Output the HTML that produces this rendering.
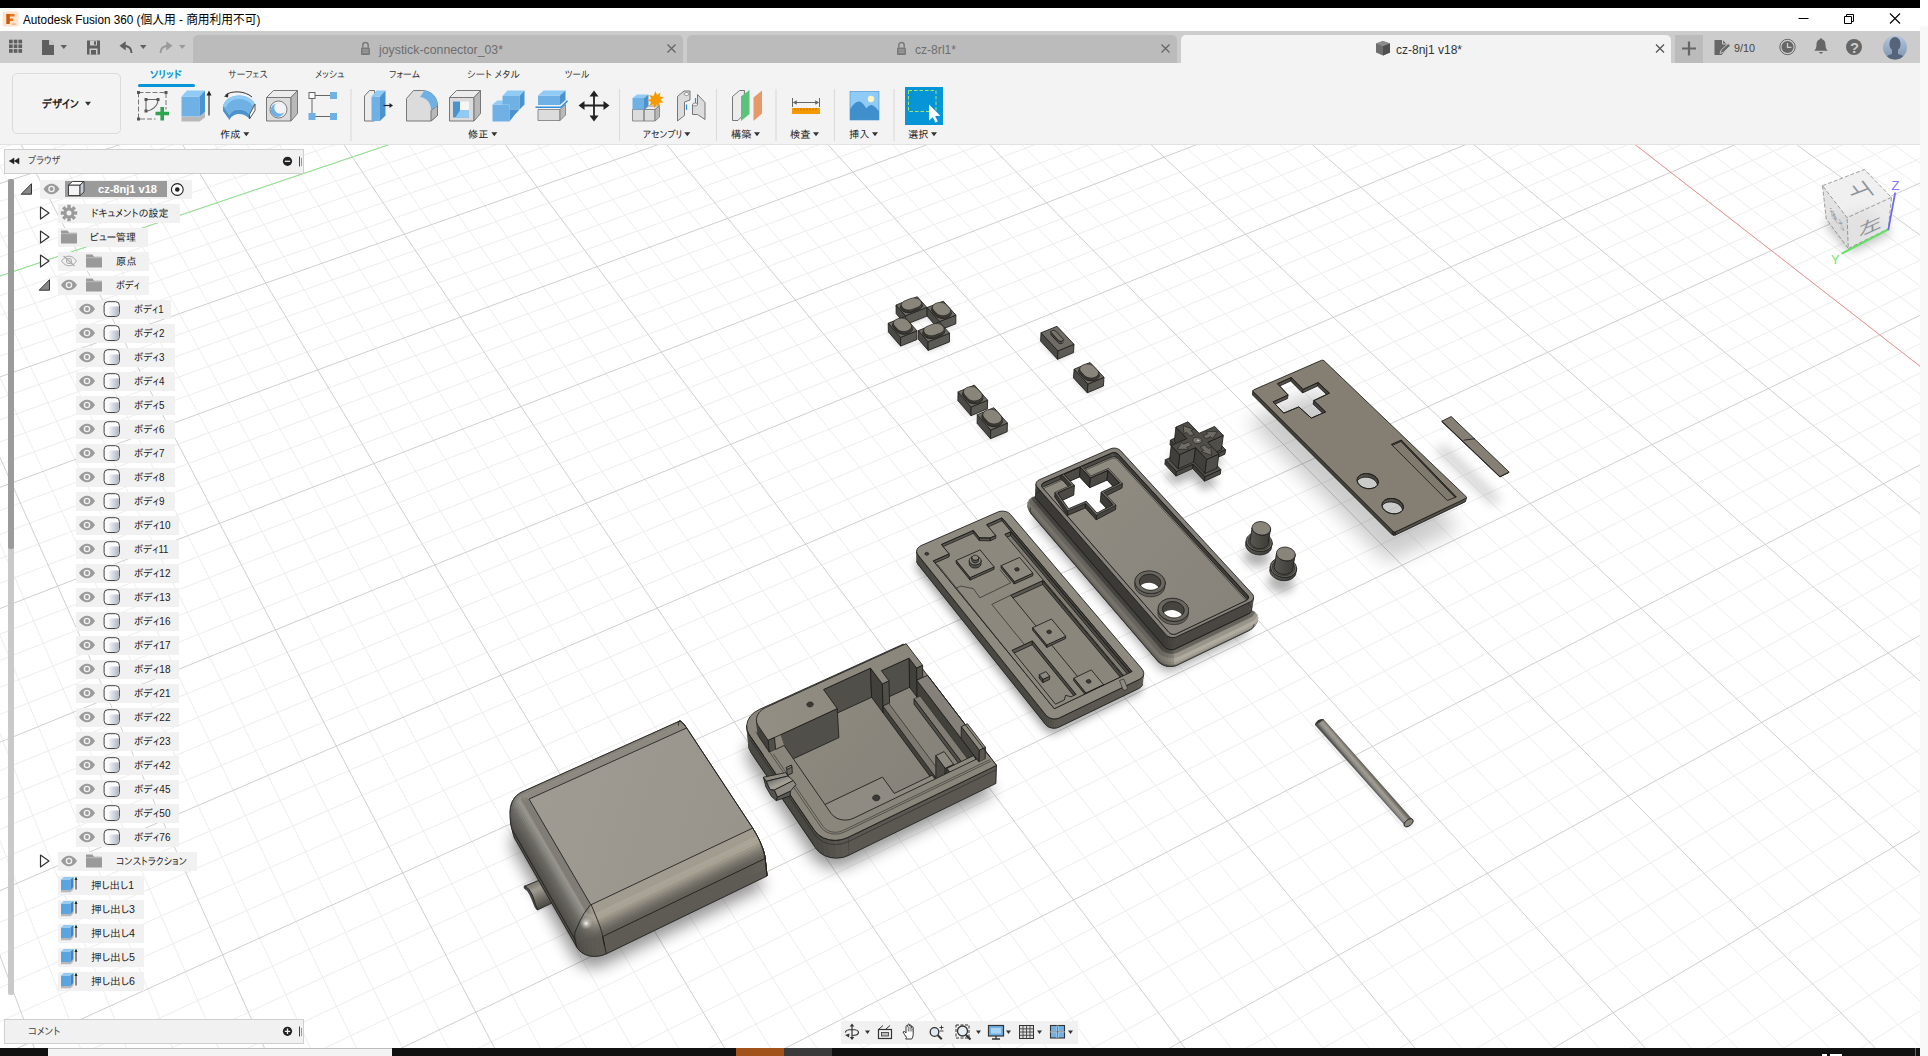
<!DOCTYPE html>
<html lang="ja"><head><meta charset="utf-8"><title>Autodesk Fusion 360</title>
<style>
html,body{margin:0;padding:0;background:#fff;}
body{width:1928px;height:1056px;position:relative;overflow:hidden;font-family:"Liberation Sans","IPAPGothic","IPAGothic","Noto Sans CJK JP",sans-serif;}
.b{position:absolute;display:block;}
.t{position:absolute;white-space:pre;transform-origin:0 50%;}
</style></head>
<body>
<svg class="b" style="left:0;top:145px" width="1920" height="903" viewBox="0 145 1920 903"><rect x="0" y="145" width="1920" height="903" fill="#fff"/><path d="M-332.2 218.9L1316.5 -298.2M-326.7 234.8L1329.7 -289.0M-321.2 250.9L1343.2 -279.6M-315.5 267.3L1356.8 -270.1M-304.0 300.7L1384.4 -250.9M-298.1 317.8L1398.5 -241.1M-292.1 335.1L1412.7 -231.2M-286.0 352.7L1427.1 -221.1M-273.6 388.8L1456.3 -200.7M-267.2 407.2L1471.2 -190.4M-260.7 426.0L1486.3 -179.9M-254.2 445.0L1501.5 -169.2M-240.7 484.0L1532.5 -147.6M-233.8 503.9L1548.3 -136.6M-226.8 524.2L1564.3 -125.5M-219.7 544.8L1580.5 -114.2M-205.1 587.1L1613.5 -91.2M-197.6 608.8L1630.2 -79.5M-190.0 630.9L1647.2 -67.7M-182.3 653.3L1664.4 -55.7M-166.4 699.3L1699.5 -31.2M-158.2 723.0L1717.4 -18.7M-149.9 747.0L1735.5 -6.1M-141.5 771.5L1753.9 6.7M-124.1 821.8L1791.3 32.7M-115.2 847.7L1810.3 46.0M-106.1 874.0L1829.7 59.5M-96.8 900.8L1849.3 73.2M-77.8 956.1L1889.2 101.0M-67.9 984.5L1909.6 115.3M-57.9 1013.4L1930.3 129.7M-47.8 1043.0L1951.3 144.3M-26.7 1103.8L1994.1 174.1M-15.9 1135.2L2016.0 189.4M-4.9 1167.2L2038.1 204.8M6.4 1199.9L2060.6 220.5M29.7 1267.3L2106.6 252.6M41.7 1302.1L2130.1 269.0M54.0 1337.6L2154.0 285.6M66.5 1374.0L2178.2 302.5M92.4 1449.1L2227.7 337.0M105.8 1487.9L2253.0 354.6M119.5 1527.6L2278.7 372.5M133.6 1568.2L2304.8 390.7M162.6 1652.4L2358.2 428.0M177.7 1696.0L2385.6 447.1M193.1 1740.7L2413.4 466.4M208.9 1786.5L2441.6 486.1M241.7 1881.5L2499.5 526.5M258.7 1930.8L2529.2 547.1M276.2 1981.4L2559.3 568.2M294.1 2033.3L2590.0 589.5M331.4 2141.4L2652.9 633.4M-335.6 233.9L314.0 2137.0M-305.3 224.4L364.9 2104.1M-245.7 205.6L464.2 2039.8M-216.2 196.3L512.7 2008.5M-187.0 187.0L560.4 1977.6M-158.1 177.9L607.4 1947.2M-100.9 159.9L699.3 1887.7M-72.6 150.9L744.2 1858.6M-44.6 142.1L788.4 1830.0M-16.9 133.3L832.0 1801.8M38.0 116.0L917.2 1746.7M65.1 107.5L958.9 1719.7M92.0 99.0L1000.0 1693.1M118.6 90.6L1040.5 1666.9M171.3 73.9L1119.8 1615.5M197.3 65.7L1158.6 1590.4M223.1 57.6L1196.9 1565.6M248.7 49.5L1234.7 1541.2M299.3 33.5L1308.7 1493.3M324.3 25.6L1344.9 1469.9M349.1 17.8L1380.6 1446.8M373.8 10.0L1415.9 1423.9M422.4 -5.3L1485.1 1379.2M446.5 -12.9L1519.0 1357.2M470.3 -20.5L1552.4 1335.6M494.0 -28.0L1585.5 1314.2M540.9 -42.7L1650.2 1272.3M564.0 -50.0L1682.0 1251.7M587.0 -57.3L1713.4 1231.4M609.8 -64.5L1744.4 1211.3M654.9 -78.7L1805.2 1172.0M677.2 -85.8L1835.1 1152.7M699.3 -92.8L1864.6 1133.6M721.3 -99.7L1893.7 1114.7M764.8 -113.4L1951.0 1077.7M786.3 -120.2L1979.1 1059.5M807.6 -126.9L2006.8 1041.5M828.8 -133.6L2034.3 1023.8M870.7 -146.9L2088.2 988.9M891.4 -153.4L2114.7 971.7M912.0 -159.9L2140.9 954.8M932.4 -166.4L2166.8 938.0M972.9 -179.1L2217.7 905.1M992.9 -185.4L2242.7 888.9M1012.8 -191.7L2267.5 872.9M1032.5 -197.9L2291.9 857.0M1071.5 -210.3L2340.1 825.9M1090.9 -216.4L2363.8 810.5M1110.1 -222.4L2387.2 795.4M1129.1 -228.4L2410.3 780.4M1166.9 -240.3L2455.9 750.9M1185.5 -246.2L2478.4 736.4M1204.1 -252.1L2500.5 722.0M1222.5 -257.9L2522.5 707.8M1259.0 -269.4L2565.7 679.8M1277.0 -275.1L2587.0 666.1M1295.0 -280.8L2608.1 652.4M1312.8 -286.4L2628.9 638.9" stroke="#ebebeb" stroke-width="0.9" fill="none"/><path d="M-309.8 283.9L1370.5 -260.6M-279.8 370.6L1441.6 -211.0M-247.5 464.3L1516.9 -158.5M-212.5 565.8L1596.9 -102.8M-174.4 676.1L1681.9 -43.5M-132.9 796.4L1772.4 19.6M-87.4 928.2L1869.1 87.0M-37.4 1073.1L1972.5 159.1M17.9 1233.2L2083.5 236.4M79.3 1411.1L2202.7 319.6M147.9 1609.8L2331.3 409.2M225.1 1833.4L2470.3 506.1M312.5 2086.6L2621.2 611.3M-275.4 214.9L414.9 2071.7M-129.3 168.8L653.7 1917.2M10.7 124.6L874.9 1774.0M145.1 82.2L1080.4 1641.0M274.1 41.5L1271.9 1517.1M398.2 2.3L1450.7 1401.4M517.5 -35.4L1618.1 1293.1M632.4 -71.6L1775.0 1191.5M743.1 -106.6L1922.5 1096.1M849.8 -140.3L2061.4 1006.2M952.7 -172.8L2192.4 921.4M1052.1 -204.1L2316.1 841.4M1148.1 -234.4L2433.3 765.6M1240.8 -263.7L2544.2 693.7M1330.5 -292.0L2649.5 625.6" stroke="#cccccc" stroke-width="0.95" fill="none"/><path d="M-279.8 370.6L1257.9 -148.9" stroke="#88e888" stroke-width="0.95"/><path d="M1257.9 -148.9L2433.3 765.6" stroke="#f49494" stroke-width="0.95"/><defs><filter id="bl2" x="-30%" y="-30%" width="160%" height="160%"><feGaussianBlur stdDeviation="2"/></filter><filter id="bl3" x="-30%" y="-30%" width="160%" height="160%"><feGaussianBlur stdDeviation="3"/></filter><filter id="bl4" x="-30%" y="-30%" width="160%" height="160%"><feGaussianBlur stdDeviation="4"/></filter><filter id="bl5" x="-30%" y="-30%" width="160%" height="160%"><feGaussianBlur stdDeviation="5"/></filter><filter id="bl6" x="-30%" y="-30%" width="160%" height="160%"><feGaussianBlur stdDeviation="6"/></filter><filter id="bl7" x="-30%" y="-30%" width="160%" height="160%"><feGaussianBlur stdDeviation="7"/></filter><filter id="bl8" x="-30%" y="-30%" width="160%" height="160%"><feGaussianBlur stdDeviation="8"/></filter><filter id="bl9" x="-30%" y="-30%" width="160%" height="160%"><feGaussianBlur stdDeviation="9"/></filter><filter id="bl10" x="-30%" y="-30%" width="160%" height="160%"><feGaussianBlur stdDeviation="10"/></filter><filter id="bl11" x="-30%" y="-30%" width="160%" height="160%"><feGaussianBlur stdDeviation="11"/></filter><filter id="bl12" x="-30%" y="-30%" width="160%" height="160%"><feGaussianBlur stdDeviation="12"/></filter><filter id="bl13" x="-30%" y="-30%" width="160%" height="160%"><feGaussianBlur stdDeviation="13"/></filter></defs><path d="M896.2 313.7L917.4 305.4L926.9 316.1L905.7 324.5ZM927.2 316.2L943.3 309.8L955.8 323.8L939.6 330.2ZM888.4 331.9L904.8 325.5L917.0 339.5L900.6 346.1ZM918.4 339.3L939.6 330.8L949.5 341.9L928.2 350.4ZM957.9 400.6L974.3 393.8L987.4 408.8L971.0 415.7ZM977.1 423.3L993.7 416.4L1007.2 431.7L990.5 438.7ZM1073.5 377.9L1089.5 371.2L1103.4 386.0L1087.3 392.8ZM1040.6 341.1L1056.6 334.6L1073.5 352.6L1057.5 359.3Z" fill="#000" opacity="0.25" filter="url(#bl3)"/><path d="M1247.8 420.6L1317.7 389.8L1459.5 527.6L1387.5 562.3Z" fill="#000" opacity="0.2" filter="url(#bl10)"/><path d="M1435.1 449.6L1444.4 444.8L1501.3 500.2L1492.3 504.8Z" fill="#000" opacity="0.2" filter="url(#bl6)"/><path d="M905.7 324.5L896.2 313.7L896.0 305.0L905.5 315.8Z" fill="#4a4945" stroke="#1c1c1a" stroke-width="0.85" stroke-linejoin="round"/><path d="M926.9 316.1L905.7 324.5L905.5 315.8L926.8 307.4Z" fill="#5c5a54" stroke="#1c1c1a" stroke-width="0.85" stroke-linejoin="round"/><path d="M896.0 305.0L917.3 296.7L926.8 307.4L905.5 315.8Z" fill="#6f6c65" fill-rule="evenodd" stroke="#1c1c1a" stroke-width="0.85" stroke-linejoin="round"/><path d="M922.3 305.7L921.7 307.3L921.7 306.6L922.3 305.1Z" fill="#474641" stroke="#474641" stroke-width="0.6" stroke-linejoin="round"/><path d="M922.3 305.7L921.7 307.3M921.7 306.6L922.3 305.1" stroke="#1c1c1a" stroke-width="0.5" fill="none"/><path d="M900.7 308.3L900.6 306.7L900.6 306.0L900.7 307.6Z" fill="#3c3b37" stroke="#3c3b37" stroke-width="0.6" stroke-linejoin="round"/><path d="M900.7 308.3L900.6 306.7M900.6 306.0L900.7 307.6" stroke="#1c1c1a" stroke-width="0.5" fill="none"/><path d="M921.7 307.3L920.4 308.7L920.4 308.0L921.7 306.6Z" fill="#45443f" stroke="#45443f" stroke-width="0.6" stroke-linejoin="round"/><path d="M921.7 307.3L920.4 308.7M920.4 308.0L921.7 306.6" stroke="#1c1c1a" stroke-width="0.5" fill="none"/><path d="M901.6 309.8L900.7 308.3L900.7 307.6L901.6 309.2Z" fill="#383733" stroke="#383733" stroke-width="0.6" stroke-linejoin="round"/><path d="M901.6 309.8L900.7 308.3M900.7 307.6L901.6 309.2" stroke="#1c1c1a" stroke-width="0.5" fill="none"/><path d="M920.4 308.7L918.5 309.7L918.5 309.0L920.4 308.0Z" fill="#44433e" stroke="#44433e" stroke-width="0.6" stroke-linejoin="round"/><path d="M920.4 308.7L918.5 309.7M918.5 309.0L920.4 308.0" stroke="#1c1c1a" stroke-width="0.5" fill="none"/><path d="M901.9 310.2L901.6 309.8L901.6 309.2L901.9 309.5Z" fill="#373632" stroke="#373632" stroke-width="0.6" stroke-linejoin="round"/><path d="M901.9 310.2L901.6 309.8M901.6 309.2L901.9 309.5" stroke="#1c1c1a" stroke-width="0.5" fill="none"/><path d="M903.5 311.5L901.9 310.2L901.9 309.5L903.5 310.8Z" fill="#373633" stroke="#373633" stroke-width="0.6" stroke-linejoin="round"/><path d="M903.5 311.5L901.9 310.2M901.9 309.5L903.5 310.8" stroke="#1c1c1a" stroke-width="0.5" fill="none"/><path d="M918.5 309.7L912.6 312.0L912.6 311.3L918.5 309.0Z" fill="#44433e" stroke="#44433e" stroke-width="0.6" stroke-linejoin="round"/><path d="M918.5 309.7L912.6 312.0M912.6 311.3L918.5 309.0" stroke="#1c1c1a" stroke-width="0.5" fill="none"/><path d="M905.5 312.3L903.5 311.5L903.5 310.8L905.5 311.7Z" fill="#3a3935" stroke="#3a3935" stroke-width="0.6" stroke-linejoin="round"/><path d="M905.5 312.3L903.5 311.5M903.5 310.8L905.5 311.7" stroke="#1c1c1a" stroke-width="0.5" fill="none"/><path d="M912.6 312.0L910.4 312.6L910.3 312.0L912.6 311.3Z" fill="#44423e" stroke="#44423e" stroke-width="0.6" stroke-linejoin="round"/><path d="M912.6 312.0L910.4 312.6M910.3 312.0L912.6 311.3" stroke="#1c1c1a" stroke-width="0.5" fill="none"/><path d="M907.9 312.7L905.5 312.3L905.5 311.7L907.9 312.1Z" fill="#3d3c38" stroke="#3d3c38" stroke-width="0.6" stroke-linejoin="round"/><path d="M907.9 312.7L905.5 312.3M905.5 311.7L907.9 312.1" stroke="#1c1c1a" stroke-width="0.5" fill="none"/><path d="M910.4 312.6L907.9 312.7L907.9 312.1L910.3 312.0Z" fill="#41403c" stroke="#41403c" stroke-width="0.6" stroke-linejoin="round"/><path d="M910.4 312.6L907.9 312.7M907.9 312.1L910.3 312.0" stroke="#1c1c1a" stroke-width="0.5" fill="none"/><path d="M910.2 299.8L912.5 299.2L914.9 299.1L917.3 299.5L919.3 300.3L920.9 301.6L921.2 301.9L922.1 303.4L922.3 305.1L921.7 306.6L920.4 308.0L918.5 309.0L912.6 311.3L910.3 312.0L907.9 312.1L905.5 311.7L903.5 310.8L901.9 309.5L901.6 309.2L900.7 307.6L900.6 306.0L901.2 304.4L902.5 303.1L904.4 302.0Z" fill="#5a5852" fill-rule="evenodd" stroke="#1c1c1a" stroke-width="0.5" stroke-linejoin="round"/><path d="M921.5 305.1L920.9 306.5L920.9 305.0L921.5 303.5Z" fill="#504e48" stroke="#504e48" stroke-width="0.6" stroke-linejoin="round"/><path d="M921.5 305.1L920.9 306.5M920.9 305.0L921.5 303.5" stroke="#1c1c1a" stroke-width="0.5" fill="none"/><path d="M901.5 307.5L901.4 306.0L901.3 304.4L901.5 305.9Z" fill="#44423d" stroke="#44423d" stroke-width="0.6" stroke-linejoin="round"/><path d="M901.5 307.5L901.4 306.0M901.3 304.4L901.5 305.9" stroke="#1c1c1a" stroke-width="0.5" fill="none"/><path d="M920.9 306.5L919.7 307.8L919.7 306.2L920.9 305.0Z" fill="#4e4c46" stroke="#4e4c46" stroke-width="0.6" stroke-linejoin="round"/><path d="M920.9 306.5L919.7 307.8M919.7 306.2L920.9 305.0" stroke="#1c1c1a" stroke-width="0.5" fill="none"/><path d="M902.3 308.9L901.5 307.5L901.5 305.9L902.3 307.3Z" fill="#3f3d39" stroke="#3f3d39" stroke-width="0.6" stroke-linejoin="round"/><path d="M902.3 308.9L901.5 307.5M901.5 305.9L902.3 307.3" stroke="#1c1c1a" stroke-width="0.5" fill="none"/><path d="M919.7 307.8L917.9 308.8L917.9 307.2L919.7 306.2Z" fill="#4c4a45" stroke="#4c4a45" stroke-width="0.6" stroke-linejoin="round"/><path d="M919.7 307.8L917.9 308.8M917.9 307.2L919.7 306.2" stroke="#1c1c1a" stroke-width="0.5" fill="none"/><path d="M902.6 309.2L902.3 308.9L902.3 307.3L902.6 307.6Z" fill="#3e3c38" stroke="#3e3c38" stroke-width="0.6" stroke-linejoin="round"/><path d="M902.6 309.2L902.3 308.9M902.3 307.3L902.6 307.6" stroke="#1c1c1a" stroke-width="0.5" fill="none"/><path d="M904.0 310.4L902.6 309.2L902.6 307.6L904.0 308.8Z" fill="#3e3d38" stroke="#3e3d38" stroke-width="0.6" stroke-linejoin="round"/><path d="M904.0 310.4L902.6 309.2M902.6 307.6L904.0 308.8" stroke="#1c1c1a" stroke-width="0.5" fill="none"/><path d="M917.9 308.8L912.5 310.9L912.5 309.3L917.9 307.2Z" fill="#4c4a45" stroke="#4c4a45" stroke-width="0.6" stroke-linejoin="round"/><path d="M917.9 308.8L912.5 310.9M912.5 309.3L917.9 307.2" stroke="#1c1c1a" stroke-width="0.5" fill="none"/><path d="M906.0 311.2L904.0 310.4L904.0 308.8L905.9 309.6Z" fill="#413f3b" stroke="#413f3b" stroke-width="0.6" stroke-linejoin="round"/><path d="M906.0 311.2L904.0 310.4M904.0 308.8L905.9 309.6" stroke="#1c1c1a" stroke-width="0.5" fill="none"/><path d="M912.5 310.9L910.4 311.5L910.4 309.9L912.5 309.3Z" fill="#4c4a45" stroke="#4c4a45" stroke-width="0.6" stroke-linejoin="round"/><path d="M912.5 310.9L910.4 311.5M910.4 309.9L912.5 309.3" stroke="#1c1c1a" stroke-width="0.5" fill="none"/><path d="M908.2 311.6L906.0 311.2L905.9 309.6L908.1 310.0Z" fill="#45433f" stroke="#45433f" stroke-width="0.6" stroke-linejoin="round"/><path d="M908.2 311.6L906.0 311.2M905.9 309.6L908.1 310.0" stroke="#1c1c1a" stroke-width="0.5" fill="none"/><path d="M910.4 311.5L908.2 311.6L908.1 310.0L910.4 309.9Z" fill="#494742" stroke="#494742" stroke-width="0.6" stroke-linejoin="round"/><path d="M910.4 311.5L908.2 311.6M908.1 310.0L910.4 309.9" stroke="#1c1c1a" stroke-width="0.5" fill="none"/><path d="M910.3 298.6L912.4 298.0L914.7 297.9L916.8 298.3L918.7 299.1L920.2 300.3L920.5 300.6L921.3 302.0L921.5 303.5L920.9 305.0L919.7 306.2L917.9 307.2L912.5 309.3L910.4 309.9L908.1 310.0L905.9 309.6L904.0 308.8L902.6 307.6L902.3 307.3L901.5 305.9L901.3 304.4L901.9 302.9L903.1 301.7L904.9 300.7Z" fill="#8a857a" fill-rule="evenodd" stroke="#1c1c1a" stroke-width="0.6" stroke-linejoin="round"/><path d="M939.6 330.2L927.2 316.2L927.1 307.5L939.6 321.5Z" fill="#4a4945" stroke="#1c1c1a" stroke-width="0.85" stroke-linejoin="round"/><path d="M955.8 323.8L939.6 330.2L939.6 321.5L955.9 315.1Z" fill="#5c5a54" stroke="#1c1c1a" stroke-width="0.85" stroke-linejoin="round"/><path d="M927.1 307.5L943.3 301.2L955.9 315.1L939.6 321.5Z" fill="#6f6c65" fill-rule="evenodd" stroke="#1c1c1a" stroke-width="0.85" stroke-linejoin="round"/><path d="M931.9 310.7L931.7 309.1L931.7 308.4L931.9 310.0Z" fill="#3c3b37" stroke="#3c3b37" stroke-width="0.6" stroke-linejoin="round"/><path d="M931.9 310.7L931.7 309.1M931.7 308.4L931.9 310.0" stroke="#1c1c1a" stroke-width="0.5" fill="none"/><path d="M932.8 312.2L931.9 310.7L931.9 310.0L932.8 311.5Z" fill="#383733" stroke="#383733" stroke-width="0.6" stroke-linejoin="round"/><path d="M932.8 312.2L931.9 310.7M931.9 310.0L932.8 311.5" stroke="#1c1c1a" stroke-width="0.5" fill="none"/><path d="M936.1 315.9L932.8 312.2L932.8 311.5L936.1 315.3Z" fill="#373632" stroke="#373632" stroke-width="0.6" stroke-linejoin="round"/><path d="M936.1 315.9L932.8 312.2M932.8 311.5L936.1 315.3" stroke="#1c1c1a" stroke-width="0.5" fill="none"/><path d="M951.2 313.5L950.6 315.1L950.6 314.4L951.2 312.9Z" fill="#474641" stroke="#474641" stroke-width="0.6" stroke-linejoin="round"/><path d="M951.2 313.5L950.6 315.1M950.6 314.4L951.2 312.9" stroke="#1c1c1a" stroke-width="0.5" fill="none"/><path d="M950.6 315.1L949.3 316.5L949.3 315.8L950.6 314.4Z" fill="#45443f" stroke="#45443f" stroke-width="0.6" stroke-linejoin="round"/><path d="M950.6 315.1L949.3 316.5M949.3 315.8L950.6 314.4" stroke="#1c1c1a" stroke-width="0.5" fill="none"/><path d="M937.7 317.2L936.1 315.9L936.1 315.3L937.7 316.5Z" fill="#373633" stroke="#373633" stroke-width="0.6" stroke-linejoin="round"/><path d="M937.7 317.2L936.1 315.9M936.1 315.3L937.7 316.5" stroke="#1c1c1a" stroke-width="0.5" fill="none"/><path d="M949.3 316.5L947.5 317.5L947.5 316.9L949.3 315.8Z" fill="#44433e" stroke="#44433e" stroke-width="0.6" stroke-linejoin="round"/><path d="M949.3 316.5L947.5 317.5M947.5 316.9L949.3 315.8" stroke="#1c1c1a" stroke-width="0.5" fill="none"/><path d="M947.5 317.5L946.9 317.8L946.9 317.1L947.5 316.9Z" fill="#44433e" stroke="#44433e" stroke-width="0.6" stroke-linejoin="round"/><path d="M947.5 317.5L946.9 317.8M946.9 317.1L947.5 316.9" stroke="#1c1c1a" stroke-width="0.5" fill="none"/><path d="M939.8 318.1L937.7 317.2L937.7 316.5L939.8 317.4Z" fill="#3a3935" stroke="#3a3935" stroke-width="0.6" stroke-linejoin="round"/><path d="M939.8 318.1L937.7 317.2M937.7 316.5L939.8 317.4" stroke="#1c1c1a" stroke-width="0.5" fill="none"/><path d="M946.9 317.8L944.6 318.4L944.6 317.7L946.9 317.1Z" fill="#44423e" stroke="#44423e" stroke-width="0.6" stroke-linejoin="round"/><path d="M946.9 317.8L944.6 318.4M944.6 317.7L946.9 317.1" stroke="#1c1c1a" stroke-width="0.5" fill="none"/><path d="M942.2 318.5L939.8 318.1L939.8 317.4L942.2 317.8Z" fill="#3d3c38" stroke="#3d3c38" stroke-width="0.6" stroke-linejoin="round"/><path d="M942.2 318.5L939.8 318.1M939.8 317.4L942.2 317.8" stroke="#1c1c1a" stroke-width="0.5" fill="none"/><path d="M944.6 318.4L942.2 318.5L942.2 317.8L944.6 317.7Z" fill="#41403c" stroke="#41403c" stroke-width="0.6" stroke-linejoin="round"/><path d="M944.6 318.4L942.2 318.5M942.2 317.8L944.6 317.7" stroke="#1c1c1a" stroke-width="0.5" fill="none"/><path d="M936.1 304.2L938.4 303.6L940.8 303.5L943.2 303.9L945.2 304.8L946.8 306.0L950.1 309.7L951.1 311.2L951.2 312.9L950.6 314.4L949.3 315.8L947.5 316.9L946.9 317.1L944.6 317.7L942.2 317.8L939.8 317.4L937.7 316.5L936.1 315.3L932.8 311.5L931.9 310.0L931.7 308.4L932.3 306.8L933.6 305.4L935.5 304.4Z" fill="#5a5852" fill-rule="evenodd" stroke="#1c1c1a" stroke-width="0.5" stroke-linejoin="round"/><path d="M932.6 310.1L932.5 308.6L932.4 307.0L932.6 308.5Z" fill="#44423d" stroke="#44423d" stroke-width="0.6" stroke-linejoin="round"/><path d="M932.6 310.1L932.5 308.6M932.4 307.0L932.6 308.5" stroke="#1c1c1a" stroke-width="0.5" fill="none"/><path d="M933.4 311.5L932.6 310.1L932.6 308.5L933.4 309.9Z" fill="#3f3d39" stroke="#3f3d39" stroke-width="0.6" stroke-linejoin="round"/><path d="M933.4 311.5L932.6 310.1M932.6 308.5L933.4 309.9" stroke="#1c1c1a" stroke-width="0.5" fill="none"/><path d="M936.5 314.9L933.4 311.5L933.4 309.9L936.5 313.3Z" fill="#3e3c38" stroke="#3e3c38" stroke-width="0.6" stroke-linejoin="round"/><path d="M936.5 314.9L933.4 311.5M933.4 309.9L936.5 313.3" stroke="#1c1c1a" stroke-width="0.5" fill="none"/><path d="M950.5 312.7L950.0 314.2L950.0 312.6L950.5 311.1Z" fill="#504e48" stroke="#504e48" stroke-width="0.6" stroke-linejoin="round"/><path d="M950.5 312.7L950.0 314.2M950.0 312.6L950.5 311.1" stroke="#1c1c1a" stroke-width="0.5" fill="none"/><path d="M950.0 314.2L948.8 315.4L948.8 313.8L950.0 312.6Z" fill="#4e4c46" stroke="#4e4c46" stroke-width="0.6" stroke-linejoin="round"/><path d="M950.0 314.2L948.8 315.4M948.8 313.8L950.0 312.6" stroke="#1c1c1a" stroke-width="0.5" fill="none"/><path d="M938.0 316.1L936.5 314.9L936.5 313.3L938.0 314.5Z" fill="#3e3d38" stroke="#3e3d38" stroke-width="0.6" stroke-linejoin="round"/><path d="M938.0 316.1L936.5 314.9M936.5 313.3L938.0 314.5" stroke="#1c1c1a" stroke-width="0.5" fill="none"/><path d="M948.8 315.4L947.0 316.4L947.0 314.8L948.8 313.8Z" fill="#4c4a45" stroke="#4c4a45" stroke-width="0.6" stroke-linejoin="round"/><path d="M948.8 315.4L947.0 316.4M947.0 314.8L948.8 313.8" stroke="#1c1c1a" stroke-width="0.5" fill="none"/><path d="M947.0 316.4L946.5 316.6L946.5 315.0L947.0 314.8Z" fill="#4c4a45" stroke="#4c4a45" stroke-width="0.6" stroke-linejoin="round"/><path d="M947.0 316.4L946.5 316.6M946.5 315.0L947.0 314.8" stroke="#1c1c1a" stroke-width="0.5" fill="none"/><path d="M939.9 316.9L938.0 316.1L938.0 314.5L939.9 315.3Z" fill="#413f3b" stroke="#413f3b" stroke-width="0.6" stroke-linejoin="round"/><path d="M939.9 316.9L938.0 316.1M938.0 314.5L939.9 315.3" stroke="#1c1c1a" stroke-width="0.5" fill="none"/><path d="M946.5 316.6L944.4 317.2L944.4 315.6L946.5 315.0Z" fill="#4c4a45" stroke="#4c4a45" stroke-width="0.6" stroke-linejoin="round"/><path d="M946.5 316.6L944.4 317.2M944.4 315.6L946.5 315.0" stroke="#1c1c1a" stroke-width="0.5" fill="none"/><path d="M942.1 317.3L939.9 316.9L939.9 315.3L942.1 315.7Z" fill="#45433f" stroke="#45433f" stroke-width="0.6" stroke-linejoin="round"/><path d="M942.1 317.3L939.9 316.9M939.9 315.3L942.1 315.7" stroke="#1c1c1a" stroke-width="0.5" fill="none"/><path d="M944.4 317.2L942.1 317.3L942.1 315.7L944.4 315.6Z" fill="#494742" stroke="#494742" stroke-width="0.6" stroke-linejoin="round"/><path d="M944.4 317.2L942.1 317.3M942.1 315.7L944.4 315.6" stroke="#1c1c1a" stroke-width="0.5" fill="none"/><path d="M936.5 303.1L938.6 302.5L940.8 302.4L943.0 302.8L945.0 303.6L946.4 304.8L949.5 308.2L950.4 309.6L950.5 311.1L950.0 312.6L948.8 313.8L947.0 314.8L946.5 315.0L944.4 315.6L942.1 315.7L939.9 315.3L938.0 314.5L936.5 313.3L933.4 309.9L932.6 308.5L932.4 307.0L933.0 305.5L934.2 304.2L936.0 303.3Z" fill="#8a857a" fill-rule="evenodd" stroke="#1c1c1a" stroke-width="0.6" stroke-linejoin="round"/><path d="M900.6 346.1L888.4 331.9L888.2 323.2L900.5 337.4Z" fill="#4a4945" stroke="#1c1c1a" stroke-width="0.85" stroke-linejoin="round"/><path d="M917.0 339.5L900.6 346.1L900.5 337.4L916.9 330.8Z" fill="#5c5a54" stroke="#1c1c1a" stroke-width="0.85" stroke-linejoin="round"/><path d="M888.2 323.2L904.6 316.8L916.9 330.8L900.5 337.4Z" fill="#6f6c65" fill-rule="evenodd" stroke="#1c1c1a" stroke-width="0.85" stroke-linejoin="round"/><path d="M892.9 326.5L892.8 324.8L892.8 324.1L892.9 325.8Z" fill="#3c3b37" stroke="#3c3b37" stroke-width="0.6" stroke-linejoin="round"/><path d="M892.9 326.5L892.8 324.8M892.8 324.1L892.9 325.8" stroke="#1c1c1a" stroke-width="0.5" fill="none"/><path d="M893.8 328.0L892.9 326.5L892.9 325.8L893.8 327.3Z" fill="#383733" stroke="#383733" stroke-width="0.6" stroke-linejoin="round"/><path d="M893.8 328.0L892.9 326.5M892.9 325.8L893.8 327.3" stroke="#1c1c1a" stroke-width="0.5" fill="none"/><path d="M897.0 331.7L893.8 328.0L893.8 327.3L897.0 331.0Z" fill="#373632" stroke="#373632" stroke-width="0.6" stroke-linejoin="round"/><path d="M897.0 331.7L893.8 328.0M893.8 327.3L897.0 331.0" stroke="#1c1c1a" stroke-width="0.5" fill="none"/><path d="M912.3 329.2L911.7 330.9L911.7 330.2L912.3 328.6Z" fill="#474641" stroke="#474641" stroke-width="0.6" stroke-linejoin="round"/><path d="M912.3 329.2L911.7 330.9M911.7 330.2L912.3 328.6" stroke="#1c1c1a" stroke-width="0.5" fill="none"/><path d="M911.7 330.9L910.3 332.3L910.3 331.6L911.7 330.2Z" fill="#45443f" stroke="#45443f" stroke-width="0.6" stroke-linejoin="round"/><path d="M911.7 330.9L910.3 332.3M910.3 331.6L911.7 330.2" stroke="#1c1c1a" stroke-width="0.5" fill="none"/><path d="M898.6 333.0L897.0 331.7L897.0 331.0L898.6 332.3Z" fill="#373633" stroke="#373633" stroke-width="0.6" stroke-linejoin="round"/><path d="M898.6 333.0L897.0 331.7M897.0 331.0L898.6 332.3" stroke="#1c1c1a" stroke-width="0.5" fill="none"/><path d="M910.3 332.3L908.4 333.3L908.4 332.6L910.3 331.6Z" fill="#44433e" stroke="#44433e" stroke-width="0.6" stroke-linejoin="round"/><path d="M910.3 332.3L908.4 333.3M908.4 332.6L910.3 331.6" stroke="#1c1c1a" stroke-width="0.5" fill="none"/><path d="M900.7 333.9L898.6 333.0L898.6 332.3L900.7 333.2Z" fill="#3a3935" stroke="#3a3935" stroke-width="0.6" stroke-linejoin="round"/><path d="M900.7 333.9L898.6 333.0M898.6 332.3L900.7 333.2" stroke="#1c1c1a" stroke-width="0.5" fill="none"/><path d="M908.4 333.3L907.9 333.5L907.8 332.9L908.4 332.6Z" fill="#44433e" stroke="#44433e" stroke-width="0.6" stroke-linejoin="round"/><path d="M908.4 333.3L907.9 333.5M907.8 332.9L908.4 332.6" stroke="#1c1c1a" stroke-width="0.5" fill="none"/><path d="M907.9 333.5L905.6 334.2L905.5 333.5L907.8 332.9Z" fill="#44423e" stroke="#44423e" stroke-width="0.6" stroke-linejoin="round"/><path d="M907.9 333.5L905.6 334.2M905.5 333.5L907.8 332.9" stroke="#1c1c1a" stroke-width="0.5" fill="none"/><path d="M903.1 334.3L900.7 333.9L900.7 333.2L903.1 333.6Z" fill="#3d3c38" stroke="#3d3c38" stroke-width="0.6" stroke-linejoin="round"/><path d="M903.1 334.3L900.7 333.9M900.7 333.2L903.1 333.6" stroke="#1c1c1a" stroke-width="0.5" fill="none"/><path d="M905.6 334.2L903.1 334.3L903.1 333.6L905.5 333.5Z" fill="#41403c" stroke="#41403c" stroke-width="0.6" stroke-linejoin="round"/><path d="M905.6 334.2L903.1 334.3M903.1 333.6L905.5 333.5" stroke="#1c1c1a" stroke-width="0.5" fill="none"/><path d="M897.2 319.9L899.5 319.2L902.0 319.1L904.4 319.5L906.5 320.4L908.0 321.7L911.2 325.4L912.1 326.9L912.3 328.6L911.7 330.2L910.3 331.6L908.4 332.6L907.8 332.9L905.5 333.5L903.1 333.6L900.7 333.2L898.6 332.3L897.0 331.0L893.8 327.3L892.9 325.8L892.8 324.1L893.4 322.5L894.8 321.1L896.7 320.1Z" fill="#5a5852" fill-rule="evenodd" stroke="#1c1c1a" stroke-width="0.5" stroke-linejoin="round"/><path d="M893.6 325.8L893.5 324.3L893.5 322.7L893.6 324.2Z" fill="#44423d" stroke="#44423d" stroke-width="0.6" stroke-linejoin="round"/><path d="M893.6 325.8L893.5 324.3M893.5 322.7L893.6 324.2" stroke="#1c1c1a" stroke-width="0.5" fill="none"/><path d="M894.5 327.2L893.6 325.8L893.6 324.2L894.4 325.6Z" fill="#3f3d39" stroke="#3f3d39" stroke-width="0.6" stroke-linejoin="round"/><path d="M894.5 327.2L893.6 325.8M893.6 324.2L894.4 325.6" stroke="#1c1c1a" stroke-width="0.5" fill="none"/><path d="M897.4 330.7L894.5 327.2L894.4 325.6L897.4 329.1Z" fill="#3e3c38" stroke="#3e3c38" stroke-width="0.6" stroke-linejoin="round"/><path d="M897.4 330.7L894.5 327.2M894.4 325.6L897.4 329.1" stroke="#1c1c1a" stroke-width="0.5" fill="none"/><path d="M911.6 328.4L911.0 329.9L911.0 328.3L911.5 326.8Z" fill="#504e48" stroke="#504e48" stroke-width="0.6" stroke-linejoin="round"/><path d="M911.6 328.4L911.0 329.9M911.0 328.3L911.5 326.8" stroke="#1c1c1a" stroke-width="0.5" fill="none"/><path d="M911.0 329.9L909.8 331.2L909.7 329.6L911.0 328.3Z" fill="#4e4c46" stroke="#4e4c46" stroke-width="0.6" stroke-linejoin="round"/><path d="M911.0 329.9L909.8 331.2M909.7 329.6L911.0 328.3" stroke="#1c1c1a" stroke-width="0.5" fill="none"/><path d="M898.9 331.8L897.4 330.7L897.4 329.1L898.9 330.3Z" fill="#3e3d38" stroke="#3e3d38" stroke-width="0.6" stroke-linejoin="round"/><path d="M898.9 331.8L897.4 330.7M897.4 329.1L898.9 330.3" stroke="#1c1c1a" stroke-width="0.5" fill="none"/><path d="M909.8 331.2L908.0 332.2L908.0 330.6L909.7 329.6Z" fill="#4c4a45" stroke="#4c4a45" stroke-width="0.6" stroke-linejoin="round"/><path d="M909.8 331.2L908.0 332.2M908.0 330.6L909.7 329.6" stroke="#1c1c1a" stroke-width="0.5" fill="none"/><path d="M900.8 332.7L898.9 331.8L898.9 330.3L900.8 331.1Z" fill="#413f3b" stroke="#413f3b" stroke-width="0.6" stroke-linejoin="round"/><path d="M900.8 332.7L898.9 331.8M898.9 330.3L900.8 331.1" stroke="#1c1c1a" stroke-width="0.5" fill="none"/><path d="M908.0 332.2L907.5 332.4L907.4 330.8L908.0 330.6Z" fill="#4c4a45" stroke="#4c4a45" stroke-width="0.6" stroke-linejoin="round"/><path d="M908.0 332.2L907.5 332.4M907.4 330.8L908.0 330.6" stroke="#1c1c1a" stroke-width="0.5" fill="none"/><path d="M907.5 332.4L905.3 332.9L905.3 331.4L907.4 330.8Z" fill="#4c4a45" stroke="#4c4a45" stroke-width="0.6" stroke-linejoin="round"/><path d="M907.5 332.4L905.3 332.9M905.3 331.4L907.4 330.8" stroke="#1c1c1a" stroke-width="0.5" fill="none"/><path d="M903.0 333.0L900.8 332.7L900.8 331.1L903.0 331.5Z" fill="#45433f" stroke="#45433f" stroke-width="0.6" stroke-linejoin="round"/><path d="M903.0 333.0L900.8 332.7M900.8 331.1L903.0 331.5" stroke="#1c1c1a" stroke-width="0.5" fill="none"/><path d="M905.3 332.9L903.0 333.0L903.0 331.5L905.3 331.4Z" fill="#494742" stroke="#494742" stroke-width="0.6" stroke-linejoin="round"/><path d="M905.3 332.9L903.0 333.0M903.0 331.5L905.3 331.4" stroke="#1c1c1a" stroke-width="0.5" fill="none"/><path d="M897.6 318.7L899.7 318.2L902.0 318.1L904.2 318.5L906.1 319.3L907.6 320.4L910.6 323.9L911.4 325.3L911.5 326.8L911.0 328.3L909.7 329.6L908.0 330.6L907.4 330.8L905.3 331.4L903.0 331.5L900.8 331.1L898.9 330.3L897.4 329.1L894.4 325.6L893.6 324.2L893.5 322.7L894.1 321.2L895.3 319.9L897.1 319.0Z" fill="#8a857a" fill-rule="evenodd" stroke="#1c1c1a" stroke-width="0.6" stroke-linejoin="round"/><path d="M928.2 350.4L918.4 339.3L918.3 330.6L928.1 341.7Z" fill="#4a4945" stroke="#1c1c1a" stroke-width="0.85" stroke-linejoin="round"/><path d="M949.5 341.9L928.2 350.4L928.1 341.7L949.5 333.2Z" fill="#5c5a54" stroke="#1c1c1a" stroke-width="0.85" stroke-linejoin="round"/><path d="M918.3 330.6L939.6 322.1L949.5 333.2L928.1 341.7Z" fill="#6f6c65" fill-rule="evenodd" stroke="#1c1c1a" stroke-width="0.85" stroke-linejoin="round"/><path d="M944.8 331.5L944.2 333.1L944.2 332.4L944.8 330.8Z" fill="#474641" stroke="#474641" stroke-width="0.6" stroke-linejoin="round"/><path d="M944.8 331.5L944.2 333.1M944.2 332.4L944.8 330.8" stroke="#1c1c1a" stroke-width="0.5" fill="none"/><path d="M923.1 334.0L923.0 332.3L923.0 331.7L923.1 333.3Z" fill="#3c3b37" stroke="#3c3b37" stroke-width="0.6" stroke-linejoin="round"/><path d="M923.1 334.0L923.0 332.3M923.0 331.7L923.1 333.3" stroke="#1c1c1a" stroke-width="0.5" fill="none"/><path d="M944.2 333.1L942.9 334.5L942.9 333.8L944.2 332.4Z" fill="#45443f" stroke="#45443f" stroke-width="0.6" stroke-linejoin="round"/><path d="M944.2 333.1L942.9 334.5M942.9 333.8L944.2 332.4" stroke="#1c1c1a" stroke-width="0.5" fill="none"/><path d="M924.0 335.6L923.1 334.0L923.1 333.3L924.0 334.9Z" fill="#383733" stroke="#383733" stroke-width="0.6" stroke-linejoin="round"/><path d="M924.0 335.6L923.1 334.0M923.1 333.3L924.0 334.9" stroke="#1c1c1a" stroke-width="0.5" fill="none"/><path d="M942.9 334.5L941.0 335.6L941.0 334.9L942.9 333.8Z" fill="#44433e" stroke="#44433e" stroke-width="0.6" stroke-linejoin="round"/><path d="M942.9 334.5L941.0 335.6M941.0 334.9L942.9 333.8" stroke="#1c1c1a" stroke-width="0.5" fill="none"/><path d="M924.4 336.0L924.0 335.6L924.0 334.9L924.4 335.3Z" fill="#373632" stroke="#373632" stroke-width="0.6" stroke-linejoin="round"/><path d="M924.4 336.0L924.0 335.6M924.0 334.9L924.4 335.3" stroke="#1c1c1a" stroke-width="0.5" fill="none"/><path d="M926.0 337.3L924.4 336.0L924.4 335.3L926.0 336.6Z" fill="#373633" stroke="#373633" stroke-width="0.6" stroke-linejoin="round"/><path d="M926.0 337.3L924.4 336.0M924.4 335.3L926.0 336.6" stroke="#1c1c1a" stroke-width="0.5" fill="none"/><path d="M941.0 335.6L935.3 337.8L935.3 337.2L941.0 334.9Z" fill="#44433e" stroke="#44433e" stroke-width="0.6" stroke-linejoin="round"/><path d="M941.0 335.6L935.3 337.8M935.3 337.2L941.0 334.9" stroke="#1c1c1a" stroke-width="0.5" fill="none"/><path d="M928.1 338.2L926.0 337.3L926.0 336.6L928.1 337.5Z" fill="#3a3935" stroke="#3a3935" stroke-width="0.6" stroke-linejoin="round"/><path d="M928.1 338.2L926.0 337.3M926.0 336.6L928.1 337.5" stroke="#1c1c1a" stroke-width="0.5" fill="none"/><path d="M935.3 337.8L933.0 338.5L933.0 337.8L935.3 337.2Z" fill="#44423e" stroke="#44423e" stroke-width="0.6" stroke-linejoin="round"/><path d="M935.3 337.8L933.0 338.5M933.0 337.8L935.3 337.2" stroke="#1c1c1a" stroke-width="0.5" fill="none"/><path d="M930.5 338.6L928.1 338.2L928.1 337.5L930.5 337.9Z" fill="#3d3c38" stroke="#3d3c38" stroke-width="0.6" stroke-linejoin="round"/><path d="M930.5 338.6L928.1 338.2M928.1 337.5L930.5 337.9" stroke="#1c1c1a" stroke-width="0.5" fill="none"/><path d="M933.0 338.5L930.5 338.6L930.5 337.9L933.0 337.8Z" fill="#41403c" stroke="#41403c" stroke-width="0.6" stroke-linejoin="round"/><path d="M933.0 338.5L930.5 338.6M930.5 337.9L933.0 337.8" stroke="#1c1c1a" stroke-width="0.5" fill="none"/><path d="M932.5 325.3L934.8 324.7L937.3 324.6L939.7 325.0L941.8 325.9L943.4 327.2L943.7 327.6L944.7 329.1L944.8 330.8L944.2 332.4L942.9 333.8L941.0 334.9L935.3 337.2L933.0 337.8L930.5 337.9L928.1 337.5L926.0 336.6L924.4 335.3L924.0 334.9L923.1 333.3L923.0 331.7L923.6 330.0L924.9 328.6L926.8 327.6Z" fill="#5a5852" fill-rule="evenodd" stroke="#1c1c1a" stroke-width="0.5" stroke-linejoin="round"/><path d="M944.0 330.8L943.5 332.3L943.5 330.7L944.0 329.2Z" fill="#504e48" stroke="#504e48" stroke-width="0.6" stroke-linejoin="round"/><path d="M944.0 330.8L943.5 332.3M943.5 330.7L944.0 329.2" stroke="#1c1c1a" stroke-width="0.5" fill="none"/><path d="M923.9 333.2L923.8 331.6L923.8 330.0L923.9 331.6Z" fill="#44423d" stroke="#44423d" stroke-width="0.6" stroke-linejoin="round"/><path d="M923.9 333.2L923.8 331.6M923.8 330.0L923.9 331.6" stroke="#1c1c1a" stroke-width="0.5" fill="none"/><path d="M943.5 332.3L942.2 333.6L942.2 332.0L943.5 330.7Z" fill="#4e4c46" stroke="#4e4c46" stroke-width="0.6" stroke-linejoin="round"/><path d="M943.5 332.3L942.2 333.6M942.2 332.0L943.5 330.7" stroke="#1c1c1a" stroke-width="0.5" fill="none"/><path d="M924.8 334.6L923.9 333.2L923.9 331.6L924.8 333.0Z" fill="#3f3d39" stroke="#3f3d39" stroke-width="0.6" stroke-linejoin="round"/><path d="M924.8 334.6L923.9 333.2M923.9 331.6L924.8 333.0" stroke="#1c1c1a" stroke-width="0.5" fill="none"/><path d="M942.2 333.6L940.5 334.6L940.5 333.0L942.2 332.0Z" fill="#4c4a45" stroke="#4c4a45" stroke-width="0.6" stroke-linejoin="round"/><path d="M942.2 333.6L940.5 334.6M940.5 333.0L942.2 332.0" stroke="#1c1c1a" stroke-width="0.5" fill="none"/><path d="M925.1 335.0L924.8 334.6L924.8 333.0L925.1 333.4Z" fill="#3e3c38" stroke="#3e3c38" stroke-width="0.6" stroke-linejoin="round"/><path d="M925.1 335.0L924.8 334.6M924.8 333.0L925.1 333.4" stroke="#1c1c1a" stroke-width="0.5" fill="none"/><path d="M926.6 336.2L925.1 335.0L925.1 333.4L926.6 334.6Z" fill="#3e3d38" stroke="#3e3d38" stroke-width="0.6" stroke-linejoin="round"/><path d="M926.6 336.2L925.1 335.0M925.1 333.4L926.6 334.6" stroke="#1c1c1a" stroke-width="0.5" fill="none"/><path d="M940.5 334.6L935.2 336.7L935.2 335.1L940.5 333.0Z" fill="#4c4a45" stroke="#4c4a45" stroke-width="0.6" stroke-linejoin="round"/><path d="M940.5 334.6L935.2 336.7M935.2 335.1L940.5 333.0" stroke="#1c1c1a" stroke-width="0.5" fill="none"/><path d="M928.5 337.0L926.6 336.2L926.6 334.6L928.5 335.4Z" fill="#413f3b" stroke="#413f3b" stroke-width="0.6" stroke-linejoin="round"/><path d="M928.5 337.0L926.6 336.2M926.6 334.6L928.5 335.4" stroke="#1c1c1a" stroke-width="0.5" fill="none"/><path d="M935.2 336.7L933.1 337.3L933.1 335.7L935.2 335.1Z" fill="#4c4a45" stroke="#4c4a45" stroke-width="0.6" stroke-linejoin="round"/><path d="M935.2 336.7L933.1 337.3M933.1 335.7L935.2 335.1" stroke="#1c1c1a" stroke-width="0.5" fill="none"/><path d="M930.8 337.4L928.5 337.0L928.5 335.4L930.8 335.8Z" fill="#45433f" stroke="#45433f" stroke-width="0.6" stroke-linejoin="round"/><path d="M930.8 337.4L928.5 337.0M928.5 335.4L930.8 335.8" stroke="#1c1c1a" stroke-width="0.5" fill="none"/><path d="M933.1 337.3L930.8 337.4L930.8 335.8L933.1 335.7Z" fill="#494742" stroke="#494742" stroke-width="0.6" stroke-linejoin="round"/><path d="M933.1 337.3L930.8 337.4M930.8 335.8L933.1 335.7" stroke="#1c1c1a" stroke-width="0.5" fill="none"/><path d="M932.6 324.2L934.7 323.6L937.0 323.5L939.3 323.9L941.2 324.7L942.7 325.9L943.0 326.2L943.9 327.7L944.0 329.2L943.5 330.7L942.2 332.0L940.5 333.0L935.2 335.1L933.1 335.7L930.8 335.8L928.5 335.4L926.6 334.6L925.1 333.4L924.8 333.0L923.9 331.6L923.8 330.0L924.3 328.5L925.6 327.2L927.4 326.2Z" fill="#8a857a" fill-rule="evenodd" stroke="#1c1c1a" stroke-width="0.6" stroke-linejoin="round"/><path d="M1087.3 392.8L1073.5 377.9L1074.1 369.2L1087.9 384.1Z" fill="#4a4945" stroke="#1c1c1a" stroke-width="0.85" stroke-linejoin="round"/><path d="M1103.4 386.0L1087.3 392.8L1087.9 384.1L1104.0 377.3Z" fill="#5c5a54" stroke="#1c1c1a" stroke-width="0.85" stroke-linejoin="round"/><path d="M1074.1 369.2L1090.1 362.5L1104.0 377.3L1087.9 384.1Z" fill="#6f6c65" fill-rule="evenodd" stroke="#1c1c1a" stroke-width="0.85" stroke-linejoin="round"/><path d="M1079.1 372.5L1078.9 370.8L1078.9 370.1L1079.2 371.8Z" fill="#3c3b37" stroke="#3c3b37" stroke-width="0.6" stroke-linejoin="round"/><path d="M1079.1 372.5L1078.9 370.8M1078.9 370.1L1079.2 371.8" stroke="#1c1c1a" stroke-width="0.5" fill="none"/><path d="M1080.2 374.1L1079.1 372.5L1079.2 371.8L1080.2 373.4Z" fill="#383733" stroke="#383733" stroke-width="0.6" stroke-linejoin="round"/><path d="M1080.2 374.1L1079.1 372.5M1079.2 371.8L1080.2 373.4" stroke="#1c1c1a" stroke-width="0.5" fill="none"/><path d="M1099.2 375.7L1098.7 377.3L1098.8 376.7L1099.2 375.0Z" fill="#474641" stroke="#474641" stroke-width="0.6" stroke-linejoin="round"/><path d="M1099.2 375.7L1098.7 377.3M1098.8 376.7L1099.2 375.0" stroke="#1c1c1a" stroke-width="0.5" fill="none"/><path d="M1084.0 378.2L1080.2 374.1L1080.2 373.4L1084.0 377.5Z" fill="#373632" stroke="#373632" stroke-width="0.6" stroke-linejoin="round"/><path d="M1084.0 378.2L1080.2 374.1M1080.2 373.4L1084.0 377.5" stroke="#1c1c1a" stroke-width="0.5" fill="none"/><path d="M1098.7 377.3L1097.5 378.8L1097.5 378.1L1098.8 376.7Z" fill="#45443f" stroke="#45443f" stroke-width="0.6" stroke-linejoin="round"/><path d="M1098.7 377.3L1097.5 378.8M1097.5 378.1L1098.8 376.7" stroke="#1c1c1a" stroke-width="0.5" fill="none"/><path d="M1097.5 378.8L1095.6 379.9L1095.7 379.2L1097.5 378.1Z" fill="#44433e" stroke="#44433e" stroke-width="0.6" stroke-linejoin="round"/><path d="M1097.5 378.8L1095.6 379.9M1095.7 379.2L1097.5 378.1" stroke="#1c1c1a" stroke-width="0.5" fill="none"/><path d="M1085.7 379.5L1084.0 378.2L1084.0 377.5L1085.7 378.9Z" fill="#373633" stroke="#373633" stroke-width="0.6" stroke-linejoin="round"/><path d="M1085.7 379.5L1084.0 378.2M1084.0 377.5L1085.7 378.9" stroke="#1c1c1a" stroke-width="0.5" fill="none"/><path d="M1095.6 379.9L1095.1 380.1L1095.1 379.4L1095.7 379.2Z" fill="#44433e" stroke="#44433e" stroke-width="0.6" stroke-linejoin="round"/><path d="M1095.6 379.9L1095.1 380.1M1095.1 379.4L1095.7 379.2" stroke="#1c1c1a" stroke-width="0.5" fill="none"/><path d="M1095.1 380.1L1092.8 380.8L1092.8 380.1L1095.1 379.4Z" fill="#44423e" stroke="#44423e" stroke-width="0.6" stroke-linejoin="round"/><path d="M1095.1 380.1L1092.8 380.8M1092.8 380.1L1095.1 379.4" stroke="#1c1c1a" stroke-width="0.5" fill="none"/><path d="M1087.8 380.4L1085.7 379.5L1085.7 378.9L1087.9 379.8Z" fill="#3a3935" stroke="#3a3935" stroke-width="0.6" stroke-linejoin="round"/><path d="M1087.8 380.4L1085.7 379.5M1085.7 378.9L1087.9 379.8" stroke="#1c1c1a" stroke-width="0.5" fill="none"/><path d="M1092.8 380.8L1090.3 380.9L1090.3 380.2L1092.8 380.1Z" fill="#41403c" stroke="#41403c" stroke-width="0.6" stroke-linejoin="round"/><path d="M1092.8 380.8L1090.3 380.9M1090.3 380.2L1092.8 380.1" stroke="#1c1c1a" stroke-width="0.5" fill="none"/><path d="M1090.3 380.9L1087.8 380.4L1087.9 379.8L1090.3 380.2Z" fill="#3d3c38" stroke="#3d3c38" stroke-width="0.6" stroke-linejoin="round"/><path d="M1090.3 380.9L1087.8 380.4M1087.9 379.8L1090.3 380.2" stroke="#1c1c1a" stroke-width="0.5" fill="none"/><path d="M1083.0 365.7L1085.3 365.1L1087.8 365.0L1090.2 365.4L1092.4 366.3L1094.1 367.6L1097.9 371.7L1099.0 373.3L1099.2 375.0L1098.8 376.7L1097.5 378.1L1095.7 379.2L1095.1 379.4L1092.8 380.1L1090.3 380.2L1087.9 379.8L1085.7 378.9L1084.0 377.5L1080.2 373.4L1079.2 371.8L1078.9 370.1L1079.4 368.5L1080.6 367.1L1082.5 366.0Z" fill="#5a5852" fill-rule="evenodd" stroke="#1c1c1a" stroke-width="0.5" stroke-linejoin="round"/><path d="M1079.9 371.9L1079.7 370.3L1079.8 368.7L1080.0 370.3Z" fill="#44423d" stroke="#44423d" stroke-width="0.6" stroke-linejoin="round"/><path d="M1079.9 371.9L1079.7 370.3M1079.8 368.7L1080.0 370.3" stroke="#1c1c1a" stroke-width="0.5" fill="none"/><path d="M1080.9 373.4L1079.9 371.9L1080.0 370.3L1081.0 371.8Z" fill="#3f3d39" stroke="#3f3d39" stroke-width="0.6" stroke-linejoin="round"/><path d="M1080.9 373.4L1079.9 371.9M1080.0 370.3L1081.0 371.8" stroke="#1c1c1a" stroke-width="0.5" fill="none"/><path d="M1098.5 374.8L1098.0 376.4L1098.1 374.8L1098.6 373.2Z" fill="#504e48" stroke="#504e48" stroke-width="0.6" stroke-linejoin="round"/><path d="M1098.5 374.8L1098.0 376.4M1098.1 374.8L1098.6 373.2" stroke="#1c1c1a" stroke-width="0.5" fill="none"/><path d="M1084.4 377.2L1080.9 373.4L1081.0 371.8L1084.5 375.6Z" fill="#3e3c38" stroke="#3e3c38" stroke-width="0.6" stroke-linejoin="round"/><path d="M1084.4 377.2L1080.9 373.4M1081.0 371.8L1084.5 375.6" stroke="#1c1c1a" stroke-width="0.5" fill="none"/><path d="M1098.0 376.4L1096.9 377.7L1097.0 376.1L1098.1 374.8Z" fill="#4e4c46" stroke="#4e4c46" stroke-width="0.6" stroke-linejoin="round"/><path d="M1098.0 376.4L1096.9 377.7M1097.0 376.1L1098.1 374.8" stroke="#1c1c1a" stroke-width="0.5" fill="none"/><path d="M1096.9 377.7L1095.2 378.7L1095.3 377.1L1097.0 376.1Z" fill="#4c4a45" stroke="#4c4a45" stroke-width="0.6" stroke-linejoin="round"/><path d="M1096.9 377.7L1095.2 378.7M1095.3 377.1L1097.0 376.1" stroke="#1c1c1a" stroke-width="0.5" fill="none"/><path d="M1086.0 378.4L1084.4 377.2L1084.5 375.6L1086.1 376.8Z" fill="#3e3d38" stroke="#3e3d38" stroke-width="0.6" stroke-linejoin="round"/><path d="M1086.0 378.4L1084.4 377.2M1084.5 375.6L1086.1 376.8" stroke="#1c1c1a" stroke-width="0.5" fill="none"/><path d="M1095.2 378.7L1094.7 378.9L1094.8 377.3L1095.3 377.1Z" fill="#4c4a45" stroke="#4c4a45" stroke-width="0.6" stroke-linejoin="round"/><path d="M1095.2 378.7L1094.7 378.9M1094.8 377.3L1095.3 377.1" stroke="#1c1c1a" stroke-width="0.5" fill="none"/><path d="M1094.7 378.9L1092.6 379.5L1092.7 377.9L1094.8 377.3Z" fill="#4c4a45" stroke="#4c4a45" stroke-width="0.6" stroke-linejoin="round"/><path d="M1094.7 378.9L1092.6 379.5M1092.7 377.9L1094.8 377.3" stroke="#1c1c1a" stroke-width="0.5" fill="none"/><path d="M1088.0 379.2L1086.0 378.4L1086.1 376.8L1088.1 377.6Z" fill="#413f3b" stroke="#413f3b" stroke-width="0.6" stroke-linejoin="round"/><path d="M1088.0 379.2L1086.0 378.4M1086.1 376.8L1088.1 377.6" stroke="#1c1c1a" stroke-width="0.5" fill="none"/><path d="M1092.6 379.5L1090.3 379.6L1090.4 378.0L1092.7 377.9Z" fill="#494742" stroke="#494742" stroke-width="0.6" stroke-linejoin="round"/><path d="M1092.6 379.5L1090.3 379.6M1090.4 378.0L1092.7 377.9" stroke="#1c1c1a" stroke-width="0.5" fill="none"/><path d="M1090.3 379.6L1088.0 379.2L1088.1 377.6L1090.4 378.0Z" fill="#45433f" stroke="#45433f" stroke-width="0.6" stroke-linejoin="round"/><path d="M1090.3 379.6L1088.0 379.2M1088.1 377.6L1090.4 378.0" stroke="#1c1c1a" stroke-width="0.5" fill="none"/><path d="M1083.6 364.7L1085.7 364.1L1088.0 364.0L1090.3 364.4L1092.3 365.2L1093.8 366.4L1097.4 370.2L1098.3 371.6L1098.6 373.2L1098.1 374.8L1097.0 376.1L1095.3 377.1L1094.8 377.3L1092.7 377.9L1090.4 378.0L1088.1 377.6L1086.1 376.8L1084.5 375.6L1081.0 371.8L1080.0 370.3L1079.8 368.7L1080.2 367.2L1081.4 365.9L1083.1 364.9Z" fill="#8a857a" fill-rule="evenodd" stroke="#1c1c1a" stroke-width="0.6" stroke-linejoin="round"/><path d="M971.0 415.7L957.9 400.6L958.0 391.9L971.1 407.0Z" fill="#4a4945" stroke="#1c1c1a" stroke-width="0.85" stroke-linejoin="round"/><path d="M987.4 408.8L971.0 415.7L971.1 407.0L987.6 400.2Z" fill="#5c5a54" stroke="#1c1c1a" stroke-width="0.85" stroke-linejoin="round"/><path d="M958.0 391.9L974.4 385.1L987.6 400.2L971.1 407.0Z" fill="#6f6c65" fill-rule="evenodd" stroke="#1c1c1a" stroke-width="0.85" stroke-linejoin="round"/><path d="M962.9 395.3L962.7 393.6L962.7 392.9L962.9 394.6Z" fill="#3c3b37" stroke="#3c3b37" stroke-width="0.6" stroke-linejoin="round"/><path d="M962.9 395.3L962.7 393.6M962.7 392.9L962.9 394.6" stroke="#1c1c1a" stroke-width="0.5" fill="none"/><path d="M963.8 396.9L962.9 395.3L962.9 394.6L963.8 396.2Z" fill="#383733" stroke="#383733" stroke-width="0.6" stroke-linejoin="round"/><path d="M963.8 396.9L962.9 395.3M962.9 394.6L963.8 396.2" stroke="#1c1c1a" stroke-width="0.5" fill="none"/><path d="M967.5 401.1L963.8 396.9L963.8 396.2L967.5 400.4Z" fill="#373632" stroke="#373632" stroke-width="0.6" stroke-linejoin="round"/><path d="M967.5 401.1L963.8 396.9M963.8 396.2L967.5 400.4" stroke="#1c1c1a" stroke-width="0.5" fill="none"/><path d="M982.9 398.5L982.3 400.2L982.3 399.5L982.9 397.8Z" fill="#474641" stroke="#474641" stroke-width="0.6" stroke-linejoin="round"/><path d="M982.9 398.5L982.3 400.2M982.3 399.5L982.9 397.8" stroke="#1c1c1a" stroke-width="0.5" fill="none"/><path d="M982.3 400.2L981.0 401.6L981.0 401.0L982.3 399.5Z" fill="#45443f" stroke="#45443f" stroke-width="0.6" stroke-linejoin="round"/><path d="M982.3 400.2L981.0 401.6M981.0 401.0L982.3 399.5" stroke="#1c1c1a" stroke-width="0.5" fill="none"/><path d="M969.1 402.4L967.5 401.1L967.5 400.4L969.1 401.7Z" fill="#373633" stroke="#373633" stroke-width="0.6" stroke-linejoin="round"/><path d="M969.1 402.4L967.5 401.1M967.5 400.4L969.1 401.7" stroke="#1c1c1a" stroke-width="0.5" fill="none"/><path d="M981.0 401.6L979.1 402.8L979.1 402.1L981.0 401.0Z" fill="#44433e" stroke="#44433e" stroke-width="0.6" stroke-linejoin="round"/><path d="M981.0 401.6L979.1 402.8M979.1 402.1L981.0 401.0" stroke="#1c1c1a" stroke-width="0.5" fill="none"/><path d="M979.1 402.8L978.5 403.0L978.5 402.3L979.1 402.1Z" fill="#44433e" stroke="#44433e" stroke-width="0.6" stroke-linejoin="round"/><path d="M979.1 402.8L978.5 403.0M978.5 402.3L979.1 402.1" stroke="#1c1c1a" stroke-width="0.5" fill="none"/><path d="M971.2 403.3L969.1 402.4L969.1 401.7L971.2 402.6Z" fill="#3a3935" stroke="#3a3935" stroke-width="0.6" stroke-linejoin="round"/><path d="M971.2 403.3L969.1 402.4M969.1 401.7L971.2 402.6" stroke="#1c1c1a" stroke-width="0.5" fill="none"/><path d="M978.5 403.0L976.2 403.6L976.2 403.0L978.5 402.3Z" fill="#44423e" stroke="#44423e" stroke-width="0.6" stroke-linejoin="round"/><path d="M978.5 403.0L976.2 403.6M976.2 403.0L978.5 402.3" stroke="#1c1c1a" stroke-width="0.5" fill="none"/><path d="M973.7 403.8L971.2 403.3L971.2 402.6L973.7 403.1Z" fill="#3d3c38" stroke="#3d3c38" stroke-width="0.6" stroke-linejoin="round"/><path d="M973.7 403.8L971.2 403.3M971.2 402.6L973.7 403.1" stroke="#1c1c1a" stroke-width="0.5" fill="none"/><path d="M976.2 403.6L973.7 403.8L973.7 403.1L976.2 403.0Z" fill="#41403c" stroke="#41403c" stroke-width="0.6" stroke-linejoin="round"/><path d="M976.2 403.6L973.7 403.8M973.7 403.1L976.2 403.0" stroke="#1c1c1a" stroke-width="0.5" fill="none"/><path d="M967.1 388.4L969.4 387.8L971.9 387.7L974.3 388.1L976.4 389.0L978.1 390.3L981.7 394.5L982.7 396.1L982.9 397.8L982.3 399.5L981.0 401.0L979.1 402.1L978.5 402.3L976.2 403.0L973.7 403.1L971.2 402.6L969.1 401.7L967.5 400.4L963.8 396.2L962.9 394.6L962.7 392.9L963.3 391.2L964.6 389.8L966.5 388.7Z" fill="#5a5852" fill-rule="evenodd" stroke="#1c1c1a" stroke-width="0.5" stroke-linejoin="round"/><path d="M963.6 394.7L963.4 393.1L963.5 391.5L963.6 393.1Z" fill="#44423d" stroke="#44423d" stroke-width="0.6" stroke-linejoin="round"/><path d="M963.6 394.7L963.4 393.1M963.5 391.5L963.6 393.1" stroke="#1c1c1a" stroke-width="0.5" fill="none"/><path d="M964.5 396.1L963.6 394.7L963.6 393.1L964.5 394.6Z" fill="#3f3d39" stroke="#3f3d39" stroke-width="0.6" stroke-linejoin="round"/><path d="M964.5 396.1L963.6 394.7M963.6 393.1L964.5 394.6" stroke="#1c1c1a" stroke-width="0.5" fill="none"/><path d="M967.9 400.0L964.5 396.1L964.5 394.6L967.9 398.4Z" fill="#3e3c38" stroke="#3e3c38" stroke-width="0.6" stroke-linejoin="round"/><path d="M967.9 400.0L964.5 396.1M964.5 394.6L967.9 398.4" stroke="#1c1c1a" stroke-width="0.5" fill="none"/><path d="M982.1 397.6L981.6 399.2L981.6 397.6L982.2 396.0Z" fill="#504e48" stroke="#504e48" stroke-width="0.6" stroke-linejoin="round"/><path d="M982.1 397.6L981.6 399.2M981.6 397.6L982.2 396.0" stroke="#1c1c1a" stroke-width="0.5" fill="none"/><path d="M981.6 399.2L980.4 400.5L980.4 399.0L981.6 397.6Z" fill="#4e4c46" stroke="#4e4c46" stroke-width="0.6" stroke-linejoin="round"/><path d="M981.6 399.2L980.4 400.5M980.4 399.0L981.6 397.6" stroke="#1c1c1a" stroke-width="0.5" fill="none"/><path d="M969.4 401.2L967.9 400.0L967.9 398.4L969.4 399.7Z" fill="#3e3d38" stroke="#3e3d38" stroke-width="0.6" stroke-linejoin="round"/><path d="M969.4 401.2L967.9 400.0M967.9 398.4L969.4 399.7" stroke="#1c1c1a" stroke-width="0.5" fill="none"/><path d="M980.4 400.5L978.6 401.6L978.6 400.0L980.4 399.0Z" fill="#4c4a45" stroke="#4c4a45" stroke-width="0.6" stroke-linejoin="round"/><path d="M980.4 400.5L978.6 401.6M978.6 400.0L980.4 399.0" stroke="#1c1c1a" stroke-width="0.5" fill="none"/><path d="M978.6 401.6L978.1 401.8L978.1 400.2L978.6 400.0Z" fill="#4c4a45" stroke="#4c4a45" stroke-width="0.6" stroke-linejoin="round"/><path d="M978.6 401.6L978.1 401.8M978.1 400.2L978.6 400.0" stroke="#1c1c1a" stroke-width="0.5" fill="none"/><path d="M971.4 402.1L969.4 401.2L969.4 399.7L971.4 400.5Z" fill="#413f3b" stroke="#413f3b" stroke-width="0.6" stroke-linejoin="round"/><path d="M971.4 402.1L969.4 401.2M969.4 399.7L971.4 400.5" stroke="#1c1c1a" stroke-width="0.5" fill="none"/><path d="M978.1 401.8L975.9 402.4L976.0 400.8L978.1 400.2Z" fill="#4c4a45" stroke="#4c4a45" stroke-width="0.6" stroke-linejoin="round"/><path d="M978.1 401.8L975.9 402.4M976.0 400.8L978.1 400.2" stroke="#1c1c1a" stroke-width="0.5" fill="none"/><path d="M973.6 402.5L971.4 402.1L971.4 400.5L973.6 400.9Z" fill="#45433f" stroke="#45433f" stroke-width="0.6" stroke-linejoin="round"/><path d="M973.6 402.5L971.4 402.1M971.4 400.5L973.6 400.9" stroke="#1c1c1a" stroke-width="0.5" fill="none"/><path d="M975.9 402.4L973.6 402.5L973.6 400.9L976.0 400.8Z" fill="#494742" stroke="#494742" stroke-width="0.6" stroke-linejoin="round"/><path d="M975.9 402.4L973.6 402.5M973.6 400.9L976.0 400.8" stroke="#1c1c1a" stroke-width="0.5" fill="none"/><path d="M967.5 387.3L969.7 386.8L972.0 386.6L974.2 387.0L976.2 387.9L977.7 389.1L981.1 393.0L982.0 394.4L982.2 396.0L981.6 397.6L980.4 399.0L978.6 400.0L978.1 400.2L976.0 400.8L973.6 400.9L971.4 400.5L969.4 399.7L967.9 398.4L964.5 394.6L963.6 393.1L963.5 391.5L964.0 389.9L965.2 388.6L967.0 387.6Z" fill="#8a857a" fill-rule="evenodd" stroke="#1c1c1a" stroke-width="0.6" stroke-linejoin="round"/><path d="M990.5 438.7L977.1 423.3L977.3 414.7L990.7 430.1Z" fill="#4a4945" stroke="#1c1c1a" stroke-width="0.85" stroke-linejoin="round"/><path d="M1007.2 431.7L990.5 438.7L990.7 430.1L1007.4 423.0Z" fill="#5c5a54" stroke="#1c1c1a" stroke-width="0.85" stroke-linejoin="round"/><path d="M977.3 414.7L993.9 407.7L1007.4 423.0L990.7 430.1Z" fill="#6f6c65" fill-rule="evenodd" stroke="#1c1c1a" stroke-width="0.85" stroke-linejoin="round"/><path d="M982.3 418.1L982.1 416.4L982.1 415.7L982.3 417.5Z" fill="#3c3b37" stroke="#3c3b37" stroke-width="0.6" stroke-linejoin="round"/><path d="M982.3 418.1L982.1 416.4M982.1 415.7L982.3 417.5" stroke="#1c1c1a" stroke-width="0.5" fill="none"/><path d="M983.3 419.8L982.3 418.1L982.3 417.5L983.3 419.1Z" fill="#383733" stroke="#383733" stroke-width="0.6" stroke-linejoin="round"/><path d="M983.3 419.8L982.3 418.1M982.3 417.5L983.3 419.1" stroke="#1c1c1a" stroke-width="0.5" fill="none"/><path d="M1002.6 421.3L1002.0 423.0L1002.0 422.4L1002.6 420.6Z" fill="#474641" stroke="#474641" stroke-width="0.6" stroke-linejoin="round"/><path d="M1002.6 421.3L1002.0 423.0M1002.0 422.4L1002.6 420.6" stroke="#1c1c1a" stroke-width="0.5" fill="none"/><path d="M986.9 424.0L983.3 419.8L983.3 419.1L986.9 423.3Z" fill="#373632" stroke="#373632" stroke-width="0.6" stroke-linejoin="round"/><path d="M986.9 424.0L983.3 419.8M983.3 419.1L986.9 423.3" stroke="#1c1c1a" stroke-width="0.5" fill="none"/><path d="M1002.0 423.0L1000.7 424.6L1000.7 423.9L1002.0 422.4Z" fill="#45443f" stroke="#45443f" stroke-width="0.6" stroke-linejoin="round"/><path d="M1002.0 423.0L1000.7 424.6M1000.7 423.9L1002.0 422.4" stroke="#1c1c1a" stroke-width="0.5" fill="none"/><path d="M988.6 425.3L986.9 424.0L986.9 423.3L988.6 424.7Z" fill="#373633" stroke="#373633" stroke-width="0.6" stroke-linejoin="round"/><path d="M988.6 425.3L986.9 424.0M986.9 423.3L988.6 424.7" stroke="#1c1c1a" stroke-width="0.5" fill="none"/><path d="M1000.7 424.6L998.8 425.7L998.8 425.0L1000.7 423.9Z" fill="#44433e" stroke="#44433e" stroke-width="0.6" stroke-linejoin="round"/><path d="M1000.7 424.6L998.8 425.7M998.8 425.0L1000.7 423.9" stroke="#1c1c1a" stroke-width="0.5" fill="none"/><path d="M998.8 425.7L998.2 425.9L998.2 425.3L998.8 425.0Z" fill="#44433e" stroke="#44433e" stroke-width="0.6" stroke-linejoin="round"/><path d="M998.8 425.7L998.2 425.9M998.2 425.3L998.8 425.0" stroke="#1c1c1a" stroke-width="0.5" fill="none"/><path d="M990.8 426.3L988.6 425.3L988.6 424.7L990.8 425.6Z" fill="#3a3935" stroke="#3a3935" stroke-width="0.6" stroke-linejoin="round"/><path d="M990.8 426.3L988.6 425.3M988.6 424.7L990.8 425.6" stroke="#1c1c1a" stroke-width="0.5" fill="none"/><path d="M998.2 425.9L995.8 426.6L995.8 425.9L998.2 425.3Z" fill="#44423e" stroke="#44423e" stroke-width="0.6" stroke-linejoin="round"/><path d="M998.2 425.9L995.8 426.6M995.8 425.9L998.2 425.3" stroke="#1c1c1a" stroke-width="0.5" fill="none"/><path d="M993.3 426.7L990.8 426.3L990.8 425.6L993.3 426.0Z" fill="#3d3c38" stroke="#3d3c38" stroke-width="0.6" stroke-linejoin="round"/><path d="M993.3 426.7L990.8 426.3M990.8 425.6L993.3 426.0" stroke="#1c1c1a" stroke-width="0.5" fill="none"/><path d="M995.8 426.6L993.3 426.7L993.3 426.0L995.8 425.9Z" fill="#41403c" stroke="#41403c" stroke-width="0.6" stroke-linejoin="round"/><path d="M995.8 426.6L993.3 426.7M993.3 426.0L995.8 425.9" stroke="#1c1c1a" stroke-width="0.5" fill="none"/><path d="M986.5 411.1L988.9 410.4L991.4 410.3L993.9 410.8L996.1 411.7L997.7 413.1L1001.4 417.2L1002.4 418.9L1002.6 420.6L1002.0 422.4L1000.7 423.9L998.8 425.0L998.2 425.3L995.8 425.9L993.3 426.0L990.8 425.6L988.6 424.7L986.9 423.3L983.3 419.1L982.3 417.5L982.1 415.7L982.7 414.0L984.0 412.5L986.0 411.3Z" fill="#5a5852" fill-rule="evenodd" stroke="#1c1c1a" stroke-width="0.5" stroke-linejoin="round"/><path d="M983.1 417.5L982.9 415.9L982.9 414.3L983.1 415.9Z" fill="#44423d" stroke="#44423d" stroke-width="0.6" stroke-linejoin="round"/><path d="M983.1 417.5L982.9 415.9M982.9 414.3L983.1 415.9" stroke="#1c1c1a" stroke-width="0.5" fill="none"/><path d="M984.0 419.0L983.1 417.5L983.1 415.9L984.0 417.4Z" fill="#3f3d39" stroke="#3f3d39" stroke-width="0.6" stroke-linejoin="round"/><path d="M984.0 419.0L983.1 417.5M983.1 415.9L984.0 417.4" stroke="#1c1c1a" stroke-width="0.5" fill="none"/><path d="M1001.8 420.5L1001.3 422.1L1001.3 420.5L1001.9 418.9Z" fill="#504e48" stroke="#504e48" stroke-width="0.6" stroke-linejoin="round"/><path d="M1001.8 420.5L1001.3 422.1M1001.3 420.5L1001.9 418.9" stroke="#1c1c1a" stroke-width="0.5" fill="none"/><path d="M987.3 422.9L984.0 419.0L984.0 417.4L987.4 421.3Z" fill="#3e3c38" stroke="#3e3c38" stroke-width="0.6" stroke-linejoin="round"/><path d="M987.3 422.9L984.0 419.0M984.0 417.4L987.4 421.3" stroke="#1c1c1a" stroke-width="0.5" fill="none"/><path d="M1001.3 422.1L1000.1 423.5L1000.1 421.9L1001.3 420.5Z" fill="#4e4c46" stroke="#4e4c46" stroke-width="0.6" stroke-linejoin="round"/><path d="M1001.3 422.1L1000.1 423.5M1000.1 421.9L1001.3 420.5" stroke="#1c1c1a" stroke-width="0.5" fill="none"/><path d="M988.9 424.2L987.3 422.9L987.4 421.3L988.9 422.6Z" fill="#3e3d38" stroke="#3e3d38" stroke-width="0.6" stroke-linejoin="round"/><path d="M988.9 424.2L987.3 422.9M987.4 421.3L988.9 422.6" stroke="#1c1c1a" stroke-width="0.5" fill="none"/><path d="M1000.1 423.5L998.3 424.5L998.3 422.9L1000.1 421.9Z" fill="#4c4a45" stroke="#4c4a45" stroke-width="0.6" stroke-linejoin="round"/><path d="M1000.1 423.5L998.3 424.5M998.3 422.9L1000.1 421.9" stroke="#1c1c1a" stroke-width="0.5" fill="none"/><path d="M998.3 424.5L997.8 424.7L997.8 423.2L998.3 422.9Z" fill="#4c4a45" stroke="#4c4a45" stroke-width="0.6" stroke-linejoin="round"/><path d="M998.3 424.5L997.8 424.7M997.8 423.2L998.3 422.9" stroke="#1c1c1a" stroke-width="0.5" fill="none"/><path d="M990.9 425.1L988.9 424.2L988.9 422.6L990.9 423.5Z" fill="#413f3b" stroke="#413f3b" stroke-width="0.6" stroke-linejoin="round"/><path d="M990.9 425.1L988.9 424.2M988.9 422.6L990.9 423.5" stroke="#1c1c1a" stroke-width="0.5" fill="none"/><path d="M997.8 424.7L995.6 425.4L995.6 423.8L997.8 423.2Z" fill="#4c4a45" stroke="#4c4a45" stroke-width="0.6" stroke-linejoin="round"/><path d="M997.8 424.7L995.6 425.4M995.6 423.8L997.8 423.2" stroke="#1c1c1a" stroke-width="0.5" fill="none"/><path d="M993.2 425.5L990.9 425.1L990.9 423.5L993.3 423.9Z" fill="#45433f" stroke="#45433f" stroke-width="0.6" stroke-linejoin="round"/><path d="M993.2 425.5L990.9 425.1M990.9 423.5L993.3 423.9" stroke="#1c1c1a" stroke-width="0.5" fill="none"/><path d="M995.6 425.4L993.2 425.5L993.3 423.9L995.6 423.8Z" fill="#494742" stroke="#494742" stroke-width="0.6" stroke-linejoin="round"/><path d="M995.6 425.4L993.2 425.5M993.3 423.9L995.6 423.8" stroke="#1c1c1a" stroke-width="0.5" fill="none"/><path d="M987.0 410.0L989.2 409.4L991.5 409.3L993.8 409.7L995.8 410.6L997.4 411.8L1000.8 415.7L1001.7 417.2L1001.9 418.9L1001.3 420.5L1000.1 421.9L998.3 422.9L997.8 423.2L995.6 423.8L993.3 423.9L990.9 423.5L988.9 422.6L987.4 421.3L984.0 417.4L983.1 415.9L982.9 414.3L983.5 412.7L984.7 411.3L986.5 410.2Z" fill="#8a857a" fill-rule="evenodd" stroke="#1c1c1a" stroke-width="0.6" stroke-linejoin="round"/><path d="M1057.5 359.3L1040.6 341.1L1041.0 332.8L1057.9 350.9Z" fill="#4a4945" stroke="#1c1c1a" stroke-width="0.85" stroke-linejoin="round"/><path d="M1073.5 352.6L1057.5 359.3L1057.9 350.9L1074.0 344.3Z" fill="#5c5a54" stroke="#1c1c1a" stroke-width="0.85" stroke-linejoin="round"/><path d="M1041.0 332.8L1057.0 326.3L1074.0 344.3L1057.9 350.9Z" fill="#6f6c65" fill-rule="evenodd" stroke="#1c1c1a" stroke-width="0.85" stroke-linejoin="round"/><path d="M1050.9 334.5L1050.9 333.9L1051.0 331.6L1051.0 332.2Z" fill="#55534e" stroke="#55534e" stroke-width="0.6" stroke-linejoin="round"/><path d="M1050.9 334.5L1050.9 333.9M1051.0 331.6L1051.0 332.2" stroke="#1c1c1a" stroke-width="0.85" fill="none"/><path d="M1051.3 335.1L1050.9 334.5L1051.0 332.2L1051.4 332.8Z" fill="#4c4a46" stroke="#4c4a46" stroke-width="0.6" stroke-linejoin="round"/><path d="M1051.3 335.1L1050.9 334.5M1051.0 332.2L1051.4 332.8" stroke="#1c1c1a" stroke-width="0.85" fill="none"/><path d="M1058.5 342.8L1051.3 335.1L1051.4 332.8L1058.6 340.6Z" fill="#4a4945" stroke="#4a4945" stroke-width="0.6" stroke-linejoin="round"/><path d="M1058.5 342.8L1051.3 335.1M1051.4 332.8L1058.6 340.6" stroke="#1c1c1a" stroke-width="0.85" fill="none"/><path d="M1063.2 342.3L1062.8 342.9L1062.9 340.6L1063.3 340.0Z" fill="#5e5c57" stroke="#5e5c57" stroke-width="0.6" stroke-linejoin="round"/><path d="M1063.2 342.3L1062.8 342.9M1062.9 340.6L1063.3 340.0" stroke="#1c1c1a" stroke-width="0.85" fill="none"/><path d="M1062.8 342.9L1062.1 343.3L1062.2 341.0L1062.9 340.6Z" fill="#5c5a55" stroke="#5c5a55" stroke-width="0.6" stroke-linejoin="round"/><path d="M1062.8 342.9L1062.1 343.3M1062.2 341.0L1062.9 340.6" stroke="#1c1c1a" stroke-width="0.85" fill="none"/><path d="M1059.2 343.3L1058.5 342.8L1058.6 340.6L1059.3 341.0Z" fill="#4b4945" stroke="#4b4945" stroke-width="0.6" stroke-linejoin="round"/><path d="M1059.2 343.3L1058.5 342.8M1058.6 340.6L1059.3 341.0" stroke="#1c1c1a" stroke-width="0.85" fill="none"/><path d="M1062.1 343.3L1061.9 343.4L1062.0 341.1L1062.2 341.0Z" fill="#5c5a54" stroke="#5c5a54" stroke-width="0.6" stroke-linejoin="round"/><path d="M1062.1 343.3L1061.9 343.4M1062.0 341.1L1062.2 341.0" stroke="#1c1c1a" stroke-width="0.85" fill="none"/><path d="M1061.9 343.4L1061.0 343.6L1061.1 341.3L1062.0 341.1Z" fill="#5b5954" stroke="#5b5954" stroke-width="0.6" stroke-linejoin="round"/><path d="M1061.9 343.4L1061.0 343.6M1061.1 341.3L1062.0 341.1" stroke="#1c1c1a" stroke-width="0.85" fill="none"/><path d="M1060.0 343.6L1059.2 343.3L1059.3 341.0L1060.2 341.3Z" fill="#504e4a" stroke="#504e4a" stroke-width="0.6" stroke-linejoin="round"/><path d="M1060.0 343.6L1059.2 343.3M1059.3 341.0L1060.2 341.3" stroke="#1c1c1a" stroke-width="0.85" fill="none"/><path d="M1061.0 343.6L1060.0 343.6L1060.2 341.3L1061.1 341.3Z" fill="#565450" stroke="#565450" stroke-width="0.6" stroke-linejoin="round"/><path d="M1061.0 343.6L1060.0 343.6M1060.2 341.3L1061.1 341.3" stroke="#1c1c1a" stroke-width="0.85" fill="none"/><path d="M1052.4 330.5L1053.2 330.3L1054.2 330.3L1055.0 330.6L1055.7 331.1L1063.0 338.8L1063.3 339.4L1063.3 340.0L1062.9 340.6L1062.2 341.0L1062.0 341.1L1061.1 341.3L1060.2 341.3L1059.3 341.0L1058.6 340.6L1051.4 332.8L1051.0 332.2L1051.0 331.6L1051.4 331.0L1052.1 330.6Z" fill="#77746c" fill-rule="evenodd" stroke="#1c1c1a" stroke-width="0.85" stroke-linejoin="round"/><path d="M1252.8 395.1L1252.5 394.1L1253.0 390.6L1253.3 391.6Z" fill="#4a4640" stroke="#1c1c1a" stroke-width="0.85" stroke-linejoin="round"/><path d="M1392.2 534.6L1252.8 395.1L1253.3 391.6L1393.0 531.2Z" fill="#45423c" stroke="#45423c" stroke-width="0.6" stroke-linejoin="round"/><path d="M1392.2 534.6L1252.8 395.1M1253.3 391.6L1393.0 531.2" stroke="#1c1c1a" stroke-width="0.85" fill="none"/><path d="M1465.6 501.0L1464.9 501.9L1465.8 498.4L1466.5 497.5Z" fill="#56524b" stroke="#1c1c1a" stroke-width="0.85" stroke-linejoin="round"/><path d="M1464.9 501.9L1395.1 535.1L1395.8 531.7L1465.8 498.4Z" fill="#55514a" stroke="#55514a" stroke-width="0.6" stroke-linejoin="round"/><path d="M1464.9 501.9L1395.1 535.1M1395.8 531.7L1465.8 498.4" stroke="#1c1c1a" stroke-width="0.85" fill="none"/><path d="M1395.1 535.1L1393.6 535.3L1394.4 531.9L1395.8 531.7Z" fill="#534f48" stroke="#1c1c1a" stroke-width="0.85" stroke-linejoin="round"/><path d="M1393.6 535.3L1392.2 534.6L1393.0 531.2L1394.4 531.9Z" fill="#47443e" stroke="#1c1c1a" stroke-width="0.85" stroke-linejoin="round"/><path d="M1321.5 360.3L1322.9 360.2L1324.1 360.8L1466.0 496.5L1466.5 497.5L1465.8 498.4L1395.8 531.7L1394.4 531.9L1393.0 531.2L1253.3 391.6L1253.0 390.6L1253.7 389.8ZM1277.5 383.7L1291.3 377.5L1303.1 389.4L1318.1 382.5L1329.4 393.1L1313.8 400.6L1325.6 411.9L1311.3 418.1L1298.8 406.9L1283.8 413.1L1273.1 401.9L1288.1 395.0ZM1376.0 477.3L1377.3 478.8L1378.0 480.4L1378.3 482.1L1378.0 483.8L1377.2 485.3L1376.0 486.6L1374.3 487.6L1372.2 488.3L1370.0 488.6L1367.6 488.6L1365.3 488.2L1363.0 487.4L1361.0 486.3L1359.4 485.0L1358.1 483.4L1357.4 481.8L1357.1 480.1L1357.4 478.4L1358.2 476.9L1359.5 475.7L1361.2 474.6L1363.2 474.0L1365.4 473.6L1367.8 473.7L1370.1 474.1L1372.3 474.8L1374.3 475.9ZM1401.0 502.2L1402.3 503.7L1403.1 505.4L1403.4 507.1L1403.1 508.8L1402.4 510.4L1401.1 511.7L1399.4 512.7L1397.4 513.4L1395.1 513.8L1392.7 513.7L1390.3 513.3L1388.1 512.5L1386.0 511.4L1384.3 510.0L1383.0 508.5L1382.3 506.8L1382.0 505.1L1382.3 503.4L1383.1 501.9L1384.3 500.5L1386.0 499.5L1388.1 498.8L1390.3 498.5L1392.7 498.5L1395.1 498.9L1397.3 499.7L1399.4 500.8Z" fill="#847e73" fill-rule="evenodd" stroke="#1c1c1a" stroke-width="0.85" stroke-linejoin="round"/><clipPath id="pk18"><path d="M1277.5 383.7L1291.3 377.5L1303.1 389.4L1318.1 382.5L1329.4 393.1L1313.8 400.6L1325.6 411.9L1311.3 418.1L1298.8 406.9L1283.8 413.1L1273.1 401.9L1288.1 395.0Z"/></clipPath><g clip-path="url(#pk18)"><path d="M1277.0 387.2L1290.7 381.0L1291.3 377.5L1277.5 383.7Z" fill="#55514a" stroke="#1c1c1a" stroke-width="0.85" stroke-linejoin="round"/><path d="M1290.7 381.0L1302.5 392.9L1303.1 389.4L1291.3 377.5Z" fill="#45423c" stroke="#1c1c1a" stroke-width="0.85" stroke-linejoin="round"/><path d="M1317.5 386.0L1328.8 396.6L1329.4 393.1L1318.1 382.5Z" fill="#45423c" stroke="#1c1c1a" stroke-width="0.85" stroke-linejoin="round"/><path d="M1302.5 392.9L1317.5 386.0L1318.1 382.5L1303.1 389.4Z" fill="#55514a" stroke="#1c1c1a" stroke-width="0.85" stroke-linejoin="round"/><path d="M1272.6 405.4L1287.5 398.5L1288.1 395.0L1273.1 401.9Z" fill="#55514a" stroke="#1c1c1a" stroke-width="0.85" stroke-linejoin="round"/><path d="M1313.1 404.1L1325.0 415.4L1325.6 411.9L1313.8 400.6Z" fill="#45423c" stroke="#1c1c1a" stroke-width="0.85" stroke-linejoin="round"/></g><path d="M1277.5 383.7L1291.3 377.5L1303.1 389.4L1318.1 382.5L1329.4 393.1L1313.8 400.6L1325.6 411.9L1311.3 418.1L1298.8 406.9L1283.8 413.1L1273.1 401.9L1288.1 395.0Z" fill="none" stroke="#1c1c1a" stroke-width="0.85" stroke-linejoin="round"/><clipPath id="pk19"><path d="M1376.0 477.3L1377.3 478.8L1378.0 480.4L1378.3 482.1L1378.0 483.8L1377.2 485.3L1376.0 486.6L1374.3 487.6L1372.2 488.3L1370.0 488.6L1367.6 488.6L1365.3 488.2L1363.0 487.4L1361.0 486.3L1359.4 485.0L1358.1 483.4L1357.4 481.8L1357.1 480.1L1357.4 478.4L1358.2 476.9L1359.5 475.7L1361.2 474.6L1363.2 474.0L1365.4 473.6L1367.8 473.7L1370.1 474.1L1372.3 474.8L1374.3 475.9Z"/></clipPath><g clip-path="url(#pk19)"><path d="M1367.1 477.1L1369.4 477.5L1370.1 474.1L1367.8 473.7Z" fill="#4d4a43" stroke="#4d4a43" stroke-width="0.6" stroke-linejoin="round"/><path d="M1367.1 477.1L1369.4 477.5M1370.1 474.1L1367.8 473.7" stroke="#1c1c1a" stroke-width="0.85" fill="none"/><path d="M1369.4 477.5L1371.6 478.3L1372.3 474.8L1370.1 474.1Z" fill="#4a4640" stroke="#4a4640" stroke-width="0.6" stroke-linejoin="round"/><path d="M1369.4 477.5L1371.6 478.3M1372.3 474.8L1370.1 474.1" stroke="#1c1c1a" stroke-width="0.85" fill="none"/><path d="M1364.7 477.1L1367.1 477.1L1367.8 473.7L1365.4 473.6Z" fill="#514d46" stroke="#514d46" stroke-width="0.6" stroke-linejoin="round"/><path d="M1364.7 477.1L1367.1 477.1M1367.8 473.7L1365.4 473.6" stroke="#1c1c1a" stroke-width="0.85" fill="none"/><path d="M1371.6 478.3L1373.6 479.3L1374.3 475.9L1372.3 474.8Z" fill="#47443e" stroke="#47443e" stroke-width="0.6" stroke-linejoin="round"/><path d="M1371.6 478.3L1373.6 479.3M1374.3 475.9L1372.3 474.8" stroke="#1c1c1a" stroke-width="0.85" fill="none"/><path d="M1362.5 477.4L1364.7 477.1L1365.4 473.6L1363.2 474.0Z" fill="#535049" stroke="#535049" stroke-width="0.6" stroke-linejoin="round"/><path d="M1362.5 477.4L1364.7 477.1M1365.4 473.6L1363.2 474.0" stroke="#1c1c1a" stroke-width="0.85" fill="none"/><path d="M1373.6 479.3L1375.3 480.7L1376.0 477.3L1374.3 475.9Z" fill="#45423c" stroke="#45423c" stroke-width="0.6" stroke-linejoin="round"/><path d="M1373.6 479.3L1375.3 480.7M1376.0 477.3L1374.3 475.9" stroke="#1c1c1a" stroke-width="0.85" fill="none"/><path d="M1360.5 478.1L1362.5 477.4L1363.2 474.0L1361.2 474.6Z" fill="#55514a" stroke="#55514a" stroke-width="0.6" stroke-linejoin="round"/><path d="M1360.5 478.1L1362.5 477.4M1363.2 474.0L1361.2 474.6" stroke="#1c1c1a" stroke-width="0.85" fill="none"/><path d="M1375.3 480.7L1376.5 482.2L1377.3 478.8L1376.0 477.3Z" fill="#46423d" stroke="#46423d" stroke-width="0.6" stroke-linejoin="round"/><path d="M1375.3 480.7L1376.5 482.2M1377.3 478.8L1376.0 477.3" stroke="#1c1c1a" stroke-width="0.85" fill="none"/><path d="M1358.8 479.1L1360.5 478.1L1361.2 474.6L1359.5 475.7Z" fill="#55514a" stroke="#55514a" stroke-width="0.6" stroke-linejoin="round"/><path d="M1358.8 479.1L1360.5 478.1M1361.2 474.6L1359.5 475.7" stroke="#1c1c1a" stroke-width="0.85" fill="none"/><path d="M1376.5 482.2L1377.3 483.9L1378.0 480.4L1377.3 478.8Z" fill="#48453f" stroke="#48453f" stroke-width="0.6" stroke-linejoin="round"/><path d="M1376.5 482.2L1377.3 483.9M1378.0 480.4L1377.3 478.8" stroke="#1c1c1a" stroke-width="0.85" fill="none"/><path d="M1357.5 480.4L1358.8 479.1L1359.5 475.7L1358.2 476.9Z" fill="#56524b" stroke="#56524b" stroke-width="0.6" stroke-linejoin="round"/><path d="M1357.5 480.4L1358.8 479.1M1359.5 475.7L1358.2 476.9" stroke="#1c1c1a" stroke-width="0.85" fill="none"/><path d="M1377.3 483.9L1377.6 485.6L1378.3 482.1L1378.0 480.4Z" fill="#4e4a44" stroke="#4e4a44" stroke-width="0.6" stroke-linejoin="round"/><path d="M1377.3 483.9L1377.6 485.6M1378.3 482.1L1378.0 480.4" stroke="#1c1c1a" stroke-width="0.85" fill="none"/><path d="M1356.7 481.9L1357.5 480.4L1358.2 476.9L1357.4 478.4Z" fill="#57534c" stroke="#57534c" stroke-width="0.6" stroke-linejoin="round"/><path d="M1356.7 481.9L1357.5 480.4M1358.2 476.9L1357.4 478.4" stroke="#1c1c1a" stroke-width="0.85" fill="none"/><path d="M1377.6 485.6L1377.3 487.2L1378.0 483.8L1378.3 482.1Z" fill="#54514a" stroke="#54514a" stroke-width="0.6" stroke-linejoin="round"/><path d="M1377.6 485.6L1377.3 487.2M1378.0 483.8L1378.3 482.1" stroke="#1c1c1a" stroke-width="0.85" fill="none"/></g><path d="M1376.0 477.3L1377.3 478.8L1378.0 480.4L1378.3 482.1L1378.0 483.8L1377.2 485.3L1376.0 486.6L1374.3 487.6L1372.2 488.3L1370.0 488.6L1367.6 488.6L1365.3 488.2L1363.0 487.4L1361.0 486.3L1359.4 485.0L1358.1 483.4L1357.4 481.8L1357.1 480.1L1357.4 478.4L1358.2 476.9L1359.5 475.7L1361.2 474.6L1363.2 474.0L1365.4 473.6L1367.8 473.7L1370.1 474.1L1372.3 474.8L1374.3 475.9Z" fill="none" stroke="#1c1c1a" stroke-width="0.85" stroke-linejoin="round"/><clipPath id="pk20"><path d="M1401.0 502.2L1402.3 503.7L1403.1 505.4L1403.4 507.1L1403.1 508.8L1402.4 510.4L1401.1 511.7L1399.4 512.7L1397.4 513.4L1395.1 513.8L1392.7 513.7L1390.3 513.3L1388.1 512.5L1386.0 511.4L1384.3 510.0L1383.0 508.5L1382.3 506.8L1382.0 505.1L1382.3 503.4L1383.1 501.9L1384.3 500.5L1386.0 499.5L1388.1 498.8L1390.3 498.5L1392.7 498.5L1395.1 498.9L1397.3 499.7L1399.4 500.8Z"/></clipPath><g clip-path="url(#pk20)"><path d="M1391.9 501.9L1394.3 502.4L1395.1 498.9L1392.7 498.5Z" fill="#4d4a43" stroke="#4d4a43" stroke-width="0.6" stroke-linejoin="round"/><path d="M1391.9 501.9L1394.3 502.4M1395.1 498.9L1392.7 498.5" stroke="#1c1c1a" stroke-width="0.85" fill="none"/><path d="M1394.3 502.4L1396.6 503.1L1397.3 499.7L1395.1 498.9Z" fill="#4a4640" stroke="#4a4640" stroke-width="0.6" stroke-linejoin="round"/><path d="M1394.3 502.4L1396.6 503.1M1397.3 499.7L1395.1 498.9" stroke="#1c1c1a" stroke-width="0.85" fill="none"/><path d="M1389.6 501.9L1391.9 501.9L1392.7 498.5L1390.3 498.5Z" fill="#514d46" stroke="#514d46" stroke-width="0.6" stroke-linejoin="round"/><path d="M1389.6 501.9L1391.9 501.9M1392.7 498.5L1390.3 498.5" stroke="#1c1c1a" stroke-width="0.85" fill="none"/><path d="M1396.6 503.1L1398.6 504.2L1399.4 500.8L1397.3 499.7Z" fill="#47443e" stroke="#47443e" stroke-width="0.6" stroke-linejoin="round"/><path d="M1396.6 503.1L1398.6 504.2M1399.4 500.8L1397.3 499.7" stroke="#1c1c1a" stroke-width="0.85" fill="none"/><path d="M1387.3 502.2L1389.6 501.9L1390.3 498.5L1388.1 498.8Z" fill="#535049" stroke="#535049" stroke-width="0.6" stroke-linejoin="round"/><path d="M1387.3 502.2L1389.6 501.9M1390.3 498.5L1388.1 498.8" stroke="#1c1c1a" stroke-width="0.85" fill="none"/><path d="M1398.6 504.2L1400.3 505.6L1401.0 502.2L1399.4 500.8Z" fill="#45423c" stroke="#45423c" stroke-width="0.6" stroke-linejoin="round"/><path d="M1398.6 504.2L1400.3 505.6M1401.0 502.2L1399.4 500.8" stroke="#1c1c1a" stroke-width="0.85" fill="none"/><path d="M1385.3 502.9L1387.3 502.2L1388.1 498.8L1386.0 499.5Z" fill="#55514a" stroke="#55514a" stroke-width="0.6" stroke-linejoin="round"/><path d="M1385.3 502.9L1387.3 502.2M1388.1 498.8L1386.0 499.5" stroke="#1c1c1a" stroke-width="0.85" fill="none"/><path d="M1400.3 505.6L1401.5 507.2L1402.3 503.7L1401.0 502.2Z" fill="#46423d" stroke="#46423d" stroke-width="0.6" stroke-linejoin="round"/><path d="M1400.3 505.6L1401.5 507.2M1402.3 503.7L1401.0 502.2" stroke="#1c1c1a" stroke-width="0.85" fill="none"/><path d="M1383.6 504.0L1385.3 502.9L1386.0 499.5L1384.3 500.5Z" fill="#55514a" stroke="#55514a" stroke-width="0.6" stroke-linejoin="round"/><path d="M1383.6 504.0L1385.3 502.9M1386.0 499.5L1384.3 500.5" stroke="#1c1c1a" stroke-width="0.85" fill="none"/><path d="M1401.5 507.2L1402.3 508.8L1403.1 505.4L1402.3 503.7Z" fill="#48453f" stroke="#48453f" stroke-width="0.6" stroke-linejoin="round"/><path d="M1401.5 507.2L1402.3 508.8M1403.1 505.4L1402.3 503.7" stroke="#1c1c1a" stroke-width="0.85" fill="none"/><path d="M1382.3 505.3L1383.6 504.0L1384.3 500.5L1383.1 501.9Z" fill="#56524b" stroke="#56524b" stroke-width="0.6" stroke-linejoin="round"/><path d="M1382.3 505.3L1383.6 504.0M1384.3 500.5L1383.1 501.9" stroke="#1c1c1a" stroke-width="0.85" fill="none"/><path d="M1402.3 508.8L1402.6 510.6L1403.4 507.1L1403.1 505.4Z" fill="#4e4a44" stroke="#4e4a44" stroke-width="0.6" stroke-linejoin="round"/><path d="M1402.3 508.8L1402.6 510.6M1403.4 507.1L1403.1 505.4" stroke="#1c1c1a" stroke-width="0.85" fill="none"/><path d="M1381.5 506.8L1382.3 505.3L1383.1 501.9L1382.3 503.4Z" fill="#57534c" stroke="#57534c" stroke-width="0.6" stroke-linejoin="round"/><path d="M1381.5 506.8L1382.3 505.3M1383.1 501.9L1382.3 503.4" stroke="#1c1c1a" stroke-width="0.85" fill="none"/><path d="M1402.6 510.6L1402.4 512.2L1403.1 508.8L1403.4 507.1Z" fill="#54514a" stroke="#54514a" stroke-width="0.6" stroke-linejoin="round"/><path d="M1402.6 510.6L1402.4 512.2M1403.1 508.8L1403.4 507.1" stroke="#1c1c1a" stroke-width="0.85" fill="none"/></g><path d="M1401.0 502.2L1402.3 503.7L1403.1 505.4L1403.4 507.1L1403.1 508.8L1402.4 510.4L1401.1 511.7L1399.4 512.7L1397.4 513.4L1395.1 513.8L1392.7 513.7L1390.3 513.3L1388.1 512.5L1386.0 511.4L1384.3 510.0L1383.0 508.5L1382.3 506.8L1382.0 505.1L1382.3 503.4L1383.1 501.9L1384.3 500.5L1386.0 499.5L1388.1 498.8L1390.3 498.5L1392.7 498.5L1395.1 498.9L1397.3 499.7L1399.4 500.8Z" fill="none" stroke="#1c1c1a" stroke-width="0.85" stroke-linejoin="round"/><clipPath id="pk21"><path d="M1391.3 444.4L1401.3 440.0L1456.4 497.0L1447.3 500.5Z"/></clipPath><g clip-path="url(#pk21)"><path d="M1391.0 445.8L1400.9 441.4L1456.1 498.4L1447.0 501.9Z" fill="#7f796e" fill-rule="evenodd"/><path d="M1391.0 445.8L1400.9 441.4L1401.3 440.0L1391.3 444.4Z" fill="#55514a" stroke="#1c1c1a" stroke-width="0.85" stroke-linejoin="round"/><path d="M1400.9 441.4L1456.1 498.4L1456.4 497.0L1401.3 440.0Z" fill="#45423c" stroke="#1c1c1a" stroke-width="0.85" stroke-linejoin="round"/></g><path d="M1391.3 444.4L1401.3 440.0L1456.4 497.0L1447.3 500.5Z" fill="none" stroke="#1c1c1a" stroke-width="0.85" stroke-linejoin="round"/><path d="M1499.9 477.0L1441.8 421.7L1441.9 421.2L1500.0 476.6Z" fill="#45423c" stroke="#1c1c1a" stroke-width="0.85" stroke-linejoin="round"/><path d="M1509.0 472.4L1499.9 477.0L1500.0 476.6L1509.1 472.0Z" fill="#55514a" stroke="#1c1c1a" stroke-width="0.85" stroke-linejoin="round"/><path d="M1441.9 421.2L1451.2 416.5L1509.1 472.0L1500.0 476.6Z" fill="#857f74" fill-rule="evenodd" stroke="#1c1c1a" stroke-width="0.85" stroke-linejoin="round"/><path d="M1463.7 440.2L1475 438.7" stroke="#1c1c1a" stroke-width="0.85"/><defs><linearGradient id="covtop" gradientUnits="userSpaceOnUse" x1="540" y1="800" x2="740" y2="860"><stop offset="0" stop-color="#a09b92"/><stop offset="1" stop-color="#99948b"/></linearGradient><linearGradient id="shfloor" gradientUnits="userSpaceOnUse" x1="1060" y1="480" x2="1230" y2="620"><stop offset="0" stop-color="#908c82"/><stop offset="1" stop-color="#87837a"/></linearGradient><linearGradient id="bsfloor" gradientUnits="userSpaceOnUse" x1="800" y1="720" x2="930" y2="820"><stop offset="0" stop-color="#8d897f"/><stop offset="1" stop-color="#858178"/></linearGradient><linearGradient id="bstop" gradientUnits="userSpaceOnUse" x1="760" y1="720" x2="910" y2="660"><stop offset="0" stop-color="#928e84"/><stop offset="1" stop-color="#8a867c"/></linearGradient></defs><linearGradient id="btnside" x1="0" y1="0" x2="1" y2="0"><stop offset="0" stop-color="#5a5852"/><stop offset="0.5" stop-color="#4a4843"/><stop offset="1" stop-color="#3c3b37"/></linearGradient><path d="M1169.0 454.1L1184.5 447.3L1196.1 459.5L1212.5 452.2L1223.6 463.8L1207.2 471.1L1219.0 483.6L1203.3 490.7L1191.5 478.1L1174.8 485.6L1163.9 473.8L1180.5 466.4Z" fill="#000" opacity="0.28" filter="url(#bl4)"/><path d="M1181.6 456.9L1170.0 444.6L1170.5 440.0L1182.1 452.3Z" fill="#3e3c38" stroke="#1c1c1a" stroke-width="0.85" stroke-linejoin="round"/><path d="M1224.9 454.2L1208.4 461.6L1209.0 457.1L1225.6 449.7Z" fill="#4c4a45" stroke="#1c1c1a" stroke-width="0.85" stroke-linejoin="round"/><path d="M1175.9 476.1L1164.9 464.3L1165.4 459.7L1176.4 471.5Z" fill="#3e3c38" stroke="#1c1c1a" stroke-width="0.85" stroke-linejoin="round"/><path d="M1192.7 468.6L1175.9 476.1L1176.4 471.5L1193.2 464.1Z" fill="#4c4a45" stroke="#1c1c1a" stroke-width="0.85" stroke-linejoin="round"/><path d="M1204.5 481.2L1192.7 468.6L1193.2 464.1L1205.1 476.6Z" fill="#3e3c38" stroke="#1c1c1a" stroke-width="0.85" stroke-linejoin="round"/><path d="M1220.3 474.1L1204.5 481.2L1205.1 476.6L1220.9 469.6Z" fill="#4c4a45" stroke="#1c1c1a" stroke-width="0.85" stroke-linejoin="round"/><path d="M1170.5 440.0L1186.2 433.2L1197.8 445.4L1214.4 438.1L1225.6 449.7L1209.0 457.1L1220.9 469.6L1205.1 476.6L1193.2 464.1L1176.4 471.5L1165.4 459.7L1182.1 452.3Z" fill="#55534d" fill-rule="evenodd" stroke="#1c1c1a" stroke-width="0.85" stroke-linejoin="round"/><path d="M1185.3 452.9L1174.3 441.4L1175.9 427.1L1186.9 438.6Z" fill="#413f3b" stroke="#1c1c1a" stroke-width="0.85" stroke-linejoin="round"/><path d="M1221.4 449.6L1205.8 456.5L1207.7 442.3L1223.3 435.4Z" fill="#504e49" stroke="#1c1c1a" stroke-width="0.85" stroke-linejoin="round"/><path d="M1193.8 461.9L1178.1 468.9L1179.7 454.6L1195.5 447.6Z" fill="#504e49" stroke="#1c1c1a" stroke-width="0.85" stroke-linejoin="round"/><path d="M1178.1 468.9L1169.6 459.8L1171.2 445.6L1179.7 454.6Z" fill="#413f3b" stroke="#1c1c1a" stroke-width="0.85" stroke-linejoin="round"/><path d="M1204.9 473.6L1193.8 461.9L1195.5 447.6L1206.7 459.4Z" fill="#413f3b" stroke="#1c1c1a" stroke-width="0.85" stroke-linejoin="round"/><path d="M1217.0 468.2L1204.9 473.6L1206.7 459.4L1218.9 454.0Z" fill="#504e49" stroke="#1c1c1a" stroke-width="0.85" stroke-linejoin="round"/><path d="M1175.9 427.1L1188.0 421.8L1199.1 433.3L1214.7 426.4L1223.3 435.4L1207.7 442.3L1218.9 454.0L1206.7 459.4L1195.5 447.6L1179.7 454.6L1171.2 445.6L1186.9 438.6Z" fill="#504e49" fill-rule="evenodd" stroke="#1c1c1a" stroke-width="0.85" stroke-linejoin="round"/><path d="M1217.3 431.6L1212.8 438.6L1210.9 436.7L1206.0 438.8L1203.0 435.7L1207.9 433.6L1206.0 431.6Z" fill="#6f6c65" fill-rule="evenodd" stroke="#1c1c1a" stroke-width="0.6" stroke-linejoin="round"/><path d="M1177.2 449.3L1181.8 442.3L1183.6 444.2L1188.5 442.1L1191.5 445.2L1186.6 447.4L1188.5 449.3Z" fill="#6f6c65" fill-rule="evenodd" stroke="#1c1c1a" stroke-width="0.6" stroke-linejoin="round"/><path d="M1211.6 455.4L1201.2 451.6L1203.8 450.4L1200.3 446.8L1204.6 444.9L1208.0 448.5L1210.7 447.4Z" fill="#6f6c65" fill-rule="evenodd" stroke="#1c1c1a" stroke-width="0.6" stroke-linejoin="round"/><path d="M1183.2 425.7L1193.5 429.4L1190.8 430.6L1194.3 434.2L1190.1 436.0L1186.6 432.4L1184.0 433.6Z" fill="#6f6c65" fill-rule="evenodd" stroke="#1c1c1a" stroke-width="0.6" stroke-linejoin="round"/><path d="M1201.0 438.8L1201.6 439.7L1201.8 440.7L1201.6 441.7L1200.9 442.5L1199.9 443.2L1198.6 443.6L1197.2 443.6L1195.8 443.4L1194.6 442.8L1193.6 442.1L1193.0 441.1L1192.8 440.2L1193.0 439.2L1193.7 438.3L1194.7 437.7L1196.0 437.3L1197.4 437.3L1198.7 437.5L1200.0 438.1Z" fill="#77746c" fill-rule="evenodd" stroke="#1c1c1a" stroke-width="0.6" stroke-linejoin="round"/><path d="M1199.7 439.7L1200.1 440.3L1200.0 440.9L1199.6 441.5L1198.8 441.8L1197.9 441.9L1197.0 441.6L1196.3 441.2L1195.9 440.5L1196.0 439.9L1196.4 439.3L1197.2 439.0L1198.1 438.9L1199.0 439.2Z" fill="#b0aca2" fill-rule="evenodd" stroke="#1c1c1a" stroke-width="0.4" stroke-linejoin="round"/><path d="M1107.1 483.1L1108.8 482.6L1110.6 482.4L1112.5 482.6L1114.2 483.0L1115.8 483.8L1117.1 484.9L1246.6 627.6L1247.6 629.0L1248.1 630.5L1248.0 632.0L1247.5 633.4L1246.4 634.6L1245.0 635.6L1172.4 670.5L1170.6 671.1L1168.6 671.4L1166.6 671.2L1164.6 670.6L1162.9 669.7L1161.6 668.5L1034.8 521.2L1034.0 519.9L1033.7 518.5L1033.8 517.2L1034.5 515.9L1035.6 514.8L1037.0 513.9Z" fill="#000" opacity="0.38" filter="url(#bl6)"/><path d="M1248.7 625.9L1248.3 627.1L1252.0 626.8L1252.6 625.1Z" fill="#4a4944" stroke="#4a4944" stroke-width="0.5" stroke-linejoin="round"/><path d="M1248.3 627.1L1247.5 628.2L1251.0 628.4L1252.0 626.8Z" fill="#4a4944" stroke="#4a4944" stroke-width="0.5" stroke-linejoin="round"/><path d="M1247.5 628.2L1246.5 629.2L1249.5 629.7L1251.0 628.4Z" fill="#4a4944" stroke="#4a4944" stroke-width="0.5" stroke-linejoin="round"/><path d="M1246.5 629.2L1245.3 629.9L1247.7 630.8L1249.5 629.7Z" fill="#4a4944" stroke="#4a4944" stroke-width="0.5" stroke-linejoin="round"/><path d="M1245.3 629.9L1174.1 664.2L1176.4 665.2L1247.7 630.8Z" fill="#4a4944" stroke="#4a4944" stroke-width="0.5" stroke-linejoin="round"/><path d="M1174.1 664.2L1172.6 664.7L1174.3 666.0L1176.4 665.2Z" fill="#4a4944" stroke="#4a4944" stroke-width="0.5" stroke-linejoin="round"/><path d="M1172.6 664.7L1171.0 665.1L1172.0 666.4L1174.3 666.0Z" fill="#4a4944" stroke="#4a4944" stroke-width="0.5" stroke-linejoin="round"/><path d="M1171.0 665.1L1169.3 665.1L1169.6 666.5L1172.0 666.4Z" fill="#3e3e39" stroke="#3e3e39" stroke-width="0.5" stroke-linejoin="round"/><path d="M1169.3 665.1L1167.6 664.9L1167.1 666.2L1169.6 666.5Z" fill="#3b3a36" stroke="#3b3a36" stroke-width="0.5" stroke-linejoin="round"/><path d="M1167.6 664.9L1166.0 664.5L1164.8 665.6L1167.1 666.2Z" fill="#373633" stroke="#373633" stroke-width="0.5" stroke-linejoin="round"/><path d="M1166.0 664.5L1164.5 663.8L1162.6 664.6L1164.8 665.6Z" fill="#343430" stroke="#343430" stroke-width="0.5" stroke-linejoin="round"/><path d="M1164.5 663.8L1163.2 662.9L1160.7 663.4L1162.6 664.6Z" fill="#33322f" stroke="#33322f" stroke-width="0.5" stroke-linejoin="round"/><path d="M1163.2 662.9L1162.1 661.9L1159.1 661.9L1160.7 663.4Z" fill="#32312e" stroke="#32312e" stroke-width="0.5" stroke-linejoin="round"/><path d="M1162.1 661.9L1036.3 515.7L1033.3 515.5L1159.1 661.9Z" fill="#32312e" stroke="#32312e" stroke-width="0.5" stroke-linejoin="round"/><path d="M1036.3 515.7L1035.5 514.7L1032.3 514.0L1033.3 515.5Z" fill="#32312e" stroke="#32312e" stroke-width="0.5" stroke-linejoin="round"/><path d="M1035.5 514.7L1035.1 513.5L1031.7 512.3L1032.3 514.0Z" fill="#33322f" stroke="#33322f" stroke-width="0.5" stroke-linejoin="round"/><path d="M1035.1 513.5L1035.0 512.4L1031.5 510.7L1031.7 512.3Z" fill="#343430" stroke="#343430" stroke-width="0.5" stroke-linejoin="round"/><path d="M1252.6 625.1L1252.0 626.8L1255.0 625.3L1255.7 623.2Z" fill="#5c5a54" stroke="#5c5a54" stroke-width="0.5" stroke-linejoin="round"/><path d="M1252.0 626.8L1251.0 628.4L1253.7 627.2L1255.0 625.3Z" fill="#5c5a54" stroke="#5c5a54" stroke-width="0.5" stroke-linejoin="round"/><path d="M1251.0 628.4L1249.5 629.7L1251.9 628.8L1253.7 627.2Z" fill="#5c5a54" stroke="#5c5a54" stroke-width="0.5" stroke-linejoin="round"/><path d="M1249.5 629.7L1247.7 630.8L1249.7 630.2L1251.9 628.8Z" fill="#5c5a54" stroke="#5c5a54" stroke-width="0.5" stroke-linejoin="round"/><path d="M1247.7 630.8L1176.4 665.2L1178.3 664.6L1249.7 630.2Z" fill="#5c5a54" stroke="#5c5a54" stroke-width="0.5" stroke-linejoin="round"/><path d="M1176.4 665.2L1174.3 666.0L1175.7 665.6L1178.3 664.6Z" fill="#5c5a54" stroke="#5c5a54" stroke-width="0.5" stroke-linejoin="round"/><path d="M1174.3 666.0L1172.0 666.4L1172.9 666.1L1175.7 665.6Z" fill="#5c5a54" stroke="#5c5a54" stroke-width="0.5" stroke-linejoin="round"/><path d="M1172.0 666.4L1169.6 666.5L1169.9 666.2L1172.9 666.1Z" fill="#4e4c47" stroke="#4e4c47" stroke-width="0.5" stroke-linejoin="round"/><path d="M1169.6 666.5L1167.1 666.2L1166.9 665.9L1169.9 666.2Z" fill="#494742" stroke="#494742" stroke-width="0.5" stroke-linejoin="round"/><path d="M1167.1 666.2L1164.8 665.6L1164.1 665.1L1166.9 665.9Z" fill="#45433f" stroke="#45433f" stroke-width="0.5" stroke-linejoin="round"/><path d="M1164.8 665.6L1162.6 664.6L1161.4 663.9L1164.1 665.1Z" fill="#41403c" stroke="#41403c" stroke-width="0.5" stroke-linejoin="round"/><path d="M1162.6 664.6L1160.7 663.4L1159.1 662.4L1161.4 663.9Z" fill="#3f3e39" stroke="#3f3e39" stroke-width="0.5" stroke-linejoin="round"/><path d="M1160.7 663.4L1159.1 661.9L1157.1 660.5L1159.1 662.4Z" fill="#3e3c38" stroke="#3e3c38" stroke-width="0.5" stroke-linejoin="round"/><path d="M1159.1 661.9L1033.3 515.5L1031.2 514.0L1157.1 660.5Z" fill="#3e3c38" stroke="#3e3c38" stroke-width="0.5" stroke-linejoin="round"/><path d="M1033.3 515.5L1032.3 514.0L1030.0 512.1L1031.2 514.0Z" fill="#3e3c38" stroke="#3e3c38" stroke-width="0.5" stroke-linejoin="round"/><path d="M1032.3 514.0L1031.7 512.3L1029.2 510.2L1030.0 512.1Z" fill="#3f3e39" stroke="#3f3e39" stroke-width="0.5" stroke-linejoin="round"/><path d="M1031.7 512.3L1031.5 510.7L1029.0 508.1L1029.2 510.2Z" fill="#41403c" stroke="#41403c" stroke-width="0.5" stroke-linejoin="round"/><path d="M1255.7 623.2L1255.0 625.3L1256.8 622.8L1257.5 620.5Z" fill="#7d7a72" stroke="#7d7a72" stroke-width="0.5" stroke-linejoin="round"/><path d="M1255.0 625.3L1253.7 627.2L1255.4 624.9L1256.8 622.8Z" fill="#7d7a72" stroke="#7d7a72" stroke-width="0.5" stroke-linejoin="round"/><path d="M1253.7 627.2L1251.9 628.8L1253.4 626.7L1255.4 624.9Z" fill="#7d7a72" stroke="#7d7a72" stroke-width="0.5" stroke-linejoin="round"/><path d="M1251.9 628.8L1249.7 630.2L1251.0 628.2L1253.4 626.7Z" fill="#7d7a72" stroke="#7d7a72" stroke-width="0.5" stroke-linejoin="round"/><path d="M1249.7 630.2L1178.3 664.6L1179.5 662.6L1251.0 628.2Z" fill="#7d7a72" stroke="#7d7a72" stroke-width="0.5" stroke-linejoin="round"/><path d="M1178.3 664.6L1175.7 665.6L1176.6 663.7L1179.5 662.6Z" fill="#7d7a72" stroke="#7d7a72" stroke-width="0.5" stroke-linejoin="round"/><path d="M1175.7 665.6L1172.9 666.1L1173.5 664.3L1176.6 663.7Z" fill="#7d7a72" stroke="#7d7a72" stroke-width="0.5" stroke-linejoin="round"/><path d="M1172.9 666.1L1169.9 666.2L1170.3 664.4L1173.5 664.3Z" fill="#6a6760" stroke="#6a6760" stroke-width="0.5" stroke-linejoin="round"/><path d="M1169.9 666.2L1166.9 665.9L1167.0 664.1L1170.3 664.4Z" fill="#63605a" stroke="#63605a" stroke-width="0.5" stroke-linejoin="round"/><path d="M1166.9 665.9L1164.1 665.1L1163.9 663.2L1167.0 664.1Z" fill="#5d5b55" stroke="#5d5b55" stroke-width="0.5" stroke-linejoin="round"/><path d="M1164.1 665.1L1161.4 663.9L1161.0 661.9L1163.9 663.2Z" fill="#595651" stroke="#595651" stroke-width="0.5" stroke-linejoin="round"/><path d="M1161.4 663.9L1159.1 662.4L1158.4 660.2L1161.0 661.9Z" fill="#56534e" stroke="#56534e" stroke-width="0.5" stroke-linejoin="round"/><path d="M1159.1 662.4L1157.1 660.5L1156.3 658.2L1158.4 660.2Z" fill="#54524d" stroke="#54524d" stroke-width="0.5" stroke-linejoin="round"/><path d="M1157.1 660.5L1031.2 514.0L1030.2 511.5L1156.3 658.2Z" fill="#54524c" stroke="#54524c" stroke-width="0.5" stroke-linejoin="round"/><path d="M1031.2 514.0L1030.0 512.1L1028.9 509.5L1030.2 511.5Z" fill="#54524d" stroke="#54524d" stroke-width="0.5" stroke-linejoin="round"/><path d="M1030.0 512.1L1029.2 510.2L1028.0 507.4L1028.9 509.5Z" fill="#56534e" stroke="#56534e" stroke-width="0.5" stroke-linejoin="round"/><path d="M1029.2 510.2L1029.0 508.1L1027.8 505.2L1028.0 507.4Z" fill="#595651" stroke="#595651" stroke-width="0.5" stroke-linejoin="round"/><path d="M1257.5 620.5L1256.8 622.8L1257.2 620.0L1258.0 617.7Z" fill="#a29d92" stroke="#a29d92" stroke-width="0.5" stroke-linejoin="round"/><path d="M1256.8 622.8L1255.4 624.9L1255.8 622.0L1257.2 620.0Z" fill="#a29d92" stroke="#a29d92" stroke-width="0.5" stroke-linejoin="round"/><path d="M1255.4 624.9L1253.4 626.7L1253.9 623.9L1255.8 622.0Z" fill="#a29d92" stroke="#a29d92" stroke-width="0.5" stroke-linejoin="round"/><path d="M1253.4 626.7L1251.0 628.2L1251.5 625.3L1253.9 623.9Z" fill="#a29d92" stroke="#a29d92" stroke-width="0.5" stroke-linejoin="round"/><path d="M1251.0 628.2L1179.5 662.6L1179.9 659.8L1251.5 625.3Z" fill="#a29d92" stroke="#a29d92" stroke-width="0.5" stroke-linejoin="round"/><path d="M1179.5 662.6L1176.6 663.7L1177.0 660.8L1179.9 659.8Z" fill="#a29d92" stroke="#a29d92" stroke-width="0.5" stroke-linejoin="round"/><path d="M1176.6 663.7L1173.5 664.3L1173.9 661.5L1177.0 660.8Z" fill="#a29d92" stroke="#a29d92" stroke-width="0.5" stroke-linejoin="round"/><path d="M1173.5 664.3L1170.3 664.4L1170.6 661.6L1173.9 661.5Z" fill="#89857b" stroke="#89857b" stroke-width="0.5" stroke-linejoin="round"/><path d="M1170.3 664.4L1167.0 664.1L1167.4 661.2L1170.6 661.6Z" fill="#807c73" stroke="#807c73" stroke-width="0.5" stroke-linejoin="round"/><path d="M1167.0 664.1L1163.9 663.2L1164.2 660.3L1167.4 661.2Z" fill="#79756d" stroke="#79756d" stroke-width="0.5" stroke-linejoin="round"/><path d="M1163.9 663.2L1161.0 661.9L1161.3 659.0L1164.2 660.3Z" fill="#736f68" stroke="#736f68" stroke-width="0.5" stroke-linejoin="round"/><path d="M1161.0 661.9L1158.4 660.2L1158.8 657.4L1161.3 659.0Z" fill="#6f6b64" stroke="#6f6b64" stroke-width="0.5" stroke-linejoin="round"/><path d="M1158.4 660.2L1156.3 658.2L1156.7 655.3L1158.8 657.4Z" fill="#6d6962" stroke="#6d6962" stroke-width="0.5" stroke-linejoin="round"/><path d="M1156.3 658.2L1030.2 511.5L1030.4 508.6L1156.7 655.3Z" fill="#6d6962" stroke="#6d6962" stroke-width="0.5" stroke-linejoin="round"/><path d="M1030.2 511.5L1028.9 509.5L1029.0 506.6L1030.4 508.6Z" fill="#6d6962" stroke="#6d6962" stroke-width="0.5" stroke-linejoin="round"/><path d="M1028.9 509.5L1028.0 507.4L1028.2 504.5L1029.0 506.6Z" fill="#6f6b64" stroke="#6f6b64" stroke-width="0.5" stroke-linejoin="round"/><path d="M1028.0 507.4L1027.8 505.2L1027.9 502.2L1028.2 504.5Z" fill="#736f68" stroke="#736f68" stroke-width="0.5" stroke-linejoin="round"/><path d="M1258.0 617.7L1257.2 620.0L1256.4 616.8L1257.1 614.7Z" fill="#b0ab9e" stroke="#b0ab9e" stroke-width="0.5" stroke-linejoin="round"/><path d="M1257.2 620.0L1255.8 622.0L1255.1 618.8L1256.4 616.8Z" fill="#b0ab9e" stroke="#b0ab9e" stroke-width="0.5" stroke-linejoin="round"/><path d="M1255.8 622.0L1253.9 623.9L1253.3 620.4L1255.1 618.8Z" fill="#b0ab9e" stroke="#b0ab9e" stroke-width="0.5" stroke-linejoin="round"/><path d="M1253.9 623.9L1251.5 625.3L1251.1 621.7L1253.3 620.4Z" fill="#b0ab9e" stroke="#b0ab9e" stroke-width="0.5" stroke-linejoin="round"/><path d="M1251.5 625.3L1179.9 659.8L1179.4 656.2L1251.1 621.7Z" fill="#b0ab9e" stroke="#b0ab9e" stroke-width="0.5" stroke-linejoin="round"/><path d="M1179.9 659.8L1177.0 660.8L1176.8 657.2L1179.4 656.2Z" fill="#b0ab9e" stroke="#b0ab9e" stroke-width="0.5" stroke-linejoin="round"/><path d="M1177.0 660.8L1173.9 661.5L1173.9 657.7L1176.8 657.2Z" fill="#b0ab9e" stroke="#b0ab9e" stroke-width="0.5" stroke-linejoin="round"/><path d="M1173.9 661.5L1170.6 661.6L1170.9 657.8L1173.9 657.7Z" fill="#959085" stroke="#959085" stroke-width="0.5" stroke-linejoin="round"/><path d="M1170.6 661.6L1167.4 661.2L1167.9 657.5L1170.9 657.8Z" fill="#8b877d" stroke="#8b877d" stroke-width="0.5" stroke-linejoin="round"/><path d="M1167.4 661.2L1164.2 660.3L1165.1 656.7L1167.9 657.5Z" fill="#837f76" stroke="#837f76" stroke-width="0.5" stroke-linejoin="round"/><path d="M1164.2 660.3L1161.3 659.0L1162.4 655.5L1165.1 656.7Z" fill="#7d7970" stroke="#7d7970" stroke-width="0.5" stroke-linejoin="round"/><path d="M1161.3 659.0L1158.8 657.4L1160.0 654.0L1162.4 655.5Z" fill="#78756c" stroke="#78756c" stroke-width="0.5" stroke-linejoin="round"/><path d="M1158.8 657.4L1156.7 655.3L1158.1 652.1L1160.0 654.0Z" fill="#76736a" stroke="#76736a" stroke-width="0.5" stroke-linejoin="round"/><path d="M1156.7 655.3L1030.4 508.6L1031.6 505.4L1158.1 652.1Z" fill="#76736a" stroke="#76736a" stroke-width="0.5" stroke-linejoin="round"/><path d="M1030.4 508.6L1029.0 506.6L1030.3 503.6L1031.6 505.4Z" fill="#76736a" stroke="#76736a" stroke-width="0.5" stroke-linejoin="round"/><path d="M1029.0 506.6L1028.2 504.5L1029.6 501.6L1030.3 503.6Z" fill="#78756c" stroke="#78756c" stroke-width="0.5" stroke-linejoin="round"/><path d="M1028.2 504.5L1027.9 502.2L1029.4 499.6L1029.6 501.6Z" fill="#7d7970" stroke="#7d7970" stroke-width="0.5" stroke-linejoin="round"/><path d="M1257.1 614.7L1256.4 616.8L1254.2 613.7L1254.8 612.0Z" fill="#98948a" stroke="#98948a" stroke-width="0.5" stroke-linejoin="round"/><path d="M1256.4 616.8L1255.1 618.8L1253.1 615.3L1254.2 613.7Z" fill="#98948a" stroke="#98948a" stroke-width="0.5" stroke-linejoin="round"/><path d="M1255.1 618.8L1253.3 620.4L1251.7 616.6L1253.1 615.3Z" fill="#98948a" stroke="#98948a" stroke-width="0.5" stroke-linejoin="round"/><path d="M1253.3 620.4L1251.1 621.7L1249.9 617.7L1251.7 616.6Z" fill="#98948a" stroke="#98948a" stroke-width="0.5" stroke-linejoin="round"/><path d="M1251.1 621.7L1179.4 656.2L1178.1 652.1L1249.9 617.7Z" fill="#98948a" stroke="#98948a" stroke-width="0.5" stroke-linejoin="round"/><path d="M1179.4 656.2L1176.8 657.2L1175.9 652.9L1178.1 652.1Z" fill="#98948a" stroke="#98948a" stroke-width="0.5" stroke-linejoin="round"/><path d="M1176.8 657.2L1173.9 657.7L1173.6 653.4L1175.9 652.9Z" fill="#98948a" stroke="#98948a" stroke-width="0.5" stroke-linejoin="round"/><path d="M1173.9 657.7L1170.9 657.8L1171.2 653.5L1173.6 653.4Z" fill="#807d75" stroke="#807d75" stroke-width="0.5" stroke-linejoin="round"/><path d="M1170.9 657.8L1167.9 657.5L1168.7 653.2L1171.2 653.5Z" fill="#78756d" stroke="#78756d" stroke-width="0.5" stroke-linejoin="round"/><path d="M1167.9 657.5L1165.1 656.7L1166.3 652.6L1168.7 653.2Z" fill="#716e67" stroke="#716e67" stroke-width="0.5" stroke-linejoin="round"/><path d="M1165.1 656.7L1162.4 655.5L1164.2 651.6L1166.3 652.6Z" fill="#6c6962" stroke="#6c6962" stroke-width="0.5" stroke-linejoin="round"/><path d="M1162.4 655.5L1160.0 654.0L1162.2 650.3L1164.2 651.6Z" fill="#68655e" stroke="#68655e" stroke-width="0.5" stroke-linejoin="round"/><path d="M1160.0 654.0L1158.1 652.1L1160.7 648.8L1162.2 650.3Z" fill="#66635d" stroke="#66635d" stroke-width="0.5" stroke-linejoin="round"/><path d="M1158.1 652.1L1031.6 505.4L1033.9 502.2L1160.7 648.8Z" fill="#66635c" stroke="#66635c" stroke-width="0.5" stroke-linejoin="round"/><path d="M1031.6 505.4L1030.3 503.6L1032.9 500.7L1033.9 502.2Z" fill="#66635d" stroke="#66635d" stroke-width="0.5" stroke-linejoin="round"/><path d="M1030.3 503.6L1029.6 501.6L1032.2 499.1L1032.9 500.7Z" fill="#68655e" stroke="#68655e" stroke-width="0.5" stroke-linejoin="round"/><path d="M1029.6 501.6L1029.4 499.6L1032.1 497.4L1032.2 499.1Z" fill="#6c6962" stroke="#6c6962" stroke-width="0.5" stroke-linejoin="round"/><path d="M1254.8 612.0L1254.2 613.7L1250.8 611.4L1251.2 610.2Z" fill="#66635c" stroke="#66635c" stroke-width="0.5" stroke-linejoin="round"/><path d="M1254.2 613.7L1253.1 615.3L1250.1 612.5L1250.8 611.4Z" fill="#66635c" stroke="#66635c" stroke-width="0.5" stroke-linejoin="round"/><path d="M1253.1 615.3L1251.7 616.6L1249.1 613.4L1250.1 612.5Z" fill="#66635c" stroke="#66635c" stroke-width="0.5" stroke-linejoin="round"/><path d="M1251.7 616.6L1249.9 617.7L1247.8 614.2L1249.1 613.4Z" fill="#66635c" stroke="#66635c" stroke-width="0.5" stroke-linejoin="round"/><path d="M1249.9 617.7L1178.1 652.1L1176.0 648.5L1247.8 614.2Z" fill="#66635c" stroke="#66635c" stroke-width="0.5" stroke-linejoin="round"/><path d="M1178.1 652.1L1175.9 652.9L1174.5 649.1L1176.0 648.5Z" fill="#66635c" stroke="#66635c" stroke-width="0.5" stroke-linejoin="round"/><path d="M1175.9 652.9L1173.6 653.4L1172.9 649.4L1174.5 649.1Z" fill="#66635c" stroke="#66635c" stroke-width="0.5" stroke-linejoin="round"/><path d="M1173.6 653.4L1171.2 653.5L1171.2 649.4L1172.9 649.4Z" fill="#56544e" stroke="#56544e" stroke-width="0.5" stroke-linejoin="round"/><path d="M1171.2 653.5L1168.7 653.2L1169.5 649.2L1171.2 649.4Z" fill="#514e49" stroke="#514e49" stroke-width="0.5" stroke-linejoin="round"/><path d="M1168.7 653.2L1166.3 652.6L1167.9 648.8L1169.5 649.2Z" fill="#4c4a45" stroke="#4c4a45" stroke-width="0.5" stroke-linejoin="round"/><path d="M1166.3 652.6L1164.2 651.6L1166.4 648.1L1167.9 648.8Z" fill="#484641" stroke="#484641" stroke-width="0.5" stroke-linejoin="round"/><path d="M1164.2 651.6L1162.2 650.3L1165.0 647.3L1166.4 648.1Z" fill="#46443f" stroke="#46443f" stroke-width="0.5" stroke-linejoin="round"/><path d="M1162.2 650.3L1160.7 648.8L1163.9 646.2L1165.0 647.3Z" fill="#45423e" stroke="#45423e" stroke-width="0.5" stroke-linejoin="round"/><path d="M1160.7 648.8L1033.9 502.2L1037.0 499.7L1163.9 646.2Z" fill="#44423e" stroke="#44423e" stroke-width="0.5" stroke-linejoin="round"/><path d="M1033.9 502.2L1032.9 500.7L1036.3 498.7L1037.0 499.7Z" fill="#45423e" stroke="#45423e" stroke-width="0.5" stroke-linejoin="round"/><path d="M1032.9 500.7L1032.2 499.1L1035.8 497.6L1036.3 498.7Z" fill="#46443f" stroke="#46443f" stroke-width="0.5" stroke-linejoin="round"/><path d="M1032.2 499.1L1032.1 497.4L1035.7 496.4L1035.8 497.6Z" fill="#484641" stroke="#484641" stroke-width="0.5" stroke-linejoin="round"/><path d="M1254.2 624.2L1253.5 626.2L1252.3 627.9L1250.7 629.4L1248.7 630.6L1177.4 665.0L1175.0 665.9L1172.4 666.4L1169.7 666.5L1167.0 666.2L1164.4 665.5L1162.0 664.4L1159.9 663.0L1158.1 661.3L1032.3 514.8L1031.1 513.2L1030.4 511.4L1030.2 509.5L1030.5 507.7" fill="none" stroke="#2a2a27" stroke-width="0.8" stroke-linejoin="round"/><path d="M1035.7 498.0L1035.4 496.6L1036.0 484.3L1036.3 485.7Z" fill="#403d39" stroke="#403d39" stroke-width="0.6" stroke-linejoin="round"/><path d="M1035.7 498.0L1035.4 496.6M1036.0 484.3L1036.3 485.7" stroke="#1c1c1a" stroke-width="0.85" fill="none"/><path d="M1036.6 499.2L1035.7 498.0L1036.3 485.7L1037.1 486.9Z" fill="#3c3a36" stroke="#3c3a36" stroke-width="0.6" stroke-linejoin="round"/><path d="M1036.6 499.2L1035.7 498.0M1036.3 485.7L1037.1 486.9" stroke="#1c1c1a" stroke-width="0.85" fill="none"/><path d="M1164.4 646.8L1036.6 499.2L1037.1 486.9L1165.9 634.7Z" fill="#3c3a36" stroke="#3c3a36" stroke-width="0.6" stroke-linejoin="round"/><path d="M1164.4 646.8L1036.6 499.2M1037.1 486.9L1165.9 634.7" stroke="#1c1c1a" stroke-width="0.85" fill="none"/><path d="M1251.6 610.3L1251.0 611.7L1253.0 599.5L1253.5 598.1Z" fill="#4c4a44" stroke="#4c4a44" stroke-width="0.6" stroke-linejoin="round"/><path d="M1251.6 610.3L1251.0 611.7M1253.0 599.5L1253.5 598.1" stroke="#1c1c1a" stroke-width="0.85" fill="none"/><path d="M1251.0 611.7L1250.0 612.9L1251.9 600.7L1253.0 599.5Z" fill="#4b4843" stroke="#4b4843" stroke-width="0.6" stroke-linejoin="round"/><path d="M1251.0 611.7L1250.0 612.9M1251.9 600.7L1253.0 599.5" stroke="#1c1c1a" stroke-width="0.85" fill="none"/><path d="M1250.0 612.9L1248.5 613.8L1250.5 601.7L1251.9 600.7Z" fill="#4a4742" stroke="#4a4742" stroke-width="0.6" stroke-linejoin="round"/><path d="M1250.0 612.9L1248.5 613.8M1250.5 601.7L1251.9 600.7" stroke="#1c1c1a" stroke-width="0.85" fill="none"/><path d="M1248.5 613.8L1175.3 648.9L1176.8 636.7L1250.5 601.7Z" fill="#4a4742" stroke="#4a4742" stroke-width="0.6" stroke-linejoin="round"/><path d="M1248.5 613.8L1175.3 648.9M1176.8 636.7L1250.5 601.7" stroke="#1c1c1a" stroke-width="0.85" fill="none"/><path d="M1165.8 648.0L1164.4 646.8L1165.9 634.7L1167.2 635.9Z" fill="#3c3a36" stroke="#3c3a36" stroke-width="0.6" stroke-linejoin="round"/><path d="M1165.8 648.0L1164.4 646.8M1165.9 634.7L1167.2 635.9" stroke="#1c1c1a" stroke-width="0.85" fill="none"/><path d="M1175.3 648.9L1173.5 649.5L1175.0 637.4L1176.8 636.7Z" fill="#494742" stroke="#494742" stroke-width="0.6" stroke-linejoin="round"/><path d="M1175.3 648.9L1173.5 649.5M1175.0 637.4L1176.8 636.7" stroke="#1c1c1a" stroke-width="0.85" fill="none"/><path d="M1167.5 648.9L1165.8 648.0L1167.2 635.9L1169.0 636.8Z" fill="#3e3c37" stroke="#3e3c37" stroke-width="0.6" stroke-linejoin="round"/><path d="M1167.5 648.9L1165.8 648.0M1167.2 635.9L1169.0 636.8" stroke="#1c1c1a" stroke-width="0.85" fill="none"/><path d="M1173.5 649.5L1171.5 649.7L1173.0 637.6L1175.0 637.4Z" fill="#484540" stroke="#484540" stroke-width="0.6" stroke-linejoin="round"/><path d="M1173.5 649.5L1171.5 649.7M1173.0 637.6L1175.0 637.4" stroke="#1c1c1a" stroke-width="0.85" fill="none"/><path d="M1169.5 649.5L1167.5 648.9L1169.0 636.8L1170.9 637.4Z" fill="#413f3a" stroke="#413f3a" stroke-width="0.6" stroke-linejoin="round"/><path d="M1169.5 649.5L1167.5 648.9M1169.0 636.8L1170.9 637.4" stroke="#1c1c1a" stroke-width="0.85" fill="none"/><path d="M1171.5 649.7L1169.5 649.5L1170.9 637.4L1173.0 637.6Z" fill="#44423d" stroke="#44423d" stroke-width="0.6" stroke-linejoin="round"/><path d="M1171.5 649.7L1169.5 649.5M1170.9 637.4L1173.0 637.6" stroke="#1c1c1a" stroke-width="0.85" fill="none"/><path d="M1109.4 461.1L1111.1 460.6L1112.9 460.4L1114.8 460.6L1116.6 461.1L1118.2 461.9L1119.4 462.9L1250.2 605.9L1251.1 607.2L1251.6 608.7L1251.6 610.3L1251.0 611.7L1250.0 612.9L1248.5 613.8L1175.3 648.9L1173.5 649.5L1171.5 649.7L1169.5 649.5L1167.5 648.9L1165.8 648.0L1164.4 646.8L1036.6 499.2L1035.7 498.0L1035.4 496.6L1035.6 495.2L1036.2 493.9L1037.3 492.8L1038.8 492.0Z" fill="none" stroke="#1c1c1a" stroke-width="0.5" stroke-linejoin="round"/><path d="M1110.4 448.8L1112.1 448.3L1113.9 448.1L1115.8 448.2L1117.6 448.7L1119.2 449.5L1120.5 450.6L1252.1 593.7L1253.1 595.1L1253.6 596.6L1253.5 598.1L1253.0 599.5L1251.9 600.7L1250.5 601.7L1176.8 636.7L1175.0 637.4L1173.0 637.6L1170.9 637.4L1169.0 636.8L1167.2 635.9L1165.9 634.7L1037.1 486.9L1036.3 485.7L1036.0 484.3L1036.1 482.9L1036.8 481.6L1037.9 480.5L1039.4 479.7ZM1111.5 453.1L1112.6 452.8L1113.9 452.6L1115.2 452.7L1116.4 453.1L1117.4 453.6L1118.3 454.3L1247.4 595.1L1248.1 596.0L1248.4 597.0L1248.4 598.1L1248.0 599.0L1247.3 599.8L1246.3 600.4L1176.3 633.8L1175.0 634.2L1173.7 634.3L1172.3 634.2L1171.0 633.8L1169.9 633.2L1169.0 632.4L1042.4 487.4L1041.8 486.6L1041.6 485.7L1041.7 484.8L1042.2 483.9L1042.9 483.2L1043.9 482.6Z" fill="#85817a" fill-rule="evenodd" stroke="#1c1c1a" stroke-width="0.85" stroke-linejoin="round"/><clipPath id="shc"><path d="M1111.5 453.1L1112.6 452.8L1113.9 452.6L1115.2 452.7L1116.4 453.1L1117.4 453.6L1118.3 454.3L1247.4 595.1L1248.1 596.0L1248.4 597.0L1248.4 598.1L1248.0 599.0L1247.3 599.8L1246.3 600.4L1176.3 633.8L1175.0 634.2L1173.7 634.3L1172.3 634.2L1171.0 633.8L1169.9 633.2L1169.0 632.4L1042.4 487.4L1041.8 486.6L1041.6 485.7L1041.7 484.8L1042.2 483.9L1042.9 483.2L1043.9 482.6Z"/></clipPath><g clip-path="url(#shc)"><path d="M1111.2 457.1L1112.3 456.8L1113.6 456.6L1114.8 456.7L1116.0 457.1L1117.1 457.6L1117.9 458.3L1246.8 599.1L1247.5 600.0L1247.8 601.0L1247.8 602.0L1247.4 603.0L1246.7 603.8L1245.7 604.4L1175.8 637.7L1174.6 638.1L1173.2 638.3L1171.9 638.2L1170.5 637.8L1169.4 637.2L1168.5 636.3L1042.2 491.5L1041.6 490.6L1041.4 489.7L1041.5 488.8L1042.0 487.9L1042.7 487.2L1043.7 486.6ZM1063.7 478.8L1080.0 471.7L1090.0 482.5L1107.6 475.0L1119.1 487.5L1100.7 496.6L1112.5 509.2L1096.6 517.6L1085.9 505.8L1068.4 513.3L1057.5 497.6L1074.1 490.0Z" fill="url(#shfloor)" fill-rule="evenodd"/><path d="M1113.6 456.6L1114.8 456.7L1115.2 452.7L1113.9 452.6Z" fill="#474540" stroke="#474540" stroke-width="0.6" stroke-linejoin="round"/><path d="M1113.6 456.6L1114.8 456.7M1115.2 452.7L1113.9 452.6" stroke="#1c1c1a" stroke-width="0.85" fill="none"/><path d="M1112.3 456.8L1113.6 456.6L1113.9 452.6L1112.6 452.8Z" fill="#4a4843" stroke="#4a4843" stroke-width="0.6" stroke-linejoin="round"/><path d="M1112.3 456.8L1113.6 456.6M1113.9 452.6L1112.6 452.8" stroke="#1c1c1a" stroke-width="0.85" fill="none"/><path d="M1114.8 456.7L1116.0 457.1L1116.4 453.1L1115.2 452.7Z" fill="#43413d" stroke="#43413d" stroke-width="0.6" stroke-linejoin="round"/><path d="M1114.8 456.7L1116.0 457.1M1116.4 453.1L1115.2 452.7" stroke="#1c1c1a" stroke-width="0.85" fill="none"/><path d="M1111.2 457.1L1112.3 456.8L1112.6 452.8L1111.5 453.1Z" fill="#4c4a45" stroke="#4c4a45" stroke-width="0.6" stroke-linejoin="round"/><path d="M1111.2 457.1L1112.3 456.8M1112.6 452.8L1111.5 453.1" stroke="#1c1c1a" stroke-width="0.85" fill="none"/><path d="M1116.0 457.1L1117.1 457.6L1117.4 453.6L1116.4 453.1Z" fill="#403e3a" stroke="#403e3a" stroke-width="0.6" stroke-linejoin="round"/><path d="M1116.0 457.1L1117.1 457.6M1117.4 453.6L1116.4 453.1" stroke="#1c1c1a" stroke-width="0.85" fill="none"/><path d="M1117.1 457.6L1117.9 458.3L1118.3 454.3L1117.4 453.6Z" fill="#3e3d38" stroke="#3e3d38" stroke-width="0.6" stroke-linejoin="round"/><path d="M1117.1 457.6L1117.9 458.3M1118.3 454.3L1117.4 453.6" stroke="#1c1c1a" stroke-width="0.85" fill="none"/><path d="M1043.7 486.6L1111.2 457.1L1111.5 453.1L1043.9 482.6Z" fill="#4c4a45" stroke="#4c4a45" stroke-width="0.6" stroke-linejoin="round"/><path d="M1043.7 486.6L1111.2 457.1M1111.5 453.1L1043.9 482.6" stroke="#1c1c1a" stroke-width="0.85" fill="none"/><path d="M1042.7 487.2L1043.7 486.6L1043.9 482.6L1042.9 483.2Z" fill="#4c4a45" stroke="#4c4a45" stroke-width="0.6" stroke-linejoin="round"/><path d="M1042.7 487.2L1043.7 486.6M1043.9 482.6L1042.9 483.2" stroke="#1c1c1a" stroke-width="0.85" fill="none"/><path d="M1042.0 487.9L1042.7 487.2L1042.9 483.2L1042.2 483.9Z" fill="#4d4b46" stroke="#4d4b46" stroke-width="0.6" stroke-linejoin="round"/><path d="M1042.0 487.9L1042.7 487.2M1042.9 483.2L1042.2 483.9" stroke="#1c1c1a" stroke-width="0.85" fill="none"/><path d="M1041.5 488.8L1042.0 487.9L1042.2 483.9L1041.7 484.8Z" fill="#4f4d48" stroke="#4f4d48" stroke-width="0.6" stroke-linejoin="round"/><path d="M1041.5 488.8L1042.0 487.9M1042.2 483.9L1041.7 484.8" stroke="#1c1c1a" stroke-width="0.85" fill="none"/><path d="M1041.4 489.7L1041.5 488.8L1041.7 484.8L1041.6 485.7Z" fill="#514f49" stroke="#514f49" stroke-width="0.6" stroke-linejoin="round"/><path d="M1041.4 489.7L1041.5 488.8M1041.7 484.8L1041.6 485.7" stroke="#1c1c1a" stroke-width="0.85" fill="none"/><path d="M1117.9 458.3L1246.8 599.1L1247.4 595.1L1118.3 454.3Z" fill="#3e3c38" stroke="#3e3c38" stroke-width="0.6" stroke-linejoin="round"/><path d="M1117.9 458.3L1246.8 599.1M1247.4 595.1L1118.3 454.3" stroke="#1c1c1a" stroke-width="0.85" fill="none"/><path d="M1246.8 599.1L1247.5 600.0L1248.1 596.0L1247.4 595.1Z" fill="#3e3d39" stroke="#3e3d39" stroke-width="0.6" stroke-linejoin="round"/><path d="M1246.8 599.1L1247.5 600.0M1248.1 596.0L1247.4 595.1" stroke="#1c1c1a" stroke-width="0.85" fill="none"/><path d="M1247.5 600.0L1247.8 601.0L1248.4 597.0L1248.1 596.0Z" fill="#42403c" stroke="#42403c" stroke-width="0.6" stroke-linejoin="round"/><path d="M1247.5 600.0L1247.8 601.0M1248.4 597.0L1248.1 596.0" stroke="#1c1c1a" stroke-width="0.85" fill="none"/><path d="M1247.8 601.0L1247.8 602.0L1248.4 598.1L1248.4 597.0Z" fill="#484641" stroke="#484641" stroke-width="0.6" stroke-linejoin="round"/><path d="M1247.8 601.0L1247.8 602.0M1248.4 598.1L1248.4 597.0" stroke="#1c1c1a" stroke-width="0.85" fill="none"/><path d="M1111.6 458.6L1112.5 458.3L1113.6 458.2L1114.6 458.3L1115.6 458.6L1116.5 459.0L1117.2 459.6L1244.7 599.0L1245.3 599.7L1245.5 600.6L1245.5 601.4L1245.2 602.2L1244.6 602.9L1243.8 603.4L1175.3 636.0L1174.3 636.3L1173.2 636.5L1172.0 636.4L1170.9 636.1L1170.0 635.5L1169.2 634.9L1044.2 491.6L1043.7 490.8L1043.5 490.1L1043.6 489.3L1044.0 488.6L1044.6 488.0L1045.4 487.5Z" fill="none" stroke="#1c1c1a" stroke-width="0.5" stroke-linejoin="round"/><path d="M1071.1 489.5L1060.7 478.3L1061.0 473.7L1071.4 484.9Z" fill="#3a3835" stroke="#1c1c1a" stroke-width="0.85" stroke-linejoin="round"/><path d="M1122.0 488.0L1103.7 497.1L1104.0 492.5L1122.4 483.4Z" fill="#474541" stroke="#1c1c1a" stroke-width="0.85" stroke-linejoin="round"/><path d="M1067.5 515.5L1054.7 497.0L1055.0 492.4L1067.8 510.9Z" fill="#3a3835" stroke="#1c1c1a" stroke-width="0.85" stroke-linejoin="round"/><path d="M1085.3 507.9L1067.5 515.5L1067.8 510.9L1085.6 503.3Z" fill="#474541" stroke="#1c1c1a" stroke-width="0.85" stroke-linejoin="round"/><path d="M1115.5 509.6L1096.2 519.8L1096.5 515.2L1115.9 505.0Z" fill="#474541" stroke="#1c1c1a" stroke-width="0.85" stroke-linejoin="round"/><path d="M1096.2 519.8L1085.3 507.9L1085.6 503.3L1096.5 515.2Z" fill="#3a3835" stroke="#1c1c1a" stroke-width="0.85" stroke-linejoin="round"/><path d="M1061.0 473.7L1080.9 465.1L1090.9 475.9L1108.5 468.3L1122.4 483.4L1104.0 492.5L1115.9 505.0L1096.5 515.2L1085.6 503.3L1067.8 510.9L1055.0 492.4L1071.4 484.9ZM1064.0 474.2L1080.3 467.1L1090.4 478.0L1107.9 470.4L1119.5 482.9L1101.1 492.1L1112.9 504.6L1097.0 513.0L1086.2 501.2L1068.6 508.7L1057.7 493.0L1074.4 485.4Z" fill="#74716a" fill-rule="evenodd" stroke="#1c1c1a" stroke-width="0.6" stroke-linejoin="round"/><clipPath id="pq22"><path d="M1064.0 474.2L1080.3 467.1L1090.4 478.0L1107.9 470.4L1119.5 482.9L1101.1 492.1L1112.9 504.6L1097.0 513.0L1086.2 501.2L1068.6 508.7L1057.7 493.0L1074.4 485.4Z"/></clipPath><g clip-path="url(#pq22)"><path d="M1064.0 474.2L1080.3 467.1L1090.4 478.0L1107.9 470.4L1119.5 482.9L1101.1 492.1L1112.9 504.6L1097.0 513.0L1086.2 501.2L1068.6 508.7L1057.7 493.0L1074.4 485.4Z" fill="#4c4a45"/><path d="M1063.4 484.0L1079.6 476.9L1089.7 487.7L1107.1 480.1L1118.6 492.6L1100.3 501.8L1112.1 514.3L1096.2 522.7L1085.5 510.9L1068.0 518.4L1057.2 502.7L1073.8 495.1Z" fill="#fff" fill-rule="evenodd"/><path d="M1063.4 484.0L1079.6 476.9L1080.3 467.1L1064.0 474.2Z" fill="#4c4a45" stroke="#1c1c1a" stroke-width="0.85" stroke-linejoin="round"/><path d="M1079.6 476.9L1089.7 487.7L1090.4 478.0L1080.3 467.1Z" fill="#3e3c38" stroke="#1c1c1a" stroke-width="0.85" stroke-linejoin="round"/><path d="M1089.7 487.7L1107.1 480.1L1107.9 470.4L1090.4 478.0Z" fill="#4c4a45" stroke="#1c1c1a" stroke-width="0.85" stroke-linejoin="round"/><path d="M1107.1 480.1L1118.6 492.6L1119.5 482.9L1107.9 470.4Z" fill="#3e3c38" stroke="#1c1c1a" stroke-width="0.85" stroke-linejoin="round"/><path d="M1057.2 502.7L1073.8 495.1L1074.4 485.4L1057.7 493.0Z" fill="#4c4a45" stroke="#1c1c1a" stroke-width="0.85" stroke-linejoin="round"/><path d="M1100.3 501.8L1112.1 514.3L1112.9 504.6L1101.1 492.1Z" fill="#3e3c38" stroke="#1c1c1a" stroke-width="0.85" stroke-linejoin="round"/></g><path d="M1064.0 474.2L1080.3 467.1L1090.4 478.0L1107.9 470.4L1119.5 482.9L1101.1 492.1L1112.9 504.6L1097.0 513.0L1086.2 501.2L1068.6 508.7L1057.7 493.0L1074.4 485.4Z" fill="none" stroke="#1c1c1a" stroke-width="0.85" stroke-linejoin="round"/><path d="M1135.0 582.4L1134.7 585.8L1135.1 587.7L1136.0 589.6L1137.2 591.4L1138.9 593.0L1140.9 594.3L1143.2 595.4L1145.6 596.3L1148.2 596.7L1150.9 596.9L1153.4 596.7L1155.9 596.1L1158.2 595.3L1160.2 594.1L1162.0 592.7L1163.3 591.1L1164.2 589.3L1164.7 587.4L1164.7 585.4L1165.1 582.0L1165.1 582.0L1165.0 584.0L1164.6 585.9L1163.7 587.7L1162.3 589.3L1160.6 590.7L1158.6 591.9L1156.3 592.7L1153.8 593.3L1151.2 593.5L1148.6 593.3L1146.0 592.9L1143.5 592.0L1141.3 590.9L1139.3 589.6L1137.6 588.0L1136.3 586.2L1135.4 584.3L1135.0 582.4Z" fill="#5f5d57" stroke="#1c1c1a" stroke-width="0.6" stroke-linejoin="round"/><path d="M1162.4 576.4L1163.7 578.2L1164.6 580.1L1165.1 582.0L1165.0 584.0L1164.6 585.9L1163.7 587.7L1162.3 589.3L1160.6 590.7L1158.6 591.9L1156.3 592.7L1153.8 593.3L1151.2 593.5L1148.6 593.3L1146.0 592.9L1143.5 592.0L1141.3 590.9L1139.3 589.6L1137.6 588.0L1136.3 586.2L1135.4 584.3L1135.0 582.4L1135.0 580.4L1135.5 578.5L1136.5 576.7L1137.8 575.1L1139.5 573.7L1141.5 572.6L1143.8 571.7L1146.3 571.2L1148.9 571.0L1151.5 571.1L1154.1 571.6L1156.5 572.4L1158.8 573.5L1160.8 574.9Z" fill="#5f5d57" stroke="#1c1c1a" stroke-width="0.6"/><path d="M1162.4 576.4L1163.7 578.2L1164.6 580.1L1165.1 582.0L1165.0 584.0L1164.6 585.9L1163.7 587.7L1162.3 589.3L1160.6 590.7L1158.6 591.9L1156.3 592.7L1153.8 593.3L1151.2 593.5L1148.6 593.3L1146.0 592.9L1143.5 592.0L1141.3 590.9L1139.3 589.6L1137.6 588.0L1136.3 586.2L1135.4 584.3L1135.0 582.4L1135.0 580.4L1135.5 578.5L1136.5 576.7L1137.8 575.1L1139.5 573.7L1141.5 572.6L1143.8 571.7L1146.3 571.2L1148.9 571.0L1151.5 571.1L1154.1 571.6L1156.5 572.4L1158.8 573.5L1160.8 574.9ZM1158.8 578.1L1159.8 579.5L1160.4 581.0L1160.7 582.6L1160.5 584.1L1159.9 585.6L1159.0 586.9L1157.7 588.1L1156.1 589.0L1154.2 589.7L1152.2 590.1L1150.2 590.1L1148.1 589.9L1146.1 589.4L1144.2 588.6L1142.6 587.5L1141.3 586.3L1140.3 584.8L1139.6 583.3L1139.4 581.8L1139.6 580.3L1140.2 578.8L1141.2 577.5L1142.5 576.3L1144.0 575.4L1145.9 574.8L1147.8 574.4L1149.9 574.3L1152.0 574.5L1154.0 575.1L1155.8 575.9L1157.4 576.9Z" fill="#6a6760" fill-rule="evenodd" stroke="#1c1c1a" stroke-width="0.6" stroke-linejoin="round"/><clipPath id="hh23"><path d="M1158.8 578.1L1159.8 579.5L1160.4 581.0L1160.7 582.6L1160.5 584.1L1159.9 585.6L1159.0 586.9L1157.7 588.1L1156.1 589.0L1154.2 589.7L1152.2 590.1L1150.2 590.1L1148.1 589.9L1146.1 589.4L1144.2 588.6L1142.6 587.5L1141.3 586.3L1140.3 584.8L1139.6 583.3L1139.4 581.8L1139.6 580.3L1140.2 578.8L1141.2 577.5L1142.5 576.3L1144.0 575.4L1145.9 574.8L1147.8 574.4L1149.9 574.3L1152.0 574.5L1154.0 575.1L1155.8 575.9L1157.4 576.9Z"/></clipPath><g clip-path="url(#hh23)"><path d="M1158.8 578.1L1159.8 579.5L1160.4 581.0L1160.7 582.6L1160.5 584.1L1159.9 585.6L1159.0 586.9L1157.7 588.1L1156.1 589.0L1154.2 589.7L1152.2 590.1L1150.2 590.1L1148.1 589.9L1146.1 589.4L1144.2 588.6L1142.6 587.5L1141.3 586.3L1140.3 584.8L1139.6 583.3L1139.4 581.8L1139.6 580.3L1140.2 578.8L1141.2 577.5L1142.5 576.3L1144.0 575.4L1145.9 574.8L1147.8 574.4L1149.9 574.3L1152.0 574.5L1154.0 575.1L1155.8 575.9L1157.4 576.9Z" fill="#45443f"/><path d="M1157.8 586.6L1158.8 588.0L1159.5 589.5L1159.7 591.1L1159.5 592.6L1159.0 594.1L1158.0 595.4L1156.7 596.6L1155.1 597.5L1153.3 598.1L1151.3 598.5L1149.3 598.6L1147.2 598.4L1145.2 597.8L1143.3 597.0L1141.7 596.0L1140.4 594.7L1139.4 593.3L1138.8 591.8L1138.6 590.3L1138.7 588.7L1139.3 587.3L1140.3 586.0L1141.6 584.8L1143.2 583.9L1145.0 583.2L1146.9 582.9L1149.0 582.8L1151.1 583.0L1153.0 583.5L1154.9 584.3L1156.5 585.4Z" fill="#fff"/></g><path d="M1158.8 578.1L1159.8 579.5L1160.4 581.0L1160.7 582.6L1160.5 584.1L1159.9 585.6L1159.0 586.9L1157.7 588.1L1156.1 589.0L1154.2 589.7L1152.2 590.1L1150.2 590.1L1148.1 589.9L1146.1 589.4L1144.2 588.6L1142.6 587.5L1141.3 586.3L1140.3 584.8L1139.6 583.3L1139.4 581.8L1139.6 580.3L1140.2 578.8L1141.2 577.5L1142.5 576.3L1144.0 575.4L1145.9 574.8L1147.8 574.4L1149.9 574.3L1152.0 574.5L1154.0 575.1L1155.8 575.9L1157.4 576.9Z" fill="none" stroke="#1c1c1a" stroke-width="0.6" stroke-linejoin="round"/><path d="M1158.1 609.9L1157.8 613.3L1158.2 615.3L1159.1 617.2L1160.4 619.0L1162.1 620.6L1164.1 622.0L1166.4 623.2L1168.9 624.0L1171.6 624.5L1174.2 624.6L1176.8 624.4L1179.3 623.9L1181.7 623.0L1183.7 621.8L1185.4 620.4L1186.7 618.7L1187.6 616.9L1188.1 614.9L1188.5 611.5L1188.5 611.5L1188.1 613.5L1187.2 615.3L1185.8 617.0L1184.1 618.4L1182.1 619.6L1179.8 620.5L1177.3 621.0L1174.6 621.3L1172.0 621.1L1169.3 620.6L1166.8 619.8L1164.5 618.6L1162.5 617.2L1160.8 615.6L1159.5 613.8L1158.6 611.9L1158.1 609.9Z" fill="#5f5d57" stroke="#1c1c1a" stroke-width="0.6" stroke-linejoin="round"/><path d="M1185.8 603.8L1187.1 605.6L1188.1 607.5L1188.5 609.5L1188.5 611.5L1188.1 613.5L1187.2 615.3L1185.8 617.0L1184.1 618.4L1182.1 619.6L1179.8 620.5L1177.3 621.0L1174.6 621.3L1172.0 621.1L1169.3 620.6L1166.8 619.8L1164.5 618.6L1162.5 617.2L1160.8 615.6L1159.5 613.8L1158.6 611.9L1158.1 609.9L1158.2 607.9L1158.6 605.9L1159.6 604.1L1160.9 602.5L1162.6 601.0L1164.7 599.9L1166.9 599.0L1169.4 598.5L1172.0 598.3L1174.7 598.4L1177.3 598.9L1179.8 599.7L1182.1 600.8L1184.1 602.2Z" fill="#5f5d57" stroke="#1c1c1a" stroke-width="0.6"/><path d="M1185.8 603.8L1187.1 605.6L1188.1 607.5L1188.5 609.5L1188.5 611.5L1188.1 613.5L1187.2 615.3L1185.8 617.0L1184.1 618.4L1182.1 619.6L1179.8 620.5L1177.3 621.0L1174.6 621.3L1172.0 621.1L1169.3 620.6L1166.8 619.8L1164.5 618.6L1162.5 617.2L1160.8 615.6L1159.5 613.8L1158.6 611.9L1158.1 609.9L1158.2 607.9L1158.6 605.9L1159.6 604.1L1160.9 602.5L1162.6 601.0L1164.7 599.9L1166.9 599.0L1169.4 598.5L1172.0 598.3L1174.7 598.4L1177.3 598.9L1179.8 599.7L1182.1 600.8L1184.1 602.2ZM1182.1 605.6L1183.2 607.0L1183.8 608.5L1184.1 610.1L1183.9 611.7L1183.3 613.2L1182.4 614.6L1181.1 615.7L1179.5 616.7L1177.6 617.4L1175.6 617.7L1173.5 617.8L1171.4 617.6L1169.4 617.0L1167.5 616.2L1165.9 615.1L1164.5 613.9L1163.5 612.4L1162.8 610.9L1162.6 609.3L1162.8 607.7L1163.3 606.2L1164.3 604.9L1165.6 603.7L1167.2 602.8L1169.0 602.1L1171.0 601.7L1173.1 601.6L1175.2 601.9L1177.2 602.4L1179.1 603.2L1180.8 604.3Z" fill="#6a6760" fill-rule="evenodd" stroke="#1c1c1a" stroke-width="0.6" stroke-linejoin="round"/><clipPath id="hh24"><path d="M1182.1 605.6L1183.2 607.0L1183.8 608.5L1184.1 610.1L1183.9 611.7L1183.3 613.2L1182.4 614.6L1181.1 615.7L1179.5 616.7L1177.6 617.4L1175.6 617.7L1173.5 617.8L1171.4 617.6L1169.4 617.0L1167.5 616.2L1165.9 615.1L1164.5 613.9L1163.5 612.4L1162.8 610.9L1162.6 609.3L1162.8 607.7L1163.3 606.2L1164.3 604.9L1165.6 603.7L1167.2 602.8L1169.0 602.1L1171.0 601.7L1173.1 601.6L1175.2 601.9L1177.2 602.4L1179.1 603.2L1180.8 604.3Z"/></clipPath><g clip-path="url(#hh24)"><path d="M1182.1 605.6L1183.2 607.0L1183.8 608.5L1184.1 610.1L1183.9 611.7L1183.3 613.2L1182.4 614.6L1181.1 615.7L1179.5 616.7L1177.6 617.4L1175.6 617.7L1173.5 617.8L1171.4 617.6L1169.4 617.0L1167.5 616.2L1165.9 615.1L1164.5 613.9L1163.5 612.4L1162.8 610.9L1162.6 609.3L1162.8 607.7L1163.3 606.2L1164.3 604.9L1165.6 603.7L1167.2 602.8L1169.0 602.1L1171.0 601.7L1173.1 601.6L1175.2 601.9L1177.2 602.4L1179.1 603.2L1180.8 604.3Z" fill="#45443f"/><path d="M1181.1 614.0L1182.1 615.4L1182.7 617.0L1183.0 618.6L1182.8 620.1L1182.3 621.6L1181.3 623.0L1180.0 624.2L1178.4 625.1L1176.6 625.8L1174.6 626.2L1172.5 626.3L1170.4 626.0L1168.4 625.5L1166.5 624.7L1164.9 623.6L1163.5 622.3L1162.5 620.9L1161.9 619.3L1161.6 617.7L1161.8 616.2L1162.4 614.7L1163.3 613.3L1164.6 612.2L1166.2 611.2L1168.0 610.6L1170.0 610.2L1172.1 610.1L1174.2 610.3L1176.2 610.9L1178.1 611.7L1179.7 612.7Z" fill="#fff"/></g><path d="M1182.1 605.6L1183.2 607.0L1183.8 608.5L1184.1 610.1L1183.9 611.7L1183.3 613.2L1182.4 614.6L1181.1 615.7L1179.5 616.7L1177.6 617.4L1175.6 617.7L1173.5 617.8L1171.4 617.6L1169.4 617.0L1167.5 616.2L1165.9 615.1L1164.5 613.9L1163.5 612.4L1162.8 610.9L1162.6 609.3L1162.8 607.7L1163.3 606.2L1164.3 604.9L1165.6 603.7L1167.2 602.8L1169.0 602.1L1171.0 601.7L1173.1 601.6L1175.2 601.9L1177.2 602.4L1179.1 603.2L1180.8 604.3Z" fill="none" stroke="#1c1c1a" stroke-width="0.6" stroke-linejoin="round"/></g><path d="M1111.5 453.1L1112.6 452.8L1113.9 452.6L1115.2 452.7L1116.4 453.1L1117.4 453.6L1118.3 454.3L1247.4 595.1L1248.1 596.0L1248.4 597.0L1248.4 598.1L1248.0 599.0L1247.3 599.8L1246.3 600.4L1176.3 633.8L1175.0 634.2L1173.7 634.3L1172.3 634.2L1171.0 633.8L1169.9 633.2L1169.0 632.4L1042.4 487.4L1041.8 486.6L1041.6 485.7L1041.7 484.8L1042.2 483.9L1042.9 483.2L1043.9 482.6Z" fill="none" stroke="#1c1c1a" stroke-width="0.85" stroke-linejoin="round"/><path d="M1267.4 552.0L1268.9 554.0L1269.8 556.2L1270.0 558.3L1269.5 560.5L1268.5 562.4L1266.8 564.1L1264.6 565.4L1262.0 566.3L1259.2 566.8L1256.2 566.7L1253.3 566.2L1250.5 565.2L1248.1 563.8L1246.0 562.0L1244.6 560.0L1243.7 557.9L1243.5 555.7L1244.0 553.6L1245.1 551.7L1246.7 550.0L1248.9 548.7L1251.5 547.8L1254.3 547.3L1257.3 547.4L1260.2 547.9L1262.9 548.9L1265.4 550.3ZM1291.6 577.5L1293.1 579.5L1294.0 581.7L1294.2 583.9L1293.8 586.1L1292.7 588.1L1291.1 589.8L1288.9 591.2L1286.3 592.1L1283.4 592.6L1280.4 592.5L1277.4 592.0L1274.6 590.9L1272.1 589.5L1270.1 587.7L1268.6 585.7L1267.7 583.5L1267.5 581.2L1267.9 579.1L1269.0 577.1L1270.7 575.4L1272.9 574.1L1275.4 573.1L1278.3 572.7L1281.3 572.8L1284.2 573.3L1287.0 574.3L1289.5 575.7Z" fill="#000" opacity="0.3" filter="url(#bl5)"/><path d="M1246.2 541.1L1245.6 544.4L1245.8 545.9L1246.3 547.4L1247.1 548.9L1248.1 550.2L1249.5 551.4L1251.0 552.5L1252.8 553.4L1254.7 554.1L1256.7 554.6L1258.7 554.8L1260.7 554.9L1262.7 554.6L1264.6 554.2L1266.3 553.5L1267.9 552.7L1269.2 551.6L1270.3 550.4L1271.0 549.1L1271.5 547.6L1271.6 546.2L1272.2 542.8L1272.2 542.8L1272.0 544.3L1271.6 545.7L1270.8 547.0L1269.8 548.2L1268.4 549.3L1266.9 550.1L1265.2 550.8L1263.3 551.3L1261.3 551.5L1259.2 551.5L1257.2 551.2L1255.2 550.7L1253.3 550.0L1251.6 549.1L1250.0 548.1L1248.7 546.8L1247.6 545.5L1246.8 544.0L1246.3 542.6L1246.2 541.1Z" fill="url(#btnside)" stroke="#1c1c1a" stroke-width="0.85" stroke-linejoin="round"/><path d="M1269.6 537.1L1270.7 538.4L1271.5 539.8L1272.0 541.3L1272.2 542.8L1272.0 544.3L1271.6 545.7L1270.8 547.0L1269.8 548.2L1268.4 549.3L1266.9 550.1L1265.2 550.8L1263.3 551.3L1261.3 551.5L1259.2 551.5L1257.2 551.2L1255.2 550.7L1253.3 550.0L1251.6 549.1L1250.0 548.1L1248.7 546.8L1247.6 545.5L1246.8 544.0L1246.3 542.6L1246.2 541.1L1246.3 539.6L1246.8 538.2L1247.6 536.9L1248.6 535.7L1249.9 534.6L1251.5 533.8L1253.2 533.1L1255.1 532.7L1257.1 532.5L1259.1 532.5L1261.1 532.7L1263.1 533.2L1265.0 533.9L1266.7 534.8L1268.3 535.8Z" fill="#6d6a63" stroke="#1c1c1a" stroke-width="0.85"/><path d="M1268.0 537.8L1269.1 539.2L1269.8 540.8L1270.2 542.3L1270.1 543.9L1269.5 545.4L1268.6 546.8L1267.3 547.9L1265.7 548.9L1263.8 549.6L1261.8 549.9L1259.7 550.0L1257.5 549.8L1255.4 549.2L1253.4 548.4L1251.7 547.3L1250.3 546.1L1249.2 544.6L1248.5 543.1L1248.2 541.5L1248.3 540.0L1248.8 538.5L1249.8 537.1L1251.1 536.0L1252.7 535.0L1254.5 534.4L1256.5 534.0L1258.7 533.9L1260.8 534.1L1262.9 534.7L1264.8 535.5L1266.6 536.5Z" fill="#55534d" fill-rule="evenodd" stroke="#1c1c1a" stroke-width="0.5" stroke-linejoin="round"/><path d="M1252.1 527.7L1250.0 541.3L1250.1 542.4L1250.4 543.4L1251.0 544.4L1251.8 545.4L1252.7 546.2L1253.8 547.0L1255.0 547.6L1256.4 548.1L1257.8 548.5L1259.2 548.6L1260.7 548.7L1262.1 548.5L1263.4 548.2L1264.6 547.7L1265.7 547.1L1266.6 546.4L1267.4 545.5L1267.9 544.6L1268.2 543.6L1268.3 542.5L1270.6 528.9L1270.6 528.9L1270.5 530.0L1270.2 531.0L1269.6 531.9L1268.9 532.8L1267.9 533.5L1266.8 534.1L1265.6 534.6L1264.3 534.9L1262.9 535.1L1261.4 535.0L1260.0 534.9L1258.5 534.5L1257.2 534.0L1256.0 533.4L1254.8 532.6L1253.9 531.8L1253.1 530.8L1252.6 529.8L1252.2 528.8L1252.1 527.7Z" fill="url(#btnside)" stroke="#1c1c1a" stroke-width="0.85" stroke-linejoin="round"/><path d="M1268.8 524.9L1269.5 525.8L1270.1 526.8L1270.5 527.9L1270.6 528.9L1270.5 530.0L1270.2 531.0L1269.6 531.9L1268.9 532.8L1267.9 533.5L1266.8 534.1L1265.6 534.6L1264.3 534.9L1262.9 535.1L1261.4 535.0L1260.0 534.9L1258.5 534.5L1257.2 534.0L1256.0 533.4L1254.8 532.6L1253.9 531.8L1253.1 530.8L1252.6 529.8L1252.2 528.8L1252.1 527.7L1252.2 526.7L1252.5 525.7L1253.1 524.7L1253.8 523.9L1254.8 523.2L1255.9 522.6L1257.1 522.1L1258.4 521.8L1259.8 521.6L1261.3 521.6L1262.7 521.8L1264.1 522.2L1265.5 522.6L1266.7 523.3L1267.8 524.0Z" fill="#8a857b" stroke="#1c1c1a" stroke-width="0.85"/><path d="M1270.3 566.7L1269.8 570.0L1269.9 571.5L1270.4 573.1L1271.2 574.5L1272.3 575.9L1273.7 577.1L1275.3 578.2L1277.1 579.2L1279.0 579.9L1281.0 580.4L1283.1 580.6L1285.1 580.6L1287.1 580.4L1289.0 580.0L1290.8 579.3L1292.3 578.4L1293.6 577.3L1294.7 576.1L1295.5 574.7L1295.9 573.3L1296.0 571.8L1296.6 568.4L1296.6 568.4L1296.5 569.9L1296.1 571.4L1295.3 572.7L1294.3 574.0L1292.9 575.0L1291.4 575.9L1289.6 576.6L1287.7 577.1L1285.7 577.3L1283.7 577.3L1281.6 577.0L1279.6 576.5L1277.6 575.8L1275.9 574.9L1274.3 573.8L1272.9 572.5L1271.8 571.2L1271.0 569.7L1270.5 568.2L1270.3 566.7Z" fill="url(#btnside)" stroke="#1c1c1a" stroke-width="0.85" stroke-linejoin="round"/><path d="M1294.0 562.6L1295.1 563.9L1295.9 565.4L1296.4 566.9L1296.6 568.4L1296.5 569.9L1296.1 571.4L1295.3 572.7L1294.3 574.0L1292.9 575.0L1291.4 575.9L1289.6 576.6L1287.7 577.1L1285.7 577.3L1283.7 577.3L1281.6 577.0L1279.6 576.5L1277.6 575.8L1275.9 574.9L1274.3 573.8L1272.9 572.5L1271.8 571.2L1271.0 569.7L1270.5 568.2L1270.3 566.7L1270.5 565.2L1270.9 563.7L1271.7 562.4L1272.8 561.1L1274.1 560.1L1275.6 559.2L1277.4 558.5L1279.3 558.1L1281.3 557.9L1283.3 557.9L1285.4 558.1L1287.4 558.6L1289.3 559.3L1291.0 560.2L1292.6 561.3Z" fill="#6d6a63" stroke="#1c1c1a" stroke-width="0.85"/><path d="M1292.4 563.3L1293.5 564.8L1294.3 566.3L1294.6 568.0L1294.5 569.6L1294.0 571.1L1293.1 572.5L1291.8 573.7L1290.2 574.6L1288.3 575.3L1286.2 575.7L1284.1 575.8L1281.9 575.5L1279.8 575.0L1277.8 574.2L1276.0 573.1L1274.5 571.8L1273.4 570.3L1272.7 568.7L1272.4 567.1L1272.5 565.5L1273.0 564.0L1273.9 562.6L1275.2 561.4L1276.8 560.5L1278.7 559.8L1280.7 559.4L1282.9 559.3L1285.1 559.6L1287.2 560.1L1289.2 561.0L1290.9 562.0Z" fill="#55534d" fill-rule="evenodd" stroke="#1c1c1a" stroke-width="0.5" stroke-linejoin="round"/><path d="M1276.5 553.3L1274.2 566.9L1274.3 568.0L1274.7 569.1L1275.3 570.1L1276.0 571.1L1277.0 571.9L1278.1 572.7L1279.4 573.4L1280.7 573.9L1282.1 574.2L1283.6 574.4L1285.1 574.4L1286.5 574.2L1287.8 573.9L1289.0 573.4L1290.1 572.8L1291.1 572.1L1291.8 571.2L1292.3 570.2L1292.7 569.2L1292.8 568.2L1295.2 554.6L1295.2 554.6L1295.1 555.6L1294.8 556.7L1294.2 557.6L1293.5 558.5L1292.6 559.3L1291.5 559.9L1290.2 560.4L1288.9 560.7L1287.4 560.8L1286.0 560.8L1284.5 560.6L1283.1 560.3L1281.7 559.8L1280.5 559.1L1279.3 558.4L1278.4 557.5L1277.6 556.5L1277.0 555.5L1276.6 554.4L1276.5 553.3Z" fill="url(#btnside)" stroke="#1c1c1a" stroke-width="0.85" stroke-linejoin="round"/><path d="M1293.3 550.4L1294.1 551.4L1294.7 552.4L1295.1 553.5L1295.2 554.6L1295.1 555.6L1294.8 556.7L1294.2 557.6L1293.5 558.5L1292.6 559.3L1291.5 559.9L1290.2 560.4L1288.9 560.7L1287.4 560.8L1286.0 560.8L1284.5 560.6L1283.1 560.3L1281.7 559.8L1280.5 559.1L1279.3 558.4L1278.4 557.5L1277.6 556.5L1277.0 555.5L1276.6 554.4L1276.5 553.3L1276.6 552.3L1276.9 551.3L1277.5 550.3L1278.2 549.4L1279.2 548.7L1280.3 548.1L1281.5 547.6L1282.8 547.3L1284.3 547.1L1285.7 547.1L1287.2 547.3L1288.6 547.7L1290.0 548.2L1291.2 548.8L1292.4 549.6Z" fill="#8a857b" stroke="#1c1c1a" stroke-width="0.85"/><path d="M1317.0 727.0L1322.0 722.0L1413.0 823.0L1408.0 828.0Z" fill="#000" opacity="0.2" filter="url(#bl3)"/><defs><linearGradient id="rodg" gradientUnits="userSpaceOnUse" x1="1360.500" y1="775.500" x2="1367.500" y2="769.500"><stop offset="0" stop-color="#55534d"/><stop offset="0.3" stop-color="#8b8b88"/><stop offset="0.6" stop-color="#a49e92"/><stop offset="1" stop-color="#6a675f"/></linearGradient></defs><path d="M1315.600 725.200L1323.600 719.700L1412.300 819.800L1404.300 824.300Z" fill="url(#rodg)" stroke="#2a2a28" stroke-width="0.5"/><path d="M1315.600 725.200C1315 722 1320 718.500 1323.600 719.700" fill="#3a3935" stroke="#1c1c1a" stroke-width="0.8"/><ellipse cx="1408.600" cy="822.800" rx="5.300" ry="3" transform="rotate(-38 1408.600 822.800)" fill="#8a867c" stroke="#1c1c1a" stroke-width="0.9"/><path d="M996.7 526.5L998.8 525.8L1001.1 525.6L1003.4 525.8L1005.6 526.4L1007.5 527.4L1009.0 528.8L1140.0 683.5L1141.2 685.2L1141.7 687.1L1141.5 689.1L1140.8 690.9L1139.4 692.4L1137.5 693.6L1057.9 732.1L1055.6 732.9L1053.1 733.2L1050.6 732.9L1048.2 732.2L1046.1 731.0L1044.5 729.4L917.0 569.3L916.1 567.7L915.8 565.9L916.1 564.2L917.0 562.6L918.4 561.2L920.3 560.1Z" fill="#000" opacity="0.38" filter="url(#bl5)"/><path d="M917.1 562.7L916.8 560.9L916.6 551.5L917.0 553.2Z" fill="#4f4c47" stroke="#4f4c47" stroke-width="0.6" stroke-linejoin="round"/><path d="M917.1 562.7L916.8 560.9M916.6 551.5L917.0 553.2" stroke="#1c1c1a" stroke-width="0.85" fill="none"/><path d="M918.0 564.3L917.1 562.7L917.0 553.2L917.9 554.8Z" fill="#4a4843" stroke="#4a4843" stroke-width="0.6" stroke-linejoin="round"/><path d="M918.0 564.3L917.1 562.7M917.0 553.2L917.9 554.8" stroke="#1c1c1a" stroke-width="0.85" fill="none"/><path d="M1045.5 724.4L918.0 564.3L917.9 554.8L1046.0 715.2Z" fill="#4a4843" stroke="#4a4843" stroke-width="0.6" stroke-linejoin="round"/><path d="M1045.5 724.4L918.0 564.3M917.9 554.8L1046.0 715.2" stroke="#1c1c1a" stroke-width="0.85" fill="none"/><path d="M1142.5 684.1L1141.8 685.9L1142.8 676.6L1143.6 674.7Z" fill="#5e5b55" stroke="#5e5b55" stroke-width="0.6" stroke-linejoin="round"/><path d="M1142.5 684.1L1141.8 685.9M1142.8 676.6L1143.6 674.7" stroke="#1c1c1a" stroke-width="0.85" fill="none"/><path d="M1141.8 685.9L1140.4 687.4L1141.4 678.1L1142.8 676.6Z" fill="#5c5a53" stroke="#5c5a53" stroke-width="0.6" stroke-linejoin="round"/><path d="M1141.8 685.9L1140.4 687.4M1141.4 678.1L1142.8 676.6" stroke="#1c1c1a" stroke-width="0.85" fill="none"/><path d="M1140.4 687.4L1138.5 688.6L1139.5 679.3L1141.4 678.1Z" fill="#5b5852" stroke="#5b5852" stroke-width="0.6" stroke-linejoin="round"/><path d="M1140.4 687.4L1138.5 688.6M1139.5 679.3L1141.4 678.1" stroke="#1c1c1a" stroke-width="0.85" fill="none"/><path d="M1138.5 688.6L1058.9 727.1L1059.5 717.8L1139.5 679.3Z" fill="#5b5852" stroke="#5b5852" stroke-width="0.6" stroke-linejoin="round"/><path d="M1138.5 688.6L1058.9 727.1M1059.5 717.8L1139.5 679.3" stroke="#1c1c1a" stroke-width="0.85" fill="none"/><path d="M1047.1 726.0L1045.5 724.4L1046.0 715.2L1047.7 716.7Z" fill="#4a4843" stroke="#4a4843" stroke-width="0.6" stroke-linejoin="round"/><path d="M1047.1 726.0L1045.5 724.4M1046.0 715.2L1047.7 716.7" stroke="#1c1c1a" stroke-width="0.85" fill="none"/><path d="M1049.2 727.2L1047.1 726.0L1047.7 716.7L1049.8 717.9Z" fill="#4c4a45" stroke="#4c4a45" stroke-width="0.6" stroke-linejoin="round"/><path d="M1049.2 727.2L1047.1 726.0M1047.7 716.7L1049.8 717.9" stroke="#1c1c1a" stroke-width="0.85" fill="none"/><path d="M1058.9 727.1L1056.6 727.9L1057.2 718.6L1059.5 717.8Z" fill="#5b5852" stroke="#5b5852" stroke-width="0.6" stroke-linejoin="round"/><path d="M1058.9 727.1L1056.6 727.9M1057.2 718.6L1059.5 717.8" stroke="#1c1c1a" stroke-width="0.85" fill="none"/><path d="M1051.6 727.9L1049.2 727.2L1049.8 717.9L1052.2 718.7Z" fill="#504e48" stroke="#504e48" stroke-width="0.6" stroke-linejoin="round"/><path d="M1051.6 727.9L1049.2 727.2M1049.8 717.9L1052.2 718.7" stroke="#1c1c1a" stroke-width="0.85" fill="none"/><path d="M1056.6 727.9L1054.1 728.2L1054.7 718.9L1057.2 718.6Z" fill="#585650" stroke="#585650" stroke-width="0.6" stroke-linejoin="round"/><path d="M1056.6 727.9L1054.1 728.2M1054.7 718.9L1057.2 718.6" stroke="#1c1c1a" stroke-width="0.85" fill="none"/><path d="M1054.1 728.2L1051.6 727.9L1052.2 718.7L1054.7 718.9Z" fill="#55524c" stroke="#55524c" stroke-width="0.6" stroke-linejoin="round"/><path d="M1054.1 728.2L1051.6 727.9M1052.2 718.7L1054.7 718.9" stroke="#1c1c1a" stroke-width="0.85" fill="none"/><path d="M997.9 512.0L1000.1 511.3L1002.4 511.1L1004.7 511.3L1006.9 511.9L1008.8 512.9L1010.3 514.3L1142.1 669.1L1143.2 670.9L1143.7 672.8L1143.6 674.7L1142.8 676.6L1141.4 678.1L1139.5 679.3L1059.5 717.8L1057.2 718.6L1054.7 718.9L1052.2 718.7L1049.8 717.9L1047.7 716.7L1046.0 715.2L917.9 554.8L917.0 553.2L916.6 551.5L916.9 549.7L917.8 548.1L919.3 546.7L921.1 545.6ZM933.4 560.9L949.2 553.9L941.5 544.5L973.3 530.5L979.4 537.8L990.1 538.0L995.8 535.5L986.7 524.7L1002.0 517.9L1131.9 671.5L1054.3 708.7Z" fill="#8e8a80" fill-rule="evenodd" stroke="#1c1c1a" stroke-width="0.85" stroke-linejoin="round"/><clipPath id="pq28"><path d="M933.4 560.9L949.2 553.9L941.5 544.5L973.3 530.5L979.4 537.8L990.1 538.0L995.8 535.5L986.7 524.7L1002.0 517.9L1131.9 671.5L1054.3 708.7Z"/></clipPath><g clip-path="url(#pq28)"><path d="M933.5 563.7L949.2 556.7L941.5 547.3L973.3 533.3L979.3 540.6L990.1 540.8L995.7 538.3L986.6 527.5L1001.9 520.7L1131.7 674.3L1054.1 711.5Z" fill="#8c887e" fill-rule="evenodd"/><path d="M986.6 527.5L1001.9 520.7L1002.0 517.9L986.7 524.7Z" fill="#5b5852" stroke="#1c1c1a" stroke-width="0.85" stroke-linejoin="round"/><path d="M973.3 533.3L979.3 540.6L979.4 537.8L973.3 530.5Z" fill="#4a4843" stroke="#1c1c1a" stroke-width="0.85" stroke-linejoin="round"/><path d="M990.1 540.8L995.7 538.3L995.8 535.5L990.1 538.0Z" fill="#5b5852" stroke="#1c1c1a" stroke-width="0.85" stroke-linejoin="round"/><path d="M941.5 547.3L973.3 533.3L973.3 530.5L941.5 544.5Z" fill="#5b5852" stroke="#1c1c1a" stroke-width="0.85" stroke-linejoin="round"/><path d="M979.3 540.6L990.1 540.8L990.1 538.0L979.4 537.8Z" fill="#56544d" stroke="#1c1c1a" stroke-width="0.85" stroke-linejoin="round"/><path d="M933.5 563.7L949.2 556.7L949.2 553.9L933.4 560.9Z" fill="#5b5852" stroke="#1c1c1a" stroke-width="0.85" stroke-linejoin="round"/><path d="M1001.9 520.7L1131.7 674.3L1131.9 671.5L1002.0 517.9Z" fill="#4a4843" stroke="#1c1c1a" stroke-width="0.85" stroke-linejoin="round"/><clipPath id="pq25"><path d="M1004.8 534.3L1010.8 531.6L1130.4 673.3L1124.2 676.2Z"/></clipPath><g clip-path="url(#pq25)"><path d="M1004.6 538.2L1010.6 535.6L1130.0 677.1L1123.8 680.1Z" fill="#7f7b72" fill-rule="evenodd"/><path d="M1004.6 538.2L1010.6 535.6L1010.8 531.6L1004.8 534.3Z" fill="#5b5852" stroke="#1c1c1a" stroke-width="0.85" stroke-linejoin="round"/><path d="M1010.6 535.6L1130.0 677.1L1130.4 673.3L1010.8 531.6Z" fill="#4a4843" stroke="#1c1c1a" stroke-width="0.85" stroke-linejoin="round"/></g><path d="M1004.8 534.3L1010.8 531.6L1130.4 673.3L1124.2 676.2Z" fill="none" stroke="#1c1c1a" stroke-width="0.85" stroke-linejoin="round"/><clipPath id="pq26"><path d="M1010.7 595.2L1042.8 580.6L1123.0 676.0L1090.1 691.8Z"/></clipPath><g clip-path="url(#pq26)"><path d="M1010.5 599.1L1042.6 584.5L1122.6 679.9L1089.8 695.6Z" fill="#8a867c" fill-rule="evenodd"/><path d="M1010.5 599.1L1042.6 584.5L1042.8 580.6L1010.7 595.2Z" fill="#5b5852" stroke="#1c1c1a" stroke-width="0.85" stroke-linejoin="round"/><path d="M1042.6 584.5L1122.6 679.9L1123.0 676.0L1042.8 580.6Z" fill="#4a4843" stroke="#1c1c1a" stroke-width="0.85" stroke-linejoin="round"/></g><path d="M1010.7 595.2L1042.8 580.6L1123.0 676.0L1090.1 691.8Z" fill="none" stroke="#1c1c1a" stroke-width="0.85" stroke-linejoin="round"/><clipPath id="pq27"><path d="M1012.0 650.3L1032.4 640.8L1076.1 694.4L1071.0 696.8L1065.6 695.3L1064.3 700.0L1055.5 704.2Z"/></clipPath><g clip-path="url(#pq27)"><path d="M1011.8 654.1L1032.2 644.7L1075.8 698.2L1070.7 700.6L1065.4 699.1L1064.1 703.8L1055.2 708.1Z" fill="#8a867c" fill-rule="evenodd"/><path d="M1011.8 654.1L1032.2 644.7L1032.4 640.8L1012.0 650.3Z" fill="#5b5852" stroke="#1c1c1a" stroke-width="0.85" stroke-linejoin="round"/><path d="M1032.2 644.7L1075.8 698.2L1076.1 694.4L1032.4 640.8Z" fill="#4a4843" stroke="#1c1c1a" stroke-width="0.85" stroke-linejoin="round"/></g><path d="M1012.0 650.3L1032.4 640.8L1076.1 694.4L1071.0 696.8L1065.6 695.3L1064.3 700.0L1055.5 704.2Z" fill="none" stroke="#1c1c1a" stroke-width="0.85" stroke-linejoin="round"/><path d="M955.0 588.6L960.9 586.1L973.3 588.6L979.9 597.8L1010.8 582.8L999.9 569.6" fill="none" stroke="#1c1c1a" stroke-width="0.6" stroke-linejoin="round"/><path d="M1010.7 595.2L991.8 604.4L1024.4 644.5" fill="none" stroke="#1c1c1a" stroke-width="0.6" stroke-linejoin="round"/><path d="M970.1 580.1L956.2 563.0L956.2 560.5L970.1 577.6Z" fill="#4a4843" stroke="#1c1c1a" stroke-width="0.85" stroke-linejoin="round"/><path d="M994.0 569.3L970.1 580.1L970.1 577.6L994.1 566.9Z" fill="#5b5852" stroke="#1c1c1a" stroke-width="0.85" stroke-linejoin="round"/><path d="M956.2 560.5L980.1 549.9L994.1 566.9L970.1 577.6Z" fill="#8e8a80" fill-rule="evenodd" stroke="#1c1c1a" stroke-width="0.85" stroke-linejoin="round"/><path d="M969.3 560.6L969.3 563.8L969.5 564.9L970.1 565.9L971.1 566.8L972.3 567.5L973.7 567.9L975.3 568.0L976.8 567.9L978.2 567.4L979.4 566.7L980.3 565.8L980.8 564.8L981.0 563.6L981.0 560.5L981.0 560.5L980.9 561.6L980.3 562.7L979.4 563.6L978.2 564.3L976.8 564.7L975.3 564.9L973.8 564.8L972.4 564.4L971.1 563.7L970.2 562.8L969.5 561.7L969.3 560.6Z" fill="#55534d" stroke="#1c1c1a" stroke-width="0.85" stroke-linejoin="round"/><path d="M980.2 558.3L980.8 559.4L981.0 560.5L980.9 561.6L980.3 562.7L979.4 563.6L978.2 564.3L976.8 564.7L975.3 564.9L973.8 564.8L972.4 564.4L971.1 563.7L970.2 562.8L969.5 561.7L969.3 560.6L969.5 559.5L970.0 558.5L970.9 557.5L972.1 556.8L973.5 556.4L975.0 556.2L976.5 556.4L978.0 556.8L979.2 557.5Z" fill="#8e8a80" stroke="#1c1c1a" stroke-width="0.85"/><path d="M971.9 557.5L971.8 560.3L971.9 561.1L972.3 561.8L973.0 562.4L973.9 562.8L974.9 563.0L975.9 563.0L976.9 562.7L977.7 562.2L978.3 561.5L978.5 560.8L978.6 558.0L978.6 558.0L978.3 558.7L977.8 559.4L977.0 559.9L976.0 560.2L974.9 560.2L973.9 560.0L973.0 559.6L972.4 559.0L972.0 558.3L971.9 557.5Z" fill="#55534d" stroke="#1c1c1a" stroke-width="0.85" stroke-linejoin="round"/><path d="M978.1 556.5L978.5 557.2L978.6 558.0L978.3 558.7L977.8 559.4L977.0 559.9L976.0 560.2L974.9 560.2L973.9 560.0L973.0 559.6L972.4 559.0L972.0 558.3L971.9 557.5L972.1 556.8L972.7 556.1L973.5 555.6L974.4 555.3L975.5 555.3L976.5 555.5L977.4 555.9Z" fill="#8e8a80" stroke="#1c1c1a" stroke-width="0.85"/><path d="M1014.3 584.0L1001.1 568.1L1001.2 565.6L1014.4 581.6Z" fill="#4a4843" stroke="#1c1c1a" stroke-width="0.85" stroke-linejoin="round"/><path d="M1032.8 575.7L1014.3 584.0L1014.4 581.6L1032.9 573.2Z" fill="#5b5852" stroke="#1c1c1a" stroke-width="0.85" stroke-linejoin="round"/><path d="M1001.2 565.6L1019.6 557.4L1032.9 573.2L1014.4 581.6Z" fill="#8e8a80" fill-rule="evenodd" stroke="#1c1c1a" stroke-width="0.85" stroke-linejoin="round"/><path d="M1019.0 568.5L1019.2 569.0L1019.3 569.5L1019.1 570.0L1018.8 570.5L1018.2 570.9L1017.5 571.1L1016.8 571.1L1016.1 571.0L1015.5 570.7L1015.0 570.3L1014.7 569.7L1014.6 569.2L1014.8 568.7L1015.2 568.2L1015.7 567.9L1016.4 567.7L1017.1 567.6L1017.8 567.8L1018.5 568.1Z" fill="#3a3935" stroke="#1c1c1a" stroke-width="0.6"/><path d="M1046.8 647.4L1032.6 630.1L1032.7 627.7L1046.9 644.9Z" fill="#4a4843" stroke="#1c1c1a" stroke-width="0.85" stroke-linejoin="round"/><path d="M1065.5 638.6L1046.8 647.4L1046.9 644.9L1065.7 636.2Z" fill="#5b5852" stroke="#1c1c1a" stroke-width="0.85" stroke-linejoin="round"/><path d="M1032.7 627.7L1051.5 619.0L1065.7 636.2L1046.9 644.9Z" fill="#8e8a80" fill-rule="evenodd" stroke="#1c1c1a" stroke-width="0.85" stroke-linejoin="round"/><path d="M1051.2 630.9L1051.5 631.5L1051.5 632.0L1051.4 632.6L1051.0 633.1L1050.4 633.4L1049.8 633.7L1049.0 633.7L1048.3 633.6L1047.6 633.2L1047.1 632.8L1046.8 632.3L1046.7 631.7L1046.9 631.1L1047.3 630.7L1047.8 630.3L1048.5 630.1L1049.3 630.0L1050.0 630.2L1050.7 630.5Z" fill="#3a3935" stroke="#1c1c1a" stroke-width="0.6"/><path d="M1085.8 695.4L1073.7 680.6L1073.9 678.2L1086.0 693.0Z" fill="#4a4843" stroke="#1c1c1a" stroke-width="0.85" stroke-linejoin="round"/><path d="M1103.3 687.0L1085.8 695.4L1086.0 693.0L1103.5 684.6Z" fill="#5b5852" stroke="#1c1c1a" stroke-width="0.85" stroke-linejoin="round"/><path d="M1073.9 678.2L1091.3 669.9L1103.5 684.6L1086.0 693.0Z" fill="#8e8a80" fill-rule="evenodd" stroke="#1c1c1a" stroke-width="0.85" stroke-linejoin="round"/><path d="M1090.7 680.4L1091.0 681.0L1091.1 681.6L1091.0 682.1L1090.6 682.6L1090.0 683.0L1089.3 683.2L1088.6 683.3L1087.8 683.1L1087.1 682.8L1086.6 682.4L1086.3 681.8L1086.2 681.2L1086.4 680.6L1086.8 680.1L1087.3 679.8L1088.0 679.5L1088.8 679.5L1089.5 679.6L1090.2 680.0Z" fill="#3a3935" stroke="#1c1c1a" stroke-width="0.6"/><path d="M1042.9 682.6L1039.1 678.0L1039.3 674.7L1043.1 679.3Z" fill="#4a4843" stroke="#1c1c1a" stroke-width="0.85" stroke-linejoin="round"/><path d="M1049.5 679.5L1042.9 682.6L1043.1 679.3L1049.7 676.2Z" fill="#5b5852" stroke="#1c1c1a" stroke-width="0.85" stroke-linejoin="round"/><path d="M1039.3 674.7L1045.9 671.6L1049.7 676.2L1043.1 679.3Z" fill="#8e8a80" fill-rule="evenodd" stroke="#1c1c1a" stroke-width="0.85" stroke-linejoin="round"/><path d="M937.3 564.1L1054.2 709.5L1121.8 677.1" fill="none" stroke="#1c1c1a" stroke-width="0.5" stroke-linejoin="round"/></g><path d="M933.4 560.9L949.2 553.9L941.5 544.5L973.3 530.5L979.4 537.8L990.1 538.0L995.8 535.5L986.7 524.7L1002.0 517.9L1131.9 671.5L1054.3 708.7Z" fill="none" stroke="#1c1c1a" stroke-width="0.85" stroke-linejoin="round"/><path d="M928.5 553.0L928.7 553.5L928.8 553.9L928.6 554.4L928.3 554.8L927.8 555.1L927.2 555.2L926.6 555.3L926.0 555.1L925.5 554.9L925.1 554.5L924.8 554.1L924.8 553.7L924.9 553.2L925.3 552.8L925.8 552.5L926.3 552.4L927.0 552.3L927.6 552.4L928.1 552.7Z" fill="#3a3935" stroke="#1c1c1a" stroke-width="0.6"/><path d="M1119.5 680.500l3.500 9c1.500 1.500 4 .500 4.500-1.500l-3.800-9z" fill="#8f8b82" stroke="#1c1c1a" stroke-width="0.6"/><path d="M759.0 737.8L901.9 672.5L993.9 793.5L846.7 865.3L840.8 867.4L834.6 868.1L828.3 867.5L822.6 865.6L817.7 862.5L813.9 858.4L749.3 763.0L747.2 758.6L746.7 753.8L747.7 749.0L750.3 744.6L754.1 740.8L759.0 737.8Z" fill="#000" opacity="0.42" filter="url(#bl8)"/><path d="M749.2 748.6L748.7 743.8L746.7 725.5L747.2 730.3Z" fill="#4f4c47" stroke="#4f4c47" stroke-width="0.6" stroke-linejoin="round"/><path d="M749.2 748.6L748.7 743.8M746.7 725.5L747.2 730.3" stroke="#1c1c1a" stroke-width="0.85" fill="none"/><path d="M751.3 753.0L749.2 748.6L747.2 730.3L749.3 734.8Z" fill="#4a4843" stroke="#4a4843" stroke-width="0.6" stroke-linejoin="round"/><path d="M751.3 753.0L749.2 748.6M747.2 730.3L749.3 734.8" stroke="#1c1c1a" stroke-width="0.85" fill="none"/><path d="M815.9 848.4L751.3 753.0L749.3 734.8L814.6 830.5Z" fill="#4a4843" stroke="#4a4843" stroke-width="0.6" stroke-linejoin="round"/><path d="M815.9 848.4L751.3 753.0M749.3 734.8L814.6 830.5" stroke="#1c1c1a" stroke-width="0.85" fill="none"/><path d="M995.9 783.5L848.7 855.3L847.7 837.5L996.5 765.4Z" fill="#5b5852" stroke="#1c1c1a" stroke-width="0.85" stroke-linejoin="round"/><path d="M819.7 852.5L815.9 848.4L814.6 830.5L818.3 834.6Z" fill="#4a4843" stroke="#4a4843" stroke-width="0.6" stroke-linejoin="round"/><path d="M819.7 852.5L815.9 848.4M814.6 830.5L818.3 834.6" stroke="#1c1c1a" stroke-width="0.85" fill="none"/><path d="M824.6 855.6L819.7 852.5L818.3 834.6L823.3 837.8Z" fill="#4c4a45" stroke="#4c4a45" stroke-width="0.6" stroke-linejoin="round"/><path d="M824.6 855.6L819.7 852.5M818.3 834.6L823.3 837.8" stroke="#1c1c1a" stroke-width="0.85" fill="none"/><path d="M830.3 857.5L824.6 855.6L823.3 837.8L829.1 839.7Z" fill="#504e48" stroke="#504e48" stroke-width="0.6" stroke-linejoin="round"/><path d="M830.3 857.5L824.6 855.6M823.3 837.8L829.1 839.7" stroke="#1c1c1a" stroke-width="0.85" fill="none"/><path d="M848.7 855.3L842.8 857.4L841.8 839.5L847.7 837.5Z" fill="#5b5852" stroke="#5b5852" stroke-width="0.6" stroke-linejoin="round"/><path d="M848.7 855.3L842.8 857.4M841.8 839.5L847.7 837.5" stroke="#1c1c1a" stroke-width="0.85" fill="none"/><path d="M836.6 858.1L830.3 857.5L829.1 839.7L835.4 840.3Z" fill="#55524c" stroke="#55524c" stroke-width="0.6" stroke-linejoin="round"/><path d="M836.6 858.1L830.3 857.5M829.1 839.7L835.4 840.3" stroke="#1c1c1a" stroke-width="0.85" fill="none"/><path d="M842.8 857.4L836.6 858.1L835.4 840.3L841.8 839.5Z" fill="#585650" stroke="#585650" stroke-width="0.6" stroke-linejoin="round"/><path d="M842.8 857.4L836.6 858.1M835.4 840.3L841.8 839.5" stroke="#1c1c1a" stroke-width="0.85" fill="none"/><path d="M996.3 769.8L847.9 841.8L842.0 843.8L835.7 844.6L829.4 844.0L823.6 842.1L818.7 838.9L814.9 834.9L749.8 739.2" fill="none" stroke="#1c1c1a" stroke-width="0.5" stroke-linejoin="round"/><path d="M759.2 709.5L903.5 644.0L996.5 765.4L847.7 837.5L841.8 839.5L835.4 840.3L829.1 839.7L823.3 837.8L818.3 834.6L814.6 830.5L749.3 734.8L747.2 730.3L746.7 725.5L747.7 720.8L750.3 716.3L754.2 712.5L759.2 709.5Z" fill="#8a867c" fill-rule="evenodd" stroke="#1c1c1a" stroke-width="0.85" stroke-linejoin="round"/><path d="M754.1 732.6L754.1 732.6" fill="none" stroke="#1c1c1a" stroke-width="0.4" stroke-linejoin="round"/><path d="M769.3 752.4L759.6 738.1L758.4 726.1L768.2 740.4Z" fill="#42403b" stroke="#42403b" stroke-width="0.6" stroke-linejoin="round"/><path d="M759.6 738.1L758.1 734.9L756.8 722.9L758.4 726.1Z" fill="#43403c" stroke="#43403c" stroke-width="0.6" stroke-linejoin="round"/><path d="M758.1 734.9L757.6 731.4L756.4 719.4L756.8 722.9Z" fill="#46443f" stroke="#46443f" stroke-width="0.6" stroke-linejoin="round"/><clipPath id="bsclip"><path d="M784.1 745.5L831.1 813.4L831.1 813.4L833.7 816.2L837.1 818.4L841.1 819.7L845.4 820.1L849.8 819.6L853.8 818.1L976.7 759.0L984.5 755.2L897.9 586.0L752.1 650.6Z"/></clipPath><g clip-path="url(#bsclip)"><path d="M752.2 744.0L906.0 673.3L989.8 783.8L831.7 860.9Z" fill="url(#bsfloor)" fill-rule="evenodd"/><path d="M909.6 687.3L917.1 697.2L916.7 668.1L909.0 658.1Z" fill="#42403b" stroke="#1c1c1a" stroke-width="0.85" stroke-linejoin="round"/><path d="M917.1 697.2L979.7 780.2L980.1 763.4L916.8 680.2Z" fill="#42403b" stroke="#1c1c1a" stroke-width="0.85" stroke-linejoin="round"/><path d="M914.0 698.9L920.1 696.1L979.8 775.0L973.6 778.0Z" fill="#807c73" stroke="#1c1c1a" stroke-width="0.5" stroke-linejoin="round"/><path d="M914.1 704.2L973.5 783.2L973.6 778.0L914.0 698.9Z" fill="#4f4d48" stroke="#1c1c1a" stroke-width="0.85" stroke-linejoin="round"/><path d="M882.3 699.9L909.6 687.3L909.0 658.1L881.4 670.7Z" fill="#514f49" stroke="#1c1c1a" stroke-width="0.85" stroke-linejoin="round"/><path d="M825.3 718.6L871.6 697.3L870.5 668.1L823.5 689.5Z" fill="#514f49" stroke="#1c1c1a" stroke-width="0.85" stroke-linejoin="round"/><path d="M871.6 697.3L883.2 713.0L882.3 683.9L870.5 668.1Z" fill="#42403b" stroke="#1c1c1a" stroke-width="0.85" stroke-linejoin="round"/><path d="M883.0 706.1L889.6 703.0L888.9 680.8L882.3 683.9Z" fill="#514f49" stroke="#1c1c1a" stroke-width="0.85" stroke-linejoin="round"/><path d="M883.2 713.0L938.7 788.1L938.7 781.3L883.0 706.1Z" fill="#42403b" stroke="#1c1c1a" stroke-width="0.85" stroke-linejoin="round"/><path d="M883.0 706.1L888.8 703.4L944.6 778.5L938.7 781.3Z" fill="#7d7970" stroke="#1c1c1a" stroke-width="0.6" stroke-linejoin="round"/><path d="M777.2 766.3L838.9 737.6L837.2 708.6L774.5 737.5Z" fill="#514f49" stroke="#1c1c1a" stroke-width="0.85" stroke-linejoin="round"/><path d="M945.2 796.9L834.8 850.5L834.5 846.5L945.2 792.9Z" fill="#5b5852" stroke="#1c1c1a" stroke-width="0.85" stroke-linejoin="round"/><path d="M834.8 850.5L810.8 815.5L810.5 811.4L834.5 846.5Z" fill="#4a4843" stroke="#1c1c1a" stroke-width="0.85" stroke-linejoin="round"/><path d="M810.5 811.4L882.5 777.1L894.3 793.4L932.2 775.2L945.2 792.9L834.5 846.5Z" fill="#8f8b82" fill-rule="evenodd" stroke="#1c1c1a" stroke-width="0.85" stroke-linejoin="round"/><path d="M879.4 796.3L879.8 797.2L879.9 798.1L879.6 799.0L878.9 799.8L878.1 800.4L877.0 800.7L875.8 800.8L874.7 800.6L873.8 800.1L873.1 799.4L872.7 798.5L872.6 797.6L872.9 796.7L873.5 795.9L874.4 795.3L875.5 795.0L876.6 794.9L877.7 795.1L878.7 795.6Z" fill="#3a3935" stroke="#1c1c1a" stroke-width="0.6"/><path d="M945.2 796.9L935.9 784.3L935.8 755.6L945.2 768.3Z" fill="#4a4843" stroke="#1c1c1a" stroke-width="0.85" stroke-linejoin="round"/><path d="M953.4 792.9L945.2 796.9L945.2 768.3L953.6 764.3Z" fill="#5b5852" stroke="#1c1c1a" stroke-width="0.85" stroke-linejoin="round"/><path d="M935.8 755.6L944.1 751.6L953.6 764.3L945.2 768.3Z" fill="#8e8a80" fill-rule="evenodd" stroke="#1c1c1a" stroke-width="0.85" stroke-linejoin="round"/><path d="M979.7 780.2L953.4 792.9L953.5 777.2L980.0 764.5Z" fill="#5b5852" stroke="#1c1c1a" stroke-width="0.85" stroke-linejoin="round"/><path d="M953.4 792.9L946.9 784.1L946.9 768.4L953.5 777.2Z" fill="#4a4843" stroke="#1c1c1a" stroke-width="0.85" stroke-linejoin="round"/><path d="M946.9 768.4L973.4 755.7L980.0 764.5L953.5 777.2Z" fill="#8e8a80" fill-rule="evenodd" stroke="#1c1c1a" stroke-width="0.85" stroke-linejoin="round"/></g><path d="M758.4 726.1L756.8 722.9L756.4 719.4L757.2 715.8L759.1 712.6L761.9 709.7L765.6 707.6L906.1 643.7L922.6 665.3L916.7 668.1L909.0 658.1L881.4 670.7L888.9 680.8L882.3 683.9L870.5 668.1L823.5 689.5L837.2 708.6L768.2 740.4Z" fill="url(#bstop)" fill-rule="evenodd" stroke="#1c1c1a" stroke-width="0.85" stroke-linejoin="round"/><path d="M812.9 703.1L813.3 703.9L813.3 704.7L813.0 705.5L812.4 706.1L811.6 706.6L810.7 706.9L809.6 707.0L808.7 706.8L807.8 706.4L807.2 705.8L806.9 705.0L806.8 704.2L807.1 703.5L807.7 702.8L808.5 702.3L809.5 702.0L810.5 701.9L811.5 702.1L812.3 702.5Z" fill="#3a3935" stroke="#1c1c1a" stroke-width="0.6"/><path d="M769.3 752.4L775.6 749.5L774.5 737.5L768.2 740.4Z" fill="#514f49" stroke="#1c1c1a" stroke-width="0.85" stroke-linejoin="round"/><path d="M916.8 680.2L922.7 677.4L922.6 665.3L916.7 668.1Z" fill="#514f49" stroke="#1c1c1a" stroke-width="0.85" stroke-linejoin="round"/><path d="M916.8 680.2L927.5 675.3L972.0 733.4L961.2 738.5Z" fill="#85817a" fill-rule="evenodd" stroke="#1c1c1a" stroke-width="0.85" stroke-linejoin="round"/><path d="M979.1 762.1L961.2 738.5L961.3 726.6L979.4 750.2Z" fill="#4a4843" stroke="#1c1c1a" stroke-width="0.85" stroke-linejoin="round"/><path d="M985.2 759.2L979.1 762.1L979.4 750.2L985.4 747.3Z" fill="#5b5852" stroke="#1c1c1a" stroke-width="0.85" stroke-linejoin="round"/><path d="M961.3 726.6L967.4 723.7L985.4 747.3L979.4 750.2Z" fill="#8e8a80" fill-rule="evenodd" stroke="#1c1c1a" stroke-width="0.85" stroke-linejoin="round"/><path d="M763.2 755.2L814.6 830.5L818.3 834.6L823.3 837.8L829.1 839.7L835.4 840.3L841.8 839.5L847.7 837.5L996.5 765.4L990.0 756.9L979.1 762.1L976.7 759.0L853.8 818.1L849.8 819.6L845.4 820.1L841.1 819.7L837.1 818.4L833.7 816.2L831.1 813.4L784.1 745.5L769.3 752.4Z" fill="#8a867c" fill-rule="evenodd"/><path d="M979.1 762.1L976.7 759.0L853.8 818.1L849.8 819.6L845.4 820.1L841.1 819.7L837.1 818.4L833.7 816.2L831.1 813.4L784.1 745.5L775.6 749.5" fill="none" stroke="#1c1c1a" stroke-width="0.85" stroke-linejoin="round"/><path d="M749.3 734.8L814.6 830.5L818.3 834.6L823.3 837.8L829.1 839.7L835.4 840.3L841.8 839.5L847.7 837.5L996.5 765.4L927.5 675.3" fill="none" stroke="#1c1c1a" stroke-width="0.85" stroke-linejoin="round"/><path d="M755.7 731.8L821.1 827.4L823.7 830.2L827.2 832.4L831.2 833.7L835.6 834.1L839.9 833.6L844.0 832.2L991.1 761.1" fill="none" stroke="#1c1c1a" stroke-width="0.5" stroke-linejoin="round"/><path d="M773.3 753.8L823.1 826.5L825.4 828.9L828.3 830.8L831.8 831.9L835.6 832.3L839.4 831.8L842.9 830.6L989.9 759.6" fill="none" stroke="#1c1c1a" stroke-width="0.5" stroke-linejoin="round"/><defs><linearGradient id="stub2" gradientUnits="userSpaceOnUse" x1="778" y1="777" x2="783" y2="789"><stop offset="0" stop-color="#6f6c64"/><stop offset="0.25" stop-color="#8a8a86"/><stop offset="0.6" stop-color="#a8a296"/><stop offset="1" stop-color="#8a867c"/></linearGradient></defs><path d="M763.400 777.200L766.300 781.300L770 789.400L774.400 790L777.500 797L776.300 800.600L771.500 796.500L766 787Z" fill="#55534d" stroke="#1c1c1a" stroke-width="0.85" stroke-linejoin="round"/><path d="M777.500 797L790.500 791L790 796L776.300 800.600Z" fill="#5a5852" stroke="#1c1c1a" stroke-width="0.85" stroke-linejoin="round"/><path d="M763.400 777.200L786 772.600L788 776L766.300 781.300Z" fill="#8f8b82" stroke="#1c1c1a" stroke-width="0.85" stroke-linejoin="round"/><path d="M766.300 781.300L788 776L793.200 780.600L774.400 790L770 789.400Z" fill="url(#stub2)" stroke="#1c1c1a" stroke-width="0.85" stroke-linejoin="round"/><path d="M774.400 790L793.200 780.600L796 784.500L790.500 791L777.500 797Z" fill="#8f8b82" stroke="#1c1c1a" stroke-width="0.85" stroke-linejoin="round"/><path d="M786.300 767.600L791.300 765.200L792 767L792.300 773.200L787.500 775.300L786.600 769.200Z" fill="#6a6760" stroke="#1c1c1a" stroke-width="0.85" stroke-linejoin="round"/><path d="M786.300 767.600L791.300 765.200L792 767L787 769.400Z" fill="#8f8b82" stroke="#1c1c1a" stroke-width="0.85" stroke-linejoin="round"/><path d="M679.1 755.6L679.1 755.5L679.1 755.5L679.2 755.5L679.2 755.5L679.2 755.5L679.3 755.6L679.3 755.6L679.3 755.6L765.0 886.8L765.0 886.8L765.0 886.8L765.0 886.9L765.0 886.9L765.0 886.9L765.0 886.9L765.0 887.0L764.9 887.0L604.3 964.8L600.2 966.3L595.9 967.3L591.5 967.4L587.3 966.9L583.4 965.6L579.9 963.7L577.0 961.2L574.8 958.2L512.9 849.8L511.6 846.7L511.1 843.4L511.5 840.0L512.6 836.6L514.5 833.4L517.1 830.5L520.3 828.0L523.9 826.0Z" fill="#000" opacity="0.42" filter="url(#bl8)"/><defs><linearGradient id="stubg" gradientUnits="userSpaceOnUse" x1="531" y1="881" x2="543" y2="907"><stop offset="0" stop-color="#6b6861"/><stop offset="0.35" stop-color="#a09b90"/><stop offset="0.7" stop-color="#6f6c65"/><stop offset="1" stop-color="#4a4843"/></linearGradient></defs><path d="M524.3 886.2C528 887 532 893 534 900C535.5 905 536.5 908 537.6 910L552 903L541 879.5Z" fill="url(#stubg)" stroke="#1c1c1a" stroke-width="0.85" stroke-linejoin="round"/><path d="M524.3 886.2C523.5 887.5 524.5 889 526 889.500C529 892 531 897 533 902C534.5 906 535.5 909 537.6 910C536.5 908 535.5 905 534 900C532 893 528 887 524.3 886.2Z" fill="#4a4843" stroke="#1c1c1a" stroke-width="0.6"/><path d="M514.9 838.8L513.6 835.7L511.6 827.7L512.9 830.8Z" fill="#4e4c47" stroke="#4e4c47" stroke-width="0.6" stroke-linejoin="round"/><path d="M576.8 947.2L514.9 838.8L512.9 830.8L575.0 939.5Z" fill="#4e4c47" stroke="#4e4c47" stroke-width="0.6" stroke-linejoin="round"/><path d="M767.0 875.8L767.0 875.9L766.2 867.9L766.2 867.9Z" fill="#67645d" stroke="#67645d" stroke-width="0.6" stroke-linejoin="round"/><path d="M767.0 875.9L767.0 875.9L766.2 868.0L766.2 867.9Z" fill="#65625b" stroke="#65625b" stroke-width="0.6" stroke-linejoin="round"/><path d="M767.0 875.9L767.0 875.9L766.2 868.0L766.2 868.0Z" fill="#636059" stroke="#636059" stroke-width="0.6" stroke-linejoin="round"/><path d="M767.0 875.9L767.0 875.9L766.1 868.0L766.2 868.0Z" fill="#615e57" stroke="#615e57" stroke-width="0.6" stroke-linejoin="round"/><path d="M767.0 875.9L767.0 876.0L766.1 868.0L766.1 868.0Z" fill="#5f5c55" stroke="#5f5c55" stroke-width="0.6" stroke-linejoin="round"/><path d="M767.0 876.0L766.9 876.0L766.1 868.1L766.1 868.0Z" fill="#5e5b54" stroke="#5e5b54" stroke-width="0.6" stroke-linejoin="round"/><path d="M766.9 876.0L606.3 953.8L604.6 946.0L766.1 868.1Z" fill="#5e5b54" stroke="#5e5b54" stroke-width="0.6" stroke-linejoin="round"/><path d="M579.0 950.2L576.8 947.2L575.0 939.5L577.2 942.4Z" fill="#4e4c47" stroke="#4e4c47" stroke-width="0.6" stroke-linejoin="round"/><path d="M581.9 952.7L579.0 950.2L577.2 942.4L580.1 944.9Z" fill="#4f4d48" stroke="#4f4d48" stroke-width="0.6" stroke-linejoin="round"/><path d="M585.4 954.6L581.9 952.7L580.1 944.9L583.6 946.9Z" fill="#524f4a" stroke="#524f4a" stroke-width="0.6" stroke-linejoin="round"/><path d="M589.3 955.9L585.4 954.6L583.6 946.9L587.6 948.1Z" fill="#54524c" stroke="#54524c" stroke-width="0.6" stroke-linejoin="round"/><path d="M593.5 956.4L589.3 955.9L587.6 948.1L591.8 948.7Z" fill="#58554f" stroke="#58554f" stroke-width="0.6" stroke-linejoin="round"/><path d="M597.9 956.3L593.5 956.4L591.8 948.7L596.2 948.5Z" fill="#5a5851" stroke="#5a5851" stroke-width="0.6" stroke-linejoin="round"/><path d="M606.3 953.8L602.2 955.3L600.5 947.6L604.6 946.0Z" fill="#5e5b54" stroke="#5e5b54" stroke-width="0.6" stroke-linejoin="round"/><path d="M602.2 955.3L597.9 956.3L596.2 948.5L600.5 947.6Z" fill="#5d5a53" stroke="#5d5a53" stroke-width="0.6" stroke-linejoin="round"/><path d="M512.9 830.8L511.6 827.7L511.3 826.6L512.6 829.7Z" fill="#4f4d48" stroke="#4f4d48" stroke-width="0.6" stroke-linejoin="round"/><path d="M575.0 939.5L512.9 830.8L512.6 829.7L574.8 938.4Z" fill="#4e4c47" stroke="#4e4c47" stroke-width="0.6" stroke-linejoin="round"/><path d="M766.2 867.9L766.2 867.9L766.1 866.9L766.1 866.9Z" fill="#67645d" stroke="#67645d" stroke-width="0.6" stroke-linejoin="round"/><path d="M766.2 867.9L766.2 868.0L766.1 866.9L766.1 866.9Z" fill="#65625b" stroke="#65625b" stroke-width="0.6" stroke-linejoin="round"/><path d="M766.2 868.0L766.2 868.0L766.0 867.0L766.1 866.9Z" fill="#636059" stroke="#636059" stroke-width="0.6" stroke-linejoin="round"/><path d="M766.2 868.0L766.1 868.0L766.0 867.0L766.0 867.0Z" fill="#615e57" stroke="#615e57" stroke-width="0.6" stroke-linejoin="round"/><path d="M766.1 868.0L766.1 868.0L766.0 867.0L766.0 867.0Z" fill="#5f5c55" stroke="#5f5c55" stroke-width="0.6" stroke-linejoin="round"/><path d="M766.1 868.0L766.1 868.1L766.0 867.0L766.0 867.0Z" fill="#5e5b54" stroke="#5e5b54" stroke-width="0.6" stroke-linejoin="round"/><path d="M766.1 868.1L604.6 946.0L604.4 945.0L766.0 867.0Z" fill="#5e5b54" stroke="#5e5b54" stroke-width="0.6" stroke-linejoin="round"/><path d="M577.2 942.4L575.0 939.5L574.8 938.4L577.0 941.4Z" fill="#4f4d48" stroke="#4f4d48" stroke-width="0.6" stroke-linejoin="round"/><path d="M580.1 944.9L577.2 942.4L577.0 941.4L579.9 943.9Z" fill="#504e49" stroke="#504e49" stroke-width="0.6" stroke-linejoin="round"/><path d="M583.6 946.9L580.1 944.9L579.9 943.9L583.4 945.8Z" fill="#52504a" stroke="#52504a" stroke-width="0.6" stroke-linejoin="round"/><path d="M587.6 948.1L583.6 946.9L583.4 945.8L587.3 947.1Z" fill="#55524c" stroke="#55524c" stroke-width="0.6" stroke-linejoin="round"/><path d="M591.8 948.7L587.6 948.1L587.3 947.1L591.6 947.7Z" fill="#58554f" stroke="#58554f" stroke-width="0.6" stroke-linejoin="round"/><path d="M596.2 948.5L591.8 948.7L591.6 947.7L596.0 947.5Z" fill="#5b5851" stroke="#5b5851" stroke-width="0.6" stroke-linejoin="round"/><path d="M604.6 946.0L600.5 947.6L600.3 946.6L604.4 945.0Z" fill="#5e5b54" stroke="#5e5b54" stroke-width="0.6" stroke-linejoin="round"/><path d="M600.5 947.6L596.2 948.5L596.0 947.5L600.3 946.6Z" fill="#5d5a53" stroke="#5d5a53" stroke-width="0.6" stroke-linejoin="round"/><path d="M512.6 829.7L511.3 826.6L511.1 825.5L512.4 828.6Z" fill="#504e49" stroke="#504e49" stroke-width="0.6" stroke-linejoin="round"/><path d="M574.8 938.4L512.6 829.7L512.4 828.6L574.7 937.4Z" fill="#4f4d48" stroke="#4f4d48" stroke-width="0.6" stroke-linejoin="round"/><path d="M766.1 866.9L766.1 866.9L766.0 865.9L766.0 865.8Z" fill="#67645d" stroke="#67645d" stroke-width="0.6" stroke-linejoin="round"/><path d="M766.1 866.9L766.1 866.9L765.9 865.9L766.0 865.9Z" fill="#65625b" stroke="#65625b" stroke-width="0.6" stroke-linejoin="round"/><path d="M766.1 866.9L766.0 867.0L765.9 865.9L765.9 865.9Z" fill="#636059" stroke="#636059" stroke-width="0.6" stroke-linejoin="round"/><path d="M766.0 867.0L766.0 867.0L765.9 865.9L765.9 865.9Z" fill="#615e57" stroke="#615e57" stroke-width="0.6" stroke-linejoin="round"/><path d="M766.0 867.0L766.0 867.0L765.9 866.0L765.9 865.9Z" fill="#5f5c55" stroke="#5f5c55" stroke-width="0.6" stroke-linejoin="round"/><path d="M766.0 867.0L766.0 867.0L765.9 866.0L765.9 866.0Z" fill="#5e5b54" stroke="#5e5b54" stroke-width="0.6" stroke-linejoin="round"/><path d="M766.0 867.0L604.4 945.0L604.2 944.0L765.9 866.0Z" fill="#5e5b54" stroke="#5e5b54" stroke-width="0.6" stroke-linejoin="round"/><path d="M577.0 941.4L574.8 938.4L574.7 937.4L576.9 940.4Z" fill="#4f4d48" stroke="#4f4d48" stroke-width="0.6" stroke-linejoin="round"/><path d="M579.9 943.9L577.0 941.4L576.9 940.4L579.8 942.9Z" fill="#514e49" stroke="#514e49" stroke-width="0.6" stroke-linejoin="round"/><path d="M583.4 945.8L579.9 943.9L579.8 942.9L583.2 944.8Z" fill="#53504b" stroke="#53504b" stroke-width="0.6" stroke-linejoin="round"/><path d="M587.3 947.1L583.4 945.8L583.2 944.8L587.2 946.1Z" fill="#55534d" stroke="#55534d" stroke-width="0.6" stroke-linejoin="round"/><path d="M591.6 947.7L587.3 947.1L587.2 946.1L591.4 946.6Z" fill="#58564f" stroke="#58564f" stroke-width="0.6" stroke-linejoin="round"/><path d="M596.0 947.5L591.6 947.7L591.4 946.6L595.8 946.4Z" fill="#5b5851" stroke="#5b5851" stroke-width="0.6" stroke-linejoin="round"/><path d="M604.4 945.0L600.3 946.6L600.1 945.5L604.2 944.0Z" fill="#5e5b54" stroke="#5e5b54" stroke-width="0.6" stroke-linejoin="round"/><path d="M600.3 946.6L596.0 947.5L595.8 946.4L600.1 945.5Z" fill="#5d5a53" stroke="#5d5a53" stroke-width="0.6" stroke-linejoin="round"/><path d="M512.4 828.6L511.1 825.5L510.9 824.3L512.2 827.4Z" fill="#504e49" stroke="#504e49" stroke-width="0.6" stroke-linejoin="round"/><path d="M574.7 937.4L512.4 828.6L512.2 827.4L574.6 936.5Z" fill="#504e49" stroke="#504e49" stroke-width="0.6" stroke-linejoin="round"/><path d="M766.0 865.8L766.0 865.9L765.8 864.8L765.8 864.8Z" fill="#67645d" stroke="#67645d" stroke-width="0.6" stroke-linejoin="round"/><path d="M766.0 865.9L765.9 865.9L765.8 864.8L765.8 864.8Z" fill="#65625b" stroke="#65625b" stroke-width="0.6" stroke-linejoin="round"/><path d="M765.9 865.9L765.9 865.9L765.8 864.9L765.8 864.8Z" fill="#636059" stroke="#636059" stroke-width="0.6" stroke-linejoin="round"/><path d="M765.9 865.9L765.9 865.9L765.8 864.9L765.8 864.9Z" fill="#615e57" stroke="#615e57" stroke-width="0.6" stroke-linejoin="round"/><path d="M765.9 865.9L765.9 866.0L765.8 864.9L765.8 864.9Z" fill="#5f5c55" stroke="#5f5c55" stroke-width="0.6" stroke-linejoin="round"/><path d="M765.9 866.0L765.9 866.0L765.7 864.9L765.8 864.9Z" fill="#5e5b54" stroke="#5e5b54" stroke-width="0.6" stroke-linejoin="round"/><path d="M765.9 866.0L604.2 944.0L604.0 942.9L765.7 864.9Z" fill="#5e5b54" stroke="#5e5b54" stroke-width="0.6" stroke-linejoin="round"/><path d="M576.9 940.4L574.7 937.4L574.6 936.5L576.8 939.4Z" fill="#504e49" stroke="#504e49" stroke-width="0.6" stroke-linejoin="round"/><path d="M579.8 942.9L576.9 940.4L576.8 939.4L579.7 941.9Z" fill="#514f4a" stroke="#514f4a" stroke-width="0.6" stroke-linejoin="round"/><path d="M583.2 944.8L579.8 942.9L579.7 941.9L583.1 943.8Z" fill="#53514c" stroke="#53514c" stroke-width="0.6" stroke-linejoin="round"/><path d="M587.2 946.1L583.2 944.8L583.1 943.8L587.0 945.0Z" fill="#56534e" stroke="#56534e" stroke-width="0.6" stroke-linejoin="round"/><path d="M591.4 946.6L587.2 946.1L587.0 945.0L591.2 945.6Z" fill="#585650" stroke="#585650" stroke-width="0.6" stroke-linejoin="round"/><path d="M595.8 946.4L591.4 946.6L591.2 945.6L595.6 945.4Z" fill="#5b5852" stroke="#5b5852" stroke-width="0.6" stroke-linejoin="round"/><path d="M604.2 944.0L600.1 945.5L599.9 944.5L604.0 942.9Z" fill="#5e5b54" stroke="#5e5b54" stroke-width="0.6" stroke-linejoin="round"/><path d="M600.1 945.5L595.8 946.4L595.6 945.4L599.9 944.5Z" fill="#5d5a53" stroke="#5d5a53" stroke-width="0.6" stroke-linejoin="round"/><path d="M512.2 827.4L510.9 824.3L510.7 823.1L512.0 826.2Z" fill="#514f4a" stroke="#514f4a" stroke-width="0.6" stroke-linejoin="round"/><path d="M574.6 936.5L512.2 827.4L512.0 826.2L574.6 935.5Z" fill="#514f4a" stroke="#514f4a" stroke-width="0.6" stroke-linejoin="round"/><path d="M765.8 864.8L765.8 864.8L765.7 863.8L765.7 863.7Z" fill="#67645d" stroke="#67645d" stroke-width="0.6" stroke-linejoin="round"/><path d="M765.8 864.8L765.8 864.8L765.7 863.8L765.7 863.8Z" fill="#65625b" stroke="#65625b" stroke-width="0.6" stroke-linejoin="round"/><path d="M765.8 864.8L765.8 864.9L765.7 863.8L765.7 863.8Z" fill="#636059" stroke="#636059" stroke-width="0.6" stroke-linejoin="round"/><path d="M765.8 864.9L765.8 864.9L765.7 863.9L765.7 863.8Z" fill="#615e57" stroke="#615e57" stroke-width="0.6" stroke-linejoin="round"/><path d="M765.8 864.9L765.8 864.9L765.7 863.9L765.7 863.9Z" fill="#5f5c55" stroke="#5f5c55" stroke-width="0.6" stroke-linejoin="round"/><path d="M765.8 864.9L765.7 864.9L765.6 863.9L765.7 863.9Z" fill="#5e5b54" stroke="#5e5b54" stroke-width="0.6" stroke-linejoin="round"/><path d="M765.7 864.9L604.0 942.9L603.8 941.9L765.6 863.9Z" fill="#5e5b54" stroke="#5e5b54" stroke-width="0.6" stroke-linejoin="round"/><path d="M576.8 939.4L574.6 936.5L574.6 935.5L576.7 938.4Z" fill="#514f4a" stroke="#514f4a" stroke-width="0.6" stroke-linejoin="round"/><path d="M579.7 941.9L576.8 939.4L576.7 938.4L579.6 940.9Z" fill="#52504b" stroke="#52504b" stroke-width="0.6" stroke-linejoin="round"/><path d="M583.1 943.8L579.7 941.9L579.6 940.9L583.1 942.8Z" fill="#54524c" stroke="#54524c" stroke-width="0.6" stroke-linejoin="round"/><path d="M587.0 945.0L583.1 943.8L583.1 942.8L586.9 944.0Z" fill="#56544e" stroke="#56544e" stroke-width="0.6" stroke-linejoin="round"/><path d="M591.2 945.6L587.0 945.0L586.9 944.0L591.1 944.5Z" fill="#595650" stroke="#595650" stroke-width="0.6" stroke-linejoin="round"/><path d="M595.6 945.4L591.2 945.6L591.1 944.5L595.4 944.4Z" fill="#5b5852" stroke="#5b5852" stroke-width="0.6" stroke-linejoin="round"/><path d="M604.0 942.9L599.9 944.5L599.7 943.5L603.8 941.9Z" fill="#5e5b54" stroke="#5e5b54" stroke-width="0.6" stroke-linejoin="round"/><path d="M599.9 944.5L595.6 945.4L595.4 944.4L599.7 943.5Z" fill="#5d5a53" stroke="#5d5a53" stroke-width="0.6" stroke-linejoin="round"/><path d="M512.0 826.2L510.7 823.1L510.6 821.8L511.9 824.9Z" fill="#52504b" stroke="#52504b" stroke-width="0.6" stroke-linejoin="round"/><path d="M574.6 935.5L512.0 826.2L511.9 824.9L574.6 934.5Z" fill="#52504b" stroke="#52504b" stroke-width="0.6" stroke-linejoin="round"/><path d="M765.7 863.7L765.7 863.8L765.6 862.7L765.6 862.7Z" fill="#67645d" stroke="#67645d" stroke-width="0.6" stroke-linejoin="round"/><path d="M765.7 863.8L765.7 863.8L765.6 862.8L765.6 862.7Z" fill="#65625b" stroke="#65625b" stroke-width="0.6" stroke-linejoin="round"/><path d="M765.7 863.8L765.7 863.8L765.6 862.8L765.6 862.8Z" fill="#636059" stroke="#636059" stroke-width="0.6" stroke-linejoin="round"/><path d="M765.7 863.8L765.7 863.9L765.6 862.8L765.6 862.8Z" fill="#615e57" stroke="#615e57" stroke-width="0.6" stroke-linejoin="round"/><path d="M765.7 863.9L765.7 863.9L765.5 862.8L765.6 862.8Z" fill="#5f5c55" stroke="#5f5c55" stroke-width="0.6" stroke-linejoin="round"/><path d="M765.7 863.9L765.6 863.9L765.5 862.9L765.5 862.8Z" fill="#5e5b54" stroke="#5e5b54" stroke-width="0.6" stroke-linejoin="round"/><path d="M765.6 863.9L603.8 941.9L603.6 940.9L765.5 862.9Z" fill="#5e5b54" stroke="#5e5b54" stroke-width="0.6" stroke-linejoin="round"/><path d="M576.7 938.4L574.6 935.5L574.6 934.5L576.8 937.4Z" fill="#52504b" stroke="#52504b" stroke-width="0.6" stroke-linejoin="round"/><path d="M579.6 940.9L576.7 938.4L576.8 937.4L579.6 939.9Z" fill="#53514c" stroke="#53514c" stroke-width="0.6" stroke-linejoin="round"/><path d="M583.1 942.8L579.6 940.9L579.6 939.9L583.0 941.7Z" fill="#55534d" stroke="#55534d" stroke-width="0.6" stroke-linejoin="round"/><path d="M586.9 944.0L583.1 942.8L583.0 941.7L586.9 943.0Z" fill="#57544f" stroke="#57544f" stroke-width="0.6" stroke-linejoin="round"/><path d="M591.1 944.5L586.9 944.0L586.9 943.0L591.0 943.5Z" fill="#595750" stroke="#595750" stroke-width="0.6" stroke-linejoin="round"/><path d="M595.4 944.4L591.1 944.5L591.0 943.5L595.3 943.3Z" fill="#5b5952" stroke="#5b5952" stroke-width="0.6" stroke-linejoin="round"/><path d="M603.8 941.9L599.7 943.5L599.6 942.4L603.6 940.9Z" fill="#5e5b54" stroke="#5e5b54" stroke-width="0.6" stroke-linejoin="round"/><path d="M599.7 943.5L595.4 944.4L595.3 943.3L599.6 942.4Z" fill="#5d5a53" stroke="#5d5a53" stroke-width="0.6" stroke-linejoin="round"/><path d="M511.9 824.9L510.6 821.8L510.5 820.5L511.7 823.5Z" fill="#53514c" stroke="#53514c" stroke-width="0.6" stroke-linejoin="round"/><path d="M574.6 934.5L511.9 824.9L511.7 823.5L574.8 933.5Z" fill="#53514c" stroke="#53514c" stroke-width="0.6" stroke-linejoin="round"/><path d="M765.6 862.7L765.6 862.7L765.5 861.7L765.5 861.7Z" fill="#67645d" stroke="#67645d" stroke-width="0.6" stroke-linejoin="round"/><path d="M765.6 862.7L765.6 862.8L765.5 861.7L765.5 861.7Z" fill="#65625b" stroke="#65625b" stroke-width="0.6" stroke-linejoin="round"/><path d="M765.6 862.8L765.6 862.8L765.5 861.7L765.5 861.7Z" fill="#636059" stroke="#636059" stroke-width="0.6" stroke-linejoin="round"/><path d="M765.6 862.8L765.6 862.8L765.5 861.8L765.5 861.7Z" fill="#615e57" stroke="#615e57" stroke-width="0.6" stroke-linejoin="round"/><path d="M765.6 862.8L765.5 862.8L765.4 861.8L765.5 861.8Z" fill="#5f5c55" stroke="#5f5c55" stroke-width="0.6" stroke-linejoin="round"/><path d="M765.5 862.8L765.5 862.9L765.4 861.8L765.4 861.8Z" fill="#5e5b54" stroke="#5e5b54" stroke-width="0.6" stroke-linejoin="round"/><path d="M765.5 862.9L603.6 940.9L603.4 939.8L765.4 861.8Z" fill="#5e5b54" stroke="#5e5b54" stroke-width="0.6" stroke-linejoin="round"/><path d="M576.8 937.4L574.6 934.5L574.8 933.5L576.9 936.4Z" fill="#53514c" stroke="#53514c" stroke-width="0.6" stroke-linejoin="round"/><path d="M579.6 939.9L576.8 937.4L576.9 936.4L579.7 938.8Z" fill="#54524d" stroke="#54524d" stroke-width="0.6" stroke-linejoin="round"/><path d="M583.0 941.7L579.6 939.9L579.7 938.8L583.1 940.7Z" fill="#55534e" stroke="#55534e" stroke-width="0.6" stroke-linejoin="round"/><path d="M586.9 943.0L583.0 941.7L583.1 940.7L586.9 941.9Z" fill="#57554f" stroke="#57554f" stroke-width="0.6" stroke-linejoin="round"/><path d="M591.0 943.5L586.9 943.0L586.9 941.9L591.0 942.4Z" fill="#5a5751" stroke="#5a5751" stroke-width="0.6" stroke-linejoin="round"/><path d="M595.3 943.3L591.0 943.5L591.0 942.4L595.2 942.3Z" fill="#5c5952" stroke="#5c5952" stroke-width="0.6" stroke-linejoin="round"/><path d="M603.6 940.9L599.6 942.4L599.4 941.4L603.4 939.8Z" fill="#5e5b54" stroke="#5e5b54" stroke-width="0.6" stroke-linejoin="round"/><path d="M599.6 942.4L595.3 943.3L595.2 942.3L599.4 941.4Z" fill="#5d5a53" stroke="#5d5a53" stroke-width="0.6" stroke-linejoin="round"/><path d="M511.7 823.5L510.5 820.5L510.4 819.2L511.7 822.1Z" fill="#54524d" stroke="#54524d" stroke-width="0.6" stroke-linejoin="round"/><path d="M574.8 933.5L511.7 823.5L511.7 822.1L575.0 932.6Z" fill="#54524d" stroke="#54524d" stroke-width="0.6" stroke-linejoin="round"/><path d="M765.5 861.7L765.5 861.7L765.4 860.6L765.4 860.6Z" fill="#67645d" stroke="#67645d" stroke-width="0.6" stroke-linejoin="round"/><path d="M765.5 861.7L765.5 861.7L765.4 860.7L765.4 860.6Z" fill="#65625b" stroke="#65625b" stroke-width="0.6" stroke-linejoin="round"/><path d="M765.5 861.7L765.5 861.7L765.4 860.7L765.4 860.7Z" fill="#636059" stroke="#636059" stroke-width="0.6" stroke-linejoin="round"/><path d="M765.5 861.7L765.5 861.8L765.4 860.7L765.4 860.7Z" fill="#615e57" stroke="#615e57" stroke-width="0.6" stroke-linejoin="round"/><path d="M765.5 861.8L765.4 861.8L765.3 860.7L765.4 860.7Z" fill="#5f5c55" stroke="#5f5c55" stroke-width="0.6" stroke-linejoin="round"/><path d="M765.4 861.8L765.4 861.8L765.3 860.8L765.3 860.7Z" fill="#5e5b54" stroke="#5e5b54" stroke-width="0.6" stroke-linejoin="round"/><path d="M765.4 861.8L603.4 939.8L603.2 938.8L765.3 860.8Z" fill="#5e5b54" stroke="#5e5b54" stroke-width="0.6" stroke-linejoin="round"/><path d="M576.9 936.4L574.8 933.5L575.0 932.6L577.1 935.4Z" fill="#54524d" stroke="#54524d" stroke-width="0.6" stroke-linejoin="round"/><path d="M579.7 938.8L576.9 936.4L577.1 935.4L579.8 937.8Z" fill="#55534e" stroke="#55534e" stroke-width="0.6" stroke-linejoin="round"/><path d="M583.1 940.7L579.7 938.8L579.8 937.8L583.1 939.6Z" fill="#56544f" stroke="#56544f" stroke-width="0.6" stroke-linejoin="round"/><path d="M586.9 941.9L583.1 940.7L583.1 939.6L586.9 940.8Z" fill="#585650" stroke="#585650" stroke-width="0.6" stroke-linejoin="round"/><path d="M591.0 942.4L586.9 941.9L586.9 940.8L590.9 941.4Z" fill="#5a5751" stroke="#5a5751" stroke-width="0.6" stroke-linejoin="round"/><path d="M595.2 942.3L591.0 942.4L590.9 941.4L595.1 941.2Z" fill="#5c5952" stroke="#5c5952" stroke-width="0.6" stroke-linejoin="round"/><path d="M603.4 939.8L599.4 941.4L599.2 940.3L603.2 938.8Z" fill="#5e5b54" stroke="#5e5b54" stroke-width="0.6" stroke-linejoin="round"/><path d="M599.4 941.4L595.2 942.3L595.1 941.2L599.2 940.3Z" fill="#5d5a53" stroke="#5d5a53" stroke-width="0.6" stroke-linejoin="round"/><path d="M511.7 822.1L510.4 819.2L510.4 817.8L511.6 820.7Z" fill="#55534e" stroke="#55534e" stroke-width="0.6" stroke-linejoin="round"/><path d="M575.0 932.6L511.7 822.1L511.6 820.7L575.2 931.7Z" fill="#55534e" stroke="#55534e" stroke-width="0.6" stroke-linejoin="round"/><path d="M765.4 860.6L765.4 860.6L765.3 859.6L765.3 859.6Z" fill="#67645d" stroke="#67645d" stroke-width="0.6" stroke-linejoin="round"/><path d="M765.4 860.6L765.4 860.7L765.3 859.6L765.3 859.6Z" fill="#65625b" stroke="#65625b" stroke-width="0.6" stroke-linejoin="round"/><path d="M765.4 860.7L765.4 860.7L765.3 859.7L765.3 859.6Z" fill="#636059" stroke="#636059" stroke-width="0.6" stroke-linejoin="round"/><path d="M765.4 860.7L765.4 860.7L765.2 859.7L765.3 859.7Z" fill="#615e57" stroke="#615e57" stroke-width="0.6" stroke-linejoin="round"/><path d="M765.4 860.7L765.3 860.7L765.2 859.7L765.2 859.7Z" fill="#5f5c55" stroke="#5f5c55" stroke-width="0.6" stroke-linejoin="round"/><path d="M765.3 860.7L765.3 860.8L765.2 859.7L765.2 859.7Z" fill="#5e5b54" stroke="#5e5b54" stroke-width="0.6" stroke-linejoin="round"/><path d="M765.3 860.8L603.2 938.8L603.0 937.8L765.2 859.7Z" fill="#5e5b54" stroke="#5e5b54" stroke-width="0.6" stroke-linejoin="round"/><path d="M577.1 935.4L575.0 932.6L575.2 931.7L577.3 934.5Z" fill="#55534e" stroke="#55534e" stroke-width="0.6" stroke-linejoin="round"/><path d="M579.8 937.8L577.1 935.4L577.3 934.5L580.0 936.8Z" fill="#56544f" stroke="#56544f" stroke-width="0.6" stroke-linejoin="round"/><path d="M583.1 939.6L579.8 937.8L580.0 936.8L583.3 938.6Z" fill="#57554f" stroke="#57554f" stroke-width="0.6" stroke-linejoin="round"/><path d="M586.9 940.8L583.1 939.6L583.3 938.6L587.0 939.8Z" fill="#595650" stroke="#595650" stroke-width="0.6" stroke-linejoin="round"/><path d="M590.9 941.4L586.9 940.8L587.0 939.8L591.0 940.3Z" fill="#5a5852" stroke="#5a5852" stroke-width="0.6" stroke-linejoin="round"/><path d="M595.1 941.2L590.9 941.4L591.0 940.3L595.1 940.1Z" fill="#5c5953" stroke="#5c5953" stroke-width="0.6" stroke-linejoin="round"/><path d="M603.2 938.8L599.2 940.3L599.1 939.3L603.0 937.8Z" fill="#5e5b54" stroke="#5e5b54" stroke-width="0.6" stroke-linejoin="round"/><path d="M599.2 940.3L595.1 941.2L595.1 940.1L599.1 939.3Z" fill="#5d5a53" stroke="#5d5a53" stroke-width="0.6" stroke-linejoin="round"/><path d="M511.6 820.7L510.4 817.8L510.4 816.3L511.6 819.1Z" fill="#56544f" stroke="#56544f" stroke-width="0.6" stroke-linejoin="round"/><path d="M575.2 931.7L511.6 820.7L511.6 819.1L575.6 930.8Z" fill="#56544f" stroke="#56544f" stroke-width="0.6" stroke-linejoin="round"/><path d="M765.3 859.6L765.3 859.6L765.2 858.5L765.2 858.5Z" fill="#67645d" stroke="#67645d" stroke-width="0.6" stroke-linejoin="round"/><path d="M765.3 859.6L765.3 859.6L765.2 858.6L765.2 858.5Z" fill="#65625b" stroke="#65625b" stroke-width="0.6" stroke-linejoin="round"/><path d="M765.3 859.6L765.3 859.7L765.1 858.6L765.2 858.6Z" fill="#636059" stroke="#636059" stroke-width="0.6" stroke-linejoin="round"/><path d="M765.3 859.7L765.2 859.7L765.1 858.6L765.1 858.6Z" fill="#615e57" stroke="#615e57" stroke-width="0.6" stroke-linejoin="round"/><path d="M765.2 859.7L765.2 859.7L765.1 858.7L765.1 858.6Z" fill="#5f5c55" stroke="#5f5c55" stroke-width="0.6" stroke-linejoin="round"/><path d="M765.2 859.7L765.2 859.7L765.1 858.7L765.1 858.7Z" fill="#5e5b54" stroke="#5e5b54" stroke-width="0.6" stroke-linejoin="round"/><path d="M765.2 859.7L603.0 937.8L602.8 936.7L765.1 858.7Z" fill="#5e5b54" stroke="#5e5b54" stroke-width="0.6" stroke-linejoin="round"/><path d="M577.3 934.5L575.2 931.7L575.6 930.8L577.6 933.5Z" fill="#56544f" stroke="#56544f" stroke-width="0.6" stroke-linejoin="round"/><path d="M580.0 936.8L577.3 934.5L577.6 933.5L580.3 935.8Z" fill="#57554f" stroke="#57554f" stroke-width="0.6" stroke-linejoin="round"/><path d="M583.3 938.6L580.0 936.8L580.3 935.8L583.5 937.5Z" fill="#585650" stroke="#585650" stroke-width="0.6" stroke-linejoin="round"/><path d="M587.0 939.8L583.3 938.6L583.5 937.5L587.1 938.7Z" fill="#595751" stroke="#595751" stroke-width="0.6" stroke-linejoin="round"/><path d="M591.0 940.3L587.0 939.8L587.1 938.7L591.0 939.2Z" fill="#5b5852" stroke="#5b5852" stroke-width="0.6" stroke-linejoin="round"/><path d="M595.1 940.1L591.0 940.3L591.0 939.2L595.0 939.0Z" fill="#5c5953" stroke="#5c5953" stroke-width="0.6" stroke-linejoin="round"/><path d="M603.0 937.8L599.1 939.3L599.0 938.2L602.8 936.7Z" fill="#5e5b54" stroke="#5e5b54" stroke-width="0.6" stroke-linejoin="round"/><path d="M599.1 939.3L595.1 940.1L595.0 939.0L599.0 938.2Z" fill="#5d5a54" stroke="#5d5a54" stroke-width="0.6" stroke-linejoin="round"/><path d="M511.6 819.1L510.4 816.3L510.4 814.8L511.6 817.6Z" fill="#585651" stroke="#585651" stroke-width="0.6" stroke-linejoin="round"/><path d="M575.6 930.8L511.6 819.1L511.6 817.6L576.0 929.8Z" fill="#575550" stroke="#575550" stroke-width="0.6" stroke-linejoin="round"/><path d="M765.2 858.5L765.2 858.5L765.0 857.5L765.0 857.4Z" fill="#68655e" stroke="#68655e" stroke-width="0.6" stroke-linejoin="round"/><path d="M765.2 858.5L765.2 858.6L765.0 857.5L765.0 857.5Z" fill="#66635c" stroke="#66635c" stroke-width="0.6" stroke-linejoin="round"/><path d="M765.2 858.6L765.1 858.6L765.0 857.5L765.0 857.5Z" fill="#636059" stroke="#636059" stroke-width="0.6" stroke-linejoin="round"/><path d="M765.1 858.6L765.1 858.6L765.0 857.5L765.0 857.5Z" fill="#615e57" stroke="#615e57" stroke-width="0.6" stroke-linejoin="round"/><path d="M765.1 858.6L765.1 858.7L765.0 857.6L765.0 857.5Z" fill="#605d56" stroke="#605d56" stroke-width="0.6" stroke-linejoin="round"/><path d="M765.1 858.7L765.1 858.7L764.9 857.6L765.0 857.6Z" fill="#5f5c55" stroke="#5f5c55" stroke-width="0.6" stroke-linejoin="round"/><path d="M765.1 858.7L602.8 936.7L602.6 935.7L764.9 857.6Z" fill="#5f5c55" stroke="#5f5c55" stroke-width="0.6" stroke-linejoin="round"/><path d="M577.6 933.5L575.6 930.8L576.0 929.8L578.0 932.5Z" fill="#575550" stroke="#575550" stroke-width="0.6" stroke-linejoin="round"/><path d="M580.3 935.8L577.6 933.5L578.0 932.5L580.6 934.7Z" fill="#585651" stroke="#585651" stroke-width="0.6" stroke-linejoin="round"/><path d="M583.5 937.5L580.3 935.8L580.6 934.7L583.7 936.4Z" fill="#595751" stroke="#595751" stroke-width="0.6" stroke-linejoin="round"/><path d="M587.1 938.7L583.5 937.5L583.7 936.4L587.3 937.6Z" fill="#5a5852" stroke="#5a5852" stroke-width="0.6" stroke-linejoin="round"/><path d="M591.0 939.2L587.1 938.7L587.3 937.6L591.1 938.0Z" fill="#5c5953" stroke="#5c5953" stroke-width="0.6" stroke-linejoin="round"/><path d="M595.0 939.0L591.0 939.2L591.1 938.0L595.0 937.9Z" fill="#5d5a54" stroke="#5d5a54" stroke-width="0.6" stroke-linejoin="round"/><path d="M602.8 936.7L599.0 938.2L598.9 937.1L602.6 935.7Z" fill="#5f5c54" stroke="#5f5c54" stroke-width="0.6" stroke-linejoin="round"/><path d="M599.0 938.2L595.0 939.0L595.0 937.9L598.9 937.1Z" fill="#5e5b54" stroke="#5e5b54" stroke-width="0.6" stroke-linejoin="round"/><path d="M510.4 814.8L510.0 811.8L510.2 810.5L510.6 813.3Z" fill="#5b5954" stroke="#5b5954" stroke-width="0.6" stroke-linejoin="round"/><path d="M511.6 817.6L510.4 814.8L510.6 813.3L511.7 816.0Z" fill="#5a5853" stroke="#5a5853" stroke-width="0.6" stroke-linejoin="round"/><path d="M576.0 929.8L511.6 817.6L511.7 816.0L576.5 928.8Z" fill="#5a5853" stroke="#5a5853" stroke-width="0.6" stroke-linejoin="round"/><path d="M765.0 857.4L765.0 857.4L764.8 856.2L764.8 856.2Z" fill="#6b6861" stroke="#6b6861" stroke-width="0.6" stroke-linejoin="round"/><path d="M765.0 857.4L765.0 857.5L764.8 856.3L764.8 856.2Z" fill="#69665f" stroke="#69665f" stroke-width="0.6" stroke-linejoin="round"/><path d="M765.0 857.5L765.0 857.5L764.8 856.3L764.8 856.3Z" fill="#67645d" stroke="#67645d" stroke-width="0.6" stroke-linejoin="round"/><path d="M765.0 857.5L765.0 857.5L764.8 856.3L764.8 856.3Z" fill="#65625b" stroke="#65625b" stroke-width="0.6" stroke-linejoin="round"/><path d="M765.0 857.5L765.0 857.5L764.8 856.4L764.8 856.3Z" fill="#636059" stroke="#636059" stroke-width="0.6" stroke-linejoin="round"/><path d="M765.0 857.5L765.0 857.6L764.8 856.4L764.8 856.4Z" fill="#625f57" stroke="#625f57" stroke-width="0.6" stroke-linejoin="round"/><path d="M765.0 857.6L764.9 857.6L764.7 856.4L764.8 856.4Z" fill="#615e56" stroke="#615e56" stroke-width="0.6" stroke-linejoin="round"/><path d="M764.9 857.6L602.6 935.7L602.3 934.5L764.7 856.4Z" fill="#615e56" stroke="#615e56" stroke-width="0.6" stroke-linejoin="round"/><path d="M578.0 932.5L576.0 929.8L576.5 928.8L578.4 931.4Z" fill="#5a5853" stroke="#5a5853" stroke-width="0.6" stroke-linejoin="round"/><path d="M580.6 934.7L578.0 932.5L578.4 931.4L580.9 933.6Z" fill="#5a5853" stroke="#5a5853" stroke-width="0.6" stroke-linejoin="round"/><path d="M583.7 936.4L580.6 934.7L580.9 933.6L584.0 935.2Z" fill="#5b5953" stroke="#5b5953" stroke-width="0.6" stroke-linejoin="round"/><path d="M587.3 937.6L583.7 936.4L584.0 935.2L587.4 936.3Z" fill="#5d5a54" stroke="#5d5a54" stroke-width="0.6" stroke-linejoin="round"/><path d="M591.1 938.0L587.3 937.6L587.4 936.3L591.1 936.8Z" fill="#5e5b55" stroke="#5e5b55" stroke-width="0.6" stroke-linejoin="round"/><path d="M595.0 937.9L591.1 938.0L591.1 936.8L594.9 936.6Z" fill="#5f5c55" stroke="#5f5c55" stroke-width="0.6" stroke-linejoin="round"/><path d="M602.6 935.7L598.9 937.1L598.7 935.8L602.3 934.5Z" fill="#615e56" stroke="#615e56" stroke-width="0.6" stroke-linejoin="round"/><path d="M598.9 937.1L595.0 937.9L594.9 936.6L598.7 935.8Z" fill="#605d56" stroke="#605d56" stroke-width="0.6" stroke-linejoin="round"/><path d="M510.6 813.3L510.2 810.5L510.4 809.1L510.8 811.9Z" fill="#5e5b56" stroke="#5e5b56" stroke-width="0.6" stroke-linejoin="round"/><path d="M511.7 816.0L510.6 813.3L510.8 811.9L511.9 814.5Z" fill="#5c5a55" stroke="#5c5a55" stroke-width="0.6" stroke-linejoin="round"/><path d="M576.5 928.8L511.7 816.0L511.9 814.5L576.9 927.7Z" fill="#5c5a55" stroke="#5c5a55" stroke-width="0.6" stroke-linejoin="round"/><path d="M764.8 856.2L764.8 856.2L764.6 855.0L764.6 854.9Z" fill="#6c6962" stroke="#6c6962" stroke-width="0.6" stroke-linejoin="round"/><path d="M764.8 856.2L764.8 856.3L764.6 855.0L764.6 855.0Z" fill="#6a6760" stroke="#6a6760" stroke-width="0.6" stroke-linejoin="round"/><path d="M764.8 856.3L764.8 856.3L764.6 855.0L764.6 855.0Z" fill="#69665e" stroke="#69665e" stroke-width="0.6" stroke-linejoin="round"/><path d="M764.8 856.3L764.8 856.3L764.5 855.0L764.6 855.0Z" fill="#67645c" stroke="#67645c" stroke-width="0.6" stroke-linejoin="round"/><path d="M764.8 856.3L764.8 856.4L764.5 855.1L764.5 855.0Z" fill="#65625a" stroke="#65625a" stroke-width="0.6" stroke-linejoin="round"/><path d="M764.8 856.4L764.8 856.4L764.5 855.1L764.5 855.1Z" fill="#646159" stroke="#646159" stroke-width="0.6" stroke-linejoin="round"/><path d="M764.8 856.4L764.7 856.4L764.5 855.1L764.5 855.1Z" fill="#636058" stroke="#636058" stroke-width="0.6" stroke-linejoin="round"/><path d="M764.7 856.4L602.3 934.5L602.0 933.2L764.5 855.1Z" fill="#636058" stroke="#636058" stroke-width="0.6" stroke-linejoin="round"/><path d="M578.4 931.4L576.5 928.8L576.9 927.7L578.8 930.2Z" fill="#5c5a55" stroke="#5c5a55" stroke-width="0.6" stroke-linejoin="round"/><path d="M580.9 933.6L578.4 931.4L578.8 930.2L581.3 932.3Z" fill="#5d5b55" stroke="#5d5b55" stroke-width="0.6" stroke-linejoin="round"/><path d="M584.0 935.2L580.9 933.6L581.3 932.3L584.2 933.9Z" fill="#5e5b56" stroke="#5e5b56" stroke-width="0.6" stroke-linejoin="round"/><path d="M587.4 936.3L584.0 935.2L584.2 933.9L587.5 934.9Z" fill="#5f5c56" stroke="#5f5c56" stroke-width="0.6" stroke-linejoin="round"/><path d="M591.1 936.8L587.4 936.3L587.5 934.9L591.1 935.4Z" fill="#605e57" stroke="#605e57" stroke-width="0.6" stroke-linejoin="round"/><path d="M594.9 936.6L591.1 936.8L591.1 935.4L594.8 935.3Z" fill="#615f57" stroke="#615f57" stroke-width="0.6" stroke-linejoin="round"/><path d="M602.3 934.5L598.7 935.8L598.5 934.5L602.0 933.2Z" fill="#636058" stroke="#636058" stroke-width="0.6" stroke-linejoin="round"/><path d="M598.7 935.8L594.9 936.6L594.8 935.3L598.5 934.5Z" fill="#625f58" stroke="#625f58" stroke-width="0.6" stroke-linejoin="round"/><path d="M510.4 809.1L510.7 806.3L511.1 805.1L510.8 807.8Z" fill="#62605a" stroke="#62605a" stroke-width="0.6" stroke-linejoin="round"/><path d="M510.8 811.9L510.4 809.1L510.8 807.8L511.2 810.5Z" fill="#605e58" stroke="#605e58" stroke-width="0.6" stroke-linejoin="round"/><path d="M511.9 814.5L510.8 811.9L511.2 810.5L512.2 813.0Z" fill="#5f5d58" stroke="#5f5d58" stroke-width="0.6" stroke-linejoin="round"/><path d="M576.9 927.7L511.9 814.5L512.2 813.0L577.5 926.4Z" fill="#5f5d57" stroke="#5f5d57" stroke-width="0.6" stroke-linejoin="round"/><path d="M764.5 854.9L764.6 854.9L764.2 853.5L764.2 853.5Z" fill="#6e6b64" stroke="#6e6b64" stroke-width="0.6" stroke-linejoin="round"/><path d="M764.6 854.9L764.6 855.0L764.2 853.6L764.2 853.5Z" fill="#6d6a63" stroke="#6d6a63" stroke-width="0.6" stroke-linejoin="round"/><path d="M764.6 855.0L764.6 855.0L764.2 853.6L764.2 853.6Z" fill="#6c6962" stroke="#6c6962" stroke-width="0.6" stroke-linejoin="round"/><path d="M764.6 855.0L764.6 855.0L764.2 853.6L764.2 853.6Z" fill="#6a6760" stroke="#6a6760" stroke-width="0.6" stroke-linejoin="round"/><path d="M764.6 855.0L764.5 855.0L764.2 853.6L764.2 853.6Z" fill="#68655e" stroke="#68655e" stroke-width="0.6" stroke-linejoin="round"/><path d="M764.5 855.0L764.5 855.1L764.2 853.7L764.2 853.6Z" fill="#67645c" stroke="#67645c" stroke-width="0.6" stroke-linejoin="round"/><path d="M764.5 855.1L764.5 855.1L764.2 853.7L764.2 853.7Z" fill="#66635b" stroke="#66635b" stroke-width="0.6" stroke-linejoin="round"/><path d="M764.5 855.1L764.5 855.1L764.1 853.7L764.2 853.7Z" fill="#65625a" stroke="#65625a" stroke-width="0.6" stroke-linejoin="round"/><path d="M764.5 855.1L602.0 933.2L601.6 931.7L764.1 853.7Z" fill="#65625a" stroke="#65625a" stroke-width="0.6" stroke-linejoin="round"/><path d="M578.8 930.2L576.9 927.7L577.5 926.4L579.3 928.9Z" fill="#5f5d57" stroke="#5f5d57" stroke-width="0.6" stroke-linejoin="round"/><path d="M581.3 932.3L578.8 930.2L579.3 928.9L581.6 930.9Z" fill="#5f5d58" stroke="#5f5d58" stroke-width="0.6" stroke-linejoin="round"/><path d="M584.2 933.9L581.3 932.3L581.6 930.9L584.5 932.4Z" fill="#605e58" stroke="#605e58" stroke-width="0.6" stroke-linejoin="round"/><path d="M587.5 934.9L584.2 933.9L584.5 932.4L587.7 933.5Z" fill="#615f58" stroke="#615f58" stroke-width="0.6" stroke-linejoin="round"/><path d="M591.1 935.4L587.5 934.9L587.7 933.5L591.1 933.9Z" fill="#636059" stroke="#636059" stroke-width="0.6" stroke-linejoin="round"/><path d="M594.8 935.3L591.1 935.4L591.1 933.9L594.7 933.8Z" fill="#646159" stroke="#646159" stroke-width="0.6" stroke-linejoin="round"/><path d="M602.0 933.2L598.5 934.5L598.2 933.0L601.6 931.7Z" fill="#65625a" stroke="#65625a" stroke-width="0.6" stroke-linejoin="round"/><path d="M598.5 934.5L594.8 935.3L594.7 933.8L598.2 933.0Z" fill="#64625a" stroke="#64625a" stroke-width="0.6" stroke-linejoin="round"/><path d="M678.5 723.1L678.5 723.2L678.6 722.5L678.6 722.5Z" fill="#6f6c65" stroke="#6f6c65" stroke-width="0.6" stroke-linejoin="round"/><path d="M511.1 805.1L512.0 802.4L512.4 801.3L511.6 803.9Z" fill="#67655e" stroke="#67655e" stroke-width="0.6" stroke-linejoin="round"/><path d="M510.8 807.8L511.1 805.1L511.6 803.9L511.3 806.6Z" fill="#65625d" stroke="#65625d" stroke-width="0.6" stroke-linejoin="round"/><path d="M511.2 810.5L510.8 807.8L511.3 806.6L511.7 809.1Z" fill="#63615b" stroke="#63615b" stroke-width="0.6" stroke-linejoin="round"/><path d="M512.2 813.0L511.2 810.5L511.7 809.1L512.7 811.5Z" fill="#62605a" stroke="#62605a" stroke-width="0.6" stroke-linejoin="round"/><path d="M678.5 723.2L764.2 853.5L763.8 852.0L678.6 722.5Z" fill="#6f6c65" stroke="#6f6c65" stroke-width="0.6" stroke-linejoin="round"/><path d="M577.5 926.4L512.2 813.0L512.7 811.5L578.1 925.1Z" fill="#62605a" stroke="#62605a" stroke-width="0.6" stroke-linejoin="round"/><path d="M764.2 853.5L764.2 853.5L763.8 852.0L763.8 852.0Z" fill="#6f6c65" stroke="#6f6c65" stroke-width="0.6" stroke-linejoin="round"/><path d="M764.2 853.5L764.2 853.6L763.8 852.0L763.8 852.0Z" fill="#6f6c64" stroke="#6f6c64" stroke-width="0.6" stroke-linejoin="round"/><path d="M764.2 853.6L764.2 853.6L763.8 852.1L763.8 852.0Z" fill="#6e6b64" stroke="#6e6b64" stroke-width="0.6" stroke-linejoin="round"/><path d="M764.2 853.6L764.2 853.6L763.8 852.1L763.8 852.1Z" fill="#6e6a63" stroke="#6e6a63" stroke-width="0.6" stroke-linejoin="round"/><path d="M764.2 853.6L764.2 853.6L763.8 852.1L763.8 852.1Z" fill="#6d6a62" stroke="#6d6a62" stroke-width="0.6" stroke-linejoin="round"/><path d="M764.2 853.6L764.2 853.7L763.8 852.1L763.8 852.1Z" fill="#6c6961" stroke="#6c6961" stroke-width="0.6" stroke-linejoin="round"/><path d="M764.2 853.7L764.2 853.7L763.7 852.2L763.8 852.1Z" fill="#6c6860" stroke="#6c6860" stroke-width="0.6" stroke-linejoin="round"/><path d="M764.2 853.7L764.1 853.7L763.7 852.2L763.7 852.2Z" fill="#6b6860" stroke="#6b6860" stroke-width="0.6" stroke-linejoin="round"/><path d="M764.1 853.7L601.6 931.7L601.1 930.2L763.7 852.2Z" fill="#6b6860" stroke="#6b6860" stroke-width="0.6" stroke-linejoin="round"/><path d="M579.3 928.9L577.5 926.4L578.1 925.1L579.8 927.4Z" fill="#62605a" stroke="#62605a" stroke-width="0.6" stroke-linejoin="round"/><path d="M581.6 930.9L579.3 928.9L579.8 927.4L582.0 929.4Z" fill="#63605b" stroke="#63605b" stroke-width="0.6" stroke-linejoin="round"/><path d="M584.5 932.4L581.6 930.9L582.0 929.4L584.8 930.9Z" fill="#64625b" stroke="#64625b" stroke-width="0.6" stroke-linejoin="round"/><path d="M587.7 933.5L584.5 932.4L584.8 930.9L587.8 931.8Z" fill="#66635c" stroke="#66635c" stroke-width="0.6" stroke-linejoin="round"/><path d="M591.1 933.9L587.7 933.5L587.8 931.8L591.1 932.3Z" fill="#68655e" stroke="#68655e" stroke-width="0.6" stroke-linejoin="round"/><path d="M594.7 933.8L591.1 933.9L591.1 932.3L594.5 932.1Z" fill="#69665f" stroke="#69665f" stroke-width="0.6" stroke-linejoin="round"/><path d="M601.6 931.7L598.2 933.0L597.9 931.4L601.1 930.2Z" fill="#6b6860" stroke="#6b6860" stroke-width="0.6" stroke-linejoin="round"/><path d="M598.2 933.0L594.7 933.8L594.5 932.1L597.9 931.4Z" fill="#6b675f" stroke="#6b675f" stroke-width="0.6" stroke-linejoin="round"/><path d="M678.6 722.5L678.6 722.5L678.8 722.0L678.8 721.9Z" fill="#706d66" stroke="#706d66" stroke-width="0.6" stroke-linejoin="round"/><path d="M511.6 803.9L512.4 801.3L513.0 800.4L512.2 802.9Z" fill="#696761" stroke="#696761" stroke-width="0.6" stroke-linejoin="round"/><path d="M511.3 806.6L511.6 803.9L512.2 802.9L511.9 805.4Z" fill="#67655f" stroke="#67655f" stroke-width="0.6" stroke-linejoin="round"/><path d="M511.7 809.1L511.3 806.6L511.9 805.4L512.3 807.8Z" fill="#66645e" stroke="#66645e" stroke-width="0.6" stroke-linejoin="round"/><path d="M512.7 811.5L511.7 809.1L512.3 807.8L513.2 810.1Z" fill="#65635d" stroke="#65635d" stroke-width="0.6" stroke-linejoin="round"/><path d="M678.6 722.5L763.8 852.0L763.3 850.3L678.8 722.0Z" fill="#706d66" stroke="#706d66" stroke-width="0.6" stroke-linejoin="round"/><path d="M578.1 925.1L512.7 811.5L513.2 810.1L578.7 923.7Z" fill="#65635d" stroke="#65635d" stroke-width="0.6" stroke-linejoin="round"/><path d="M763.8 852.0L763.8 852.0L763.3 850.3L763.3 850.3Z" fill="#706d66" stroke="#706d66" stroke-width="0.6" stroke-linejoin="round"/><path d="M763.8 852.0L763.8 852.0L763.3 850.4L763.3 850.3Z" fill="#706d66" stroke="#706d66" stroke-width="0.6" stroke-linejoin="round"/><path d="M763.8 852.0L763.8 852.1L763.3 850.4L763.3 850.4Z" fill="#716d66" stroke="#716d66" stroke-width="0.6" stroke-linejoin="round"/><path d="M763.8 852.1L763.8 852.1L763.3 850.4L763.3 850.4Z" fill="#716e66" stroke="#716e66" stroke-width="0.6" stroke-linejoin="round"/><path d="M763.8 852.1L763.8 852.1L763.3 850.5L763.3 850.4Z" fill="#716e66" stroke="#716e66" stroke-width="0.6" stroke-linejoin="round"/><path d="M763.8 852.1L763.8 852.1L763.3 850.5L763.3 850.5Z" fill="#726e66" stroke="#726e66" stroke-width="0.6" stroke-linejoin="round"/><path d="M763.8 852.1L763.7 852.2L763.2 850.5L763.3 850.5Z" fill="#726e66" stroke="#726e66" stroke-width="0.6" stroke-linejoin="round"/><path d="M763.7 852.2L763.7 852.2L763.2 850.5L763.2 850.5Z" fill="#726f66" stroke="#726f66" stroke-width="0.6" stroke-linejoin="round"/><path d="M763.7 852.2L601.1 930.2L600.6 928.5L763.2 850.5Z" fill="#726f66" stroke="#726f66" stroke-width="0.6" stroke-linejoin="round"/><path d="M579.8 927.4L578.1 925.1L578.7 923.7L580.3 925.9Z" fill="#65635d" stroke="#65635d" stroke-width="0.6" stroke-linejoin="round"/><path d="M582.0 929.4L579.8 927.4L580.3 925.9L582.5 927.7Z" fill="#66645e" stroke="#66645e" stroke-width="0.6" stroke-linejoin="round"/><path d="M584.8 930.9L582.0 929.4L582.5 927.7L585.1 929.1Z" fill="#68665f" stroke="#68665f" stroke-width="0.6" stroke-linejoin="round"/><path d="M587.8 931.8L584.8 930.9L585.1 929.1L588.0 930.0Z" fill="#6a6861" stroke="#6a6861" stroke-width="0.6" stroke-linejoin="round"/><path d="M591.1 932.3L587.8 931.8L588.0 930.0L591.1 930.4Z" fill="#6d6a62" stroke="#6d6a62" stroke-width="0.6" stroke-linejoin="round"/><path d="M594.5 932.1L591.1 932.3L591.1 930.4L594.3 930.3Z" fill="#6f6c64" stroke="#6f6c64" stroke-width="0.6" stroke-linejoin="round"/><path d="M601.1 930.2L597.9 931.4L597.5 929.7L600.6 928.5Z" fill="#726e66" stroke="#726e66" stroke-width="0.6" stroke-linejoin="round"/><path d="M597.9 931.4L594.5 932.1L594.3 930.3L597.5 929.7Z" fill="#716e65" stroke="#716e65" stroke-width="0.6" stroke-linejoin="round"/><path d="M678.8 721.9L678.8 721.9L679.1 721.5L679.0 721.5Z" fill="#716e67" stroke="#716e67" stroke-width="0.6" stroke-linejoin="round"/><path d="M678.8 721.9L678.8 722.0L679.1 721.5L679.1 721.5Z" fill="#716e67" stroke="#716e67" stroke-width="0.6" stroke-linejoin="round"/><path d="M513.0 800.4L514.4 798.0L515.1 797.3L513.8 799.5Z" fill="#6e6b65" stroke="#6e6b65" stroke-width="0.6" stroke-linejoin="round"/><path d="M512.2 802.9L513.0 800.4L513.8 799.5L513.0 801.8Z" fill="#6c6a63" stroke="#6c6a63" stroke-width="0.6" stroke-linejoin="round"/><path d="M511.9 805.4L512.2 802.9L513.0 801.8L512.7 804.2Z" fill="#6a6862" stroke="#6a6862" stroke-width="0.6" stroke-linejoin="round"/><path d="M512.3 807.8L511.9 805.4L512.7 804.2L513.1 806.5Z" fill="#696761" stroke="#696761" stroke-width="0.6" stroke-linejoin="round"/><path d="M513.2 810.1L512.3 807.8L513.1 806.5L514.0 808.6Z" fill="#696761" stroke="#696761" stroke-width="0.6" stroke-linejoin="round"/><path d="M678.8 722.0L763.3 850.3L762.7 848.5L679.1 721.5Z" fill="#716e67" stroke="#716e67" stroke-width="0.6" stroke-linejoin="round"/><path d="M578.7 923.7L513.2 810.1L514.0 808.6L579.4 922.1Z" fill="#696761" stroke="#696761" stroke-width="0.6" stroke-linejoin="round"/><path d="M763.3 850.3L763.3 850.3L762.7 848.5L762.7 848.5Z" fill="#716e67" stroke="#716e67" stroke-width="0.6" stroke-linejoin="round"/><path d="M763.3 850.3L763.3 850.4L762.7 848.6L762.7 848.5Z" fill="#726f68" stroke="#726f68" stroke-width="0.6" stroke-linejoin="round"/><path d="M763.3 850.4L763.3 850.4L762.7 848.6L762.7 848.6Z" fill="#737068" stroke="#737068" stroke-width="0.6" stroke-linejoin="round"/><path d="M763.3 850.4L763.3 850.4L762.7 848.6L762.7 848.6Z" fill="#757169" stroke="#757169" stroke-width="0.6" stroke-linejoin="round"/><path d="M763.3 850.4L763.3 850.5L762.7 848.7L762.7 848.6Z" fill="#76726a" stroke="#76726a" stroke-width="0.6" stroke-linejoin="round"/><path d="M763.3 850.5L763.3 850.5L762.6 848.7L762.7 848.7Z" fill="#77746b" stroke="#77746b" stroke-width="0.6" stroke-linejoin="round"/><path d="M763.3 850.5L763.2 850.5L762.6 848.7L762.6 848.7Z" fill="#79756c" stroke="#79756c" stroke-width="0.6" stroke-linejoin="round"/><path d="M763.2 850.5L763.2 850.5L762.6 848.7L762.6 848.7Z" fill="#79756c" stroke="#79756c" stroke-width="0.6" stroke-linejoin="round"/><path d="M763.2 850.5L600.6 928.5L600.0 926.6L762.6 848.7Z" fill="#79756c" stroke="#79756c" stroke-width="0.6" stroke-linejoin="round"/><path d="M580.3 925.9L578.7 923.7L579.4 922.1L581.0 924.2Z" fill="#696761" stroke="#696761" stroke-width="0.6" stroke-linejoin="round"/><path d="M582.5 927.7L580.3 925.9L581.0 924.2L583.0 925.9Z" fill="#6a6862" stroke="#6a6862" stroke-width="0.6" stroke-linejoin="round"/><path d="M585.1 929.1L582.5 927.7L583.0 925.9L585.4 927.2Z" fill="#6c6a63" stroke="#6c6a63" stroke-width="0.6" stroke-linejoin="round"/><path d="M588.0 930.0L585.1 929.1L585.4 927.2L588.1 928.1Z" fill="#6f6c65" stroke="#6f6c65" stroke-width="0.6" stroke-linejoin="round"/><path d="M591.1 930.4L588.0 930.0L588.1 928.1L591.1 928.5Z" fill="#736f68" stroke="#736f68" stroke-width="0.6" stroke-linejoin="round"/><path d="M594.3 930.3L591.1 930.4L591.1 928.5L594.1 928.3Z" fill="#76726a" stroke="#76726a" stroke-width="0.6" stroke-linejoin="round"/><path d="M600.6 928.5L597.5 929.7L597.1 927.7L600.0 926.6Z" fill="#79756c" stroke="#79756c" stroke-width="0.6" stroke-linejoin="round"/><path d="M597.5 929.7L594.3 930.3L594.1 928.3L597.1 927.7Z" fill="#78746b" stroke="#78746b" stroke-width="0.6" stroke-linejoin="round"/><path d="M679.0 721.5L679.0 721.5L679.4 721.2L679.4 721.2Z" fill="#737069" stroke="#737069" stroke-width="0.6" stroke-linejoin="round"/><path d="M679.0 721.5L679.1 721.5L679.5 721.3L679.4 721.2Z" fill="#737069" stroke="#737069" stroke-width="0.6" stroke-linejoin="round"/><path d="M679.1 721.5L679.1 721.5L679.5 721.3L679.5 721.3Z" fill="#737069" stroke="#737069" stroke-width="0.6" stroke-linejoin="round"/><path d="M515.1 797.3L516.9 795.3L517.5 794.9L515.9 796.7Z" fill="#726f68" stroke="#726f68" stroke-width="0.6" stroke-linejoin="round"/><path d="M513.8 799.5L515.1 797.3L515.9 796.7L514.7 798.8Z" fill="#716f68" stroke="#716f68" stroke-width="0.6" stroke-linejoin="round"/><path d="M513.0 801.8L513.8 799.5L514.7 798.8L513.9 800.9Z" fill="#706e68" stroke="#706e68" stroke-width="0.6" stroke-linejoin="round"/><path d="M512.7 804.2L513.0 801.8L513.9 800.9L513.7 803.1Z" fill="#706e68" stroke="#706e68" stroke-width="0.6" stroke-linejoin="round"/><path d="M513.1 806.5L512.7 804.2L513.7 803.1L514.0 805.2Z" fill="#6f6e67" stroke="#6f6e67" stroke-width="0.6" stroke-linejoin="round"/><path d="M514.0 808.6L513.1 806.5L514.0 805.2L514.9 807.1Z" fill="#6f6d67" stroke="#6f6d67" stroke-width="0.6" stroke-linejoin="round"/><path d="M679.1 721.5L762.7 848.5L762.0 846.5L679.5 721.3Z" fill="#737069" stroke="#737069" stroke-width="0.6" stroke-linejoin="round"/><path d="M579.4 922.1L514.0 808.6L514.9 807.1L580.3 920.4Z" fill="#6f6d67" stroke="#6f6d67" stroke-width="0.6" stroke-linejoin="round"/><path d="M762.7 848.5L762.7 848.5L762.0 846.6L762.0 846.5Z" fill="#737069" stroke="#737069" stroke-width="0.6" stroke-linejoin="round"/><path d="M762.7 848.5L762.7 848.6L762.0 846.6L762.0 846.6Z" fill="#74716a" stroke="#74716a" stroke-width="0.6" stroke-linejoin="round"/><path d="M762.7 848.6L762.7 848.6L762.0 846.6L762.0 846.6Z" fill="#76736b" stroke="#76736b" stroke-width="0.6" stroke-linejoin="round"/><path d="M762.7 848.6L762.7 848.6L762.0 846.7L762.0 846.6Z" fill="#7a766e" stroke="#7a766e" stroke-width="0.6" stroke-linejoin="round"/><path d="M762.7 848.6L762.7 848.7L762.0 846.7L762.0 846.7Z" fill="#7d7970" stroke="#7d7970" stroke-width="0.6" stroke-linejoin="round"/><path d="M762.7 848.7L762.6 848.7L761.9 846.7L762.0 846.7Z" fill="#807c72" stroke="#807c72" stroke-width="0.6" stroke-linejoin="round"/><path d="M762.6 848.7L762.6 848.7L761.9 846.7L761.9 846.7Z" fill="#827e74" stroke="#827e74" stroke-width="0.6" stroke-linejoin="round"/><path d="M762.6 848.7L762.6 848.7L761.9 846.8L761.9 846.7Z" fill="#847f75" stroke="#847f75" stroke-width="0.6" stroke-linejoin="round"/><path d="M762.6 848.7L600.0 926.6L599.3 924.6L761.9 846.8Z" fill="#847f75" stroke="#847f75" stroke-width="0.6" stroke-linejoin="round"/><path d="M581.0 924.2L579.4 922.1L580.3 920.4L581.7 922.3Z" fill="#6f6e67" stroke="#6f6e67" stroke-width="0.6" stroke-linejoin="round"/><path d="M583.0 925.9L581.0 924.2L581.7 922.3L583.5 923.9Z" fill="#716f69" stroke="#716f69" stroke-width="0.6" stroke-linejoin="round"/><path d="M585.4 927.2L583.0 925.9L583.5 923.9L585.8 925.1Z" fill="#74716a" stroke="#74716a" stroke-width="0.6" stroke-linejoin="round"/><path d="M588.1 928.1L585.4 927.2L585.8 925.1L588.3 925.9Z" fill="#77756d" stroke="#77756d" stroke-width="0.6" stroke-linejoin="round"/><path d="M591.1 928.5L588.1 928.1L588.3 925.9L591.0 926.3Z" fill="#7b786f" stroke="#7b786f" stroke-width="0.6" stroke-linejoin="round"/><path d="M594.1 928.3L591.1 928.5L591.0 926.3L593.8 926.2Z" fill="#7f7b72" stroke="#7f7b72" stroke-width="0.6" stroke-linejoin="round"/><path d="M600.0 926.6L597.1 927.7L596.6 925.6L599.3 924.6Z" fill="#847f75" stroke="#847f75" stroke-width="0.6" stroke-linejoin="round"/><path d="M597.1 927.7L594.1 928.3L593.8 926.2L596.6 925.6Z" fill="#827e74" stroke="#827e74" stroke-width="0.6" stroke-linejoin="round"/><path d="M679.3 721.2L679.4 721.2L679.9 721.2L679.9 721.1Z" fill="#74716a" stroke="#74716a" stroke-width="0.6" stroke-linejoin="round"/><path d="M679.4 721.2L679.4 721.2L679.9 721.2L679.9 721.2Z" fill="#74716a" stroke="#74716a" stroke-width="0.6" stroke-linejoin="round"/><path d="M679.4 721.2L679.4 721.2L680.0 721.2L679.9 721.2Z" fill="#74716a" stroke="#74716a" stroke-width="0.6" stroke-linejoin="round"/><path d="M679.4 721.2L679.5 721.3L680.0 721.2L680.0 721.2Z" fill="#74716a" stroke="#74716a" stroke-width="0.6" stroke-linejoin="round"/><path d="M679.5 721.3L679.5 721.3L680.0 721.2L680.0 721.2Z" fill="#74716a" stroke="#74716a" stroke-width="0.6" stroke-linejoin="round"/><path d="M521.9 792.0L679.2 721.2L679.8 721.2L522.4 792.0Z" fill="#74716a" stroke="#74716a" stroke-width="0.6" stroke-linejoin="round"/><path d="M519.6 793.3L521.9 792.0L522.4 792.0L520.3 793.1Z" fill="#74716a" stroke="#74716a" stroke-width="0.6" stroke-linejoin="round"/><path d="M517.5 794.9L519.6 793.3L520.3 793.1L518.4 794.6Z" fill="#74726b" stroke="#74726b" stroke-width="0.6" stroke-linejoin="round"/><path d="M515.9 796.7L517.5 794.9L518.4 794.6L516.9 796.2Z" fill="#75726b" stroke="#75726b" stroke-width="0.6" stroke-linejoin="round"/><path d="M514.7 798.8L515.9 796.7L516.9 796.2L515.8 798.1Z" fill="#75736c" stroke="#75736c" stroke-width="0.6" stroke-linejoin="round"/><path d="M513.9 800.9L514.7 798.8L515.8 798.1L515.1 800.0Z" fill="#76746e" stroke="#76746e" stroke-width="0.6" stroke-linejoin="round"/><path d="M513.7 803.1L513.9 800.9L515.1 800.0L514.9 802.0Z" fill="#76756f" stroke="#76756f" stroke-width="0.6" stroke-linejoin="round"/><path d="M514.0 805.2L513.7 803.1L514.9 802.0L515.2 803.9Z" fill="#77756f" stroke="#77756f" stroke-width="0.6" stroke-linejoin="round"/><path d="M514.9 807.1L514.0 805.2L515.2 803.9L516.0 805.7Z" fill="#777670" stroke="#777670" stroke-width="0.6" stroke-linejoin="round"/><path d="M679.5 721.3L762.0 846.5L761.1 844.4L680.0 721.2Z" fill="#74716a" stroke="#74716a" stroke-width="0.6" stroke-linejoin="round"/><path d="M580.3 920.4L514.9 807.1L516.0 805.7L581.2 918.6Z" fill="#777670" stroke="#777670" stroke-width="0.6" stroke-linejoin="round"/><path d="M762.0 846.5L762.0 846.6L761.1 844.4L761.1 844.4Z" fill="#75726a" stroke="#75726a" stroke-width="0.6" stroke-linejoin="round"/><path d="M762.0 846.6L762.0 846.6L761.1 844.4L761.1 844.4Z" fill="#77736c" stroke="#77736c" stroke-width="0.6" stroke-linejoin="round"/><path d="M762.0 846.6L762.0 846.6L761.1 844.4L761.1 844.4Z" fill="#7a776f" stroke="#7a776f" stroke-width="0.6" stroke-linejoin="round"/><path d="M762.0 846.6L762.0 846.7L761.1 844.5L761.1 844.4Z" fill="#7f7b72" stroke="#7f7b72" stroke-width="0.6" stroke-linejoin="round"/><path d="M762.0 846.7L762.0 846.7L761.1 844.5L761.1 844.5Z" fill="#858076" stroke="#858076" stroke-width="0.6" stroke-linejoin="round"/><path d="M762.0 846.7L761.9 846.7L761.1 844.5L761.1 844.5Z" fill="#89857a" stroke="#89857a" stroke-width="0.6" stroke-linejoin="round"/><path d="M761.9 846.7L761.9 846.7L761.1 844.6L761.1 844.5Z" fill="#8d887d" stroke="#8d887d" stroke-width="0.6" stroke-linejoin="round"/><path d="M761.9 846.7L761.9 846.8L761.0 844.6L761.1 844.6Z" fill="#8f8a7e" stroke="#8f8a7e" stroke-width="0.6" stroke-linejoin="round"/><path d="M761.9 846.8L599.3 924.6L598.4 922.3L761.0 844.6Z" fill="#908a7e" stroke="#908a7e" stroke-width="0.6" stroke-linejoin="round"/><path d="M581.7 922.3L580.3 920.4L581.2 918.6L582.5 920.3Z" fill="#777670" stroke="#777670" stroke-width="0.6" stroke-linejoin="round"/><path d="M583.5 923.9L581.7 922.3L582.5 920.3L584.2 921.7Z" fill="#797871" stroke="#797871" stroke-width="0.6" stroke-linejoin="round"/><path d="M585.8 925.1L583.5 923.9L584.2 921.7L586.2 922.8Z" fill="#7c7a73" stroke="#7c7a73" stroke-width="0.6" stroke-linejoin="round"/><path d="M588.3 925.9L585.8 925.1L586.2 922.8L588.5 923.5Z" fill="#817e76" stroke="#817e76" stroke-width="0.6" stroke-linejoin="round"/><path d="M591.0 926.3L588.3 925.9L588.5 923.5L591.0 923.9Z" fill="#868278" stroke="#868278" stroke-width="0.6" stroke-linejoin="round"/><path d="M593.8 926.2L591.0 926.3L591.0 923.9L593.5 923.8Z" fill="#8a867b" stroke="#8a867b" stroke-width="0.6" stroke-linejoin="round"/><path d="M599.3 924.6L596.6 925.6L596.0 923.2L598.4 922.3Z" fill="#8f8a7e" stroke="#8f8a7e" stroke-width="0.6" stroke-linejoin="round"/><path d="M596.6 925.6L593.8 926.2L593.5 923.8L596.0 923.2Z" fill="#8d887d" stroke="#8d887d" stroke-width="0.6" stroke-linejoin="round"/><path d="M679.8 721.2L679.8 721.2L680.5 721.3L680.5 721.3Z" fill="#79756e" stroke="#79756e" stroke-width="0.6" stroke-linejoin="round"/><path d="M679.8 721.2L679.9 721.1L680.5 721.3L680.5 721.3Z" fill="#79756e" stroke="#79756e" stroke-width="0.6" stroke-linejoin="round"/><path d="M679.8 721.2L679.8 721.2L680.5 721.3L680.4 721.4Z" fill="#79756e" stroke="#79756e" stroke-width="0.6" stroke-linejoin="round"/><path d="M679.9 721.1L679.9 721.2L680.6 721.3L680.5 721.3Z" fill="#79756e" stroke="#79756e" stroke-width="0.6" stroke-linejoin="round"/><path d="M679.9 721.2L679.9 721.2L680.6 721.3L680.6 721.3Z" fill="#79756e" stroke="#79756e" stroke-width="0.6" stroke-linejoin="round"/><path d="M679.9 721.2L680.0 721.2L680.6 721.4L680.6 721.3Z" fill="#79756e" stroke="#79756e" stroke-width="0.6" stroke-linejoin="round"/><path d="M680.0 721.2L680.0 721.2L680.7 721.4L680.6 721.4Z" fill="#79756e" stroke="#79756e" stroke-width="0.6" stroke-linejoin="round"/><path d="M680.0 721.2L680.0 721.2L680.7 721.4L680.7 721.4Z" fill="#79756e" stroke="#79756e" stroke-width="0.6" stroke-linejoin="round"/><path d="M522.4 792.0L679.8 721.2L680.4 721.4L523.0 792.2Z" fill="#79756e" stroke="#79756e" stroke-width="0.6" stroke-linejoin="round"/><path d="M520.3 793.1L522.4 792.0L523.0 792.2L521.1 793.2Z" fill="#79756e" stroke="#79756e" stroke-width="0.6" stroke-linejoin="round"/><path d="M518.4 794.6L520.3 793.1L521.1 793.2L519.5 794.5Z" fill="#79766f" stroke="#79766f" stroke-width="0.6" stroke-linejoin="round"/><path d="M516.9 796.2L518.4 794.6L519.5 794.5L518.2 795.9Z" fill="#7a7871" stroke="#7a7871" stroke-width="0.6" stroke-linejoin="round"/><path d="M515.8 798.1L516.9 796.2L518.2 795.9L517.2 797.6Z" fill="#7c7a73" stroke="#7c7a73" stroke-width="0.6" stroke-linejoin="round"/><path d="M515.1 800.0L515.8 798.1L517.2 797.6L516.6 799.3Z" fill="#7d7c75" stroke="#7d7c75" stroke-width="0.6" stroke-linejoin="round"/><path d="M514.9 802.0L515.1 800.0L516.6 799.3L516.5 801.0Z" fill="#7f7e77" stroke="#7f7e77" stroke-width="0.6" stroke-linejoin="round"/><path d="M515.2 803.9L514.9 802.0L516.5 801.0L516.7 802.7Z" fill="#807f79" stroke="#807f79" stroke-width="0.6" stroke-linejoin="round"/><path d="M516.0 805.7L515.2 803.9L516.7 802.7L517.4 804.2Z" fill="#80807a" stroke="#80807a" stroke-width="0.6" stroke-linejoin="round"/><path d="M680.0 721.2L761.1 844.4L760.1 841.9L680.7 721.4Z" fill="#79756e" stroke="#79756e" stroke-width="0.6" stroke-linejoin="round"/><path d="M581.2 918.6L516.0 805.7L517.4 804.2L582.3 916.5Z" fill="#80807a" stroke="#80807a" stroke-width="0.6" stroke-linejoin="round"/><path d="M761.1 844.4L761.1 844.4L760.1 841.9L760.1 841.9Z" fill="#79766e" stroke="#79766e" stroke-width="0.6" stroke-linejoin="round"/><path d="M761.1 844.4L761.1 844.4L760.1 842.0L760.1 841.9Z" fill="#7c7870" stroke="#7c7870" stroke-width="0.6" stroke-linejoin="round"/><path d="M761.1 844.4L761.1 844.4L760.1 842.0L760.1 842.0Z" fill="#807c74" stroke="#807c74" stroke-width="0.6" stroke-linejoin="round"/><path d="M761.1 844.4L761.1 844.5L760.1 842.0L760.1 842.0Z" fill="#878279" stroke="#878279" stroke-width="0.6" stroke-linejoin="round"/><path d="M761.1 844.5L761.1 844.5L760.1 842.1L760.1 842.0Z" fill="#8e897e" stroke="#8e897e" stroke-width="0.6" stroke-linejoin="round"/><path d="M761.1 844.5L761.1 844.5L760.0 842.1L760.1 842.1Z" fill="#948f83" stroke="#948f83" stroke-width="0.6" stroke-linejoin="round"/><path d="M761.1 844.5L761.1 844.6L760.0 842.1L760.0 842.1Z" fill="#999386" stroke="#999386" stroke-width="0.6" stroke-linejoin="round"/><path d="M761.1 844.6L761.0 844.6L760.0 842.1L760.0 842.1Z" fill="#9b9588" stroke="#9b9588" stroke-width="0.6" stroke-linejoin="round"/><path d="M761.0 844.6L598.4 922.3L597.4 919.8L760.0 842.1Z" fill="#9c9689" stroke="#9c9689" stroke-width="0.6" stroke-linejoin="round"/><path d="M582.5 920.3L581.2 918.6L582.3 916.5L583.5 918.0Z" fill="#81807a" stroke="#81807a" stroke-width="0.6" stroke-linejoin="round"/><path d="M584.2 921.7L582.5 920.3L583.5 918.0L585.0 919.2Z" fill="#83827b" stroke="#83827b" stroke-width="0.6" stroke-linejoin="round"/><path d="M586.2 922.8L584.2 921.7L585.0 919.2L586.7 920.2Z" fill="#86857d" stroke="#86857d" stroke-width="0.6" stroke-linejoin="round"/><path d="M588.5 923.5L586.2 922.8L586.7 920.2L588.7 920.8Z" fill="#8b8980" stroke="#8b8980" stroke-width="0.6" stroke-linejoin="round"/><path d="M591.0 923.9L588.5 923.5L588.7 920.8L590.9 921.1Z" fill="#918d83" stroke="#918d83" stroke-width="0.6" stroke-linejoin="round"/><path d="M593.5 923.8L591.0 923.9L590.9 921.1L593.1 921.0Z" fill="#969185" stroke="#969185" stroke-width="0.6" stroke-linejoin="round"/><path d="M598.4 922.3L596.0 923.2L595.3 920.6L597.4 919.8Z" fill="#9c9688" stroke="#9c9688" stroke-width="0.6" stroke-linejoin="round"/><path d="M596.0 923.2L593.5 923.8L593.1 921.0L595.3 920.6Z" fill="#999487" stroke="#999487" stroke-width="0.6" stroke-linejoin="round"/><path d="M680.5 721.3L680.5 721.3L681.4 721.9L681.4 721.9Z" fill="#7d7a72" stroke="#7d7a72" stroke-width="0.6" stroke-linejoin="round"/><path d="M680.5 721.3L680.5 721.3L681.5 721.9L681.4 721.9Z" fill="#7d7a72" stroke="#7d7a72" stroke-width="0.6" stroke-linejoin="round"/><path d="M680.4 721.4L680.5 721.3L681.4 721.9L681.3 721.9Z" fill="#7d7a72" stroke="#7d7a72" stroke-width="0.6" stroke-linejoin="round"/><path d="M680.5 721.3L680.6 721.3L681.5 721.9L681.5 721.9Z" fill="#7d7a72" stroke="#7d7a72" stroke-width="0.6" stroke-linejoin="round"/><path d="M680.6 721.3L680.6 721.3L681.5 721.9L681.5 721.9Z" fill="#7d7a72" stroke="#7d7a72" stroke-width="0.6" stroke-linejoin="round"/><path d="M680.6 721.3L680.6 721.4L681.5 721.9L681.5 721.9Z" fill="#7d7a72" stroke="#7d7a72" stroke-width="0.6" stroke-linejoin="round"/><path d="M680.6 721.4L680.7 721.4L681.6 721.9L681.5 721.9Z" fill="#7d7a72" stroke="#7d7a72" stroke-width="0.6" stroke-linejoin="round"/><path d="M680.7 721.4L680.7 721.4L681.6 721.9L681.6 721.9Z" fill="#7d7a72" stroke="#7d7a72" stroke-width="0.6" stroke-linejoin="round"/><path d="M523.0 792.2L680.4 721.4L681.3 721.9L523.9 792.8Z" fill="#7d7a72" stroke="#7d7a72" stroke-width="0.6" stroke-linejoin="round"/><path d="M521.1 793.2L523.0 792.2L523.9 792.8L522.3 793.6Z" fill="#7e7a72" stroke="#7e7a72" stroke-width="0.6" stroke-linejoin="round"/><path d="M519.5 794.5L521.1 793.2L522.3 793.6L521.0 794.7Z" fill="#7f7b74" stroke="#7f7b74" stroke-width="0.6" stroke-linejoin="round"/><path d="M518.2 795.9L519.5 794.5L521.0 794.7L519.9 795.9Z" fill="#807d76" stroke="#807d76" stroke-width="0.6" stroke-linejoin="round"/><path d="M517.2 797.6L518.2 795.9L519.9 795.9L519.1 797.2Z" fill="#828079" stroke="#828079" stroke-width="0.6" stroke-linejoin="round"/><path d="M516.6 799.3L517.2 797.6L519.1 797.2L518.6 798.6Z" fill="#85837c" stroke="#85837c" stroke-width="0.6" stroke-linejoin="round"/><path d="M516.5 801.0L516.6 799.3L518.6 798.6L518.5 800.1Z" fill="#87867f" stroke="#87867f" stroke-width="0.6" stroke-linejoin="round"/><path d="M516.7 802.7L516.5 801.0L518.5 800.1L518.7 801.4Z" fill="#898881" stroke="#898881" stroke-width="0.6" stroke-linejoin="round"/><path d="M517.4 804.2L516.7 802.7L518.7 801.4L519.2 802.7Z" fill="#8a8982" stroke="#8a8982" stroke-width="0.6" stroke-linejoin="round"/><path d="M680.7 721.4L760.1 841.9L758.8 839.1L681.6 721.9Z" fill="#7d7a72" stroke="#7d7a72" stroke-width="0.6" stroke-linejoin="round"/><path d="M582.3 916.5L517.4 804.2L519.2 802.7L583.8 914.0Z" fill="#8a8983" stroke="#8a8983" stroke-width="0.6" stroke-linejoin="round"/><path d="M760.1 841.9L760.1 841.9L758.8 839.1L758.8 839.1Z" fill="#7e7a72" stroke="#7e7a72" stroke-width="0.6" stroke-linejoin="round"/><path d="M760.1 841.9L760.1 842.0L758.8 839.1L758.8 839.1Z" fill="#817d75" stroke="#817d75" stroke-width="0.6" stroke-linejoin="round"/><path d="M760.1 842.0L760.1 842.0L758.8 839.1L758.8 839.1Z" fill="#87837a" stroke="#87837a" stroke-width="0.6" stroke-linejoin="round"/><path d="M760.1 842.0L760.1 842.0L758.8 839.2L758.8 839.1Z" fill="#8f8a80" stroke="#8f8a80" stroke-width="0.6" stroke-linejoin="round"/><path d="M760.1 842.0L760.1 842.1L758.8 839.2L758.8 839.2Z" fill="#979286" stroke="#979286" stroke-width="0.6" stroke-linejoin="round"/><path d="M760.1 842.1L760.0 842.1L758.8 839.2L758.8 839.2Z" fill="#9f998c" stroke="#9f998c" stroke-width="0.6" stroke-linejoin="round"/><path d="M760.0 842.1L760.0 842.1L758.7 839.2L758.8 839.2Z" fill="#a49f91" stroke="#a49f91" stroke-width="0.6" stroke-linejoin="round"/><path d="M760.0 842.1L760.0 842.1L758.7 839.3L758.7 839.2Z" fill="#a8a293" stroke="#a8a293" stroke-width="0.6" stroke-linejoin="round"/><path d="M760.0 842.1L597.4 919.8L596.2 916.8L758.7 839.3Z" fill="#a8a294" stroke="#a8a294" stroke-width="0.6" stroke-linejoin="round"/><path d="M583.5 918.0L582.3 916.5L583.8 914.0L584.7 915.3Z" fill="#8a8983" stroke="#8a8983" stroke-width="0.6" stroke-linejoin="round"/><path d="M585.0 919.2L583.5 918.0L584.7 915.3L585.9 916.3Z" fill="#8c8b84" stroke="#8c8b84" stroke-width="0.6" stroke-linejoin="round"/><path d="M586.7 920.2L585.0 919.2L585.9 916.3L587.4 917.1Z" fill="#918f86" stroke="#918f86" stroke-width="0.6" stroke-linejoin="round"/><path d="M588.7 920.8L586.7 920.2L587.4 917.1L589.1 917.6Z" fill="#969389" stroke="#969389" stroke-width="0.6" stroke-linejoin="round"/><path d="M590.9 921.1L588.7 920.8L589.1 917.6L590.8 917.9Z" fill="#9c988d" stroke="#9c988d" stroke-width="0.6" stroke-linejoin="round"/><path d="M593.1 921.0L590.9 921.1L590.8 917.9L592.7 917.8Z" fill="#a19c90" stroke="#a19c90" stroke-width="0.6" stroke-linejoin="round"/><path d="M597.4 919.8L595.3 920.6L594.5 917.4L596.2 916.8Z" fill="#a8a293" stroke="#a8a293" stroke-width="0.6" stroke-linejoin="round"/><path d="M595.3 920.6L593.1 921.0L592.7 917.8L594.5 917.4Z" fill="#a5a092" stroke="#a5a092" stroke-width="0.6" stroke-linejoin="round"/><path d="M681.4 721.9L681.4 721.9L682.8 723.1L682.7 723.1Z" fill="#848077" stroke="#848077" stroke-width="0.6" stroke-linejoin="round"/><path d="M681.4 721.9L681.5 721.9L682.8 723.1L682.8 723.1Z" fill="#848077" stroke="#848077" stroke-width="0.6" stroke-linejoin="round"/><path d="M681.3 721.9L681.4 721.9L682.7 723.1L682.7 723.1Z" fill="#848077" stroke="#848077" stroke-width="0.6" stroke-linejoin="round"/><path d="M681.5 721.9L681.5 721.9L682.8 723.1L682.8 723.1Z" fill="#848077" stroke="#848077" stroke-width="0.6" stroke-linejoin="round"/><path d="M681.5 721.9L681.5 721.9L682.9 723.1L682.8 723.1Z" fill="#848077" stroke="#848077" stroke-width="0.6" stroke-linejoin="round"/><path d="M681.5 721.9L681.5 721.9L682.9 723.1L682.9 723.1Z" fill="#848077" stroke="#848077" stroke-width="0.6" stroke-linejoin="round"/><path d="M681.5 721.9L681.6 721.9L682.9 723.1L682.9 723.1Z" fill="#848077" stroke="#848077" stroke-width="0.6" stroke-linejoin="round"/><path d="M681.6 721.9L681.6 721.9L682.9 723.1L682.9 723.1Z" fill="#848077" stroke="#848077" stroke-width="0.6" stroke-linejoin="round"/><path d="M523.9 792.8L681.3 721.9L682.7 723.1L525.2 794.0Z" fill="#848077" stroke="#848077" stroke-width="0.6" stroke-linejoin="round"/><path d="M522.3 793.6L523.9 792.8L525.2 794.0L524.1 794.6Z" fill="#848078" stroke="#848078" stroke-width="0.6" stroke-linejoin="round"/><path d="M521.0 794.7L522.3 793.6L524.1 794.6L523.1 795.4Z" fill="#858179" stroke="#858179" stroke-width="0.6" stroke-linejoin="round"/><path d="M519.9 795.9L521.0 794.7L523.1 795.4L522.3 796.3Z" fill="#87847c" stroke="#87847c" stroke-width="0.6" stroke-linejoin="round"/><path d="M519.1 797.2L519.9 795.9L522.3 796.3L521.8 797.2Z" fill="#8a877f" stroke="#8a877f" stroke-width="0.6" stroke-linejoin="round"/><path d="M518.6 798.6L519.1 797.2L521.8 797.2L521.4 798.2Z" fill="#8e8b83" stroke="#8e8b83" stroke-width="0.6" stroke-linejoin="round"/><path d="M518.5 800.1L518.6 798.6L521.4 798.2L521.3 799.3Z" fill="#918e86" stroke="#918e86" stroke-width="0.6" stroke-linejoin="round"/><path d="M518.7 801.4L518.5 800.1L521.3 799.3L521.5 800.3Z" fill="#939189" stroke="#939189" stroke-width="0.6" stroke-linejoin="round"/><path d="M519.2 802.7L518.7 801.4L521.5 800.3L521.9 801.2Z" fill="#95938b" stroke="#95938b" stroke-width="0.6" stroke-linejoin="round"/><path d="M681.6 721.9L758.8 839.1L757.0 835.5L682.9 723.1Z" fill="#848077" stroke="#848077" stroke-width="0.6" stroke-linejoin="round"/><path d="M583.8 914.0L519.2 802.7L521.9 801.2L585.7 911.0Z" fill="#95938b" stroke="#95938b" stroke-width="0.6" stroke-linejoin="round"/><path d="M758.8 839.1L758.8 839.1L757.0 835.5L757.0 835.5Z" fill="#848078" stroke="#848078" stroke-width="0.6" stroke-linejoin="round"/><path d="M758.8 839.1L758.8 839.1L757.0 835.5L757.0 835.5Z" fill="#87837a" stroke="#87837a" stroke-width="0.6" stroke-linejoin="round"/><path d="M758.8 839.1L758.8 839.1L757.0 835.6L757.0 835.5Z" fill="#8c887e" stroke="#8c887e" stroke-width="0.6" stroke-linejoin="round"/><path d="M758.8 839.1L758.8 839.2L757.0 835.6L757.0 835.6Z" fill="#938e84" stroke="#938e84" stroke-width="0.6" stroke-linejoin="round"/><path d="M758.8 839.2L758.8 839.2L757.0 835.6L757.0 835.6Z" fill="#9b958a" stroke="#9b958a" stroke-width="0.6" stroke-linejoin="round"/><path d="M758.8 839.2L758.8 839.2L757.0 835.7L757.0 835.6Z" fill="#a19c8f" stroke="#a19c8f" stroke-width="0.6" stroke-linejoin="round"/><path d="M758.8 839.2L758.7 839.2L757.0 835.7L757.0 835.7Z" fill="#a7a193" stroke="#a7a193" stroke-width="0.6" stroke-linejoin="round"/><path d="M758.7 839.2L758.7 839.3L756.9 835.7L757.0 835.7Z" fill="#aaa496" stroke="#aaa496" stroke-width="0.6" stroke-linejoin="round"/><path d="M758.7 839.3L596.2 916.8L594.6 913.0L756.9 835.7Z" fill="#aaa496" stroke="#aaa496" stroke-width="0.6" stroke-linejoin="round"/><path d="M584.7 915.3L583.8 914.0L585.7 911.0L586.4 911.9Z" fill="#95938b" stroke="#95938b" stroke-width="0.6" stroke-linejoin="round"/><path d="M585.9 916.3L584.7 915.3L586.4 911.9L587.3 912.7Z" fill="#96948c" stroke="#96948c" stroke-width="0.6" stroke-linejoin="round"/><path d="M587.4 917.1L585.9 916.3L587.3 912.7L588.3 913.2Z" fill="#99978d" stroke="#99978d" stroke-width="0.6" stroke-linejoin="round"/><path d="M589.1 917.6L587.4 917.1L588.3 913.2L589.5 913.6Z" fill="#9d9a8f" stroke="#9d9a8f" stroke-width="0.6" stroke-linejoin="round"/><path d="M590.8 917.9L589.1 917.6L589.5 913.6L590.8 913.8Z" fill="#a19d91" stroke="#a19d91" stroke-width="0.6" stroke-linejoin="round"/><path d="M592.7 917.8L590.8 917.9L590.8 913.8L592.1 913.7Z" fill="#a5a094" stroke="#a5a094" stroke-width="0.6" stroke-linejoin="round"/><path d="M596.2 916.8L594.5 917.4L593.4 913.5L594.6 913.0Z" fill="#aaa496" stroke="#aaa496" stroke-width="0.6" stroke-linejoin="round"/><path d="M594.5 917.4L592.7 917.8L592.1 913.7L593.4 913.5Z" fill="#a8a395" stroke="#a8a395" stroke-width="0.6" stroke-linejoin="round"/><path d="M682.7 723.1L682.8 723.1L686.6 728.0L686.5 728.0Z" fill="#8d8980" stroke="#8d8980" stroke-width="0.6" stroke-linejoin="round"/><path d="M682.8 723.1L682.8 723.1L686.6 728.0L686.6 728.0Z" fill="#8d8980" stroke="#8d8980" stroke-width="0.6" stroke-linejoin="round"/><path d="M682.7 723.1L682.7 723.1L686.5 728.0L686.5 728.0Z" fill="#8d8980" stroke="#8d8980" stroke-width="0.6" stroke-linejoin="round"/><path d="M682.8 723.1L682.8 723.1L686.6 728.0L686.6 728.0Z" fill="#8d8980" stroke="#8d8980" stroke-width="0.6" stroke-linejoin="round"/><path d="M682.8 723.1L682.9 723.1L686.7 728.0L686.6 728.0Z" fill="#8d8980" stroke="#8d8980" stroke-width="0.6" stroke-linejoin="round"/><path d="M682.9 723.1L682.9 723.1L686.7 728.0L686.7 728.0Z" fill="#8d8980" stroke="#8d8980" stroke-width="0.6" stroke-linejoin="round"/><path d="M682.9 723.1L682.9 723.1L686.7 728.0L686.7 728.0Z" fill="#8d8980" stroke="#8d8980" stroke-width="0.6" stroke-linejoin="round"/><path d="M682.9 723.1L682.9 723.1L686.7 728.0L686.7 728.0Z" fill="#8d8980" stroke="#8d8980" stroke-width="0.6" stroke-linejoin="round"/><path d="M525.2 794.0L682.7 723.1L686.5 728.0L529.4 798.9Z" fill="#8d8980" stroke="#8d8980" stroke-width="0.6" stroke-linejoin="round"/><path d="M524.1 794.6L525.2 794.0L529.4 798.9L529.3 799.0Z" fill="#8d8980" stroke="#8d8980" stroke-width="0.6" stroke-linejoin="round"/><path d="M523.1 795.4L524.1 794.6L529.3 799.0L529.2 799.0Z" fill="#8c8880" stroke="#8c8880" stroke-width="0.6" stroke-linejoin="round"/><path d="M522.3 796.3L523.1 795.4L529.2 799.0L529.2 799.1Z" fill="#8a867e" stroke="#8a867e" stroke-width="0.6" stroke-linejoin="round"/><path d="M521.8 797.2L522.3 796.3L529.2 799.1L529.2 799.1Z" fill="#88847c" stroke="#88847c" stroke-width="0.6" stroke-linejoin="round"/><path d="M521.4 798.2L521.8 797.2L529.2 799.1L529.1 799.2Z" fill="#85827a" stroke="#85827a" stroke-width="0.6" stroke-linejoin="round"/><path d="M521.3 799.3L521.4 798.2L529.1 799.2L529.1 799.2Z" fill="#837f78" stroke="#837f78" stroke-width="0.6" stroke-linejoin="round"/><path d="M521.5 800.3L521.3 799.3L529.1 799.2L529.2 799.3Z" fill="#817e77" stroke="#817e77" stroke-width="0.6" stroke-linejoin="round"/><path d="M521.9 801.2L521.5 800.3L529.2 799.3L529.2 799.3Z" fill="#807d76" stroke="#807d76" stroke-width="0.6" stroke-linejoin="round"/><path d="M682.9 723.1L757.0 835.5L752.6 827.9L686.7 728.0Z" fill="#8d8980" stroke="#8d8980" stroke-width="0.6" stroke-linejoin="round"/><path d="M585.7 911.0L521.9 801.2L529.2 799.3L590.7 904.6Z" fill="#807d76" stroke="#807d76" stroke-width="0.6" stroke-linejoin="round"/><path d="M757.0 835.5L757.0 835.5L752.6 828.0L752.6 827.9Z" fill="#8d8981" stroke="#8d8981" stroke-width="0.6" stroke-linejoin="round"/><path d="M757.0 835.5L757.0 835.5L752.6 828.0L752.6 828.0Z" fill="#8f8b82" stroke="#8f8b82" stroke-width="0.6" stroke-linejoin="round"/><path d="M757.0 835.5L757.0 835.6L752.6 828.0L752.6 828.0Z" fill="#928d84" stroke="#928d84" stroke-width="0.6" stroke-linejoin="round"/><path d="M757.0 835.6L757.0 835.6L752.6 828.1L752.6 828.0Z" fill="#959087" stroke="#959087" stroke-width="0.6" stroke-linejoin="round"/><path d="M757.0 835.6L757.0 835.6L752.6 828.1L752.6 828.1Z" fill="#99948a" stroke="#99948a" stroke-width="0.6" stroke-linejoin="round"/><path d="M757.0 835.6L757.0 835.7L752.6 828.1L752.6 828.1Z" fill="#9d978c" stroke="#9d978c" stroke-width="0.6" stroke-linejoin="round"/><path d="M757.0 835.7L757.0 835.7L752.6 828.1L752.6 828.1Z" fill="#a09a8e" stroke="#a09a8e" stroke-width="0.6" stroke-linejoin="round"/><path d="M757.0 835.7L756.9 835.7L752.5 828.2L752.6 828.1Z" fill="#a19b90" stroke="#a19b90" stroke-width="0.6" stroke-linejoin="round"/><path d="M756.9 835.7L594.6 913.0L591.2 904.7L752.5 828.2Z" fill="#a19b90" stroke="#a19b90" stroke-width="0.6" stroke-linejoin="round"/><path d="M586.4 911.9L585.7 911.0L590.7 904.6L590.7 904.7Z" fill="#807d76" stroke="#807d76" stroke-width="0.6" stroke-linejoin="round"/><path d="M587.3 912.7L586.4 911.9L590.7 904.7L590.8 904.7Z" fill="#837f78" stroke="#837f78" stroke-width="0.6" stroke-linejoin="round"/><path d="M588.3 913.2L587.3 912.7L590.8 904.7L590.8 904.7Z" fill="#87847b" stroke="#87847b" stroke-width="0.6" stroke-linejoin="round"/><path d="M589.5 913.6L588.3 913.2L590.8 904.7L590.9 904.8Z" fill="#8d8980" stroke="#8d8980" stroke-width="0.6" stroke-linejoin="round"/><path d="M590.8 913.8L589.5 913.6L590.9 904.8L591.0 904.8Z" fill="#948f85" stroke="#948f85" stroke-width="0.6" stroke-linejoin="round"/><path d="M592.1 913.7L590.8 913.8L591.0 904.8L591.0 904.8Z" fill="#9a958a" stroke="#9a958a" stroke-width="0.6" stroke-linejoin="round"/><path d="M594.6 913.0L593.4 913.5L591.1 904.8L591.2 904.7Z" fill="#a19b8f" stroke="#a19b8f" stroke-width="0.6" stroke-linejoin="round"/><path d="M593.4 913.5L592.1 913.7L591.0 904.8L591.1 904.8Z" fill="#9e998d" stroke="#9e998d" stroke-width="0.6" stroke-linejoin="round"/><path d="M686.5 728.0L686.5 728.0L686.6 728.0L686.6 728.0L686.6 728.0L686.7 728.0L686.7 728.0L686.7 728.0L686.7 728.0L752.6 827.9L752.6 828.0L752.6 828.0L752.6 828.0L752.6 828.1L752.6 828.1L752.6 828.1L752.6 828.1L752.5 828.2L591.2 904.7L591.1 904.8L591.0 904.8L591.0 904.8L590.9 904.8L590.8 904.7L590.8 904.7L590.7 904.7L590.7 904.6L529.2 799.3L529.2 799.3L529.1 799.2L529.1 799.2L529.2 799.1L529.2 799.1L529.2 799.0L529.3 799.0L529.4 798.9Z" fill="url(#covtop)" fill-rule="evenodd"/><path d="M686.5 728.0L686.5 728.0L686.6 728.0L686.6 728.0L686.6 728.0L686.7 728.0L686.7 728.0L686.7 728.0L686.7 728.0L752.6 827.9L752.6 828.0L752.6 828.0L752.6 828.0L752.6 828.1L752.6 828.1L752.6 828.1L752.6 828.1L752.5 828.2L591.2 904.7L591.1 904.8L591.0 904.8L591.0 904.8L590.9 904.8L590.8 904.7L590.8 904.7L590.7 904.7L590.7 904.6L529.2 799.3L529.2 799.3L529.1 799.2L529.1 799.2L529.2 799.1L529.2 799.1L529.2 799.0L529.3 799.0L529.4 798.9Z" fill="none" stroke="#1c1c1a" stroke-width="0.85" stroke-linejoin="round"/><path d="M765.2 858.4L765.1 858.2L765.1 858.3L765.1 858.3L765.1 858.3L765.1 858.4L765.1 858.4L765.1 858.4L765.1 858.4L765.0 858.5L602.8 936.5" fill="none" stroke="#1c1c1a" stroke-width="0.85" stroke-linejoin="round"/><path d="M575.0 939.5L512.9 830.8L512.9 830.8" fill="none" stroke="#1c1c1a" stroke-width="0.85" stroke-linejoin="round"/><path d="M604.6 946.0L604.4 945.0L604.2 944.0L604.0 942.9L603.8 941.9L603.6 940.9L603.4 939.8L603.2 938.8L603.0 937.8L602.8 936.7L602.6 935.7L602.3 934.5L602.0 933.2L601.6 931.7L601.1 930.2L600.6 928.5L600.0 926.6L599.3 924.6L598.4 922.3L597.4 919.8L596.2 916.8L594.6 913.0L591.2 904.7" stroke="#1c1c1a" stroke-width="0.85" fill="none"/><path d="M575.0 939.5L574.8 938.4L574.7 937.4L574.6 936.5L574.6 935.5L574.6 934.5L574.8 933.5L575.0 932.6L575.2 931.7L575.6 930.8L576.0 929.8L576.5 928.8L576.9 927.7L577.5 926.4L578.1 925.1L578.7 923.7L579.4 922.1L580.3 920.4L581.2 918.6L582.3 916.5L583.8 914.0L585.7 911.0L590.7 904.6" stroke="#1c1c1a" stroke-width="0.85" fill="none"/><path d="M606.3 953.8L602.6 936.6" stroke="#1c1c1a" stroke-width="0.85" fill="none"/><path d="M576.8 947.2L575.0 939.5" stroke="#1c1c1a" stroke-width="0.85" fill="none"/><path d="M767.1 875.9L767.1 875.9L766.2 868.0L766.1 866.9L766.0 865.9L765.9 864.9L765.8 863.8L765.7 862.8L765.6 861.7L765.5 860.7L765.3 859.6L765.2 858.6L765.1 857.5L764.9 856.3L764.6 855.0L764.3 853.6L763.9 852.1L763.4 850.4L762.8 848.6L762.0 846.7L761.2 844.5L760.2 842.0L758.9 839.2L757.1 835.6L752.7 828.1" stroke="#1c1c1a" stroke-width="0.85" fill="none"/><path d="M678.5 725.6L678.4 724.7L678.4 723.8L678.4 723.0L678.5 722.4L678.7 721.8L679.0 721.4L679.4 721.2L679.9 721.1L680.6 721.3L681.5 721.8L682.9 723.0L686.7 727.9" stroke="#1c1c1a" stroke-width="0.85" fill="none"/><path d="M509.9 813.3L510.0 811.8L510.3 808.8L510.4 807.5L510.7 806.3L511.1 805.1L512.0 802.4L512.5 801.3L513.9 798.9L514.4 798.0L516.9 795.3L519.1 793.6L519.6 793.3L521.9 792.0L679.3 721.2L679.8 721.1L679.9 721.1L680.6 721.3L680.6 721.3L681.5 721.9L682.9 723.1L683.0 723.1L686.7 728.0L752.6 827.9L757.0 835.5L758.8 839.0L760.1 841.9L761.1 844.4L762.0 846.5L762.7 848.5L763.3 850.4L763.8 852.0L764.2 853.5L764.6 855.0L764.8 856.2L765.0 857.4L765.2 858.5L765.5 861.7L767.0 875.8L767.0 875.9L767.0 875.9L767.0 875.9L767.0 876.0L606.3 953.8L602.2 955.4L597.9 956.2L593.5 956.4L589.3 955.9L585.4 954.6L581.9 952.7L579.0 950.2L576.8 947.2L514.9 838.8L513.6 835.7L511.6 827.7L511.3 826.6L511.1 825.5L510.9 824.3L510.4 821.0L510.3 819.8L510.1 818.6L510.0 817.3L510.0 816.0L509.9 814.7Z" fill="none" stroke="#1c1c1a" stroke-width="0.8" stroke-linejoin="round"/><defs><radialGradient id="covspec"><stop offset="0" stop-color="#fff" stop-opacity="0.95"/><stop offset="0.45" stop-color="#e8e4da" stop-opacity="0.45"/><stop offset="1" stop-color="#c8c4b8" stop-opacity="0"/></radialGradient></defs><circle cx="586.1" cy="923.4" r="6.500" fill="url(#covspec)"/><defs><filter id="vcb" x="-50%" y="-50%" width="200%" height="200%"><feGaussianBlur stdDeviation="6"/></filter></defs><path d="M1824.0 222.0L1850.0 252.0L1892.0 232.0L1866.0 206.0Z" fill="#000" opacity="0.28" filter="url(#vcb)"/><path d="M1822.5 185.7L1864.4 169.5L1891.5 197.4L1847.1 217.7Z" fill="#eeeeee" fill-opacity="0.86"/><path d="M1822.5 185.7L1847.1 217.7L1848.3 248.5L1826.2 219.0Z" fill="#dedede" fill-opacity="0.86"/><path d="M1847.1 217.7L1891.5 197.4L1888.4 228.8L1848.3 248.5Z" fill="#e9e9e9" fill-opacity="0.86"/><path d="M1822.5 185.7L1864.4 169.5L1891.5 197.4L1847.1 217.7Z" stroke="#707070" stroke-width="0.65" stroke-dasharray="4 2" fill="none"/><path d="M1822.5 185.7L1826.2 219.0L1848.3 248.5L1847.1 217.7M1848.3 248.5L1888.4 228.8L1891.5 197.4" stroke="#707070" stroke-width="0.65" stroke-dasharray="4 2" fill="none"/><text transform="matrix(-0.2460,-0.3200,0.4190,-0.1620,1847.10,217.70)" x="52" y="80" font-size="50" text-anchor="middle" fill="#8d929b" font-family="'Liberation Sans','Noto Sans CJK JP',sans-serif">上</text><text transform="matrix(0.4440,-0.2030,0.0120,0.3080,1847.10,217.70)" x="50" y="78" font-size="50" text-anchor="middle" fill="#8d929b" font-family="'Liberation Sans','Noto Sans CJK JP',sans-serif">左</text><text transform="matrix(0.2460,0.3200,0.0370,0.3330,1822.50,185.70)" x="52" y="64" font-size="30" text-anchor="middle" fill="#8d929b" font-family="'Liberation Sans','Noto Sans CJK JP',sans-serif">後ろ</text><path d="M1842.200 253.400L1888.400 229.400" stroke="#5fe35f" stroke-width="1.800" stroke-linecap="round"/><path d="M1888.400 229.400L1895 193.500" stroke="#6b6bf5" stroke-width="1.800" stroke-linecap="round"/><text x="1831" y="264" font-size="13" fill="#6ee66e" font-family="'Liberation Sans',sans-serif">Y</text><text x="1891.500" y="190" font-size="13" fill="#7b7bf7" font-family="'Liberation Sans',sans-serif">Z</text></svg>
<div class="b" style="left:0px;top:0px;width:1920px;height:8px;background:#000;"></div>
<div class="b" style="left:0px;top:8px;width:1920px;height:23px;background:#fff;"></div>
<div class="b" style="left:1920px;top:0px;width:8px;height:26px;background:#fff;"></div>
<div class="b" style="left:1920px;top:26px;width:8px;height:1030px;background:#f8f8f8;"></div>
<svg class="b" style="left:2px;top:11px;" width="17" height="16" viewBox="0 0 17 16"><rect x="0.5" y="0.5" width="16" height="15" rx="1.5" fill="#fbe3cf"/><path d="M4.5 3h8v2.6H7.6v2h3.6v2.5H7.6V13H4.5z" fill="#e8751a"/><path d="M4.5 3h3.1v10H4.5z" fill="#c85a0c"/><path d="M10 12.2l4 .3-.2 1.3-4 .2z" fill="#f4b27c"/></svg>
<svg class="b" style="left:22.0px;top:9.6px;overflow:visible" width="239.5" height="20"><text x="1" y="14.0" font-size="12.3" fill="#000" font-family="'Liberation Sans','Noto Sans CJK JP',sans-serif" textLength="237.5" lengthAdjust="spacingAndGlyphs" xml:space="preserve">Autodesk Fusion 360 (個人用 - 商用利用不可)</text></svg>
<svg class="b" style="left:1790px;top:8px;" width="120" height="23" viewBox="0 0 120 23"><path d="M8.5 10.5h10" stroke="#000" stroke-width="1"/><path d="M54.5 8.5h7v7h-7z M56.5 8.5v-2h7v7h-2" fill="none" stroke="#000" stroke-width="1"/><path d="M100 5.5l10 10M110 5.5l-10 10" stroke="#000" stroke-width="1.1"/></svg>
<div class="b" style="left:0px;top:31px;width:1920px;height:32px;background:#ccc;"></div>
<svg class="b" style="left:0px;top:31px;" width="195" height="32" viewBox="0 0 195 32"><rect x="9.0" y="8.7" width="3.7" height="3.7" fill="#5f5f5f"/><rect x="9.0" y="13.4" width="3.7" height="3.7" fill="#5f5f5f"/><rect x="9.0" y="18.1" width="3.7" height="3.7" fill="#5f5f5f"/><rect x="13.7" y="8.7" width="3.7" height="3.7" fill="#5f5f5f"/><rect x="13.7" y="13.4" width="3.7" height="3.7" fill="#5f5f5f"/><rect x="13.7" y="18.1" width="3.7" height="3.7" fill="#5f5f5f"/><rect x="18.4" y="8.7" width="3.7" height="3.7" fill="#5f5f5f"/><rect x="18.4" y="13.4" width="3.7" height="3.7" fill="#5f5f5f"/><rect x="18.4" y="18.1" width="3.7" height="3.7" fill="#5f5f5f"/><path d="M42 9h7.5l4.5 4.5v10.5h-12z" fill="#5f5f5f"/><path d="M49.5 9v4.5h4.5" fill="#ccc" stroke="#ccc" stroke-width="0.8"/><path d="M60.5 14h6.5l-3.25 4z" fill="#5f5f5f"/><path d="M87 9.5h13v14h-13z" fill="#5f5f5f"/><rect x="90" y="9.5" width="7" height="5" fill="#ccc"/><rect x="94" y="10.3" width="2" height="3.4" fill="#5f5f5f"/><rect x="89.5" y="17.5" width="8" height="6" fill="#ccc"/><rect x="91" y="19" width="5" height="4.5" fill="#5f5f5f"/><path d="M131.5 22c0-5-3-7.2-8.5-7.2" fill="none" stroke="#5f5f5f" stroke-width="2"/><path d="M119.5 14.8l6.2-4.6v9.2z" fill="#5f5f5f"/><path d="M140 14h6.500l-3.25 4z" fill="#5f5f5f"/><path d="M160.500 22c0-5 3-7.2 8.5-7.2" fill="none" stroke="#9a9a9a" stroke-width="2"/><path d="M172.5 14.8l-6.2-4.6v9.2z" fill="#9a9a9a"/><path d="M179 14h6.5l-3.25 4z" fill="#9a9a9a"/></svg>
<div class="b" style="left:193px;top:35px;width:490px;height:28px;background:#bbb;border-radius:5px 5px 0 0;"></div>
<div class="b" style="left:687px;top:35px;width:490px;height:28px;background:#bbb;border-radius:5px 5px 0 0;"></div>
<div class="b" style="left:1181px;top:35px;width:490px;height:28px;background:#f3f3f3;border-radius:5px 5px 0 0;"></div>
<div class="b" style="left:1675px;top:35px;width:28px;height:28px;background:#bbb;"></div>
<svg class="b" style="left:0px;top:0px;pointer-events:none;" width="1920" height="64" viewBox="0 0 1920 64"><rect x="361.0" y="47.5" width="9" height="7.5" rx="1" fill="#7a7a7a"/><path d="M362.8 47.5v-2.300a2.700 2.700 0 0 1 5.400 0v2.300" fill="none" stroke="#7a7a7a" stroke-width="1.5"/><path d="M362.5 50h6M362.5 52.2h6" stroke="#bbb" stroke-width="0.8"/><path d="M667.5 44.5l8 8M675.5 44.5l-8 8" stroke="#666" stroke-width="1.3"/><rect x="897.0" y="47.5" width="9" height="7.5" rx="1" fill="#7a7a7a"/><path d="M898.8 47.5v-2.300a2.700 2.700 0 0 1 5.400 0v2.300" fill="none" stroke="#7a7a7a" stroke-width="1.5"/><path d="M898.5 50h6M898.5 52.2h6" stroke="#bbb" stroke-width="0.8"/><path d="M1161.5 44.5l8 8M1169.5 44.5l-8 8" stroke="#666" stroke-width="1.3"/><path d="M1656 44.5l8 8M1664 44.5l-8 8" stroke="#555" stroke-width="1.3"/><path d="M1376 43.500l7-2.500 7 2.500v9l-7 3-7-3z" fill="#6e6e6e"/><path d="M1376 43.500l7 2.700 7-2.700-7-2.500z" fill="#8c8c8c"/><path d="M1383 46.200v9.300l7-3v-9z" fill="#4f4f4f"/><path d="M1682 48.500h14M1689 41.500v14" stroke="#666" stroke-width="2.200"/><path d="M1714.500 40h8l4 4v5.500l-5 5.500h-7z" fill="#666"/><path d="M1722.500 40v4h4" fill="none" stroke="#ccc" stroke-width="1"/><path d="M1720 53.500l1.200-3.500 7-6.500 2.200 2.300-7 6.500z" fill="#666" stroke="#ccc" stroke-width="0.900"/><circle cx="1787.500" cy="47" r="7.700" fill="none" stroke="#666" stroke-width="1"/><circle cx="1787.500" cy="47" r="6" fill="#666"/><path d="M1787.500 43v4.300h4" fill="none" stroke="#ccc" stroke-width="1.300"/><path d="M1821 39.300c3.300 0 4.500 2.800 4.500 5.700 0 3 1 4.500 2.300 5.800h-13.600c1.300-1.300 2.300-2.800 2.300-5.800 0-2.900 1.200-5.700 4.500-5.700z" fill="#666"/><path d="M1818.800 52h4.400l-2.200 2z" fill="#666"/><circle cx="1821" cy="39.500" r="1.200" fill="#666"/><circle cx="1854" cy="47" r="8" fill="#666"/><defs><linearGradient id="av" x1="0" y1="0" x2="0" y2="1"><stop offset="0" stop-color="#b7c6dc"/><stop offset="1" stop-color="#7d93b2"/></linearGradient><clipPath id="avc"><circle cx="1895" cy="47.500" r="12"/></clipPath></defs><circle cx="1895" cy="47.500" r="12" fill="url(#av)"/><g clip-path="url(#avc)" fill="#56647a"><ellipse cx="1895" cy="44" rx="5.600" ry="7"/><path d="M1892 49h6v5c3 1 7 2 8 6h-22c1-4 5-5 8-6z"/></g></svg>
<svg class="b" style="left:378.0px;top:40.2px;overflow:visible" width="126.0" height="20"><text x="1" y="14.0" font-size="12.3" fill="#6e6e6e" font-family="'Liberation Sans','IPAPGothic','IPAGothic','Noto Sans CJK JP',sans-serif" textLength="124.0" lengthAdjust="spacingAndGlyphs" xml:space="preserve">joystick-connector_03*</text></svg>
<svg class="b" style="left:914.0px;top:40.2px;overflow:visible" width="43.0" height="20"><text x="1" y="14.0" font-size="12.3" fill="#6e6e6e" font-family="'Liberation Sans','IPAPGothic','IPAGothic','Noto Sans CJK JP',sans-serif" textLength="41.0" lengthAdjust="spacingAndGlyphs" xml:space="preserve">cz-8rl1*</text></svg>
<svg class="b" style="left:1395.0px;top:40.2px;overflow:visible" width="68.0" height="20"><text x="1" y="14.0" font-size="12.3" fill="#333" font-family="'Liberation Sans','IPAPGothic','IPAGothic','Noto Sans CJK JP',sans-serif" textLength="66.0" lengthAdjust="spacingAndGlyphs" xml:space="preserve">cz-8nj1 v18*</text></svg>
<svg class="b" style="left:1733.0px;top:38.9px;overflow:visible" width="23.0" height="18"><text x="1" y="13.0" font-size="11" fill="#444" font-family="'Liberation Sans','IPAPGothic','IPAGothic','Noto Sans CJK JP',sans-serif" textLength="21.0" lengthAdjust="spacingAndGlyphs" xml:space="preserve">9/10</text></svg>
<svg class="b" style="left:1848.5px;top:36.2px;overflow:visible" width="11.0" height="23"><text x="1" y="17.0" font-size="14.5" fill="#ccc" font-weight="700" font-family="'Liberation Sans','IPAPGothic','IPAGothic','Noto Sans CJK JP',sans-serif" textLength="9.0" lengthAdjust="spacingAndGlyphs" xml:space="preserve">?</text></svg>
<div class="b" style="left:0px;top:63px;width:1920px;height:81px;background:#f3f3f3;"></div>
<div class="b" style="left:0px;top:144px;width:1920px;height:1px;background:#e2e2e2;"></div>
<div class="b" style="left:12px;top:73px;width:109px;height:61px;background:#f3f3f3;border:1px solid #dcdcdc;border-radius:5px;box-sizing:border-box;"></div>
<svg class="b" style="left:41.0px;top:94.9px;overflow:visible" width="39.0" height="18"><text x="1" y="13.0" font-size="11.5" fill="#222" font-weight="700" font-family="'Liberation Sans','IPAPGothic','IPAGothic','Noto Sans CJK JP',sans-serif" textLength="37.0" lengthAdjust="spacingAndGlyphs" xml:space="preserve">デザイン</text></svg>
<svg class="b" style="left:149.0px;top:65.8px;overflow:visible" width="33.5" height="16"><text x="1" y="12.0" font-size="10.2" fill="#0696d7" font-weight="700" font-family="'Liberation Sans','IPAPGothic','IPAGothic','Noto Sans CJK JP',sans-serif" textLength="31.5" lengthAdjust="spacingAndGlyphs" xml:space="preserve">ソリッド</text></svg>
<div class="b" style="left:138px;top:84px;width:57px;height:3px;background:#0696d7;border-radius:1.5px;"></div>
<svg class="b" style="left:226.5px;top:65.8px;overflow:visible" width="41.5" height="16"><text x="1" y="12.0" font-size="10.2" fill="#333" font-family="'Liberation Sans','IPAPGothic','IPAGothic','Noto Sans CJK JP',sans-serif" textLength="39.5" lengthAdjust="spacingAndGlyphs" xml:space="preserve">サーフェス</text></svg>
<svg class="b" style="left:314.0px;top:65.8px;overflow:visible" width="31.5" height="16"><text x="1" y="12.0" font-size="10.2" fill="#333" font-family="'Liberation Sans','IPAPGothic','IPAGothic','Noto Sans CJK JP',sans-serif" textLength="29.5" lengthAdjust="spacingAndGlyphs" xml:space="preserve">メッシュ</text></svg>
<svg class="b" style="left:387.5px;top:65.8px;overflow:visible" width="33.0" height="16"><text x="1" y="12.0" font-size="10.2" fill="#333" font-family="'Liberation Sans','IPAPGothic','IPAGothic','Noto Sans CJK JP',sans-serif" textLength="31.0" lengthAdjust="spacingAndGlyphs" xml:space="preserve">フォーム</text></svg>
<svg class="b" style="left:465.5px;top:65.8px;overflow:visible" width="55.0" height="16"><text x="1" y="12.0" font-size="10.2" fill="#333" font-family="'Liberation Sans','IPAPGothic','IPAGothic','Noto Sans CJK JP',sans-serif" textLength="53.0" lengthAdjust="spacingAndGlyphs" xml:space="preserve">シート メタル</text></svg>
<svg class="b" style="left:564.0px;top:65.8px;overflow:visible" width="26.5" height="16"><text x="1" y="12.0" font-size="10.2" fill="#333" font-family="'Liberation Sans','IPAPGothic','IPAGothic','Noto Sans CJK JP',sans-serif" textLength="24.5" lengthAdjust="spacingAndGlyphs" xml:space="preserve">ツール</text></svg>
<svg class="b" style="left:219.0px;top:125.8px;overflow:visible" width="22.5" height="16"><text x="1" y="12.0" font-size="10.2" fill="#222" font-family="'Liberation Sans','IPAPGothic','IPAGothic','Noto Sans CJK JP',sans-serif" textLength="20.5" lengthAdjust="spacingAndGlyphs" xml:space="preserve">作成</text></svg>
<svg class="b" style="left:467.0px;top:125.8px;overflow:visible" width="22.5" height="16"><text x="1" y="12.0" font-size="10.2" fill="#222" font-family="'Liberation Sans','IPAPGothic','IPAGothic','Noto Sans CJK JP',sans-serif" textLength="20.5" lengthAdjust="spacingAndGlyphs" xml:space="preserve">修正</text></svg>
<svg class="b" style="left:641.5px;top:125.8px;overflow:visible" width="41.5" height="16"><text x="1" y="12.0" font-size="10.2" fill="#222" font-family="'Liberation Sans','IPAPGothic','IPAGothic','Noto Sans CJK JP',sans-serif" textLength="39.5" lengthAdjust="spacingAndGlyphs" xml:space="preserve">アセンブリ</text></svg>
<svg class="b" style="left:730.0px;top:125.8px;overflow:visible" width="22.5" height="16"><text x="1" y="12.0" font-size="10.2" fill="#222" font-family="'Liberation Sans','IPAPGothic','IPAGothic','Noto Sans CJK JP',sans-serif" textLength="20.5" lengthAdjust="spacingAndGlyphs" xml:space="preserve">構築</text></svg>
<svg class="b" style="left:789.0px;top:125.8px;overflow:visible" width="22.5" height="16"><text x="1" y="12.0" font-size="10.2" fill="#222" font-family="'Liberation Sans','IPAPGothic','IPAGothic','Noto Sans CJK JP',sans-serif" textLength="20.5" lengthAdjust="spacingAndGlyphs" xml:space="preserve">検査</text></svg>
<svg class="b" style="left:848.0px;top:125.8px;overflow:visible" width="22.5" height="16"><text x="1" y="12.0" font-size="10.2" fill="#222" font-family="'Liberation Sans','IPAPGothic','IPAGothic','Noto Sans CJK JP',sans-serif" textLength="20.5" lengthAdjust="spacingAndGlyphs" xml:space="preserve">挿入</text></svg>
<svg class="b" style="left:907.0px;top:125.8px;overflow:visible" width="22.5" height="16"><text x="1" y="12.0" font-size="10.2" fill="#222" font-family="'Liberation Sans','IPAPGothic','IPAGothic','Noto Sans CJK JP',sans-serif" textLength="20.5" lengthAdjust="spacingAndGlyphs" xml:space="preserve">選択</text></svg>
<svg class="b" style="left:0px;top:63px;" width="1920" height="82" viewBox="0 63 1920 82"><path d="M85.0 101.8h6l-3 3.900z" fill="#333"/><path d="M243.3 132.3h6l-3 3.900z" fill="#333"/><path d="M491.3 132.3h6l-3 3.900z" fill="#333"/><path d="M684.3 132.3h6l-3 3.900z" fill="#333"/><path d="M754.0 132.3h6l-3 3.900z" fill="#333"/><path d="M813.0 132.3h6l-3 3.900z" fill="#333"/><path d="M872.0 132.3h6l-3 3.900z" fill="#333"/><path d="M931.0 132.3h6l-3 3.900z" fill="#333"/><path d="M351 89v52" stroke="#dcdcdc" stroke-width="1.2"/><path d="M619.5 89v52" stroke="#dcdcdc" stroke-width="1.2"/><path d="M716.5 89v52" stroke="#dcdcdc" stroke-width="1.2"/><path d="M776 89v52" stroke="#dcdcdc" stroke-width="1.2"/><path d="M834.5 89v52" stroke="#dcdcdc" stroke-width="1.2"/><path d="M894 89v52" stroke="#dcdcdc" stroke-width="1.2"/><path d="M138.500 92.500h27.500v17M138.500 92.500v26.500h17" fill="none" stroke="#777" stroke-width="1" stroke-dasharray="5 2"/><rect x="137" y="91" width="3" height="3" fill="#555"/><rect x="164.5" y="91" width="3" height="3" fill="#555"/><rect x="137" y="117.5" width="3" height="3" fill="#555"/><path d="M146 99.500h11M146 99.500v11M146 111c6 0 12-5 12-11.500" fill="none" stroke="#666" stroke-width="1.100"/><rect x="144.5" y="98" width="3" height="3" fill="#555"/><rect x="156.5" y="98" width="3" height="3" fill="#555"/><rect x="144.5" y="109.5" width="3" height="3" fill="#555"/><path d="M155.500 113.500h13.500M162.200 107v13.500" stroke="#2da44e" stroke-width="3.600"/><path d="M181.500 116.500h18l5.500-4.500v5.500l-5.500 4h-18z" fill="#b9b9b9"/><path d="M181.500 116.500h18l5.500-4.500h-18z" fill="#ececec"/><path d="M181.500 96.500h18v20h-18z" fill="#6fb1e4"/><path d="M181.500 96.500l5.500-6h18l-5.500 6z" fill="#8fcbf5"/><path d="M199.500 96.500l5.500-6v21.500l-5.500 4.500z" fill="#4a93cf"/><path d="M209 115.500v-22" stroke="#222" stroke-width="1.100"/><path d="M206.500 95.500l2.500-5 2.500 5z" fill="#222"/><path d="M223 106c2-7 9-10.500 16-10.500s13 3 16 8.500l-5.500 10.500c-2-3-6-5-10.500-5s-8 2-9.500 5.500z" fill="#6fb1e4"/><path d="M223 106l6.500 9c1.500-3.500 5-5.500 9.500-5.500s8.500 2 10.500 5v4.500c-2-3-6-5-10.500-5s-8 2.500-9.500 6l-6.500-9z" fill="#4a93cf"/><path d="M223 106c2-7 9-10.500 16-10.500s13 3 16 8.500l-3 1.500c-2-4-7-6.500-13-6.500s-11 3-13 8.500z" fill="#8fcbf5"/><path d="M249.500 114.500l5.500-10.500v6.500l-5.500 8.500z" fill="#fff" stroke="#555" stroke-width="1"/><path d="M225.500 95c6-4.500 19-4.500 26.500 2" fill="none" stroke="#333" stroke-width="1"/><path d="M224 96.500l4.500-3.500-.5 4.500z" fill="#333"/><path d="M266.500 97.500h24.500v23.500h-24.500z" fill="#dcdcdc" stroke="#777" stroke-width="1"/><path d="M266.500 97.500l7-7h24l-6.500 7z" fill="#ececec" stroke="#777" stroke-width="1"/><path d="M291 97.500l6.500-7v23l-6.500 7.500z" fill="#b9b9b9" stroke="#777" stroke-width="1"/><circle cx="278.500" cy="109.500" r="8.500" fill="#f4f4f4" stroke="#777" stroke-width="1"/><circle cx="277.500" cy="110.300" r="6.800" fill="#6fb1e4"/><path d="M276 103.500a7 7 0 0 1 8.500 8.500a6 6 0 0 1-8.500-8.500z" fill="#f4f4f4"/><path d="M312 95.500h21M312 116.500h21M312 95.500v21" stroke="#666" stroke-width="1"/><rect x="309" y="92.500" width="6" height="6" fill="#fff" stroke="#666"/><rect x="330" y="92" width="7" height="7" fill="#6fb1e4"/><rect x="308.500" y="113" width="7" height="7" fill="#6fb1e4"/><rect x="330" y="113" width="7" height="7" fill="#6fb1e4"/><path d="M364.500 96l5-5.500h5v30.500h-10z" fill="#ececec" stroke="#777" stroke-width="1"/><path d="M371.500 96.500h8.500v24.500h-8.500z" fill="#6fb1e4"/><path d="M371.500 96.500l5-6h9l-5.500 6z" fill="#8fcbf5"/><path d="M380 96.500l5.500-6v25l-5.500 5.500z" fill="#4a93cf"/><path d="M383.500 105.500h7" stroke="#222" stroke-width="1.200"/><path d="M389.500 103l3.500 2.500-3.500 2.500z" fill="#222"/><path d="M406.500 121v-22.500l7-8h8c9 0 16 6 16 15.500v9.500l-6.500 5.500z" fill="#dcdcdc" stroke="#777" stroke-width="1"/><path d="M431 121v-10.500l6.500-5v10z" fill="#b9b9b9" stroke="#777" stroke-width="1"/><path d="M420 97l4.500-6.500c8 1 13 7 13 14.500l-6.500 5c0-7-4-12-11-13z" fill="#6fb1e4"/><path d="M449.500 97.500h24.500v23.500h-24.500z" fill="#dcdcdc" stroke="#777" stroke-width="1"/><path d="M449.500 97.500l7-7h24l-6.500 7z" fill="#ececec" stroke="#777" stroke-width="1"/><path d="M474 97.500l6.500-7v23l-6.500 7.500z" fill="#b9b9b9" stroke="#777" stroke-width="1"/><rect x="453" y="101.500" width="16" height="16" fill="#f6f6f6"/><path d="M453 101.500h7v9h9v7h-16z" fill="#4a93cf"/><path d="M460 110.500h9v7h-13.500z" fill="#8fcbf5"/><path d="M492.500 104.500h17v17h-17z" fill="#6fb1e4"/><path d="M492.500 104.500l5-4h17l-5 4z" fill="#8fcbf5"/><path d="M502.500 96h17v13.500h-10v-5h-7z" fill="#6fb1e4"/><path d="M502.500 96l5-5.500h17l-5 5.500z" fill="#8fcbf5"/><path d="M519.500 96l5-5.500v14l-5 5zM509.500 109.500h10l-5 5.500-5 6.500z" fill="#4a93cf"/><path d="M538 109.500h22v11h-22z" fill="#dcdcdc" stroke="#777" stroke-width="0.800"/><path d="M560 109.500l5.500-5v10.500l-5.500 5.500z" fill="#b9b9b9" stroke="#777" stroke-width="0.800"/><path d="M538 95.500h22v9.500h-22z" fill="#6fb1e4"/><path d="M538 95.500l5.500-5h22l-5.500 5z" fill="#8fcbf5"/><path d="M560 95.500l5.500-5v9.500l-5.500 5z" fill="#4a93cf"/><path d="M535.500 107.300h25.500l6.500-6.500" fill="none" stroke="#2d8fe0" stroke-width="1.600"/><path d="M581.500 105.500h25M594 93.500v25" stroke="#222" stroke-width="1.800"/><path d="M594 90.500l4.500 6h-9zM594 121.500l4.500-6h-9zM578.500 105.500l6-4.500v9zM609.500 105.500l-6-4.500v9z" fill="#222"/><path d="M632.500 109.500h11.500v11.500h-11.500zM644 109.500h11v11.500h-11z" fill="#dcdcdc" stroke="#777" stroke-width="0.800"/><path d="M644 109.500l4.500-3.500h11l-4.500 3.500z" fill="#ececec" stroke="#777" stroke-width="0.800"/><path d="M655 109.500l4.500-3.500v11l-4.500 4z" fill="#b9b9b9" stroke="#777" stroke-width="0.800"/><path d="M632.500 98h11.500v11.500h-11.500z" fill="#6fb1e4"/><path d="M632.500 98l4.500-3.500h11.500l-4.500 3.500z" fill="#8fcbf5"/><path d="M644 98l4.500-3.500v11l-4.500 4z" fill="#4a93cf"/><path d="M655.500 91l1.500 4 3.500-2.500-1 4 4.500.5-3.500 2.500 3 3-4.300.2 .8 4.300-3.500-2.500-2 3.800-1.300-4-4 1.500 2-3.800-4-1.700 4-1.500-2-3.700 4.200 1z" fill="#f59a00"/><path d="M677.500 96.500l6.500-5.500h6v9l-5.500 2v13.500l-7 5.500z" fill="#dcdcdc" stroke="#777" stroke-width="1"/><ellipse cx="686.500" cy="94" rx="2.500" ry="1.500" fill="#fff" stroke="#777" stroke-width="0.700"/><path d="M692.500 104.500h5v-10l7.500 8v17l-7.500-5h-5z" fill="#dcdcdc" stroke="#777" stroke-width="1"/><ellipse cx="695" cy="104.500" rx="2.500" ry="1.500" fill="#ececec" stroke="#777" stroke-width="0.700"/><path d="M686.500 104.500v5.500M695.500 98v5" stroke="#2d8fe0" stroke-width="1.200"/><path d="M732.500 96.500l7-6h5l-1 24-5.500 6h-5.500z" fill="#ececec" stroke="#777" stroke-width="1"/><path d="M741 96.500l8.500-6.500v24l-8.500 7z" fill="#5cc17a"/><path d="M753.500 97.500l8.500-7v23l-8.500 7.500z" fill="#e8996a"/><path d="M792.500 98v9M819.500 98v9M794 102.500h24" stroke="#666" stroke-width="1"/><path d="M792.800 102.500l4-2.300v4.600zM819.200 102.500l-4-2.300v4.600z" fill="#666"/><rect x="792" y="108" width="28" height="6" fill="#f59a00"/><path d="M795 108v2.500M798 108v2.500M801 108v2.500M804 108v2.500M807 108v2.500M810 108v2.500M813 108v2.500M816 108v2.500" stroke="#b86c00" stroke-width="0.700"/><rect x="850" y="91.300" width="29" height="28.700" fill="#8fcbf5"/><path d="M850 120v-11c3-4.500 6-7.500 9-7.500s5.500 4 7.500 7c1.500-2 3-3.500 5-3.500s4.500 2.500 7.500 6.500v8.500z" fill="#3f8fcc"/><circle cx="871" cy="99" r="3.200" fill="#fff4c2"/><rect x="850" y="91.300" width="29" height="28.700" fill="none" stroke="#4a93cf" stroke-width="0.600"/><rect x="905" y="87" width="38" height="38" fill="#0696d7"/><rect x="908.500" y="90.500" width="27.500" height="21" fill="none" stroke="#a6e36e" stroke-width="1" stroke-dasharray="3.500 2"/><path d="M929 104.500v16l3.800-3.300 2.700 5.300 2.300-1.100-2.700-5.300 5.200-.4z" fill="#fff"/></svg>
<div class="b" style="left:4px;top:149px;width:300px;height:25px;background:#f1f1f1;border:1px solid #cfcfcf;box-sizing:border-box;"></div>
<svg class="b" style="left:27.0px;top:152.1px;overflow:visible" width="34.5" height="17"><text x="1" y="12.0" font-size="10.5" fill="#444" font-family="'Liberation Sans','IPAPGothic','IPAGothic','Noto Sans CJK JP',sans-serif" textLength="32.5" lengthAdjust="spacingAndGlyphs" xml:space="preserve">ブラウザ</text></svg>
<div class="b" style="left:8px;top:179px;width:6px;height:816px;background:#c9c9c9;border-radius:2px;"></div>
<div class="b" style="left:8px;top:179px;width:6px;height:370px;background:#9b9b9b;border-radius:2px;"></div>
<div class="b" style="left:40px;top:179.5px;width:152px;height:19px;background:#f1f1f1;"></div>
<div class="b" style="left:65px;top:181px;width:102px;height:15.5px;background:#9a9a9a;"></div>
<svg class="b" style="left:97.0px;top:180.1px;overflow:visible" width="61.0" height="18"><text x="1" y="13.0" font-size="11" fill="#fff" font-weight="700" font-family="'Liberation Sans','IPAPGothic','IPAGothic','Noto Sans CJK JP',sans-serif" textLength="59.0" lengthAdjust="spacingAndGlyphs" xml:space="preserve">cz-8nj1 v18</text></svg>
<div class="b" style="left:58px;top:203.5px;width:122px;height:19px;background:#f1f1f1;"></div>
<svg class="b" style="left:90.0px;top:204.8px;overflow:visible" width="79.5" height="17"><text x="1" y="12.0" font-size="10.5" fill="#222" font-family="'Liberation Sans','IPAPGothic','IPAGothic','Noto Sans CJK JP',sans-serif" textLength="77.5" lengthAdjust="spacingAndGlyphs" xml:space="preserve">ドキュメントの設定</text></svg>
<div class="b" style="left:58px;top:227.5px;width:90px;height:19px;background:#f1f1f1;"></div>
<svg class="b" style="left:88.5px;top:228.8px;overflow:visible" width="48.0" height="17"><text x="1" y="12.0" font-size="10.5" fill="#222" font-family="'Liberation Sans','IPAPGothic','IPAGothic','Noto Sans CJK JP',sans-serif" textLength="46.0" lengthAdjust="spacingAndGlyphs" xml:space="preserve">ビュー管理</text></svg>
<div class="b" style="left:58px;top:251.5px;width:91px;height:19px;background:#f1f1f1;"></div>
<svg class="b" style="left:114.5px;top:252.8px;overflow:visible" width="22.5" height="17"><text x="1" y="12.0" font-size="10.5" fill="#222" font-family="'Liberation Sans','IPAPGothic','IPAGothic','Noto Sans CJK JP',sans-serif" textLength="20.5" lengthAdjust="spacingAndGlyphs" xml:space="preserve">原点</text></svg>
<div class="b" style="left:58px;top:275.5px;width:91px;height:19px;background:#f1f1f1;"></div>
<svg class="b" style="left:114.5px;top:276.8px;overflow:visible" width="26.0" height="17"><text x="1" y="12.0" font-size="10.5" fill="#222" font-family="'Liberation Sans','IPAPGothic','IPAGothic','Noto Sans CJK JP',sans-serif" textLength="24.0" lengthAdjust="spacingAndGlyphs" xml:space="preserve">ボディ</text></svg>
<div class="b" style="left:76px;top:299.5px;width:95px;height:19px;background:#f1f1f1;"></div>
<svg class="b" style="left:132.5px;top:300.8px;overflow:visible" width="31.5" height="17"><text x="1" y="12.0" font-size="10.5" fill="#222" font-family="'Liberation Sans','IPAPGothic','IPAGothic','Noto Sans CJK JP',sans-serif" textLength="29.5" lengthAdjust="spacingAndGlyphs" xml:space="preserve">ボディ1</text></svg>
<div class="b" style="left:76px;top:323.5px;width:99px;height:19px;background:#f1f1f1;"></div>
<svg class="b" style="left:132.5px;top:324.8px;overflow:visible" width="32.5" height="17"><text x="1" y="12.0" font-size="10.5" fill="#222" font-family="'Liberation Sans','IPAPGothic','IPAGothic','Noto Sans CJK JP',sans-serif" textLength="30.5" lengthAdjust="spacingAndGlyphs" xml:space="preserve">ボディ2</text></svg>
<div class="b" style="left:76px;top:347.5px;width:99px;height:19px;background:#f1f1f1;"></div>
<svg class="b" style="left:132.5px;top:348.8px;overflow:visible" width="32.5" height="17"><text x="1" y="12.0" font-size="10.5" fill="#222" font-family="'Liberation Sans','IPAPGothic','IPAGothic','Noto Sans CJK JP',sans-serif" textLength="30.5" lengthAdjust="spacingAndGlyphs" xml:space="preserve">ボディ3</text></svg>
<div class="b" style="left:76px;top:371.5px;width:99px;height:19px;background:#f1f1f1;"></div>
<svg class="b" style="left:132.5px;top:372.8px;overflow:visible" width="32.5" height="17"><text x="1" y="12.0" font-size="10.5" fill="#222" font-family="'Liberation Sans','IPAPGothic','IPAGothic','Noto Sans CJK JP',sans-serif" textLength="30.5" lengthAdjust="spacingAndGlyphs" xml:space="preserve">ボディ4</text></svg>
<div class="b" style="left:76px;top:395.5px;width:99px;height:19px;background:#f1f1f1;"></div>
<svg class="b" style="left:132.5px;top:396.8px;overflow:visible" width="32.5" height="17"><text x="1" y="12.0" font-size="10.5" fill="#222" font-family="'Liberation Sans','IPAPGothic','IPAGothic','Noto Sans CJK JP',sans-serif" textLength="30.5" lengthAdjust="spacingAndGlyphs" xml:space="preserve">ボディ5</text></svg>
<div class="b" style="left:76px;top:419.5px;width:99px;height:19px;background:#f1f1f1;"></div>
<svg class="b" style="left:132.5px;top:420.8px;overflow:visible" width="32.5" height="17"><text x="1" y="12.0" font-size="10.5" fill="#222" font-family="'Liberation Sans','IPAPGothic','IPAGothic','Noto Sans CJK JP',sans-serif" textLength="30.5" lengthAdjust="spacingAndGlyphs" xml:space="preserve">ボディ6</text></svg>
<div class="b" style="left:76px;top:443.5px;width:99px;height:19px;background:#f1f1f1;"></div>
<svg class="b" style="left:132.5px;top:444.8px;overflow:visible" width="32.5" height="17"><text x="1" y="12.0" font-size="10.5" fill="#222" font-family="'Liberation Sans','IPAPGothic','IPAGothic','Noto Sans CJK JP',sans-serif" textLength="30.5" lengthAdjust="spacingAndGlyphs" xml:space="preserve">ボディ7</text></svg>
<div class="b" style="left:76px;top:467.5px;width:99px;height:19px;background:#f1f1f1;"></div>
<svg class="b" style="left:132.5px;top:468.8px;overflow:visible" width="32.5" height="17"><text x="1" y="12.0" font-size="10.5" fill="#222" font-family="'Liberation Sans','IPAPGothic','IPAGothic','Noto Sans CJK JP',sans-serif" textLength="30.5" lengthAdjust="spacingAndGlyphs" xml:space="preserve">ボディ8</text></svg>
<div class="b" style="left:76px;top:491.5px;width:99px;height:19px;background:#f1f1f1;"></div>
<svg class="b" style="left:132.5px;top:492.8px;overflow:visible" width="32.5" height="17"><text x="1" y="12.0" font-size="10.5" fill="#222" font-family="'Liberation Sans','IPAPGothic','IPAGothic','Noto Sans CJK JP',sans-serif" textLength="30.5" lengthAdjust="spacingAndGlyphs" xml:space="preserve">ボディ9</text></svg>
<div class="b" style="left:76px;top:515.5px;width:103px;height:19px;background:#f1f1f1;"></div>
<svg class="b" style="left:132.5px;top:516.8px;overflow:visible" width="38.5" height="17"><text x="1" y="12.0" font-size="10.5" fill="#222" font-family="'Liberation Sans','IPAPGothic','IPAGothic','Noto Sans CJK JP',sans-serif" textLength="36.5" lengthAdjust="spacingAndGlyphs" xml:space="preserve">ボディ10</text></svg>
<div class="b" style="left:76px;top:539.5px;width:103px;height:19px;background:#f1f1f1;"></div>
<svg class="b" style="left:132.5px;top:540.8px;overflow:visible" width="36.5" height="17"><text x="1" y="12.0" font-size="10.5" fill="#222" font-family="'Liberation Sans','IPAPGothic','IPAGothic','Noto Sans CJK JP',sans-serif" textLength="34.5" lengthAdjust="spacingAndGlyphs" xml:space="preserve">ボディ11</text></svg>
<div class="b" style="left:76px;top:563.5px;width:103px;height:19px;background:#f1f1f1;"></div>
<svg class="b" style="left:132.5px;top:564.8px;overflow:visible" width="38.5" height="17"><text x="1" y="12.0" font-size="10.5" fill="#222" font-family="'Liberation Sans','IPAPGothic','IPAGothic','Noto Sans CJK JP',sans-serif" textLength="36.5" lengthAdjust="spacingAndGlyphs" xml:space="preserve">ボディ12</text></svg>
<div class="b" style="left:76px;top:587.5px;width:103px;height:19px;background:#f1f1f1;"></div>
<svg class="b" style="left:132.5px;top:588.8px;overflow:visible" width="38.5" height="17"><text x="1" y="12.0" font-size="10.5" fill="#222" font-family="'Liberation Sans','IPAPGothic','IPAGothic','Noto Sans CJK JP',sans-serif" textLength="36.5" lengthAdjust="spacingAndGlyphs" xml:space="preserve">ボディ13</text></svg>
<div class="b" style="left:76px;top:611.5px;width:103px;height:19px;background:#f1f1f1;"></div>
<svg class="b" style="left:132.5px;top:612.8px;overflow:visible" width="38.5" height="17"><text x="1" y="12.0" font-size="10.5" fill="#222" font-family="'Liberation Sans','IPAPGothic','IPAGothic','Noto Sans CJK JP',sans-serif" textLength="36.5" lengthAdjust="spacingAndGlyphs" xml:space="preserve">ボディ16</text></svg>
<div class="b" style="left:76px;top:635.5px;width:103px;height:19px;background:#f1f1f1;"></div>
<svg class="b" style="left:132.5px;top:636.8px;overflow:visible" width="38.5" height="17"><text x="1" y="12.0" font-size="10.5" fill="#222" font-family="'Liberation Sans','IPAPGothic','IPAGothic','Noto Sans CJK JP',sans-serif" textLength="36.5" lengthAdjust="spacingAndGlyphs" xml:space="preserve">ボディ17</text></svg>
<div class="b" style="left:76px;top:659.5px;width:103px;height:19px;background:#f1f1f1;"></div>
<svg class="b" style="left:132.5px;top:660.8px;overflow:visible" width="38.5" height="17"><text x="1" y="12.0" font-size="10.5" fill="#222" font-family="'Liberation Sans','IPAPGothic','IPAGothic','Noto Sans CJK JP',sans-serif" textLength="36.5" lengthAdjust="spacingAndGlyphs" xml:space="preserve">ボディ18</text></svg>
<div class="b" style="left:76px;top:683.5px;width:103px;height:19px;background:#f1f1f1;"></div>
<svg class="b" style="left:132.5px;top:684.8px;overflow:visible" width="38.5" height="17"><text x="1" y="12.0" font-size="10.5" fill="#222" font-family="'Liberation Sans','IPAPGothic','IPAGothic','Noto Sans CJK JP',sans-serif" textLength="36.5" lengthAdjust="spacingAndGlyphs" xml:space="preserve">ボディ21</text></svg>
<div class="b" style="left:76px;top:707.5px;width:103px;height:19px;background:#f1f1f1;"></div>
<svg class="b" style="left:132.5px;top:708.8px;overflow:visible" width="38.5" height="17"><text x="1" y="12.0" font-size="10.5" fill="#222" font-family="'Liberation Sans','IPAPGothic','IPAGothic','Noto Sans CJK JP',sans-serif" textLength="36.5" lengthAdjust="spacingAndGlyphs" xml:space="preserve">ボディ22</text></svg>
<div class="b" style="left:76px;top:731.5px;width:103px;height:19px;background:#f1f1f1;"></div>
<svg class="b" style="left:132.5px;top:732.8px;overflow:visible" width="38.5" height="17"><text x="1" y="12.0" font-size="10.5" fill="#222" font-family="'Liberation Sans','IPAPGothic','IPAGothic','Noto Sans CJK JP',sans-serif" textLength="36.5" lengthAdjust="spacingAndGlyphs" xml:space="preserve">ボディ23</text></svg>
<div class="b" style="left:76px;top:755.5px;width:103px;height:19px;background:#f1f1f1;"></div>
<svg class="b" style="left:132.5px;top:756.8px;overflow:visible" width="38.5" height="17"><text x="1" y="12.0" font-size="10.5" fill="#222" font-family="'Liberation Sans','IPAPGothic','IPAGothic','Noto Sans CJK JP',sans-serif" textLength="36.5" lengthAdjust="spacingAndGlyphs" xml:space="preserve">ボディ42</text></svg>
<div class="b" style="left:76px;top:779.5px;width:103px;height:19px;background:#f1f1f1;"></div>
<svg class="b" style="left:132.5px;top:780.8px;overflow:visible" width="38.5" height="17"><text x="1" y="12.0" font-size="10.5" fill="#222" font-family="'Liberation Sans','IPAPGothic','IPAGothic','Noto Sans CJK JP',sans-serif" textLength="36.5" lengthAdjust="spacingAndGlyphs" xml:space="preserve">ボディ45</text></svg>
<div class="b" style="left:76px;top:803.5px;width:103px;height:19px;background:#f1f1f1;"></div>
<svg class="b" style="left:132.5px;top:804.8px;overflow:visible" width="38.5" height="17"><text x="1" y="12.0" font-size="10.5" fill="#222" font-family="'Liberation Sans','IPAPGothic','IPAGothic','Noto Sans CJK JP',sans-serif" textLength="36.5" lengthAdjust="spacingAndGlyphs" xml:space="preserve">ボディ50</text></svg>
<div class="b" style="left:76px;top:827.5px;width:103px;height:19px;background:#f1f1f1;"></div>
<svg class="b" style="left:132.5px;top:828.8px;overflow:visible" width="38.5" height="17"><text x="1" y="12.0" font-size="10.5" fill="#222" font-family="'Liberation Sans','IPAPGothic','IPAGothic','Noto Sans CJK JP',sans-serif" textLength="36.5" lengthAdjust="spacingAndGlyphs" xml:space="preserve">ボディ76</text></svg>
<div class="b" style="left:58px;top:851.5px;width:139px;height:19px;background:#f1f1f1;"></div>
<svg class="b" style="left:114.5px;top:852.8px;overflow:visible" width="73.0" height="17"><text x="1" y="12.0" font-size="10.5" fill="#222" font-family="'Liberation Sans','IPAPGothic','IPAGothic','Noto Sans CJK JP',sans-serif" textLength="71.0" lengthAdjust="spacingAndGlyphs" xml:space="preserve">コンストラクション</text></svg>
<div class="b" style="left:58px;top:875.5px;width:86px;height:19px;background:#f1f1f1;"></div>
<svg class="b" style="left:90.0px;top:876.8px;overflow:visible" width="45.0" height="17"><text x="1" y="12.0" font-size="10.5" fill="#222" font-family="'Liberation Sans','IPAPGothic','IPAGothic','Noto Sans CJK JP',sans-serif" textLength="43.0" lengthAdjust="spacingAndGlyphs" xml:space="preserve">押し出し1</text></svg>
<div class="b" style="left:58px;top:899.5px;width:86px;height:19px;background:#f1f1f1;"></div>
<svg class="b" style="left:90.0px;top:900.8px;overflow:visible" width="46.0" height="17"><text x="1" y="12.0" font-size="10.5" fill="#222" font-family="'Liberation Sans','IPAPGothic','IPAGothic','Noto Sans CJK JP',sans-serif" textLength="44.0" lengthAdjust="spacingAndGlyphs" xml:space="preserve">押し出し3</text></svg>
<div class="b" style="left:58px;top:923.5px;width:86px;height:19px;background:#f1f1f1;"></div>
<svg class="b" style="left:90.0px;top:924.8px;overflow:visible" width="46.0" height="17"><text x="1" y="12.0" font-size="10.5" fill="#222" font-family="'Liberation Sans','IPAPGothic','IPAGothic','Noto Sans CJK JP',sans-serif" textLength="44.0" lengthAdjust="spacingAndGlyphs" xml:space="preserve">押し出し4</text></svg>
<div class="b" style="left:58px;top:947.5px;width:86px;height:19px;background:#f1f1f1;"></div>
<svg class="b" style="left:90.0px;top:948.8px;overflow:visible" width="46.0" height="17"><text x="1" y="12.0" font-size="10.5" fill="#222" font-family="'Liberation Sans','IPAPGothic','IPAGothic','Noto Sans CJK JP',sans-serif" textLength="44.0" lengthAdjust="spacingAndGlyphs" xml:space="preserve">押し出し5</text></svg>
<div class="b" style="left:58px;top:971.5px;width:86px;height:19px;background:#f1f1f1;"></div>
<svg class="b" style="left:90.0px;top:972.8px;overflow:visible" width="46.0" height="17"><text x="1" y="12.0" font-size="10.5" fill="#222" font-family="'Liberation Sans','IPAPGothic','IPAGothic','Noto Sans CJK JP',sans-serif" textLength="44.0" lengthAdjust="spacingAndGlyphs" xml:space="preserve">押し出し6</text></svg>
<div class="b" style="left:4px;top:1019px;width:300px;height:25px;background:#f1f1f1;border:1px solid #cfcfcf;box-sizing:border-box;"></div>
<svg class="b" style="left:27.0px;top:1022.8px;overflow:visible" width="34.5" height="17"><text x="1" y="12.0" font-size="10.5" fill="#444" font-family="'Liberation Sans','IPAPGothic','IPAGothic','Noto Sans CJK JP',sans-serif" textLength="32.5" lengthAdjust="spacingAndGlyphs" xml:space="preserve">コメント</text></svg>
<svg class="b" style="left:0px;top:145px;" width="310" height="903" viewBox="0 145 310 903"><path d="M14 161l-4.500 0 4.500-3zM14 161l-4.500 0 4.500 3zM19 161l-4.500 0 4.500-3zM19 161l-4.500 0 4.500 3z" fill="#222" stroke="#222" stroke-width="0.500"/><circle cx="287.500" cy="161.300" r="4.600" fill="#222"/><path d="M284.800 161.300h5.400" stroke="#f1f1f1" stroke-width="1.300"/><path d="M299.500 156.500v10" stroke="#444" stroke-width="1"/><path d="M301.500 158v8" stroke="#999" stroke-width="1"/><path d="M31.5 183.7v10.500h-10.300z" fill="#888" stroke="#333" stroke-width="1"/><path d="M43.5 189c2.500-3.800 5.200-5.300 8-5.300s5.500 1.500 8 5.300c-2.500 3.800-5.200 5.300-8 5.300s-5.500-1.500-8-5.300z" fill="#9b9b9b"/><circle cx="51.5" cy="189" r="3.300" fill="#f1f1f1"/><circle cx="51.5" cy="189" r="1.900" fill="#9b9b9b"/><path d="M68.500 185h11.500v10.500h-11.500z" fill="#f4f4f6" stroke="#333" stroke-width="0.900"/><path d="M68.500 185l4-3.500h11.500l-4 3.500z" fill="#fff" stroke="#333" stroke-width="0.900"/><path d="M80 185l4-3.500v10.500l-4 3.500z" fill="#c8ccd6" stroke="#333" stroke-width="0.900"/><circle cx="177.300" cy="189.5" r="5.900" fill="#fff" stroke="#222" stroke-width="1.100"/><circle cx="177.300" cy="189.5" r="2.300" fill="#222"/><path d="M40.5 207l8.500 6-8.500 6z" fill="#fff" stroke="#333" stroke-width="1.200" stroke-linejoin="round"/><circle cx="69" cy="213" r="5.300" fill="#9a9a9a"/><rect x="67.3" y="204.8" width="3.400" height="4" fill="#9a9a9a" transform="rotate(0 69 213)"/><rect x="67.3" y="204.8" width="3.400" height="4" fill="#9a9a9a" transform="rotate(45 69 213)"/><rect x="67.3" y="204.8" width="3.400" height="4" fill="#9a9a9a" transform="rotate(90 69 213)"/><rect x="67.3" y="204.8" width="3.400" height="4" fill="#9a9a9a" transform="rotate(135 69 213)"/><rect x="67.3" y="204.8" width="3.400" height="4" fill="#9a9a9a" transform="rotate(180 69 213)"/><rect x="67.3" y="204.8" width="3.400" height="4" fill="#9a9a9a" transform="rotate(225 69 213)"/><rect x="67.3" y="204.8" width="3.400" height="4" fill="#9a9a9a" transform="rotate(270 69 213)"/><rect x="67.3" y="204.8" width="3.400" height="4" fill="#9a9a9a" transform="rotate(315 69 213)"/><circle cx="69" cy="213" r="2.500" fill="#f1f1f1"/><path d="M40.5 231l8.500 6-8.500 6z" fill="#fff" stroke="#333" stroke-width="1.200" stroke-linejoin="round"/><path d="M61 230.5h6.500l1.500 2.200h8v10.800h-16z" fill="#9a9a9a"/><path d="M61 233.7h16" stroke="#c4c4c4" stroke-width="0.800"/><path d="M40.5 255l8.500 6-8.500 6z" fill="#fff" stroke="#333" stroke-width="1.200" stroke-linejoin="round"/><path d="M61.5 261c2.500-3.500 5-4.800 7.500-4.800s5 1.300 7.500 4.800c-2.500 3.500-5 4.800-7.500 4.800s-5-1.300-7.500-4.800z" fill="none" stroke="#a8a8a8" stroke-width="1"/><circle cx="69" cy="261" r="2.600" fill="none" stroke="#a8a8a8" stroke-width="1"/><path d="M63.5 256l11 10" stroke="#a8a8a8" stroke-width="1.100"/><path d="M86 254.5h6.500l1.500 2.200h8v10.800h-16z" fill="#9a9a9a"/><path d="M86 257.7h16" stroke="#c4c4c4" stroke-width="0.800"/><path d="M49.5 279.7v10.500h-10.300z" fill="#888" stroke="#333" stroke-width="1"/><path d="M61 285c2.500-3.800 5.200-5.300 8-5.300s5.500 1.500 8 5.300c-2.500 3.800-5.200 5.300-8 5.300s-5.500-1.500-8-5.300z" fill="#9b9b9b"/><circle cx="69" cy="285" r="3.300" fill="#f1f1f1"/><circle cx="69" cy="285" r="1.900" fill="#9b9b9b"/><path d="M86 278.5h6.500l1.500 2.200h8v10.800h-16z" fill="#9a9a9a"/><path d="M86 281.7h16" stroke="#c4c4c4" stroke-width="0.800"/><path d="M79 309c2.500-3.800 5.200-5.300 8-5.300s5.500 1.500 8 5.300c-2.500 3.800-5.200 5.300-8 5.300s-5.500-1.500-8-5.300z" fill="#9b9b9b"/><circle cx="87" cy="309" r="3.300" fill="#f1f1f1"/><circle cx="87" cy="309" r="1.900" fill="#9b9b9b"/><defs><linearGradient id="bg103.5_309" x1="0" y1="0" x2="1" y2="0"><stop offset="0" stop-color="#f4f5f8"/><stop offset="1" stop-color="#aeb4c4"/></linearGradient></defs><rect x="104.1" y="301.7" width="15.300" height="14.800" rx="3.800" fill="#fafafa" stroke="#444" stroke-width="1"/><path d="M108.5 306.5h10.400v6c0 2.500-1.500 3.500-3.500 3.500h-6.900z" fill="url(#bg103.5_309)"/><path d="M79 333c2.500-3.800 5.200-5.300 8-5.300s5.500 1.500 8 5.300c-2.500 3.800-5.200 5.300-8 5.300s-5.500-1.500-8-5.300z" fill="#9b9b9b"/><circle cx="87" cy="333" r="3.300" fill="#f1f1f1"/><circle cx="87" cy="333" r="1.900" fill="#9b9b9b"/><defs><linearGradient id="bg103.5_333" x1="0" y1="0" x2="1" y2="0"><stop offset="0" stop-color="#f4f5f8"/><stop offset="1" stop-color="#aeb4c4"/></linearGradient></defs><rect x="104.1" y="325.7" width="15.300" height="14.800" rx="3.800" fill="#fafafa" stroke="#444" stroke-width="1"/><path d="M108.5 330.5h10.400v6c0 2.500-1.500 3.500-3.500 3.500h-6.900z" fill="url(#bg103.5_333)"/><path d="M79 357c2.500-3.800 5.200-5.300 8-5.300s5.500 1.500 8 5.300c-2.500 3.800-5.200 5.300-8 5.300s-5.500-1.500-8-5.300z" fill="#9b9b9b"/><circle cx="87" cy="357" r="3.300" fill="#f1f1f1"/><circle cx="87" cy="357" r="1.900" fill="#9b9b9b"/><defs><linearGradient id="bg103.5_357" x1="0" y1="0" x2="1" y2="0"><stop offset="0" stop-color="#f4f5f8"/><stop offset="1" stop-color="#aeb4c4"/></linearGradient></defs><rect x="104.1" y="349.7" width="15.300" height="14.800" rx="3.800" fill="#fafafa" stroke="#444" stroke-width="1"/><path d="M108.5 354.5h10.400v6c0 2.500-1.500 3.500-3.500 3.500h-6.900z" fill="url(#bg103.5_357)"/><path d="M79 381c2.500-3.800 5.200-5.300 8-5.300s5.500 1.500 8 5.300c-2.500 3.800-5.200 5.300-8 5.300s-5.500-1.500-8-5.300z" fill="#9b9b9b"/><circle cx="87" cy="381" r="3.300" fill="#f1f1f1"/><circle cx="87" cy="381" r="1.900" fill="#9b9b9b"/><defs><linearGradient id="bg103.5_381" x1="0" y1="0" x2="1" y2="0"><stop offset="0" stop-color="#f4f5f8"/><stop offset="1" stop-color="#aeb4c4"/></linearGradient></defs><rect x="104.1" y="373.7" width="15.300" height="14.800" rx="3.800" fill="#fafafa" stroke="#444" stroke-width="1"/><path d="M108.5 378.5h10.400v6c0 2.500-1.500 3.500-3.500 3.500h-6.900z" fill="url(#bg103.5_381)"/><path d="M79 405c2.500-3.800 5.200-5.300 8-5.300s5.500 1.500 8 5.300c-2.500 3.800-5.200 5.300-8 5.300s-5.500-1.500-8-5.300z" fill="#9b9b9b"/><circle cx="87" cy="405" r="3.300" fill="#f1f1f1"/><circle cx="87" cy="405" r="1.900" fill="#9b9b9b"/><defs><linearGradient id="bg103.5_405" x1="0" y1="0" x2="1" y2="0"><stop offset="0" stop-color="#f4f5f8"/><stop offset="1" stop-color="#aeb4c4"/></linearGradient></defs><rect x="104.1" y="397.7" width="15.300" height="14.800" rx="3.800" fill="#fafafa" stroke="#444" stroke-width="1"/><path d="M108.5 402.5h10.400v6c0 2.500-1.500 3.500-3.500 3.500h-6.900z" fill="url(#bg103.5_405)"/><path d="M79 429c2.500-3.800 5.200-5.300 8-5.300s5.500 1.500 8 5.300c-2.500 3.800-5.200 5.300-8 5.300s-5.500-1.500-8-5.300z" fill="#9b9b9b"/><circle cx="87" cy="429" r="3.300" fill="#f1f1f1"/><circle cx="87" cy="429" r="1.900" fill="#9b9b9b"/><defs><linearGradient id="bg103.5_429" x1="0" y1="0" x2="1" y2="0"><stop offset="0" stop-color="#f4f5f8"/><stop offset="1" stop-color="#aeb4c4"/></linearGradient></defs><rect x="104.1" y="421.7" width="15.300" height="14.800" rx="3.800" fill="#fafafa" stroke="#444" stroke-width="1"/><path d="M108.5 426.5h10.400v6c0 2.500-1.500 3.500-3.500 3.500h-6.900z" fill="url(#bg103.5_429)"/><path d="M79 453c2.500-3.800 5.200-5.300 8-5.300s5.500 1.500 8 5.300c-2.500 3.800-5.200 5.300-8 5.300s-5.500-1.500-8-5.300z" fill="#9b9b9b"/><circle cx="87" cy="453" r="3.300" fill="#f1f1f1"/><circle cx="87" cy="453" r="1.900" fill="#9b9b9b"/><defs><linearGradient id="bg103.5_453" x1="0" y1="0" x2="1" y2="0"><stop offset="0" stop-color="#f4f5f8"/><stop offset="1" stop-color="#aeb4c4"/></linearGradient></defs><rect x="104.1" y="445.7" width="15.300" height="14.800" rx="3.800" fill="#fafafa" stroke="#444" stroke-width="1"/><path d="M108.5 450.5h10.400v6c0 2.500-1.500 3.500-3.500 3.500h-6.900z" fill="url(#bg103.5_453)"/><path d="M79 477c2.500-3.800 5.200-5.300 8-5.300s5.500 1.500 8 5.300c-2.500 3.800-5.200 5.300-8 5.300s-5.500-1.500-8-5.300z" fill="#9b9b9b"/><circle cx="87" cy="477" r="3.300" fill="#f1f1f1"/><circle cx="87" cy="477" r="1.900" fill="#9b9b9b"/><defs><linearGradient id="bg103.5_477" x1="0" y1="0" x2="1" y2="0"><stop offset="0" stop-color="#f4f5f8"/><stop offset="1" stop-color="#aeb4c4"/></linearGradient></defs><rect x="104.1" y="469.7" width="15.300" height="14.800" rx="3.800" fill="#fafafa" stroke="#444" stroke-width="1"/><path d="M108.5 474.5h10.400v6c0 2.500-1.500 3.500-3.500 3.500h-6.900z" fill="url(#bg103.5_477)"/><path d="M79 501c2.500-3.800 5.200-5.300 8-5.300s5.500 1.500 8 5.300c-2.500 3.800-5.200 5.300-8 5.300s-5.500-1.500-8-5.300z" fill="#9b9b9b"/><circle cx="87" cy="501" r="3.300" fill="#f1f1f1"/><circle cx="87" cy="501" r="1.900" fill="#9b9b9b"/><defs><linearGradient id="bg103.5_501" x1="0" y1="0" x2="1" y2="0"><stop offset="0" stop-color="#f4f5f8"/><stop offset="1" stop-color="#aeb4c4"/></linearGradient></defs><rect x="104.1" y="493.7" width="15.300" height="14.800" rx="3.800" fill="#fafafa" stroke="#444" stroke-width="1"/><path d="M108.5 498.5h10.400v6c0 2.500-1.500 3.500-3.500 3.500h-6.900z" fill="url(#bg103.5_501)"/><path d="M79 525c2.500-3.800 5.200-5.300 8-5.300s5.500 1.500 8 5.300c-2.500 3.800-5.200 5.300-8 5.300s-5.500-1.500-8-5.300z" fill="#9b9b9b"/><circle cx="87" cy="525" r="3.300" fill="#f1f1f1"/><circle cx="87" cy="525" r="1.900" fill="#9b9b9b"/><defs><linearGradient id="bg103.5_525" x1="0" y1="0" x2="1" y2="0"><stop offset="0" stop-color="#f4f5f8"/><stop offset="1" stop-color="#aeb4c4"/></linearGradient></defs><rect x="104.1" y="517.7" width="15.300" height="14.800" rx="3.800" fill="#fafafa" stroke="#444" stroke-width="1"/><path d="M108.5 522.5h10.400v6c0 2.500-1.500 3.500-3.500 3.500h-6.900z" fill="url(#bg103.5_525)"/><path d="M79 549c2.500-3.800 5.200-5.300 8-5.300s5.500 1.500 8 5.300c-2.500 3.800-5.200 5.300-8 5.300s-5.500-1.500-8-5.300z" fill="#9b9b9b"/><circle cx="87" cy="549" r="3.300" fill="#f1f1f1"/><circle cx="87" cy="549" r="1.900" fill="#9b9b9b"/><defs><linearGradient id="bg103.5_549" x1="0" y1="0" x2="1" y2="0"><stop offset="0" stop-color="#f4f5f8"/><stop offset="1" stop-color="#aeb4c4"/></linearGradient></defs><rect x="104.1" y="541.7" width="15.300" height="14.800" rx="3.800" fill="#fafafa" stroke="#444" stroke-width="1"/><path d="M108.5 546.5h10.400v6c0 2.500-1.500 3.500-3.500 3.500h-6.900z" fill="url(#bg103.5_549)"/><path d="M79 573c2.500-3.800 5.200-5.300 8-5.300s5.500 1.500 8 5.300c-2.500 3.800-5.200 5.300-8 5.300s-5.500-1.500-8-5.300z" fill="#9b9b9b"/><circle cx="87" cy="573" r="3.300" fill="#f1f1f1"/><circle cx="87" cy="573" r="1.900" fill="#9b9b9b"/><defs><linearGradient id="bg103.5_573" x1="0" y1="0" x2="1" y2="0"><stop offset="0" stop-color="#f4f5f8"/><stop offset="1" stop-color="#aeb4c4"/></linearGradient></defs><rect x="104.1" y="565.7" width="15.300" height="14.800" rx="3.800" fill="#fafafa" stroke="#444" stroke-width="1"/><path d="M108.5 570.5h10.400v6c0 2.500-1.500 3.500-3.500 3.500h-6.900z" fill="url(#bg103.5_573)"/><path d="M79 597c2.500-3.800 5.200-5.300 8-5.300s5.500 1.500 8 5.300c-2.500 3.800-5.200 5.300-8 5.300s-5.500-1.500-8-5.300z" fill="#9b9b9b"/><circle cx="87" cy="597" r="3.300" fill="#f1f1f1"/><circle cx="87" cy="597" r="1.900" fill="#9b9b9b"/><defs><linearGradient id="bg103.5_597" x1="0" y1="0" x2="1" y2="0"><stop offset="0" stop-color="#f4f5f8"/><stop offset="1" stop-color="#aeb4c4"/></linearGradient></defs><rect x="104.1" y="589.7" width="15.300" height="14.800" rx="3.800" fill="#fafafa" stroke="#444" stroke-width="1"/><path d="M108.5 594.5h10.400v6c0 2.500-1.500 3.500-3.500 3.500h-6.900z" fill="url(#bg103.5_597)"/><path d="M79 621c2.500-3.800 5.200-5.300 8-5.300s5.500 1.500 8 5.300c-2.500 3.800-5.200 5.300-8 5.300s-5.500-1.500-8-5.300z" fill="#9b9b9b"/><circle cx="87" cy="621" r="3.300" fill="#f1f1f1"/><circle cx="87" cy="621" r="1.900" fill="#9b9b9b"/><defs><linearGradient id="bg103.5_621" x1="0" y1="0" x2="1" y2="0"><stop offset="0" stop-color="#f4f5f8"/><stop offset="1" stop-color="#aeb4c4"/></linearGradient></defs><rect x="104.1" y="613.7" width="15.300" height="14.800" rx="3.800" fill="#fafafa" stroke="#444" stroke-width="1"/><path d="M108.5 618.5h10.400v6c0 2.500-1.500 3.500-3.500 3.500h-6.900z" fill="url(#bg103.5_621)"/><path d="M79 645c2.500-3.800 5.200-5.300 8-5.300s5.500 1.500 8 5.300c-2.500 3.800-5.200 5.300-8 5.300s-5.500-1.500-8-5.300z" fill="#9b9b9b"/><circle cx="87" cy="645" r="3.300" fill="#f1f1f1"/><circle cx="87" cy="645" r="1.900" fill="#9b9b9b"/><defs><linearGradient id="bg103.5_645" x1="0" y1="0" x2="1" y2="0"><stop offset="0" stop-color="#f4f5f8"/><stop offset="1" stop-color="#aeb4c4"/></linearGradient></defs><rect x="104.1" y="637.7" width="15.300" height="14.800" rx="3.800" fill="#fafafa" stroke="#444" stroke-width="1"/><path d="M108.5 642.5h10.400v6c0 2.500-1.500 3.500-3.500 3.500h-6.900z" fill="url(#bg103.5_645)"/><path d="M79 669c2.500-3.800 5.200-5.300 8-5.300s5.500 1.500 8 5.300c-2.500 3.800-5.200 5.300-8 5.300s-5.500-1.500-8-5.300z" fill="#9b9b9b"/><circle cx="87" cy="669" r="3.300" fill="#f1f1f1"/><circle cx="87" cy="669" r="1.900" fill="#9b9b9b"/><defs><linearGradient id="bg103.5_669" x1="0" y1="0" x2="1" y2="0"><stop offset="0" stop-color="#f4f5f8"/><stop offset="1" stop-color="#aeb4c4"/></linearGradient></defs><rect x="104.1" y="661.7" width="15.300" height="14.800" rx="3.800" fill="#fafafa" stroke="#444" stroke-width="1"/><path d="M108.5 666.5h10.400v6c0 2.500-1.500 3.500-3.500 3.500h-6.900z" fill="url(#bg103.5_669)"/><path d="M79 693c2.500-3.800 5.200-5.300 8-5.300s5.500 1.500 8 5.300c-2.500 3.800-5.200 5.300-8 5.300s-5.500-1.500-8-5.300z" fill="#9b9b9b"/><circle cx="87" cy="693" r="3.300" fill="#f1f1f1"/><circle cx="87" cy="693" r="1.900" fill="#9b9b9b"/><defs><linearGradient id="bg103.5_693" x1="0" y1="0" x2="1" y2="0"><stop offset="0" stop-color="#f4f5f8"/><stop offset="1" stop-color="#aeb4c4"/></linearGradient></defs><rect x="104.1" y="685.7" width="15.300" height="14.800" rx="3.800" fill="#fafafa" stroke="#444" stroke-width="1"/><path d="M108.5 690.5h10.400v6c0 2.500-1.500 3.500-3.500 3.500h-6.900z" fill="url(#bg103.5_693)"/><path d="M79 717c2.500-3.800 5.200-5.300 8-5.300s5.500 1.500 8 5.300c-2.500 3.800-5.200 5.300-8 5.300s-5.500-1.500-8-5.300z" fill="#9b9b9b"/><circle cx="87" cy="717" r="3.300" fill="#f1f1f1"/><circle cx="87" cy="717" r="1.900" fill="#9b9b9b"/><defs><linearGradient id="bg103.5_717" x1="0" y1="0" x2="1" y2="0"><stop offset="0" stop-color="#f4f5f8"/><stop offset="1" stop-color="#aeb4c4"/></linearGradient></defs><rect x="104.1" y="709.7" width="15.300" height="14.800" rx="3.800" fill="#fafafa" stroke="#444" stroke-width="1"/><path d="M108.5 714.5h10.400v6c0 2.500-1.500 3.500-3.500 3.500h-6.900z" fill="url(#bg103.5_717)"/><path d="M79 741c2.500-3.800 5.200-5.300 8-5.300s5.500 1.500 8 5.300c-2.500 3.800-5.200 5.300-8 5.300s-5.500-1.500-8-5.300z" fill="#9b9b9b"/><circle cx="87" cy="741" r="3.300" fill="#f1f1f1"/><circle cx="87" cy="741" r="1.900" fill="#9b9b9b"/><defs><linearGradient id="bg103.5_741" x1="0" y1="0" x2="1" y2="0"><stop offset="0" stop-color="#f4f5f8"/><stop offset="1" stop-color="#aeb4c4"/></linearGradient></defs><rect x="104.1" y="733.7" width="15.300" height="14.800" rx="3.800" fill="#fafafa" stroke="#444" stroke-width="1"/><path d="M108.5 738.5h10.400v6c0 2.500-1.500 3.500-3.500 3.500h-6.900z" fill="url(#bg103.5_741)"/><path d="M79 765c2.500-3.800 5.200-5.300 8-5.300s5.500 1.500 8 5.300c-2.500 3.800-5.200 5.300-8 5.300s-5.500-1.500-8-5.300z" fill="#9b9b9b"/><circle cx="87" cy="765" r="3.300" fill="#f1f1f1"/><circle cx="87" cy="765" r="1.900" fill="#9b9b9b"/><defs><linearGradient id="bg103.5_765" x1="0" y1="0" x2="1" y2="0"><stop offset="0" stop-color="#f4f5f8"/><stop offset="1" stop-color="#aeb4c4"/></linearGradient></defs><rect x="104.1" y="757.7" width="15.300" height="14.800" rx="3.800" fill="#fafafa" stroke="#444" stroke-width="1"/><path d="M108.5 762.5h10.400v6c0 2.500-1.500 3.500-3.500 3.500h-6.900z" fill="url(#bg103.5_765)"/><path d="M79 789c2.500-3.800 5.200-5.300 8-5.300s5.500 1.500 8 5.300c-2.500 3.800-5.200 5.300-8 5.300s-5.500-1.500-8-5.300z" fill="#9b9b9b"/><circle cx="87" cy="789" r="3.300" fill="#f1f1f1"/><circle cx="87" cy="789" r="1.900" fill="#9b9b9b"/><defs><linearGradient id="bg103.5_789" x1="0" y1="0" x2="1" y2="0"><stop offset="0" stop-color="#f4f5f8"/><stop offset="1" stop-color="#aeb4c4"/></linearGradient></defs><rect x="104.1" y="781.7" width="15.300" height="14.800" rx="3.800" fill="#fafafa" stroke="#444" stroke-width="1"/><path d="M108.5 786.5h10.400v6c0 2.500-1.500 3.500-3.500 3.500h-6.900z" fill="url(#bg103.5_789)"/><path d="M79 813c2.500-3.800 5.200-5.300 8-5.300s5.500 1.500 8 5.300c-2.500 3.800-5.200 5.300-8 5.300s-5.500-1.500-8-5.300z" fill="#9b9b9b"/><circle cx="87" cy="813" r="3.300" fill="#f1f1f1"/><circle cx="87" cy="813" r="1.900" fill="#9b9b9b"/><defs><linearGradient id="bg103.5_813" x1="0" y1="0" x2="1" y2="0"><stop offset="0" stop-color="#f4f5f8"/><stop offset="1" stop-color="#aeb4c4"/></linearGradient></defs><rect x="104.1" y="805.7" width="15.300" height="14.800" rx="3.800" fill="#fafafa" stroke="#444" stroke-width="1"/><path d="M108.5 810.5h10.400v6c0 2.500-1.500 3.500-3.500 3.500h-6.900z" fill="url(#bg103.5_813)"/><path d="M79 837c2.500-3.800 5.200-5.300 8-5.300s5.500 1.500 8 5.300c-2.500 3.800-5.200 5.300-8 5.300s-5.500-1.500-8-5.300z" fill="#9b9b9b"/><circle cx="87" cy="837" r="3.300" fill="#f1f1f1"/><circle cx="87" cy="837" r="1.900" fill="#9b9b9b"/><defs><linearGradient id="bg103.5_837" x1="0" y1="0" x2="1" y2="0"><stop offset="0" stop-color="#f4f5f8"/><stop offset="1" stop-color="#aeb4c4"/></linearGradient></defs><rect x="104.1" y="829.7" width="15.300" height="14.800" rx="3.800" fill="#fafafa" stroke="#444" stroke-width="1"/><path d="M108.5 834.5h10.400v6c0 2.500-1.500 3.500-3.500 3.500h-6.900z" fill="url(#bg103.5_837)"/><path d="M40.5 855l8.500 6-8.500 6z" fill="#fff" stroke="#333" stroke-width="1.200" stroke-linejoin="round"/><path d="M61 861c2.500-3.800 5.200-5.300 8-5.300s5.500 1.500 8 5.300c-2.500 3.800-5.200 5.300-8 5.300s-5.500-1.500-8-5.300z" fill="#9b9b9b"/><circle cx="69" cy="861" r="3.300" fill="#f1f1f1"/><circle cx="69" cy="861" r="1.900" fill="#9b9b9b"/><path d="M86 854.5h6.500l1.500 2.200h8v10.800h-16z" fill="#9a9a9a"/><path d="M86 857.7h16" stroke="#c4c4c4" stroke-width="0.800"/><path d="M61 889.5h9.500l3-2.500v2.500l-3 2.700h-9.500z" fill="#b8b8b8"/><path d="M61 879.5h9.500v10.500h-9.500z" fill="#5aa4e0"/><path d="M61 879.5l3-2.500h9.500l-3 2.500z" fill="#8fcbf5"/><path d="M70.5 879.5l3-2.500v10l-3 3z" fill="#3d86c6"/><path d="M76 889.5v-11.500" stroke="#222" stroke-width="1"/><path d="M74.5 880l1.500-3.500 1.500 3.500z" fill="#222"/><path d="M61 913.5h9.500l3-2.500v2.500l-3 2.700h-9.500z" fill="#b8b8b8"/><path d="M61 903.5h9.500v10.500h-9.500z" fill="#5aa4e0"/><path d="M61 903.5l3-2.500h9.500l-3 2.500z" fill="#8fcbf5"/><path d="M70.5 903.5l3-2.500v10l-3 3z" fill="#3d86c6"/><path d="M76 913.5v-11.500" stroke="#222" stroke-width="1"/><path d="M74.5 904l1.500-3.500 1.500 3.500z" fill="#222"/><path d="M61 937.5h9.500l3-2.500v2.500l-3 2.700h-9.500z" fill="#b8b8b8"/><path d="M61 927.5h9.500v10.500h-9.500z" fill="#5aa4e0"/><path d="M61 927.5l3-2.500h9.500l-3 2.500z" fill="#8fcbf5"/><path d="M70.5 927.5l3-2.500v10l-3 3z" fill="#3d86c6"/><path d="M76 937.5v-11.500" stroke="#222" stroke-width="1"/><path d="M74.5 928l1.500-3.500 1.500 3.500z" fill="#222"/><path d="M61 961.5h9.500l3-2.500v2.500l-3 2.700h-9.500z" fill="#b8b8b8"/><path d="M61 951.5h9.500v10.500h-9.500z" fill="#5aa4e0"/><path d="M61 951.5l3-2.500h9.500l-3 2.500z" fill="#8fcbf5"/><path d="M70.5 951.5l3-2.500v10l-3 3z" fill="#3d86c6"/><path d="M76 961.5v-11.500" stroke="#222" stroke-width="1"/><path d="M74.5 952l1.500-3.500 1.500 3.500z" fill="#222"/><path d="M61 985.5h9.500l3-2.500v2.500l-3 2.700h-9.500z" fill="#b8b8b8"/><path d="M61 975.5h9.500v10.500h-9.500z" fill="#5aa4e0"/><path d="M61 975.5l3-2.500h9.500l-3 2.500z" fill="#8fcbf5"/><path d="M70.5 975.5l3-2.500v10l-3 3z" fill="#3d86c6"/><path d="M76 985.5v-11.500" stroke="#222" stroke-width="1"/><path d="M74.5 976l1.500-3.500 1.500 3.500z" fill="#222"/><circle cx="287.500" cy="1031.300" r="4.600" fill="#222"/><path d="M284.800 1031.300h5.400M287.500 1028.600v5.400" stroke="#f1f1f1" stroke-width="1.300"/><path d="M299.500 1026.500v10" stroke="#444" stroke-width="1"/><path d="M301.500 1028v8" stroke="#999" stroke-width="1"/></svg>
<div class="b" style="left:841px;top:1021px;width:237px;height:23px;background:#f1f1f1;"></div>
<svg class="b" style="left:841px;top:1021px;" width="237" height="23" viewBox="841 1021 237 23"><path d="M852 1025v13M845.500 1032.500c0-2 3-3 6.500-3s6.500 1 6.500 3-3 3-6.500 3" fill="none" stroke="#333" stroke-width="1.200"/><path d="M852 1023.500l2.300 3h-4.600zM852 1040l2.300-3h-4.600zM845 1035l4.500-1.500-.5 4z" fill="#333"/><path d="M865 1030.5h5l-2.500 3.500z" fill="#333"/><rect x="878.500" y="1029.500" width="13" height="9" fill="none" stroke="#333" stroke-width="1.200"/><rect x="881.500" y="1032.500" width="7" height="3.500" fill="#bbb" stroke="#333" stroke-width="0.800"/><path d="M879 1029l4-3.500M886 1029l4-3.500" stroke="#333" stroke-width="1"/><path d="M906.500 1037.500c-1.500-2-2.500-4-3.500-5.500 1-1 2-.500 3 1v-6.500c0-1.300 1.800-1.300 1.800 0v-1.500c0-1.300 1.800-1.300 1.800 0v1c0-1.300 1.800-1.300 1.800 0v1.500c0-1.300 1.800-1.300 1.800 0v7c0 2-1 3.500-1.500 4.500h-6z" fill="#fff" stroke="#333" stroke-width="1"/><path d="M908.300 1027v4.500M910.100 1026v5.500M911.900 1027v4.500" stroke="#333" stroke-width="0.700"/><circle cx="934.500" cy="1032" r="4.300" fill="#dfe9f2" stroke="#333" stroke-width="1.300"/><path d="M937.800 1035.300l4 4" stroke="#333" stroke-width="2"/><path d="M939.500 1027.500h4M941.500 1025.500v4M939.500 1031h4" stroke="#333" stroke-width="0.900"/><rect x="956" y="1025" width="13" height="13" fill="none" stroke="#333" stroke-width="1" stroke-dasharray="3 1.500"/><circle cx="962.500" cy="1031" r="5" fill="#e8eef4" stroke="#333" stroke-width="1.300"/><path d="M966 1035l4.500 4.500" stroke="#333" stroke-width="2.200"/><path d="M976 1030.5h5l-2.500 3.500z" fill="#333"/><rect x="988.500" y="1025.500" width="15" height="10.500" fill="#6fb1e4" stroke="#333" stroke-width="1.200"/><rect x="991" y="1028" width="10" height="5.500" fill="#a9d4f5"/><path d="M996 1036v2.500M992 1039h8" stroke="#333" stroke-width="1.300"/><path d="M1006 1030.5h5l-2.500 3.500z" fill="#333"/><rect x="1019.500" y="1025.500" width="14" height="13" fill="#ddd" stroke="#333" stroke-width="1"/><path d="M1023 1025.500v13M1026.500 1025.500v13M1030 1025.500v13M1019.500 1028.800h14M1019.500 1032h14M1019.500 1035.300h14" stroke="#333" stroke-width="0.800"/><path d="M1037 1030.5h5l-2.500 3.500z" fill="#333"/><rect x="1050.500" y="1025.500" width="14" height="12.500" fill="#6fb1e4" stroke="#333" stroke-width="1.100"/><path d="M1057.500 1025.500v12.500M1050.500 1031.800h14" stroke="#f1f1f1" stroke-width="1.600"/><path d="M1057.500 1025.500v12.500M1050.500 1031.800h14" stroke="#333" stroke-width="0.600"/><path d="M1068 1030.5h5l-2.500 3.500z" fill="#333"/></svg>
<div class="b" style="left:0px;top:1048px;width:1920px;height:8px;background:#111;"></div>
<div class="b" style="left:48px;top:1048px;width:344px;height:8px;background:#f3f3f3;border-top:1px solid #bdbdbd;box-sizing:border-box;"></div>
<div class="b" style="left:736px;top:1048px;width:48px;height:8px;background:#a0521a;"></div>
<div class="b" style="left:784px;top:1048px;width:48px;height:8px;background:#3a3a3a;"></div>
<div class="b" style="left:1915px;top:1048px;width:1px;height:8px;background:#666;"></div>
<div class="b" style="left:1822px;top:1054px;width:5px;height:2px;background:#fff;"></div>
<div class="b" style="left:1830px;top:1054px;width:12px;height:2px;background:#fff;"></div>
</body></html>
